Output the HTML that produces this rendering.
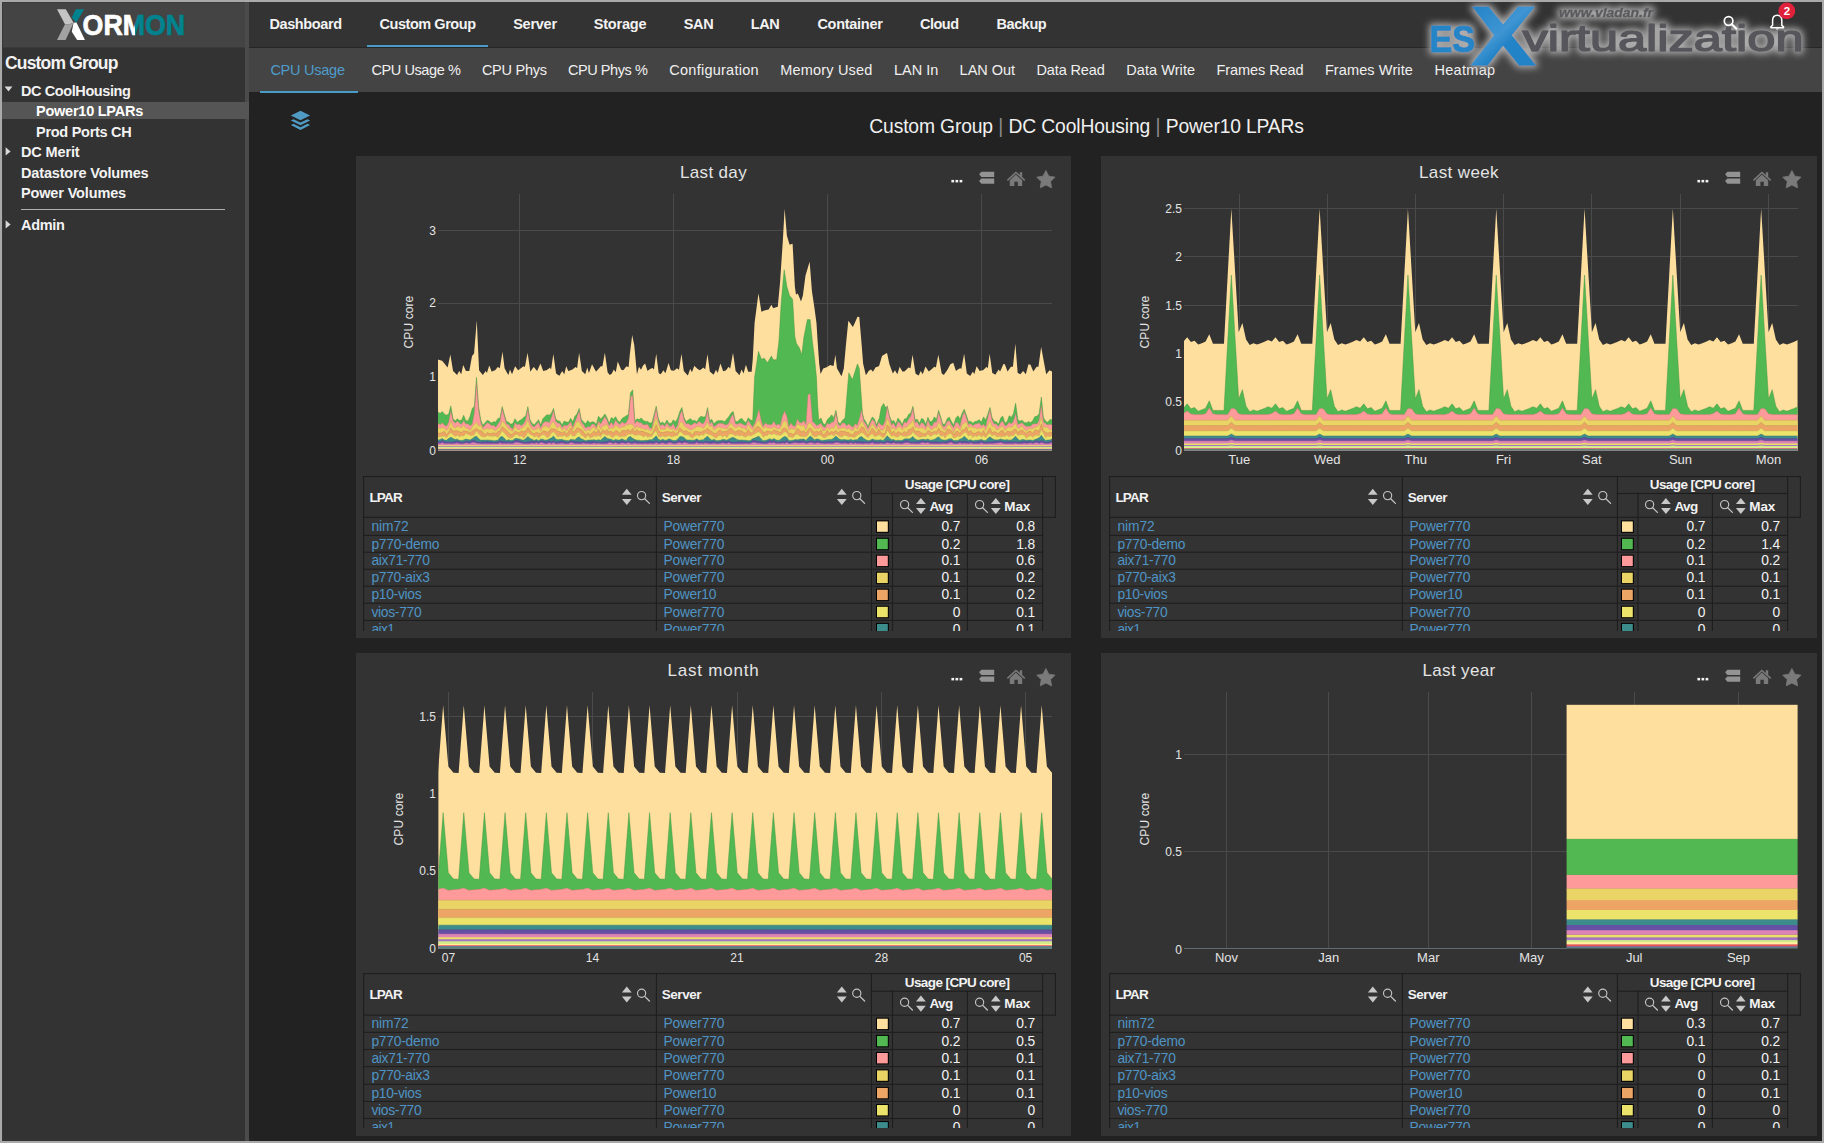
<!DOCTYPE html>
<html><head><meta charset="utf-8"><title>XorMon</title>
<style>
html,body{margin:0;padding:0;background:#222;}
body{width:1824px;height:1143px;position:relative;overflow:hidden;font-family:"Liberation Sans",sans-serif;}
.t{position:absolute;white-space:nowrap;margin:0;padding:0;}
.b{position:absolute;}
svg{position:absolute;left:0;top:0;overflow:visible;}
</style></head><body>
<div class="b" style="left:0px;top:0px;width:1824px;height:1143px;background:#a9a9a9;"></div>
<div class="b" style="left:2px;top:2px;width:1820px;height:1139px;background:#222;"></div>
<div class="b" style="left:2px;top:2px;width:243px;height:1139px;background:#333;"></div>
<div class="b" style="left:2px;top:2px;width:243px;height:45px;background:#444;"></div>
<div class="b" style="left:2px;top:47px;width:243px;height:1px;background:#3a3a3a;"></div>
<div class="b" style="left:2px;top:2px;width:1px;height:1139px;background:#383838;"></div>
<div class="b" style="left:2px;top:2px;width:243px;height:1px;background:#3c3c3c;"></div>
<div class="b" style="left:245px;top:2px;width:4px;height:1139px;background:#4b4b4b;"></div>
<div class="b" style="left:249px;top:2px;width:1573px;height:45px;background:#333;"></div>
<div class="b" style="left:249px;top:47px;width:1573px;height:1px;background:#262626;"></div>
<div class="b" style="left:249px;top:48px;width:1573px;height:44.4px;background:#444;"></div>
<div class="b" style="left:2px;top:102px;width:247px;height:17px;background:#555;"></div>
<div class="b" style="left:21px;top:209px;width:204px;height:1px;background:#b0b0b0;"></div>
<span class="t" style="left:5.00px;top:52.74px;font-size:17.5px;line-height:21px;color:#f2f2f2;font-weight:bold;letter-spacing:-0.833px;">Custom Group</span>
<span class="t" style="left:21.00px;top:83.18px;font-size:14.5px;line-height:17px;color:#f2f2f2;font-weight:bold;letter-spacing:-0.406px;">DC CoolHousing</span>
<span class="t" style="left:36.00px;top:103.08px;font-size:14.5px;line-height:17px;color:#fff;font-weight:bold;letter-spacing:-0.241px;">Power10 LPARs</span>
<span class="t" style="left:36.00px;top:123.78px;font-size:14.5px;line-height:17px;color:#f2f2f2;font-weight:bold;letter-spacing:-0.277px;">Prod Ports CH</span>
<span class="t" style="left:21.00px;top:143.98px;font-size:14.5px;line-height:17px;color:#f2f2f2;font-weight:bold;letter-spacing:-0.139px;">DC Merit</span>
<span class="t" style="left:21.00px;top:164.98px;font-size:14.5px;line-height:17px;color:#f2f2f2;font-weight:bold;letter-spacing:-0.163px;">Datastore Volumes</span>
<span class="t" style="left:21.00px;top:184.98px;font-size:14.5px;line-height:17px;color:#f2f2f2;font-weight:bold;letter-spacing:-0.146px;">Power Volumes</span>
<span class="t" style="left:21.00px;top:216.98px;font-size:14.5px;line-height:17px;color:#f2f2f2;font-weight:bold;letter-spacing:-0.321px;">Admin</span>
<svg width="1824" height="1143"><g fill="#d8d8d8"><path d="M4.6 86.4 L12.4 86.4 L8.5 91.6 Z"/><path d="M5.6 147.2 L10.6 151.4 L5.6 155.6 Z"/><path d="M5.6 220.2 L10.6 224.4 L5.6 228.6 Z"/></g></svg>
<span class="t" style="left:269.40px;top:16.18px;font-size:14.5px;line-height:17px;color:#f2f2f2;font-weight:bold;letter-spacing:-0.393px;">Dashboard</span>
<span class="t" style="left:379.50px;top:16.18px;font-size:14.5px;line-height:17px;color:#f2f2f2;font-weight:bold;letter-spacing:-0.450px;">Custom Group</span>
<span class="t" style="left:513.20px;top:16.18px;font-size:14.5px;line-height:17px;color:#f2f2f2;font-weight:bold;letter-spacing:-0.258px;">Server</span>
<span class="t" style="left:593.80px;top:16.18px;font-size:14.5px;line-height:17px;color:#f2f2f2;font-weight:bold;letter-spacing:-0.213px;">Storage</span>
<span class="t" style="left:683.80px;top:16.18px;font-size:14.5px;line-height:17px;color:#f2f2f2;font-weight:bold;letter-spacing:-0.372px;">SAN</span>
<span class="t" style="left:750.80px;top:16.18px;font-size:14.5px;line-height:17px;color:#f2f2f2;font-weight:bold;letter-spacing:-0.400px;">LAN</span>
<span class="t" style="left:817.40px;top:16.18px;font-size:14.5px;line-height:17px;color:#f2f2f2;font-weight:bold;letter-spacing:-0.275px;">Container</span>
<span class="t" style="left:920.10px;top:16.18px;font-size:14.5px;line-height:17px;color:#f2f2f2;font-weight:bold;letter-spacing:-0.534px;">Cloud</span>
<span class="t" style="left:996.50px;top:16.18px;font-size:14.5px;line-height:17px;color:#f2f2f2;font-weight:bold;letter-spacing:-0.447px;">Backup</span>
<div class="b" style="left:367px;top:45px;width:121px;height:2px;background:#4b9bc8;"></div>
<span class="t" style="left:270.40px;top:62.18px;font-size:14.5px;line-height:17px;color:#4f9ccb;letter-spacing:-0.251px;">CPU Usage</span>
<span class="t" style="left:371.40px;top:62.18px;font-size:14.5px;line-height:17px;color:#f0f0f0;letter-spacing:-0.398px;">CPU Usage %</span>
<span class="t" style="left:481.90px;top:62.18px;font-size:14.5px;line-height:17px;color:#f0f0f0;letter-spacing:-0.248px;">CPU Phys</span>
<span class="t" style="left:567.90px;top:62.18px;font-size:14.5px;line-height:17px;color:#f0f0f0;letter-spacing:-0.420px;">CPU Phys %</span>
<span class="t" style="left:669.30px;top:62.18px;font-size:14.5px;line-height:17px;color:#f0f0f0;letter-spacing:0.250px;">Configuration</span>
<span class="t" style="left:780.20px;top:62.18px;font-size:14.5px;line-height:17px;color:#f0f0f0;letter-spacing:0.187px;">Memory Used</span>
<span class="t" style="left:894.00px;top:62.18px;font-size:14.5px;line-height:17px;color:#f0f0f0;letter-spacing:-0.022px;">LAN In</span>
<span class="t" style="left:959.60px;top:62.18px;font-size:14.5px;line-height:17px;color:#f0f0f0;letter-spacing:-0.015px;">LAN Out</span>
<span class="t" style="left:1036.50px;top:62.18px;font-size:14.5px;line-height:17px;color:#f0f0f0;letter-spacing:-0.136px;">Data Read</span>
<span class="t" style="left:1126.30px;top:62.18px;font-size:14.5px;line-height:17px;color:#f0f0f0;letter-spacing:0.058px;">Data Write</span>
<span class="t" style="left:1216.50px;top:62.18px;font-size:14.5px;line-height:17px;color:#f0f0f0;letter-spacing:-0.076px;">Frames Read</span>
<span class="t" style="left:1324.90px;top:62.18px;font-size:14.5px;line-height:17px;color:#f0f0f0;letter-spacing:0.113px;">Frames Write</span>
<span class="t" style="left:1434.40px;top:62.18px;font-size:14.5px;line-height:17px;color:#f0f0f0;letter-spacing:0.309px;">Heatmap</span>
<div class="b" style="left:260px;top:91px;width:98px;height:2px;background:#4b9bc8;"></div>
<span class="t" style="left:869.30px;top:114.61px;font-size:19.3px;line-height:23px;color:#f0f0f0;letter-spacing:-0.147px;">Custom Group</span>
<span class="t" style="left:993.04px;top:114.61px;font-size:19.3px;line-height:23px;color:#888;letter-spacing:-0.075px;"> </span>
<span class="t" style="left:998.32px;top:114.61px;font-size:19.3px;line-height:23px;color:#8a8a8a;letter-spacing:-0.070px;">|</span>
<span class="t" style="left:1003.27px;top:114.61px;font-size:19.3px;line-height:23px;color:#888;letter-spacing:-0.075px;"> </span>
<span class="t" style="left:1008.55px;top:114.61px;font-size:19.3px;line-height:23px;color:#f0f0f0;letter-spacing:-0.144px;">DC CoolHousing</span>
<span class="t" style="left:1150.28px;top:114.61px;font-size:19.3px;line-height:23px;color:#888;letter-spacing:-0.075px;"> </span>
<span class="t" style="left:1155.56px;top:114.61px;font-size:19.3px;line-height:23px;color:#8a8a8a;letter-spacing:-0.070px;">|</span>
<span class="t" style="left:1160.51px;top:114.61px;font-size:19.3px;line-height:23px;color:#888;letter-spacing:-0.075px;"> </span>
<span class="t" style="left:1165.79px;top:114.61px;font-size:19.3px;line-height:23px;color:#f0f0f0;letter-spacing:-0.152px;">Power10 LPARs</span>
<svg width="1824" height="1143"><polygon fill="#c4c4c4" points="56.99,9.24 65.79,9.24 73.60,22.72 69.33,24.37 64.97,24.20"/><polygon fill="#a2a2a2" points="64.97,24.20 69.33,24.37 73.60,22.72 65.62,39.99 56.99,39.99"/><polygon fill="#00838f" points="75.90,9.24 84.13,9.24 76.15,22.72 71.79,17.62"/><polygon fill="#ffffff" points="73.60,22.72 76.48,22.56 84.95,39.99 77.14,39.99 71.79,31.77"/><defs><clipPath id="cw"><polygon points="80,0 134.2,0 135.6,46 80,46"/></clipPath><clipPath id="ct"><polygon points="134.2,0 190,0 190,46 135.6,46"/></clipPath></defs><text x="82.6" y="35.2" font-family="Liberation Sans, sans-serif" font-weight="bold" font-size="30" textLength="102.6" lengthAdjust="spacingAndGlyphs" fill="#ffffff" stroke="#ffffff" stroke-width="0.7" clip-path="url(#cw)">ORMON</text><text x="82.6" y="35.2" font-family="Liberation Sans, sans-serif" font-weight="bold" font-size="30" textLength="102.6" lengthAdjust="spacingAndGlyphs" fill="#00838f" stroke="#00838f" stroke-width="0.7" clip-path="url(#ct)">ORMON</text></svg>
<svg width="1824" height="1143"><g fill="#509bc4"><polygon points="300.48,110.85 310.10,115.58 300.48,120.30 290.85,115.58"/><polygon points="290.85,120.48 293.48,119.18 300.48,122.58 307.48,119.18 310.10,120.48 300.48,125.20"/><polygon points="290.85,125.03 293.48,123.73 300.48,127.13 307.48,123.73 310.10,125.03 300.48,129.93"/></g></svg>
<svg width="1824" height="1143" style="z-index:5"><circle cx="1728.6" cy="21" r="4.3" fill="none" stroke="#fff" stroke-width="1.7"/><path d="M1731.8 24.2 L1736.4 28.8" stroke="#fff" stroke-width="2" stroke-linecap="round"/><path d="M1777.2 15.2 c-3.4 0 -4.6 2.8 -4.6 5.4 v4.6 l-1.7 1.7 v0.9 h12.6 v-0.9 l-1.7 -1.7 v-4.6 c0 -2.6 -1.2 -5.4 -4.6 -5.4 z" fill="none" stroke="#fff" stroke-width="1.5" stroke-linejoin="round"/><path d="M1775.6 28.6 a1.7 1.7 0 0 0 3.2 0 z" fill="#fff"/><circle cx="1786.8" cy="10.9" r="8.4" fill="#e0213c"/></svg>
<span class="t" style="left:1783.70px;top:4.02px;font-size:11.5px;line-height:14px;color:#fff;font-weight:bold;z-index:6;">2</span>
<div class="b" style="left:356px;top:156px;width:715px;height:482px;background:#333;"></div>
<div class="b" style="left:1101px;top:156px;width:716px;height:482px;background:#333;"></div>
<div class="b" style="left:356px;top:653px;width:715px;height:483px;background:#333;"></div>
<div class="b" style="left:1101px;top:653px;width:716px;height:483px;background:#333;"></div>
<svg width="1824" height="1143"><g stroke="#4a4a4a" stroke-width="1" shape-rendering="crispEdges"><line x1="519.7" y1="194" x2="519.7" y2="450.2"/><line x1="673.4" y1="194" x2="673.4" y2="450.2"/><line x1="827.5" y1="194" x2="827.5" y2="450.2"/><line x1="981.6" y1="194" x2="981.6" y2="450.2"/><line x1="438" y1="377.3" x2="1052" y2="377.3"/><line x1="438" y1="303.3" x2="1052" y2="303.3"/><line x1="438" y1="230.4" x2="1052" y2="230.4"/></g><polygon fill="#ffdf9e" points="438.00,450.3 438.00,359.49 440.14,360.18 442.20,360.84 442.28,360.94 444.42,363.60 446.56,366.26 447.62,367.58 448.70,362.39 450.34,354.52 450.84,357.55 452.98,370.55 453.05,370.96 455.11,373.01 457.11,375.00 457.25,374.74 459.15,370.96 459.39,371.36 461.18,374.33 461.53,372.72 463.22,364.90 463.67,365.90 465.81,370.70 465.93,370.96 467.95,370.96 469.32,370.94 470.09,366.72 472.03,356.11 472.23,355.85 474.06,353.42 474.37,349.66 476.51,323.57 476.77,320.40 478.65,361.01 479.08,370.29 480.79,372.41 482.87,375.00 482.93,374.92 485.07,371.73 485.59,370.96 486.94,372.98 487.21,372.12 489.25,365.57 489.34,365.79 491.48,371.12 491.69,371.63 493.62,370.86 495.08,370.28 495.76,369.43 497.79,366.91 497.90,366.98 499.82,368.26 500.04,366.93 502.18,353.94 502.53,351.81 504.32,366.27 504.57,368.27 506.46,371.63 508.36,375.00 508.60,374.22 509.99,369.61 510.74,371.35 512.02,374.32 512.88,372.11 515.02,366.55 515.14,366.24 517.16,368.98 518.12,370.28 519.30,369.41 521.44,367.81 523.55,366.24 523.57,366.25 524.90,366.91 525.71,362.69 527.61,352.76 527.85,354.39 529.99,369.30 530.33,371.63 532.13,369.12 533.71,366.92 534.27,367.57 536.41,370.13 537.10,370.95 538.55,367.79 540.49,363.54 540.69,364.07 542.83,369.93 543.20,370.94 544.97,370.61 546.59,370.28 547.11,369.87 549.25,368.17 549.98,367.59 551.07,369.60 551.39,367.44 553.37,354.11 553.53,355.22 555.67,370.67 556.08,373.62 557.80,374.68 559.47,375.68 559.94,374.87 562.08,371.14 562.19,370.97 564.22,374.33 566.25,366.25 566.36,366.48 568.29,370.96 568.50,370.89 570.64,370.18 572.35,369.61 572.78,369.27 574.92,367.57 575.74,366.91 577.06,368.22 577.10,368.25 579.13,352.76 579.20,353.20 581.34,367.57 581.84,370.93 583.48,372.59 585.23,374.33 585.62,373.05 587.27,367.60 587.76,369.22 588.89,372.97 589.90,370.15 592.01,364.22 592.03,364.24 594.17,368.15 596.08,371.63 596.31,371.37 598.45,368.94 600.59,366.50 600.82,366.24 602.45,366.24 602.73,364.69 604.87,352.86 604.89,352.75 607.01,368.03 607.60,372.29 609.15,374.36 609.64,375.00 611.29,373.91 611.67,373.66 613.43,370.15 613.70,369.62 615.57,372.09 615.74,372.29 617.71,361.84 617.77,361.52 619.85,366.48 621.16,369.61 621.99,369.88 623.19,370.28 624.13,369.17 626.26,366.62 626.58,366.24 627.87,367.10 628.40,366.96 628.62,366.88 629.77,354.64 630.54,348.45 632.21,335.04 632.68,337.38 634.25,345.24 634.82,351.36 636.01,364.14 636.96,374.26 638.99,366.84 639.10,366.98 641.03,369.80 641.24,369.35 643.06,365.48 643.38,365.16 645.10,363.45 645.52,364.73 647.54,370.89 647.66,370.81 649.80,369.35 650.53,368.86 651.94,368.20 652.56,367.91 653.92,369.51 654.08,368.41 656.22,353.73 658.36,370.52 658.67,372.92 660.49,374.13 660.70,374.27 662.63,371.38 663.41,370.22 664.77,372.29 665.45,373.32 666.91,368.51 668.57,363.04 669.05,364.54 670.88,370.21 671.19,370.29 673.33,370.82 673.59,370.89 675.47,369.39 676.98,368.18 677.61,368.68 679.02,369.77 679.75,364.96 681.46,353.73 681.89,356.93 683.76,370.86 684.03,371.20 686.17,373.69 687.83,375.62 688.31,374.30 690.28,368.87 690.45,369.22 691.90,372.23 692.59,370.41 694.35,365.75 694.72,366.14 696.86,368.37 697.33,368.86 699.00,369.69 700.04,370.21 701.14,369.34 703.28,367.63 703.44,367.51 705.20,369.53 705.42,368.04 707.51,354.01 707.56,354.40 709.70,370.71 709.81,371.55 711.84,373.23 713.61,374.68 713.98,373.94 716.05,369.81 716.12,369.93 717.68,372.92 718.26,370.89 720.39,363.46 720.40,363.47 722.54,369.55 723.11,371.16 724.68,370.84 725.82,370.62 726.82,369.22 728.53,366.83 728.95,367.35 730.16,368.86 731.09,363.57 733.01,352.63 733.23,354.18 735.37,369.34 735.59,370.89 737.51,373.08 739.39,375.21 739.65,374.57 741.69,369.54 741.79,369.76 743.46,373.58 743.93,371.89 745.90,364.80 746.07,365.30 748.21,371.79 750.35,371.79 751.62,371.79 752.49,362.25 752.76,359.27 754.58,322.99 754.63,322.61 756.77,306.29 758.45,293.51 758.91,296.33 761.05,309.46 761.41,311.65 763.18,310.92 764.14,310.52 765.32,310.22 767.46,309.69 767.55,309.67 768.69,309.38 769.60,307.87 771.42,304.84 771.74,305.44 773.24,308.25 773.88,308.03 776.02,307.28 776.65,307.06 777.79,306.66 778.16,302.70 778.93,294.41 780.07,282.13 780.30,278.69 781.21,265.08 782.44,246.68 782.80,241.29 784.16,217.06 784.58,209.57 784.62,208.86 786.72,233.57 786.90,235.65 788.86,242.16 789.63,244.71 791.00,244.18 792.59,243.66 793.14,254.08 794.86,286.67 795.28,289.61 796.00,294.63 796.45,294.35 797.41,293.75 797.82,293.50 799.41,297.46 799.55,297.81 801.01,301.43 801.69,299.31 802.83,295.74 803.83,288.26 803.96,287.29 805.56,275.34 805.97,273.97 807.38,269.29 808.11,266.86 809.65,261.74 810.11,267.64 810.25,269.45 811.93,291.23 812.39,294.29 814.53,308.51 814.66,309.38 816.48,322.99 816.67,326.00 817.62,341.16 818.76,357.40 818.81,358.11 819.21,363.81 820.58,374.05 820.95,373.28 823.09,368.84 823.31,368.38 825.23,367.74 826.72,367.25 827.37,366.82 829.51,365.39 830.14,364.98 831.64,365.48 833.55,366.11 833.78,364.68 835.37,354.77 835.92,359.46 836.96,368.35 838.06,370.29 840.20,374.03 841.52,376.31 842.34,373.45 843.79,368.39 844.48,360.83 844.93,355.90 846.07,343.39 846.52,338.91 846.62,337.91 848.34,320.76 848.76,321.31 848.80,321.37 850.90,324.30 852.44,326.45 852.89,327.08 853.04,326.76 855.18,321.96 857.32,317.16 857.45,316.87 859.27,316.90 859.46,319.12 861.54,343.39 861.60,344.15 862.45,355.05 863.14,363.86 863.74,366.35 865.87,375.19 868.01,371.90 868.83,370.65 870.15,369.99 871.10,369.52 872.29,371.00 872.92,371.78 874.43,369.28 875.65,367.25 876.57,366.94 878.71,366.23 879.07,366.10 880.85,359.96 881.34,358.27 882.03,355.90 882.99,355.33 883.62,354.96 885.13,354.07 887.03,352.95 887.27,354.09 889.31,363.85 889.41,364.12 891.55,369.95 891.58,370.03 892.89,373.59 893.69,372.26 894.92,370.21 895.83,371.72 897.36,374.26 897.97,372.31 899.67,366.83 900.10,367.58 902.24,371.32 902.38,371.56 904.38,371.56 904.42,371.56 906.52,369.47 908.49,367.51 908.66,367.56 910.52,368.18 910.80,366.33 912.56,354.68 912.94,357.09 915.08,370.67 915.54,373.59 917.22,374.69 918.66,375.62 919.36,373.99 920.69,370.90 921.50,372.23 922.73,374.27 923.64,371.68 925.44,366.56 925.78,367.06 927.92,370.22 928.83,371.56 930.06,370.49 932.20,368.63 934.26,366.83 934.33,366.86 935.89,367.49 936.47,364.44 938.33,354.66 938.61,356.22 940.75,368.18 941.72,373.59 942.89,374.37 943.75,374.94 945.03,373.17 947.15,370.20 947.17,370.17 949.31,366.33 950.54,364.12 951.45,363.67 953.25,362.77 953.59,363.79 955.73,370.19 955.96,370.88 957.87,369.62 960.01,368.20 960.03,368.18 961.39,368.85 962.15,364.61 964.10,353.72 964.29,355.08 966.43,370.77 966.81,373.56 968.56,374.78 970.21,375.89 970.70,375.11 972.84,371.69 972.92,371.57 974.28,374.25 974.98,371.79 976.58,366.16 977.12,366.97 979.26,370.22 979.70,370.89 981.40,370.55 983.09,370.21 983.54,369.77 985.68,367.63 986.48,366.83 987.82,368.16 987.84,368.18 989.60,353.74 989.96,356.23 992.10,371.38 992.32,372.92 994.24,374.05 995.30,374.67 996.38,373.04 998.52,369.80 998.69,369.54 1000.05,371.56 1000.66,370.22 1002.79,365.55 1003.44,364.12 1004.80,364.13 1004.93,364.49 1007.07,370.36 1007.51,371.56 1009.21,369.19 1010.90,366.83 1011.35,366.83 1012.94,366.79 1013.49,361.61 1015.38,343.87 1015.63,347.02 1017.68,372.88 1017.77,372.96 1019.91,374.03 1020.40,374.26 1022.05,372.21 1023.11,370.89 1024.19,372.24 1025.82,374.27 1026.33,372.37 1028.47,364.37 1028.53,364.14 1030.57,364.80 1030.61,364.90 1032.75,370.24 1033.28,371.56 1034.89,369.32 1036.67,366.83 1037.02,366.83 1038.44,366.81 1039.16,361.53 1041.15,346.94 1041.30,347.76 1043.44,359.41 1045.58,371.06 1046.17,374.27 1047.72,372.41 1049.56,370.21 1049.86,370.38 1052.00,371.56 1052.00,450.3"/><polygon fill="#52b852" points="438.00,450.3 438.00,412.02 440.14,413.57 442.20,411.59 442.28,411.51 444.42,414.22 446.56,415.14 447.62,414.59 448.70,414.01 450.34,407.77 450.84,405.90 452.98,418.46 453.05,418.55 455.11,421.12 457.11,418.90 457.25,418.74 459.15,420.25 459.39,420.44 461.18,420.32 461.53,420.30 463.22,416.29 463.67,415.22 465.81,420.73 465.93,420.75 467.95,420.91 469.32,417.98 470.09,416.32 472.03,409.31 472.23,408.59 474.06,406.58 474.37,406.23 476.51,377.30 476.77,380.90 478.65,406.92 479.08,409.57 480.79,420.10 482.87,425.15 482.93,425.28 485.07,422.75 485.59,422.17 486.94,420.66 487.21,420.36 489.25,421.31 489.34,421.35 491.48,422.97 491.69,422.85 493.62,421.72 495.08,421.89 495.76,421.97 497.79,418.65 497.90,418.47 499.82,417.94 500.04,417.88 502.18,406.60 502.53,407.86 504.32,414.33 504.57,415.15 506.46,421.39 508.36,422.09 508.60,422.17 509.99,423.55 510.74,424.30 512.02,423.80 512.88,423.45 515.02,418.69 515.14,418.90 517.16,422.37 518.12,421.66 519.30,420.79 521.44,419.44 523.55,417.48 523.57,417.47 524.90,416.62 525.71,416.10 527.61,407.68 527.85,406.61 529.99,419.66 530.33,420.27 532.13,423.40 533.71,424.40 534.27,424.76 536.41,422.21 537.10,421.39 538.55,419.65 540.49,424.52 540.69,425.02 542.83,418.85 543.20,418.43 544.97,416.45 546.59,415.12 547.11,414.69 549.25,415.26 549.98,414.58 551.07,413.57 551.39,413.27 553.37,408.76 553.53,408.42 555.67,418.59 556.08,419.05 557.80,421.00 559.47,421.17 559.94,421.21 562.08,424.98 562.19,424.79 564.22,421.08 566.25,422.07 566.36,422.12 568.29,422.20 568.50,422.21 570.64,418.30 572.35,421.20 572.78,421.94 574.92,416.37 575.74,415.34 577.06,413.67 577.10,413.57 579.13,408.61 579.20,408.45 581.34,419.47 581.84,420.03 583.48,421.88 585.23,423.49 585.62,423.84 587.27,421.35 587.76,420.62 588.89,421.83 589.90,422.91 592.01,421.81 592.03,421.80 594.17,422.11 596.08,424.31 596.31,424.57 598.45,416.16 600.59,418.82 600.82,418.65 602.45,417.34 602.73,417.12 604.87,413.99 604.89,414.02 607.01,417.75 607.60,419.35 609.15,423.57 609.64,422.17 611.29,417.48 611.67,417.75 613.43,419.01 613.70,418.72 615.57,416.67 615.74,416.99 617.71,420.62 617.77,420.67 619.85,422.36 621.16,420.00 621.99,418.51 623.19,417.76 624.13,417.17 626.26,415.78 626.58,415.58 627.87,414.77 628.40,414.44 628.62,412.25 629.77,400.63 630.54,392.85 632.21,390.47 632.68,389.80 634.25,412.62 634.82,420.93 636.01,419.74 636.96,418.76 638.99,419.52 639.10,419.56 641.03,418.23 641.24,418.08 643.06,420.05 643.38,420.40 645.10,421.21 645.52,421.41 647.54,421.40 647.66,421.40 649.80,423.11 650.53,422.98 651.94,422.73 652.56,420.36 653.92,415.16 654.08,414.55 656.22,406.15 658.36,418.52 658.67,419.25 660.49,423.50 660.70,423.35 662.63,421.89 663.41,422.67 664.77,424.04 665.45,422.75 666.91,419.97 668.57,422.64 669.05,423.41 670.88,423.46 671.19,423.47 673.33,419.84 673.59,420.11 675.47,422.07 676.98,419.41 677.61,418.30 679.02,413.89 679.75,411.60 681.46,408.32 681.89,407.50 683.76,416.32 684.03,417.59 686.17,421.76 687.83,420.31 688.31,419.89 690.28,418.72 690.45,418.62 691.90,420.06 692.59,420.74 694.35,420.48 694.72,420.42 696.86,421.80 697.33,420.96 699.00,417.94 700.04,417.11 701.14,416.23 703.28,417.00 703.44,416.98 705.20,416.83 705.42,416.82 707.51,407.77 707.56,407.55 709.70,420.89 709.81,420.81 711.84,419.36 713.61,423.30 713.98,424.12 716.05,421.50 716.12,421.42 717.68,420.90 718.26,420.71 720.39,420.58 720.40,420.58 722.54,420.82 723.11,421.04 724.68,421.63 725.82,420.19 726.82,418.93 728.53,416.94 728.95,416.45 730.16,414.55 731.09,413.08 733.01,411.67 733.23,411.51 735.37,421.22 735.59,421.28 737.51,421.67 739.39,419.65 739.65,419.37 741.69,418.44 741.79,418.39 743.46,420.42 743.93,420.99 745.90,422.67 746.07,422.81 748.21,417.80 750.35,419.82 751.62,420.35 752.49,420.71 752.76,419.40 754.58,377.45 754.63,377.11 756.77,362.68 758.45,351.37 758.91,352.60 761.05,358.35 761.41,359.30 763.18,358.57 764.14,358.17 765.32,359.74 767.46,362.59 767.55,362.71 768.69,360.71 769.60,359.10 771.42,355.90 771.74,356.58 773.24,359.76 773.88,359.76 776.02,359.76 776.65,359.76 777.79,350.48 778.16,347.45 778.93,341.15 780.07,321.83 780.30,317.94 781.21,302.53 782.44,288.85 782.80,284.85 784.16,269.73 784.58,272.26 784.62,272.51 786.72,285.60 786.90,286.71 788.86,293.22 789.63,295.77 791.00,297.35 792.59,299.25 793.14,308.30 794.86,336.59 795.28,338.40 796.00,341.48 796.45,343.40 797.41,344.89 797.82,345.52 799.41,347.95 799.55,348.37 801.01,352.74 801.69,354.76 802.83,345.66 803.83,337.69 803.96,336.65 805.56,328.66 805.97,326.62 807.38,319.59 808.11,319.59 809.65,319.59 810.11,319.60 810.25,320.93 811.93,336.84 812.39,341.19 814.53,358.26 814.66,359.30 816.48,377.44 816.67,381.97 817.62,404.70 818.76,420.35 818.81,420.28 819.21,419.83 820.58,418.31 820.95,417.91 823.09,423.42 823.31,423.56 825.23,424.78 826.72,421.06 827.37,419.44 829.51,417.52 830.14,416.73 831.64,414.85 833.55,417.54 833.78,417.86 835.37,412.28 835.92,410.35 836.96,416.04 838.06,422.08 840.20,423.90 841.52,421.76 842.34,420.42 843.79,419.09 844.48,418.45 844.93,419.43 846.07,405.63 846.52,400.18 846.62,398.98 848.34,378.40 848.76,373.38 848.80,372.92 850.90,376.85 852.44,379.73 852.89,378.30 853.04,377.82 855.18,371.03 857.32,364.25 857.45,363.85 859.27,368.42 859.46,371.07 861.54,400.11 861.60,401.15 862.45,413.58 863.14,415.59 863.74,418.73 865.87,421.84 868.01,426.41 868.83,424.42 870.15,421.19 871.10,419.33 872.29,417.01 872.92,417.57 874.43,418.94 875.65,422.44 876.57,425.08 878.71,419.34 879.07,419.42 880.85,409.66 881.34,406.97 882.03,405.93 882.99,404.49 883.62,403.56 885.13,407.07 887.03,407.41 887.27,405.84 889.31,415.20 889.41,415.66 891.55,420.95 891.58,421.02 892.89,421.19 893.69,420.36 894.92,422.56 895.83,424.16 897.36,419.77 897.97,418.05 899.67,420.14 900.10,420.66 902.24,424.56 902.38,424.21 904.38,418.97 904.42,418.95 906.52,418.50 908.49,414.63 908.66,414.30 910.52,413.26 910.80,413.10 912.56,407.46 912.94,406.24 915.08,419.86 915.54,419.72 917.22,419.22 918.66,422.01 919.36,423.36 920.69,420.39 921.50,418.58 922.73,419.10 923.64,419.50 925.44,423.79 925.78,424.58 927.92,417.28 928.83,419.22 930.06,421.82 932.20,421.32 934.26,417.03 934.33,416.88 935.89,418.59 936.47,419.23 938.33,411.45 938.61,410.28 940.75,417.13 941.72,420.39 942.89,424.33 943.75,424.26 945.03,424.14 947.15,418.79 947.17,418.74 949.31,417.12 950.54,419.67 951.45,421.55 953.25,424.73 953.59,425.32 955.73,418.23 955.96,417.96 957.87,415.71 960.01,418.98 960.03,418.92 961.39,415.22 962.15,413.16 964.10,409.60 964.29,409.28 966.43,415.44 966.81,416.56 968.56,421.71 970.21,421.42 970.70,421.32 972.84,423.21 972.92,423.16 974.28,422.09 974.98,421.54 976.58,421.21 977.12,421.10 979.26,419.73 979.70,420.25 981.40,422.29 983.09,418.03 983.54,416.89 985.68,419.89 986.48,417.75 987.82,414.17 987.84,414.11 989.60,408.57 989.96,407.46 992.10,417.63 992.32,418.01 994.24,421.33 995.30,421.58 996.38,421.84 998.52,424.24 998.69,423.75 1000.05,419.78 1000.66,418.01 1002.79,416.04 1003.44,418.15 1004.80,422.62 1004.93,423.04 1007.07,421.79 1007.51,420.55 1009.21,415.70 1010.90,417.03 1011.35,417.39 1012.94,414.57 1013.49,413.59 1015.38,404.31 1015.63,403.08 1017.68,418.48 1017.77,419.16 1019.91,421.31 1020.40,421.05 1022.05,420.15 1023.11,421.26 1024.19,422.40 1025.82,422.83 1026.33,422.96 1028.47,421.39 1028.53,421.43 1030.57,422.78 1030.61,422.80 1032.75,420.50 1033.28,419.53 1034.89,416.62 1036.67,416.30 1037.02,416.24 1038.44,414.56 1039.16,413.70 1041.15,398.17 1041.30,397.00 1043.44,417.43 1045.58,421.02 1046.17,421.38 1047.72,422.32 1049.56,419.96 1049.86,419.57 1052.00,419.85 1052.00,450.3"/><polygon fill="#ff9a9a" points="438.00,450.3 438.00,423.26 440.14,424.76 442.20,422.92 442.28,422.85 444.42,425.36 446.56,426.14 447.62,424.22 448.70,422.25 450.34,413.76 450.84,411.21 452.98,420.77 453.05,420.85 455.11,423.35 457.11,421.46 457.25,421.32 459.15,422.71 459.39,422.88 461.18,424.23 461.53,424.50 463.22,421.49 463.67,420.68 465.81,424.02 465.93,424.02 467.95,423.83 469.32,425.11 470.09,425.84 472.03,424.54 472.23,424.41 474.06,414.70 474.37,413.05 476.51,383.25 476.77,386.58 478.65,410.62 479.08,413.04 480.79,422.63 482.87,427.62 482.93,427.75 485.07,425.06 485.59,424.52 486.94,423.13 487.21,422.85 489.25,423.74 489.34,423.77 491.48,425.86 491.69,425.79 493.62,425.15 495.08,426.64 495.76,427.34 497.79,424.20 497.90,424.02 499.82,421.61 500.04,421.34 502.18,409.01 502.53,410.23 504.32,416.53 504.57,417.39 506.46,423.90 508.36,424.38 508.60,424.44 509.99,426.54 510.74,427.68 512.02,428.57 512.88,429.17 515.02,422.86 515.14,422.96 517.16,424.69 518.12,424.47 519.30,424.20 521.44,425.63 523.55,423.86 523.57,423.84 524.90,421.50 525.71,420.06 527.61,410.41 527.85,409.19 529.99,421.97 530.33,422.61 532.13,425.90 533.71,426.68 534.27,426.95 536.41,424.42 537.10,423.74 538.55,422.32 540.49,427.55 540.69,428.08 542.83,423.51 543.20,423.21 544.97,421.76 546.59,421.75 547.11,421.74 549.25,422.82 549.98,421.08 551.07,418.48 551.39,417.71 553.37,411.13 553.53,410.63 555.67,421.08 556.08,421.50 557.80,423.28 559.47,423.49 559.94,423.55 562.08,427.60 562.19,427.49 564.22,425.16 566.25,425.82 566.36,425.85 568.29,424.86 568.50,424.75 570.64,421.58 572.35,426.19 572.78,427.35 574.92,421.96 575.74,420.04 577.06,416.94 577.10,416.83 579.13,411.02 579.20,410.83 581.34,422.08 581.84,422.61 583.48,424.38 585.23,427.46 585.62,428.14 587.27,427.03 587.76,426.71 588.89,426.87 589.90,427.00 592.01,424.14 592.03,424.12 594.17,424.35 596.08,427.19 596.31,427.53 598.45,421.20 600.59,424.02 600.82,423.65 602.45,420.97 602.73,420.50 604.87,416.61 604.89,416.64 607.01,420.34 607.60,421.87 609.15,425.88 609.64,425.03 611.29,422.17 611.67,422.77 613.43,425.52 613.70,424.83 615.57,420.04 615.74,420.28 617.71,423.05 617.77,423.10 619.85,424.87 621.16,422.94 621.99,421.72 623.19,422.73 624.13,423.52 626.26,422.78 626.58,422.13 627.87,419.44 628.40,418.34 628.62,416.17 629.77,404.69 630.54,397.01 632.21,395.57 632.68,395.17 634.25,416.15 634.82,423.79 636.01,422.28 636.96,421.05 638.99,422.38 639.10,422.45 641.03,422.68 641.24,422.71 643.06,424.65 643.38,424.99 645.10,424.76 645.52,424.71 647.54,424.39 647.66,424.38 649.80,428.13 650.53,428.15 651.94,428.16 652.56,425.12 653.92,418.46 654.08,417.67 656.22,408.42 658.36,420.88 658.67,421.63 660.49,426.01 660.70,425.86 662.63,424.35 663.41,425.12 664.77,426.50 665.45,425.34 666.91,422.84 668.57,425.43 669.05,426.17 670.88,426.48 671.19,426.53 673.33,423.56 673.59,424.17 675.47,428.63 676.98,426.33 677.61,425.37 679.02,418.92 679.75,415.59 681.46,411.38 681.89,410.33 683.76,418.84 684.03,420.06 686.17,423.96 687.83,423.80 688.31,423.75 690.28,425.04 690.45,425.14 691.90,424.72 692.59,424.52 694.35,422.98 694.72,422.66 696.86,423.99 697.33,423.42 699.00,421.34 700.04,422.28 701.14,423.27 703.28,423.91 703.44,423.65 705.20,420.73 705.42,420.37 707.51,410.40 707.56,410.16 709.70,423.80 709.81,423.70 711.84,421.88 713.61,426.12 713.98,427.00 716.05,425.27 716.12,425.21 717.68,424.03 718.26,423.60 720.39,423.26 720.40,423.26 722.54,423.40 723.11,423.78 724.68,424.82 725.82,424.87 726.82,424.90 728.53,423.15 728.95,422.72 730.16,419.54 731.09,417.10 733.01,414.51 733.23,414.21 735.37,423.65 735.59,423.73 737.51,424.39 739.39,423.24 739.65,423.08 741.69,423.64 741.79,423.67 743.46,424.70 743.93,424.98 745.90,425.41 746.07,425.44 748.21,420.56 750.35,423.66 751.62,425.81 752.49,427.28 752.76,426.83 754.58,423.78 754.63,423.69 756.77,417.37 758.45,411.23 758.91,409.58 761.05,420.14 761.41,421.20 763.18,426.39 764.14,424.84 765.32,422.91 767.46,424.47 767.55,424.48 768.69,424.66 769.60,424.79 771.42,424.85 771.74,424.86 773.24,422.39 773.88,421.33 776.02,425.57 776.65,425.09 777.79,424.23 778.16,423.95 778.93,424.47 780.07,425.24 780.30,425.39 781.21,421.55 782.44,416.36 782.80,415.48 784.16,412.16 784.58,411.14 784.62,411.23 786.72,416.21 786.90,417.10 788.86,426.73 789.63,425.42 791.00,423.11 792.59,425.34 793.14,426.11 794.86,426.11 795.28,426.09 796.00,423.75 796.45,422.28 797.41,419.16 797.82,419.80 799.41,422.39 799.55,422.61 801.01,422.91 801.69,423.05 802.83,421.79 803.83,420.69 803.96,420.93 805.56,423.95 805.97,424.73 807.38,404.87 808.11,394.56 809.65,394.10 810.11,393.96 810.25,393.92 811.93,415.61 812.39,421.56 814.53,423.21 814.66,423.37 816.48,425.57 816.67,425.80 817.62,425.26 818.76,424.63 818.81,424.60 819.21,424.35 820.58,423.51 820.95,423.29 823.09,426.80 823.31,426.87 825.23,427.49 826.72,424.47 827.37,423.16 829.51,424.44 830.14,423.81 831.64,422.31 833.55,421.99 833.78,421.95 835.37,415.18 835.92,412.83 836.96,418.39 838.06,424.30 840.20,426.12 841.52,424.19 842.34,422.99 843.79,423.05 844.48,423.08 844.93,423.67 846.07,425.18 846.52,425.77 846.62,425.91 848.34,424.30 848.76,423.90 848.80,423.95 850.90,426.11 852.44,427.04 852.89,427.31 853.04,427.40 855.18,423.73 857.32,425.44 857.45,425.03 859.27,419.26 859.46,418.65 861.54,410.46 861.60,410.27 862.45,414.67 863.14,418.25 863.74,421.34 865.87,424.09 868.01,428.79 868.83,426.82 870.15,423.63 871.10,421.79 872.29,419.50 872.92,420.08 874.43,421.48 875.65,424.81 876.57,427.32 878.71,422.37 879.07,422.76 880.85,424.70 881.34,424.91 882.03,425.21 882.99,425.62 883.62,424.27 885.13,421.03 887.03,408.50 887.27,406.94 889.31,416.30 889.41,416.75 891.55,425.32 891.58,425.29 892.89,423.87 893.69,423.01 894.92,425.66 895.83,427.61 897.36,423.21 897.97,421.48 899.67,422.85 900.10,423.19 902.24,427.04 902.38,426.72 904.38,421.84 904.42,421.85 906.52,423.16 908.49,419.45 908.66,419.12 910.52,416.58 910.80,416.19 912.56,409.84 912.94,408.47 915.08,422.65 915.54,422.45 917.22,421.70 918.66,424.55 919.36,425.93 920.69,423.82 921.50,422.53 922.73,423.22 923.64,423.73 925.44,426.70 925.78,427.25 927.92,420.06 928.83,422.36 930.06,425.47 932.20,426.14 934.26,422.06 934.33,421.92 935.89,422.26 936.47,422.39 938.33,413.92 938.61,412.64 940.75,419.43 941.72,422.71 942.89,426.67 943.75,426.58 945.03,426.44 947.15,421.47 947.17,421.43 949.31,420.78 950.54,423.08 951.45,424.78 953.25,427.33 953.59,427.81 955.73,422.37 955.96,422.40 957.87,422.73 960.01,426.56 960.03,426.47 961.39,420.35 962.15,416.94 964.10,412.20 964.29,411.77 966.43,418.30 966.81,419.39 968.56,424.40 970.21,423.90 970.70,423.75 972.84,425.85 972.92,425.80 974.28,424.71 974.98,424.15 976.58,423.90 977.12,423.82 979.26,422.97 979.70,423.59 981.40,425.97 983.09,424.52 983.54,424.13 985.68,427.00 986.48,423.54 987.82,417.74 987.84,417.67 989.60,411.25 989.96,409.95 992.10,420.26 992.32,420.64 994.24,423.99 995.30,424.09 996.38,424.20 998.52,426.49 998.69,426.18 1000.05,423.73 1000.66,422.64 1002.79,421.01 1003.44,422.49 1004.80,425.61 1004.93,425.91 1007.07,425.15 1007.51,424.57 1009.21,422.32 1010.90,423.73 1011.35,424.11 1012.94,421.91 1013.49,421.14 1015.38,414.42 1015.63,413.53 1017.68,423.94 1017.77,424.40 1019.91,423.69 1020.40,423.47 1022.05,422.73 1023.11,423.86 1024.19,425.02 1025.82,426.17 1026.33,426.53 1028.47,426.25 1028.53,426.25 1030.57,426.27 1030.61,426.26 1032.75,424.06 1033.28,424.00 1034.89,423.81 1036.67,423.90 1037.02,423.91 1038.44,421.49 1039.16,420.26 1041.15,406.64 1041.30,405.61 1043.44,422.04 1045.58,423.61 1046.17,423.98 1047.72,424.94 1049.56,424.45 1049.86,424.37 1052.00,425.02 1052.00,450.3"/><polygon fill="#ead465" points="438.00,450.3 438.00,428.10 440.14,428.18 442.20,427.43 442.28,427.40 444.42,428.29 446.56,430.69 447.62,429.25 448.70,427.77 450.34,422.62 450.84,421.07 452.98,426.51 453.05,426.57 455.11,428.34 457.11,426.41 457.25,426.27 459.15,426.84 459.39,426.92 461.18,427.84 461.53,428.02 463.22,425.80 463.67,425.20 465.81,428.25 465.93,428.28 467.95,428.78 469.32,430.00 470.09,430.69 472.03,427.25 472.23,426.89 474.06,424.91 474.37,424.57 476.51,421.96 476.77,422.48 478.65,426.27 479.08,426.08 480.79,425.32 482.87,429.73 482.93,429.85 485.07,429.15 485.59,428.92 486.94,428.31 487.21,428.20 489.25,429.18 489.34,429.22 491.48,428.37 491.69,428.49 493.62,429.60 495.08,430.45 495.76,430.85 497.79,428.41 497.90,428.28 499.82,427.23 500.04,427.11 502.18,420.96 502.53,421.30 504.32,423.06 504.57,423.42 506.46,426.12 508.36,428.66 508.60,428.98 509.99,429.73 510.74,430.13 512.02,430.87 512.88,431.36 515.02,425.91 515.14,426.10 517.16,429.30 518.12,429.49 519.30,429.72 521.44,428.09 523.55,427.05 523.57,427.04 524.90,425.49 525.71,424.55 527.61,420.30 527.85,419.76 529.99,426.74 530.33,427.14 532.13,429.25 533.71,429.87 534.27,430.08 536.41,429.27 537.10,428.63 538.55,427.31 540.49,430.77 540.69,431.12 542.83,426.93 543.20,426.76 544.97,425.97 546.59,426.35 547.11,426.47 549.25,428.30 549.98,426.66 551.07,424.20 551.39,423.49 553.37,421.85 553.53,421.72 555.67,426.05 556.08,426.45 557.80,428.13 559.47,426.56 559.94,426.11 562.08,430.26 562.19,430.13 564.22,427.58 566.25,430.98 566.36,431.16 568.29,428.02 568.50,427.68 570.64,425.34 572.35,428.91 572.78,429.82 574.92,425.14 575.74,423.71 577.06,421.42 577.10,421.42 579.13,421.47 579.20,421.48 581.34,425.63 581.84,426.33 583.48,428.62 585.23,430.69 585.62,431.14 587.27,429.91 587.76,429.55 588.89,430.18 589.90,430.74 592.01,427.48 592.03,427.44 594.17,427.30 596.08,429.49 596.31,429.76 598.45,423.47 600.59,429.19 600.82,428.86 602.45,426.42 602.73,426.00 604.87,425.54 604.89,425.53 607.01,424.03 607.60,425.57 609.15,429.61 609.64,429.18 611.29,427.71 611.67,427.81 613.43,428.28 613.70,427.88 615.57,425.12 615.74,425.26 617.71,426.79 617.77,426.83 619.85,428.37 621.16,427.28 621.99,426.59 623.19,426.79 624.13,426.94 626.26,425.03 626.58,424.98 627.87,424.77 628.40,424.68 628.62,424.62 629.77,424.29 630.54,424.08 632.21,424.51 632.68,424.63 634.25,427.61 634.82,428.69 636.01,427.41 636.96,426.39 638.99,427.47 639.10,427.53 641.03,428.16 641.24,428.23 643.06,428.53 643.38,428.59 645.10,429.46 645.52,429.67 647.54,429.00 647.66,428.96 649.80,430.79 650.53,430.63 651.94,430.30 652.56,428.10 653.92,423.26 654.08,422.70 656.22,417.47 658.36,424.17 658.67,424.92 660.49,429.31 660.70,429.29 662.63,429.03 663.41,429.25 664.77,429.63 665.45,428.70 666.91,426.69 668.57,427.90 669.05,428.26 670.88,429.15 671.19,429.31 673.33,428.96 673.59,429.18 675.47,430.71 676.98,429.69 677.61,429.26 679.02,425.04 679.75,422.86 681.46,421.96 681.89,421.74 683.76,425.17 684.03,425.66 686.17,427.40 687.83,428.34 688.31,428.61 690.28,429.97 690.45,430.09 691.90,429.52 692.59,429.25 694.35,428.34 694.72,428.15 696.86,426.39 697.33,426.46 699.00,426.71 700.04,426.72 701.14,426.73 703.28,428.42 703.44,428.22 705.20,425.97 705.42,425.69 707.51,422.06 707.56,421.98 709.70,426.90 709.81,426.85 711.84,425.94 713.61,429.17 713.98,429.85 716.05,428.66 716.12,428.62 717.68,427.39 718.26,426.94 720.39,427.60 720.40,427.60 722.54,428.28 723.11,428.24 724.68,428.14 725.82,428.70 726.82,429.18 728.53,426.63 728.95,426.01 730.16,424.03 731.09,422.52 733.01,425.64 733.23,426.00 735.37,427.80 735.59,427.69 737.51,426.77 739.39,426.36 739.65,426.30 741.69,428.22 741.79,428.31 743.46,427.89 743.93,427.77 745.90,429.91 746.07,430.09 748.21,424.52 750.35,428.09 751.62,429.19 752.49,429.95 752.76,429.46 754.58,426.20 754.63,426.11 756.77,422.33 758.45,420.03 758.91,419.42 761.05,424.65 761.41,425.30 763.18,428.47 764.14,427.69 765.32,426.71 767.46,427.93 767.55,427.93 768.69,427.95 769.60,427.96 771.42,428.67 771.74,428.79 773.24,427.33 773.88,426.71 776.02,428.33 776.65,428.55 777.79,428.95 778.16,429.08 778.93,428.89 780.07,428.61 780.30,428.56 781.21,426.39 782.44,423.46 782.80,422.90 784.16,420.78 784.58,420.13 784.62,420.18 786.72,422.67 786.90,423.31 788.86,430.28 789.63,429.65 791.00,428.52 792.59,428.82 793.14,428.93 794.86,429.45 795.28,429.57 796.00,427.58 796.45,426.33 797.41,423.67 797.82,423.97 799.41,425.18 799.55,425.28 801.01,425.81 801.69,426.05 802.83,425.55 803.83,425.11 803.96,425.40 805.56,429.14 805.97,430.09 807.38,425.93 808.11,423.78 809.65,423.04 810.11,422.82 810.25,422.75 811.93,425.15 812.39,425.80 814.53,428.72 814.66,428.70 816.48,428.39 816.67,428.36 817.62,428.59 818.76,428.86 818.81,428.87 819.21,428.45 820.58,427.04 820.95,426.66 823.09,431.09 823.31,431.01 825.23,430.28 826.72,428.24 827.37,427.36 829.51,429.59 830.14,428.93 831.64,427.36 833.55,428.48 833.78,428.62 835.37,424.59 835.92,423.19 836.96,426.14 838.06,429.28 840.20,428.57 841.52,428.20 842.34,427.97 843.79,427.68 844.48,427.54 844.93,427.96 846.07,429.02 846.52,429.44 846.62,429.54 848.34,428.53 848.76,428.28 848.80,428.30 850.90,429.63 852.44,430.47 852.89,430.71 853.04,430.79 855.18,426.58 857.32,429.59 857.45,429.32 859.27,425.54 859.46,425.14 861.54,420.76 861.60,420.65 862.45,422.15 863.14,423.37 863.74,424.43 865.87,428.33 868.01,432.40 868.83,430.63 870.15,427.75 871.10,425.92 872.29,423.62 872.92,424.55 874.43,426.79 875.65,428.56 876.57,429.90 878.71,426.06 879.07,426.76 880.85,430.23 881.34,430.23 882.03,430.24 882.99,430.25 883.62,429.18 885.13,426.61 887.03,419.05 887.27,418.10 889.31,422.95 889.41,423.19 891.55,428.78 891.58,428.77 892.89,428.34 893.69,428.09 894.92,429.25 895.83,430.10 897.36,427.87 897.97,426.99 899.67,426.97 900.10,426.96 902.24,429.91 902.38,429.72 904.38,426.82 904.42,426.83 906.52,427.48 908.49,424.69 908.66,424.45 910.52,423.70 910.80,423.59 912.56,420.51 912.94,419.85 915.08,427.41 915.54,427.37 917.22,427.23 918.66,427.89 919.36,428.21 920.69,427.84 921.50,427.62 922.73,427.99 923.64,428.26 925.44,429.88 925.78,430.17 927.92,424.93 928.83,426.71 930.06,429.11 932.20,430.07 934.26,427.09 934.33,426.99 935.89,427.41 936.47,427.58 938.33,422.89 938.61,422.19 940.75,424.65 941.72,426.61 942.89,428.97 943.75,429.56 945.03,430.42 947.15,426.27 947.17,426.23 949.31,424.55 950.54,426.34 951.45,427.67 953.25,431.87 953.59,432.65 955.73,427.41 955.96,427.41 957.87,427.47 960.01,430.54 960.03,430.48 961.39,426.72 962.15,424.63 964.10,423.24 964.29,423.11 966.43,421.79 966.81,422.85 968.56,427.73 970.21,426.51 970.70,426.14 972.84,428.03 972.92,428.01 974.28,427.61 974.98,427.41 976.58,428.52 977.12,428.89 979.26,427.94 979.70,428.04 981.40,428.42 983.09,427.15 983.54,426.81 985.68,430.40 986.48,428.47 987.82,425.23 987.84,425.19 989.60,421.43 989.96,420.67 992.10,426.36 992.32,426.35 994.24,426.29 995.30,427.98 996.38,429.70 998.52,429.26 998.69,429.07 1000.05,427.56 1000.66,426.89 1002.79,426.13 1003.44,427.45 1004.80,430.24 1004.93,430.51 1007.07,427.89 1007.51,427.64 1009.21,426.70 1010.90,427.46 1011.35,427.66 1012.94,426.21 1013.49,425.71 1015.38,423.56 1015.63,423.28 1017.68,428.22 1017.77,428.44 1019.91,427.94 1020.40,427.44 1022.05,425.75 1023.11,427.45 1024.19,429.18 1025.82,430.57 1026.33,431.01 1028.47,428.92 1028.53,428.92 1030.57,428.76 1030.61,428.76 1032.75,428.53 1033.28,428.27 1034.89,427.49 1036.67,426.59 1037.02,426.41 1038.44,425.60 1039.16,425.18 1041.15,417.99 1041.30,417.45 1043.44,427.12 1045.58,426.91 1046.17,427.12 1047.72,427.67 1049.56,429.58 1049.86,429.90 1052.00,429.49 1052.00,450.3"/><polygon fill="#eda566" points="438.00,450.3 438.00,433.22 440.14,433.36 442.20,432.62 442.28,432.60 444.42,431.37 446.56,434.74 447.62,433.36 448.70,431.95 450.34,428.78 450.84,427.83 452.98,431.36 453.05,431.34 455.11,430.67 457.11,430.72 457.25,430.72 459.15,431.70 459.39,431.82 461.18,432.29 461.53,432.38 463.22,431.06 463.67,430.71 465.81,431.13 465.93,431.15 467.95,431.55 469.32,432.44 470.09,432.95 472.03,431.15 472.23,430.97 474.06,429.76 474.37,429.56 476.51,428.19 476.77,428.44 478.65,430.23 479.08,430.29 480.79,430.54 482.87,432.27 482.93,432.32 485.07,434.79 485.59,434.24 486.94,432.82 487.21,432.55 489.25,433.43 489.34,433.47 491.48,433.57 491.69,433.48 493.62,432.70 495.08,433.31 495.76,433.60 497.79,431.75 497.90,431.65 499.82,430.72 500.04,430.61 502.18,426.71 502.53,426.98 504.32,428.38 504.57,428.61 506.46,430.30 508.36,431.96 508.60,432.17 509.99,433.72 510.74,434.56 512.02,434.16 512.88,433.89 515.02,431.21 515.14,431.26 517.16,432.14 518.12,432.47 519.30,432.88 521.44,430.89 523.55,431.84 523.57,431.85 524.90,431.35 525.71,431.04 527.61,427.72 527.85,427.30 529.99,429.93 530.33,430.42 532.13,433.00 533.71,433.48 534.27,433.65 536.41,432.28 537.10,432.57 538.55,433.18 540.49,433.45 540.69,433.47 542.83,430.98 543.20,430.99 544.97,431.05 546.59,432.07 547.11,432.40 549.25,431.05 549.98,430.20 551.07,428.93 551.39,428.56 553.37,429.06 553.53,429.10 555.67,429.15 556.08,429.55 557.80,431.23 559.47,431.58 559.94,431.68 562.08,432.99 562.19,432.91 564.22,431.26 566.25,434.32 566.36,434.49 568.29,431.78 568.50,431.48 570.64,427.82 572.35,431.27 572.78,432.14 574.92,431.11 575.74,429.78 577.06,427.66 577.10,427.68 579.13,428.77 579.20,428.81 581.34,429.46 581.84,430.00 583.48,431.77 585.23,434.77 585.62,435.42 587.27,433.29 587.76,432.66 588.89,433.73 589.90,434.68 592.01,433.18 592.03,433.17 594.17,430.88 596.08,432.97 596.31,433.23 598.45,429.38 600.59,433.70 600.82,433.26 602.45,430.05 602.73,429.50 604.87,431.62 604.89,431.60 607.01,429.45 607.60,430.16 609.15,432.03 609.64,431.84 611.29,431.20 611.67,431.54 613.43,433.10 613.70,432.79 615.57,430.59 615.74,430.64 617.71,431.22 617.77,431.30 619.85,433.93 621.16,431.85 621.99,430.54 623.19,430.59 624.13,430.63 626.26,430.42 626.58,430.28 627.87,429.71 628.40,429.47 628.62,429.68 629.77,430.82 630.54,431.59 632.21,429.11 632.68,428.41 634.25,431.19 634.82,432.20 636.01,430.58 636.96,429.28 638.99,431.67 639.10,431.80 641.03,431.12 641.24,431.05 643.06,431.47 643.38,431.55 645.10,432.46 645.52,432.68 647.54,432.91 647.66,432.93 649.80,434.15 650.53,434.17 651.94,434.20 652.56,432.93 653.92,430.14 654.08,429.82 656.22,424.59 658.36,430.39 658.67,430.66 660.49,432.28 660.70,432.32 662.63,432.67 663.41,432.46 664.77,432.10 665.45,431.91 666.91,431.50 668.57,431.75 669.05,431.83 670.88,432.43 671.19,432.54 673.33,431.22 673.59,431.51 675.47,433.59 676.98,432.79 677.61,432.45 679.02,429.32 679.75,427.70 681.46,429.37 681.89,429.79 683.76,431.13 684.03,431.32 686.17,430.61 687.83,431.82 688.31,432.17 690.28,432.81 690.45,432.87 691.90,434.32 692.59,434.99 694.35,432.28 694.72,431.71 696.86,431.49 697.33,431.52 699.00,431.65 700.04,431.99 701.14,432.36 703.28,430.69 703.44,430.66 705.20,430.30 705.42,430.26 707.51,428.03 707.56,427.98 709.70,430.16 709.81,430.23 711.84,431.48 713.61,432.96 713.98,433.27 716.05,433.72 716.12,433.73 717.68,431.81 718.26,431.10 720.39,430.00 720.40,430.00 722.54,431.97 723.11,431.77 724.68,431.24 725.82,431.39 726.82,431.53 728.53,429.31 728.95,428.77 730.16,428.40 731.09,428.12 733.01,430.40 733.23,430.67 735.37,431.93 735.59,431.79 737.51,430.57 739.39,430.55 739.65,430.55 741.69,431.00 741.79,431.02 743.46,432.28 743.93,432.64 745.90,433.22 746.07,433.27 748.21,429.47 750.35,432.80 751.62,432.74 752.49,432.70 752.76,432.24 754.58,429.16 754.63,429.08 756.77,426.76 758.45,426.68 758.91,426.66 761.05,429.13 761.41,429.64 763.18,432.13 764.14,432.16 765.32,432.19 767.46,430.98 767.55,430.99 768.69,431.14 769.60,431.26 771.42,432.13 771.74,432.29 773.24,430.49 773.88,429.72 776.02,430.67 776.65,430.88 777.79,431.24 778.16,431.36 778.93,432.00 780.07,432.95 780.30,433.14 781.21,431.36 782.44,428.96 782.80,428.76 784.16,427.98 784.58,427.74 784.62,427.77 786.72,429.31 786.90,429.67 788.86,433.60 789.63,433.48 791.00,433.26 792.59,434.26 793.14,434.60 794.86,432.98 795.28,432.58 796.00,431.19 796.45,430.33 797.41,428.48 797.82,428.76 799.41,429.90 799.55,430.01 801.01,431.27 801.69,431.86 802.83,431.19 803.83,430.59 803.96,430.75 805.56,432.68 805.97,433.18 807.38,430.78 808.11,429.53 809.65,428.16 810.11,427.75 810.25,427.63 811.93,429.78 812.39,430.36 814.53,432.40 814.66,432.30 816.48,430.92 816.67,430.78 817.62,431.55 818.76,432.47 818.81,432.51 819.21,432.06 820.58,430.51 820.95,430.10 823.09,435.17 823.31,435.00 825.23,433.53 826.72,431.17 827.37,430.16 829.51,433.31 830.14,432.73 831.64,431.35 833.55,432.48 833.78,432.61 835.37,430.86 835.92,430.24 836.96,431.65 838.06,433.14 840.20,431.11 841.52,431.32 842.34,431.45 843.79,431.37 844.48,431.33 844.93,431.54 846.07,432.05 846.52,432.26 846.62,432.30 848.34,432.61 848.76,432.68 848.80,432.71 850.90,434.48 852.44,434.91 852.89,435.04 853.04,435.08 855.18,431.42 857.32,431.87 857.45,431.76 859.27,430.16 859.46,429.99 861.54,426.65 861.60,426.56 862.45,426.97 863.14,427.31 863.74,427.60 865.87,432.05 868.01,434.80 868.83,433.67 870.15,431.82 871.10,430.14 872.29,428.04 872.92,428.83 874.43,430.76 875.65,432.22 876.57,433.33 878.71,429.21 879.07,429.76 880.85,432.50 881.34,432.79 882.03,433.19 882.99,433.75 883.62,433.64 885.13,433.36 887.03,425.73 887.27,424.78 889.31,427.00 889.41,427.12 891.55,433.50 891.58,433.46 892.89,431.92 893.69,430.99 894.92,432.77 895.83,434.07 897.36,432.24 897.97,431.52 899.67,432.52 900.10,432.77 902.24,433.48 902.38,433.33 904.38,431.20 904.42,431.23 906.52,433.25 908.49,429.86 908.66,429.57 910.52,429.37 910.80,429.34 912.56,427.19 912.94,426.73 915.08,431.90 915.54,431.71 917.22,430.99 918.66,431.30 919.36,431.45 920.69,432.39 921.50,432.96 922.73,433.44 923.64,433.79 925.44,433.81 925.78,433.81 927.92,430.56 928.83,430.94 930.06,431.44 932.20,432.78 934.26,431.16 934.33,431.10 935.89,431.84 936.47,432.11 938.33,428.61 938.61,428.08 940.75,431.29 941.72,431.49 942.89,431.74 943.75,432.38 945.03,433.34 947.15,429.32 947.17,429.29 949.31,429.32 950.54,430.14 951.45,430.75 953.25,434.20 953.59,434.85 955.73,431.66 955.96,431.61 957.87,431.16 960.01,433.64 960.03,433.60 961.39,431.20 962.15,429.87 964.10,430.08 964.29,430.10 966.43,426.80 966.81,427.78 968.56,432.29 970.21,430.88 970.70,430.46 972.84,433.37 972.92,433.37 974.28,433.31 974.98,433.27 976.58,432.58 977.12,432.35 979.26,431.44 979.70,431.96 981.40,433.98 983.09,430.99 983.54,430.19 985.68,435.31 986.48,433.79 987.82,431.24 987.84,431.21 989.60,428.37 989.96,427.80 992.10,432.94 992.32,432.80 994.24,431.61 995.30,432.05 996.38,432.50 998.52,433.81 998.69,433.58 1000.05,431.76 1000.66,430.94 1002.79,430.46 1003.44,431.56 1004.80,433.88 1004.93,434.10 1007.07,431.17 1007.51,431.28 1009.21,431.73 1010.90,431.85 1011.35,431.88 1012.94,430.47 1013.49,429.99 1015.38,428.89 1015.63,428.74 1017.68,432.44 1017.77,432.60 1019.91,430.81 1020.40,430.60 1022.05,429.89 1023.11,430.86 1024.19,431.84 1025.82,433.06 1026.33,433.44 1028.47,431.38 1028.53,431.37 1030.57,431.34 1030.61,431.34 1032.75,433.39 1033.28,432.58 1034.89,430.11 1036.67,430.28 1037.02,430.32 1038.44,431.09 1039.16,431.48 1041.15,424.33 1041.30,423.79 1043.44,430.66 1045.58,432.39 1046.17,432.60 1047.72,433.16 1049.56,432.41 1049.86,432.29 1052.00,432.64 1052.00,450.3"/><polygon fill="#ece36b" points="438.00,450.3 438.00,436.48 440.14,436.78 442.20,436.26 442.28,436.24 444.42,436.14 446.56,437.83 447.62,436.34 448.70,434.81 450.34,433.31 450.84,432.86 452.98,434.76 453.05,434.82 455.11,436.58 457.11,435.17 457.25,435.07 459.15,436.62 459.39,436.82 461.18,435.95 461.53,435.78 463.22,436.06 463.67,436.13 465.81,433.55 465.93,433.58 467.95,434.17 469.32,434.94 470.09,435.38 472.03,435.74 472.23,435.78 474.06,434.68 474.37,434.50 476.51,430.97 476.77,431.33 478.65,433.92 479.08,434.34 480.79,436.01 482.87,436.76 482.93,436.78 485.07,437.20 485.59,436.79 486.94,435.72 487.21,435.52 489.25,436.13 489.34,436.16 491.48,436.12 491.69,436.15 493.62,436.40 495.08,436.09 495.76,435.94 497.79,437.38 497.90,437.45 499.82,434.72 500.04,434.40 502.18,430.85 502.53,431.21 504.32,433.07 504.57,433.35 506.46,435.48 508.36,437.34 508.60,437.58 509.99,437.97 510.74,438.18 512.02,437.65 512.88,437.29 515.02,434.94 515.14,434.90 517.16,434.25 518.12,435.29 519.30,436.56 521.44,435.80 523.55,437.88 523.57,437.90 524.90,436.92 525.71,436.31 527.61,432.52 527.85,432.04 529.99,434.47 530.33,434.57 532.13,435.13 533.71,436.55 534.27,437.05 536.41,435.72 537.10,436.42 538.55,437.88 540.49,436.13 540.69,435.95 542.83,434.56 543.20,434.67 544.97,435.18 546.59,437.07 547.11,437.67 549.25,436.46 549.98,435.31 551.07,433.60 551.39,433.10 553.37,431.89 553.53,431.79 555.67,434.33 556.08,434.84 557.80,436.96 559.47,436.19 559.94,435.97 562.08,436.48 562.19,436.42 564.22,435.35 566.25,437.02 566.36,437.11 568.29,436.51 568.50,436.44 570.64,433.89 572.35,435.81 572.78,436.29 574.92,436.07 575.74,434.94 577.06,433.12 577.10,433.09 579.13,431.71 579.20,431.66 581.34,435.36 581.84,435.60 583.48,436.37 585.23,437.94 585.62,438.28 587.27,435.78 587.76,435.05 588.89,436.47 589.90,437.73 592.01,437.57 592.03,437.57 594.17,435.77 596.08,436.53 596.31,436.62 598.45,435.22 600.59,437.22 600.82,436.82 602.45,433.93 602.73,433.43 604.87,434.17 604.89,434.18 607.01,435.47 607.60,435.24 609.15,434.62 609.64,435.15 611.29,436.94 611.67,437.02 613.43,437.37 613.70,437.06 615.57,434.93 615.74,434.98 617.71,435.56 617.77,435.60 619.85,437.05 621.16,436.59 621.99,436.30 623.19,436.54 624.13,436.73 626.26,435.81 626.58,435.53 627.87,434.43 628.40,433.98 628.62,433.99 629.77,434.08 630.54,434.14 632.21,433.89 632.68,433.82 634.25,435.00 634.82,435.42 636.01,435.18 636.96,434.98 638.99,434.84 639.10,434.83 641.03,435.38 641.24,435.43 643.06,436.76 643.38,436.99 645.10,435.77 645.52,435.48 647.54,437.11 647.66,437.21 649.80,436.51 650.53,436.46 651.94,436.37 652.56,435.28 653.92,432.88 654.08,432.60 656.22,430.67 658.36,436.27 658.67,436.38 660.49,437.02 660.70,436.92 662.63,435.97 663.41,436.30 664.77,436.88 665.45,436.78 666.91,436.56 668.57,435.68 669.05,435.43 670.88,436.77 671.19,437.00 673.33,436.55 673.59,436.45 675.47,435.71 676.98,435.43 677.61,435.31 679.02,432.90 679.75,431.66 681.46,432.26 681.89,432.42 683.76,434.63 684.03,434.95 686.17,434.98 687.83,434.94 688.31,434.93 690.28,436.87 690.45,437.03 691.90,437.77 692.59,438.12 694.35,436.43 694.72,436.08 696.86,434.89 697.33,435.20 699.00,436.31 700.04,435.46 701.14,434.56 703.28,435.48 703.44,435.29 705.20,433.16 705.42,432.90 707.51,433.92 707.56,433.94 709.70,434.66 709.81,434.70 711.84,435.45 713.61,436.73 713.98,437.00 716.05,438.28 716.12,438.33 717.68,436.60 718.26,435.96 720.39,435.15 720.40,435.14 722.54,437.08 723.11,436.60 724.68,435.27 725.82,436.54 726.82,437.64 728.53,434.91 728.95,434.24 730.16,433.91 731.09,433.66 733.01,434.31 733.23,434.38 735.37,435.74 735.59,435.66 737.51,434.93 739.39,436.13 739.65,436.30 741.69,435.27 741.79,435.22 743.46,436.48 743.93,436.83 745.90,437.06 746.07,437.08 748.21,435.21 750.35,436.16 751.62,435.45 752.49,434.97 752.76,434.86 754.58,434.11 754.63,434.09 756.77,432.48 758.45,431.86 758.91,431.69 761.05,433.62 761.41,434.23 763.18,437.24 764.14,436.46 765.32,435.48 767.46,435.45 767.55,435.37 768.69,434.38 769.60,433.59 771.42,434.65 771.74,434.84 773.24,433.96 773.88,433.59 776.02,434.77 776.65,434.85 777.79,434.98 778.16,435.03 778.93,435.16 780.07,435.36 780.30,435.40 781.21,434.74 782.44,433.85 782.80,433.52 784.16,432.31 784.58,431.93 784.62,431.94 786.72,432.33 786.90,432.72 788.86,436.90 789.63,436.91 791.00,436.92 792.59,437.43 793.14,437.61 794.86,435.44 795.28,434.91 796.00,434.69 796.45,434.54 797.41,434.24 797.82,434.57 799.41,435.88 799.55,436.00 801.01,436.43 801.69,436.63 802.83,436.39 803.83,436.18 803.96,436.22 805.56,436.80 805.97,436.94 807.38,435.58 808.11,434.87 809.65,431.78 810.11,430.86 810.25,430.58 811.93,434.41 812.39,435.46 814.53,436.76 814.66,436.75 816.48,436.54 816.67,436.51 817.62,435.82 818.76,434.99 818.81,434.96 819.21,435.04 820.58,435.30 820.95,435.38 823.09,437.72 823.31,437.73 825.23,437.77 826.72,436.59 827.37,436.08 829.51,435.36 830.14,435.07 831.64,434.39 833.55,435.72 833.78,435.88 835.37,434.20 835.92,433.62 836.96,434.50 838.06,435.44 840.20,436.81 841.52,436.82 842.34,436.83 843.79,435.59 844.48,435.00 844.93,435.17 846.07,435.60 846.52,435.76 846.62,435.80 848.34,436.86 848.76,437.12 848.80,437.11 850.90,436.71 852.44,437.10 852.89,437.22 853.04,437.25 855.18,437.14 857.32,435.18 857.45,435.11 859.27,434.18 859.46,434.08 861.54,432.46 861.60,432.42 862.45,432.90 863.14,433.30 863.74,433.64 865.87,436.03 868.01,437.69 868.83,436.69 870.15,435.07 871.10,434.53 872.29,433.85 872.92,434.62 874.43,436.47 875.65,436.30 876.57,436.17 878.71,434.68 879.07,434.90 880.85,436.00 881.34,436.39 882.03,436.95 882.99,437.73 883.62,437.25 885.13,436.11 887.03,431.05 887.27,430.42 889.31,433.10 889.41,433.23 891.55,436.37 891.58,436.36 892.89,435.89 893.69,435.61 894.92,436.36 895.83,436.90 897.36,437.08 897.97,437.15 899.67,435.46 900.10,435.03 902.24,435.96 902.38,435.97 904.38,436.21 904.42,436.21 906.52,436.57 908.49,435.40 908.66,435.29 910.52,434.98 910.80,434.94 912.56,432.27 912.94,431.69 915.08,434.50 915.54,434.80 917.22,435.88 918.66,436.85 919.36,437.32 920.69,437.01 921.50,436.82 922.73,436.44 923.64,436.16 925.44,436.68 925.78,436.77 927.92,433.87 928.83,434.94 930.06,436.39 932.20,435.62 934.26,433.94 934.33,433.89 935.89,434.78 936.47,435.12 938.33,433.14 938.61,432.84 940.75,436.56 941.72,436.00 942.89,435.30 943.75,436.42 945.03,438.09 947.15,434.98 947.17,434.95 949.31,433.77 950.54,433.75 951.45,433.73 953.25,437.43 953.59,438.12 955.73,437.49 955.96,437.32 957.87,435.93 960.01,436.82 960.03,436.79 961.39,435.34 962.15,434.53 964.10,432.69 964.29,432.52 966.43,432.85 966.81,433.44 968.56,436.14 970.21,435.01 970.70,434.67 972.84,437.58 972.92,437.51 974.28,436.19 974.98,435.51 976.58,436.50 977.12,436.84 979.26,434.65 979.70,435.14 981.40,437.05 983.09,435.84 983.54,435.52 985.68,437.71 986.48,436.49 987.82,434.45 987.84,434.44 989.60,433.18 989.96,432.93 992.10,435.99 992.32,435.87 994.24,434.79 995.30,435.78 996.38,436.78 998.52,436.62 998.69,436.62 1000.05,436.65 1000.66,436.66 1002.79,436.54 1003.44,436.46 1004.80,436.30 1004.93,436.29 1007.07,435.09 1007.51,435.45 1009.21,436.84 1010.90,435.78 1011.35,435.50 1012.94,435.74 1013.49,435.83 1015.38,433.18 1015.63,432.83 1017.68,435.27 1017.77,435.38 1019.91,435.12 1020.40,435.00 1022.05,434.57 1023.11,434.96 1024.19,435.36 1025.82,437.51 1026.33,438.17 1028.47,436.62 1028.53,436.59 1030.57,435.51 1030.61,435.50 1032.75,437.51 1033.28,437.04 1034.89,435.60 1036.67,435.23 1037.02,435.16 1038.44,435.49 1039.16,435.66 1041.15,430.14 1041.30,429.72 1043.44,433.42 1045.58,437.62 1046.17,437.14 1047.72,435.88 1049.56,436.69 1049.86,436.82 1052.00,435.65 1052.00,450.3"/><polygon fill="#3d8c8c" points="438.00,450.3 438.00,440.13 440.14,439.54 442.20,438.51 442.28,438.47 444.42,440.04 446.56,440.31 447.62,439.37 448.70,438.41 450.34,437.51 450.84,437.24 452.98,438.40 453.05,438.43 455.11,439.54 457.11,439.18 457.25,439.15 459.15,440.20 459.39,440.34 461.18,440.52 461.53,440.55 463.22,440.14 463.67,440.03 465.81,439.09 465.93,439.11 467.95,439.55 469.32,439.84 470.09,440.00 472.03,438.78 472.23,438.66 474.06,437.19 474.37,436.94 476.51,436.14 476.77,436.46 478.65,438.71 479.08,439.02 480.79,440.24 482.87,440.09 482.93,440.09 485.07,440.20 485.59,440.14 486.94,439.99 487.21,439.96 489.25,440.17 489.34,440.18 491.48,440.24 491.69,440.28 493.62,440.66 495.08,440.64 495.76,440.62 497.79,440.19 497.90,440.17 499.82,437.61 500.04,437.32 502.18,436.32 502.53,436.65 504.32,438.32 504.57,438.59 506.46,440.60 508.36,439.85 508.60,439.76 509.99,440.20 510.74,440.44 512.02,440.35 512.88,440.28 515.02,438.47 515.14,438.47 517.16,438.47 518.12,438.70 519.30,438.97 521.44,439.74 523.55,440.20 523.57,440.20 524.90,439.24 525.71,438.66 527.61,436.70 527.85,436.45 529.99,438.44 530.33,438.59 532.13,439.38 533.71,440.14 534.27,440.40 536.41,439.44 537.10,439.83 538.55,440.67 540.49,439.34 540.69,439.20 542.83,439.22 543.20,439.38 544.97,440.16 546.59,440.02 547.11,439.97 549.25,438.93 549.98,438.60 551.07,438.12 551.39,437.98 553.37,436.16 553.53,436.03 555.67,439.06 556.08,439.20 557.80,439.76 559.47,439.55 559.94,439.50 562.08,439.43 562.19,439.47 564.22,440.23 566.25,440.44 566.36,440.45 568.29,440.74 568.50,440.77 570.64,439.40 572.35,439.46 572.78,439.47 574.92,440.04 575.74,439.17 577.06,437.78 577.10,437.76 579.13,436.96 579.20,436.93 581.34,438.90 581.84,439.09 583.48,439.71 585.23,440.49 585.62,440.67 587.27,440.27 587.76,440.15 588.89,440.10 589.90,440.05 592.01,439.90 592.03,439.90 594.17,439.79 596.08,440.30 596.31,440.36 598.45,439.66 600.59,440.32 600.82,440.09 602.45,438.47 602.73,438.19 604.87,436.48 604.89,436.50 607.01,438.26 607.60,438.46 609.15,438.99 609.64,439.05 611.29,439.27 611.67,439.48 613.43,440.48 613.70,440.36 615.57,439.51 615.74,439.56 617.71,440.03 617.77,440.03 619.85,440.09 621.16,439.33 621.99,438.85 623.19,439.51 624.13,440.03 626.26,440.39 626.58,439.94 627.87,438.07 628.40,437.31 628.62,437.23 629.77,436.85 630.54,436.59 632.21,437.96 632.68,438.35 634.25,439.17 634.82,439.46 636.01,439.90 636.96,440.25 638.99,440.17 639.10,440.17 641.03,440.63 641.24,440.68 643.06,440.59 643.38,440.57 645.10,440.38 645.52,440.34 647.54,440.32 647.66,440.32 649.80,439.67 650.53,439.72 651.94,439.82 652.56,439.27 653.92,438.06 654.08,437.92 656.22,435.84 658.36,439.19 658.67,439.35 660.49,440.33 660.70,440.23 662.63,439.30 663.41,439.62 664.77,440.20 665.45,440.13 666.91,439.99 668.57,439.09 669.05,438.83 670.88,439.60 671.19,439.73 673.33,440.57 673.59,440.57 675.47,440.54 676.98,439.63 677.61,439.25 679.02,437.52 679.75,436.63 681.46,436.47 681.89,436.43 683.76,437.46 684.03,437.61 686.17,439.68 687.83,439.97 688.31,440.05 690.28,440.06 690.45,440.06 691.90,440.19 692.59,440.24 694.35,439.98 694.72,439.92 696.86,438.84 697.33,439.17 699.00,440.35 700.04,440.17 701.14,439.99 703.28,439.80 703.44,439.65 705.20,437.97 705.42,437.76 707.51,436.25 707.56,436.21 709.70,438.62 709.81,438.71 711.84,440.25 713.61,439.49 713.98,439.34 716.05,440.62 716.12,440.66 717.68,440.61 718.26,440.59 720.39,440.34 720.40,440.34 722.54,439.43 723.11,439.45 724.68,439.53 725.82,439.88 726.82,440.19 728.53,439.15 728.95,438.90 730.16,438.38 731.09,437.98 733.01,437.36 733.23,437.29 735.37,438.56 735.59,438.67 737.51,439.65 739.39,440.11 739.65,440.17 741.69,439.95 741.79,439.94 743.46,440.19 743.93,440.26 745.90,440.30 746.07,440.31 748.21,440.64 750.35,440.56 751.62,439.48 752.49,438.74 752.76,438.65 754.58,438.04 754.63,438.02 756.77,437.05 758.45,436.39 758.91,436.22 761.05,438.86 761.41,439.18 763.18,440.73 764.14,440.59 765.32,440.42 767.46,439.83 767.55,439.78 768.69,439.14 769.60,438.63 771.42,439.55 771.74,439.71 773.24,438.90 773.88,438.55 776.02,439.93 776.65,440.08 777.79,440.34 778.16,440.43 778.93,440.16 780.07,439.77 780.30,439.69 781.21,438.85 782.44,437.73 782.80,437.51 784.16,436.71 784.58,436.46 784.62,436.48 786.72,437.18 786.90,437.46 788.86,440.42 789.63,440.43 791.00,440.43 792.59,440.24 793.14,440.17 794.86,439.68 795.28,439.56 796.00,439.62 796.45,439.66 797.41,439.75 797.82,439.68 799.41,439.39 799.55,439.36 801.01,439.29 801.69,439.26 802.83,439.09 803.83,438.94 803.96,439.03 805.56,440.18 805.97,440.48 807.38,438.80 808.11,437.94 809.65,436.56 810.11,436.15 810.25,436.02 811.93,437.35 812.39,437.71 814.53,439.88 814.66,439.83 816.48,439.04 816.67,438.96 817.62,439.10 818.76,439.27 818.81,439.27 819.21,439.44 820.58,439.99 820.95,440.14 823.09,440.39 823.31,440.36 825.23,440.04 826.72,439.83 827.37,439.73 829.51,439.45 830.14,439.50 831.64,439.62 833.55,438.22 833.78,438.06 835.37,436.56 835.92,436.04 836.96,437.05 838.06,438.13 840.20,439.62 841.52,439.67 842.34,439.70 843.79,439.61 844.48,439.56 844.93,439.64 846.07,439.84 846.52,439.91 846.62,439.93 848.34,439.94 848.76,439.95 848.80,439.94 850.90,439.40 852.44,440.04 852.89,440.22 853.04,440.28 855.18,439.79 857.32,439.87 857.45,439.71 859.27,437.45 859.46,437.22 861.54,436.41 861.60,436.39 862.45,437.25 863.14,437.94 863.74,438.54 865.87,439.76 868.01,440.65 868.83,440.49 870.15,440.22 871.10,439.72 872.29,439.10 872.92,439.28 874.43,439.72 875.65,439.95 876.57,440.13 878.71,440.08 879.07,440.02 880.85,439.73 881.34,439.92 882.03,440.18 882.99,440.55 883.62,439.89 885.13,438.33 887.03,436.06 887.27,435.78 889.31,437.97 889.41,438.08 891.55,439.77 891.58,439.76 892.89,439.60 893.69,439.51 894.92,440.23 895.83,440.75 897.36,440.33 897.97,440.16 899.67,440.46 900.10,440.54 902.24,440.31 902.38,440.23 904.38,439.09 904.42,439.08 906.52,438.65 908.49,438.97 908.66,438.99 910.52,438.38 910.80,438.28 912.56,436.84 912.94,436.53 915.08,439.04 915.54,439.26 917.22,440.05 918.66,439.96 919.36,439.92 920.69,439.61 921.50,439.42 922.73,439.37 923.64,439.33 925.44,439.67 925.78,439.73 927.92,438.95 928.83,439.50 930.06,440.24 932.20,439.90 934.26,439.43 934.33,439.41 935.89,438.46 936.47,438.10 938.33,436.93 938.61,436.75 940.75,439.14 941.72,439.55 942.89,440.05 943.75,440.09 945.03,440.14 947.15,439.87 947.17,439.87 949.31,438.78 950.54,438.71 951.45,438.66 953.25,440.17 953.59,440.46 955.73,440.48 955.96,440.48 957.87,440.48 960.01,439.20 960.03,439.19 961.39,438.59 962.15,438.25 964.10,436.38 964.29,436.21 966.43,438.24 966.81,438.60 968.56,440.24 970.21,439.83 970.70,439.71 972.84,440.69 972.92,440.68 974.28,440.44 974.98,440.31 976.58,440.34 977.12,440.35 979.26,439.91 979.70,439.80 981.40,439.41 983.09,440.24 983.54,440.46 985.68,440.49 986.48,439.71 987.82,438.40 987.84,438.39 989.60,437.08 989.96,436.81 992.10,438.59 992.32,438.71 994.24,439.75 995.30,439.83 996.38,439.92 998.52,439.75 998.69,439.69 1000.05,439.19 1000.66,438.97 1002.79,439.65 1003.44,439.75 1004.80,439.95 1004.93,439.97 1007.07,439.64 1007.51,439.75 1009.21,440.15 1010.90,439.99 1011.35,439.95 1012.94,438.68 1013.49,438.24 1015.38,436.49 1015.63,436.26 1017.68,438.92 1017.77,439.04 1019.91,440.55 1020.40,440.32 1022.05,439.52 1023.11,439.61 1024.19,439.69 1025.82,440.13 1026.33,440.26 1028.47,439.99 1028.53,439.99 1030.57,440.02 1030.61,440.03 1032.75,440.39 1033.28,440.20 1034.89,439.62 1036.67,438.94 1037.02,438.81 1038.44,438.10 1039.16,437.74 1041.15,435.41 1041.30,435.23 1043.44,438.26 1045.58,440.39 1046.17,440.31 1047.72,440.08 1049.56,439.91 1049.86,439.88 1052.00,439.01 1052.00,450.3"/><polygon fill="#6650a4" points="438.00,450.3 438.00,441.98 440.14,441.59 442.20,440.62 442.28,440.58 444.42,441.85 446.56,442.09 447.62,442.06 448.70,442.03 450.34,442.16 450.84,442.20 452.98,441.94 453.05,441.92 455.11,441.41 457.11,440.96 457.25,440.93 459.15,441.75 459.39,441.86 461.18,442.07 461.53,442.11 463.22,442.23 463.67,442.26 465.81,441.39 465.93,441.39 467.95,441.46 469.32,441.64 470.09,441.74 472.03,440.55 472.23,440.43 474.06,440.61 474.37,440.64 476.51,441.71 476.77,441.74 478.65,441.96 479.08,442.01 480.79,442.20 482.87,441.97 482.93,441.96 485.07,441.67 485.59,441.67 486.94,441.69 487.21,441.70 489.25,441.86 489.34,441.87 491.48,442.12 491.69,442.13 493.62,442.27 495.08,442.22 495.76,442.19 497.79,441.97 497.90,441.96 499.82,440.95 500.04,440.84 502.18,441.65 502.53,441.62 504.32,441.50 504.57,441.58 506.46,442.12 508.36,441.87 508.60,441.84 509.99,442.07 510.74,442.19 512.02,442.05 512.88,441.95 515.02,440.43 515.14,440.43 517.16,440.40 518.12,440.66 519.30,440.98 521.44,441.58 523.55,442.26 523.57,442.27 524.90,442.22 525.71,442.19 527.61,441.98 527.85,441.95 529.99,441.73 530.33,441.62 532.13,441.00 533.71,441.65 534.27,441.88 536.41,441.22 537.10,441.56 538.55,442.27 540.49,441.10 540.69,440.98 542.83,441.03 543.20,441.15 544.97,441.73 546.59,441.71 547.11,441.70 549.25,440.81 549.98,441.26 551.07,441.94 551.39,442.14 553.37,441.09 553.53,441.01 555.67,442.18 556.08,442.13 557.80,441.94 559.47,441.51 559.94,441.39 562.08,440.97 562.19,441.02 564.22,441.89 566.25,442.13 566.36,442.14 568.29,442.26 568.50,442.27 570.64,440.96 572.35,441.20 572.78,441.26 574.92,441.72 575.74,441.72 577.06,441.71 577.10,441.71 579.13,441.89 579.20,441.89 581.34,442.14 581.84,441.99 583.48,441.49 585.23,442.05 585.62,442.17 587.27,441.86 587.76,441.77 588.89,441.75 589.90,441.72 592.01,441.71 592.03,441.71 594.17,441.29 596.08,442.06 596.31,442.15 598.45,441.89 600.59,442.17 600.82,442.14 602.45,441.96 602.73,441.92 604.87,441.72 604.89,441.72 607.01,441.71 607.60,441.42 609.15,440.67 609.64,440.82 611.29,441.36 611.67,441.52 613.43,442.27 613.70,442.13 615.57,441.16 615.74,441.22 617.71,441.92 617.77,441.91 619.85,441.72 621.16,441.14 621.99,440.78 623.19,441.21 624.13,441.54 626.26,442.16 626.58,441.98 627.87,441.28 628.40,440.99 628.62,441.10 629.77,441.74 630.54,442.16 632.21,441.97 632.68,441.92 634.25,441.24 634.82,441.00 636.01,441.40 636.96,441.71 638.99,441.90 639.10,441.91 641.03,442.14 641.24,442.16 643.06,442.25 643.38,442.27 645.10,442.01 645.52,441.94 647.54,441.91 647.66,441.91 649.80,441.45 650.53,441.54 651.94,441.72 652.56,441.78 653.92,441.90 654.08,441.92 656.22,440.96 658.36,442.27 658.67,442.22 660.49,441.96 660.70,441.86 662.63,440.94 663.41,441.22 664.77,441.71 665.45,441.71 666.91,441.72 668.57,441.05 669.05,440.85 670.88,441.26 671.19,441.33 673.33,442.27 673.59,442.26 675.47,442.15 676.98,441.53 677.61,441.27 679.02,440.80 679.75,440.55 681.46,441.49 681.89,441.72 683.76,440.87 684.03,440.75 686.17,441.17 687.83,441.81 688.31,442.00 690.28,442.13 690.45,442.15 691.90,441.98 692.59,441.90 694.35,441.74 694.72,441.71 696.86,440.51 697.33,440.82 699.00,441.93 700.04,441.79 701.14,441.64 703.28,442.27 703.44,442.20 705.20,441.39 705.42,441.29 707.51,441.63 707.56,441.64 709.70,441.71 709.81,441.71 711.84,441.73 713.61,441.42 713.98,441.36 716.05,442.15 716.12,442.18 717.68,442.24 718.26,442.27 720.39,441.98 720.40,441.98 722.54,440.96 723.11,441.08 724.68,441.40 725.82,441.58 726.82,441.73 728.53,441.02 728.95,440.85 730.16,441.60 731.09,442.18 733.01,442.26 733.23,442.27 735.37,442.13 735.59,442.11 737.51,441.88 739.39,441.72 739.65,441.70 741.69,441.73 741.79,441.73 743.46,441.90 743.93,441.95 745.90,441.99 746.07,442.00 748.21,442.27 750.35,442.13 751.62,441.37 752.49,440.85 752.76,440.80 754.58,440.45 754.63,440.44 756.77,441.32 758.45,441.42 758.91,441.45 761.05,441.97 761.41,442.02 763.18,442.27 764.14,442.20 765.32,442.13 767.46,441.87 767.55,441.82 768.69,441.15 769.60,440.62 771.42,441.12 771.74,441.21 773.24,440.88 773.88,440.74 776.02,442.19 776.65,442.11 777.79,441.96 778.16,441.91 778.93,441.99 780.07,442.10 780.30,442.12 781.21,441.76 782.44,441.26 782.80,441.34 784.16,441.61 784.58,441.70 784.62,441.67 786.72,440.43 786.90,440.56 788.86,441.96 789.63,442.00 791.00,442.07 792.59,441.75 793.14,441.64 794.86,441.18 795.28,441.07 796.00,441.12 796.45,441.16 797.41,441.24 797.82,441.23 799.41,441.17 799.55,441.16 801.01,441.03 801.69,440.97 802.83,440.92 803.83,440.88 803.96,440.95 805.56,441.94 805.97,442.20 807.38,441.92 808.11,441.78 809.65,441.26 810.11,441.11 810.25,441.06 811.93,440.92 812.39,440.88 814.53,441.69 814.66,441.65 816.48,441.04 816.67,440.98 817.62,441.00 818.76,441.02 818.81,441.02 819.21,441.20 820.58,441.84 820.95,442.01 823.09,441.94 823.31,441.95 825.23,442.11 826.72,441.78 827.37,441.64 829.51,441.41 830.14,441.51 831.64,441.75 833.55,441.63 833.78,441.61 835.37,441.09 835.92,440.91 836.96,441.08 838.06,441.26 840.20,441.50 841.52,441.72 842.34,441.85 843.79,441.33 844.48,441.08 844.93,441.17 846.07,441.42 846.52,441.52 846.62,441.54 848.34,441.89 848.76,441.98 848.80,441.97 850.90,441.32 852.44,442.00 852.89,442.20 853.04,442.26 855.18,441.44 857.32,441.84 857.45,441.82 859.27,441.46 859.46,441.43 861.54,441.75 861.60,441.76 862.45,441.85 863.14,441.92 863.74,441.99 865.87,441.69 868.01,442.26 868.83,442.08 870.15,441.79 871.10,441.33 872.29,440.74 872.92,441.02 874.43,441.69 875.65,441.73 876.57,441.76 878.71,441.99 879.07,441.95 880.85,441.75 881.34,441.86 882.03,442.03 882.99,442.26 883.62,442.21 885.13,442.09 887.03,440.92 887.27,440.77 889.31,441.25 889.41,441.27 891.55,441.76 891.58,441.75 892.89,441.26 893.69,440.97 894.92,441.69 895.83,442.22 897.36,441.93 897.97,441.82 899.67,442.03 900.10,442.09 902.24,441.83 902.38,441.77 904.38,440.89 904.42,440.88 906.52,440.68 908.49,440.98 908.66,441.00 910.52,442.06 910.80,442.22 912.56,442.07 912.94,442.04 915.08,442.08 915.54,442.03 917.22,441.83 918.66,441.73 919.36,441.69 920.69,441.19 921.50,440.88 922.73,441.00 923.64,441.09 925.44,441.58 925.78,441.67 927.92,441.07 928.83,441.50 930.06,442.08 932.20,441.82 934.26,441.69 934.33,441.69 935.89,441.75 936.47,441.77 938.33,441.98 938.61,442.01 940.75,442.23 941.72,442.09 942.89,441.92 943.75,441.98 945.03,442.07 947.15,441.82 947.17,441.82 949.31,440.80 950.54,440.63 951.45,440.51 953.25,441.78 953.59,442.02 955.73,442.23 955.96,442.23 957.87,442.25 960.01,441.09 960.03,441.10 961.39,441.56 962.15,441.81 964.10,441.20 964.29,441.14 966.43,441.59 966.81,441.67 968.56,442.02 970.21,441.59 970.70,441.47 972.84,442.25 972.92,442.24 974.28,442.12 974.98,442.06 976.58,441.88 977.12,441.81 979.26,441.69 979.70,441.53 981.40,440.92 983.09,441.79 983.54,442.03 985.68,442.23 986.48,442.24 987.82,442.25 987.84,442.24 989.60,441.81 989.96,441.72 992.10,441.81 992.32,441.76 994.24,441.34 995.30,441.36 996.38,441.38 998.52,441.22 998.69,441.21 1000.05,441.09 1000.66,441.03 1002.79,441.76 1003.44,441.85 1004.80,442.04 1004.93,442.05 1007.07,441.80 1007.51,441.78 1009.21,441.69 1010.90,441.77 1011.35,441.79 1012.94,441.97 1013.49,442.04 1015.38,441.72 1015.63,441.68 1017.68,442.22 1017.77,442.24 1019.91,442.05 1020.40,441.99 1022.05,441.80 1023.11,441.49 1024.19,441.17 1025.82,441.60 1026.33,441.74 1028.47,441.74 1028.53,441.73 1030.57,441.57 1030.61,441.57 1032.75,442.24 1033.28,442.00 1034.89,441.28 1036.67,440.82 1037.02,440.73 1038.44,441.36 1039.16,441.68 1041.15,440.73 1041.30,440.66 1043.44,441.46 1045.58,442.24 1046.17,442.24 1047.72,442.24 1049.56,441.78 1049.86,441.71 1052.00,440.71 1052.00,450.3"/><polygon fill="#dc84b6" points="438.00,450.3 438.00,443.73 440.14,443.57 442.20,442.65 442.28,442.62 444.42,443.73 446.56,443.71 447.62,443.61 448.70,443.50 450.34,443.68 450.84,443.73 452.98,443.70 453.05,443.69 455.11,443.39 457.11,442.99 457.25,442.96 459.15,443.64 459.39,443.73 461.18,443.73 461.53,443.73 463.22,443.73 463.67,443.73 465.81,442.92 465.93,442.93 467.95,443.22 469.32,443.55 470.09,443.73 472.03,442.58 472.23,442.46 474.06,442.50 474.37,442.51 476.51,443.33 476.77,443.34 478.65,443.43 479.08,443.49 480.79,443.73 482.87,443.73 482.93,443.73 485.07,443.66 485.59,443.67 486.94,443.72 487.21,443.73 489.25,443.73 489.34,443.73 491.48,443.73 491.69,443.73 493.62,443.73 495.08,443.73 495.76,443.73 497.79,443.73 497.90,443.73 499.82,442.92 500.04,442.83 502.18,443.68 502.53,443.63 504.32,443.36 504.57,443.40 506.46,443.73 508.36,443.35 508.60,443.30 509.99,443.58 510.74,443.73 512.02,443.73 512.88,443.73 515.02,442.42 515.14,442.42 517.16,442.43 518.12,442.61 519.30,442.84 521.44,443.19 523.55,443.72 523.57,443.73 524.90,443.73 525.71,443.73 527.61,443.73 527.85,443.73 529.99,443.73 530.33,443.62 532.13,443.03 533.71,443.55 534.27,443.73 536.41,442.82 537.10,443.11 538.55,443.73 540.49,442.64 540.69,442.53 542.83,442.82 543.20,442.98 544.97,443.73 546.59,443.73 547.11,443.73 549.25,442.65 549.98,443.02 551.07,443.57 551.39,443.73 553.37,442.56 553.53,442.47 555.67,443.73 556.08,443.73 557.80,443.73 559.47,443.47 559.94,443.39 562.08,443.00 562.19,443.03 564.22,443.73 566.25,443.73 566.36,443.73 568.29,443.73 568.50,443.73 570.64,442.51 572.35,442.94 572.78,443.05 574.92,443.73 575.74,443.73 577.06,443.73 577.10,443.73 579.13,443.73 579.20,443.73 581.34,443.73 581.84,443.55 583.48,442.95 585.23,443.59 585.62,443.73 587.27,443.61 587.76,443.57 588.89,443.66 589.90,443.73 592.01,443.73 592.03,443.73 594.17,443.12 596.08,443.66 596.31,443.73 598.45,443.35 600.59,443.73 600.82,443.73 602.45,443.73 602.73,443.73 604.87,443.73 604.89,443.73 607.01,443.73 607.60,443.39 609.15,442.49 609.64,442.59 611.29,442.93 611.67,443.07 613.43,443.73 613.70,443.60 615.57,442.72 615.74,442.80 617.71,443.73 617.77,443.73 619.85,443.73 621.16,443.16 621.99,442.80 623.19,443.11 624.13,443.36 626.26,443.73 626.58,443.54 627.87,442.77 628.40,442.45 628.62,442.57 629.77,443.27 630.54,443.73 632.21,443.73 632.68,443.73 634.25,443.21 634.82,443.01 636.01,443.41 636.96,443.73 638.99,443.73 639.10,443.73 641.03,443.73 641.24,443.73 643.06,443.73 643.38,443.73 645.10,443.56 645.52,443.51 647.54,443.72 647.66,443.73 649.80,443.46 650.53,443.55 651.94,443.73 652.56,443.73 653.92,443.73 654.08,443.73 656.22,442.53 658.36,443.73 658.67,443.70 660.49,443.53 660.70,443.46 662.63,442.77 663.41,443.12 664.77,443.73 665.45,443.73 666.91,443.73 668.57,442.90 669.05,442.66 670.88,442.86 671.19,442.89 673.33,443.73 673.59,443.73 675.47,443.73 676.98,443.29 677.61,443.10 679.02,442.75 679.75,442.57 681.46,443.50 681.89,443.73 683.76,442.70 684.03,442.55 686.17,442.73 687.83,443.29 688.31,443.46 690.28,443.71 690.45,443.73 691.90,443.73 692.59,443.73 694.35,443.73 694.72,443.73 696.86,442.52 697.33,442.78 699.00,443.73 700.04,443.47 701.14,443.19 703.28,443.73 703.44,443.67 705.20,442.97 705.42,442.88 707.51,443.46 707.56,443.48 709.70,443.73 709.81,443.73 711.84,443.73 713.61,443.25 713.98,443.15 716.05,443.71 716.12,443.73 717.68,443.73 718.26,443.73 720.39,443.57 720.40,443.57 722.54,442.80 723.11,442.97 724.68,443.43 725.82,443.59 726.82,443.73 728.53,442.85 728.95,442.64 730.16,443.25 731.09,443.73 733.01,443.73 733.23,443.73 735.37,443.73 735.59,443.73 737.51,443.73 739.39,443.73 739.65,443.73 741.69,443.73 741.79,443.73 743.46,443.73 743.93,443.73 745.90,443.56 746.07,443.54 748.21,443.73 750.35,443.73 751.62,443.12 752.49,442.70 752.76,442.67 754.58,442.47 754.63,442.47 756.77,443.32 758.45,443.25 758.91,443.23 761.05,443.51 761.41,443.55 763.18,443.73 764.14,443.73 765.32,443.73 767.46,443.73 767.55,443.69 768.69,443.11 769.60,442.65 771.42,443.12 771.74,443.20 773.24,442.72 773.88,442.51 776.02,443.73 776.65,443.62 777.79,443.43 778.16,443.37 778.93,443.50 780.07,443.69 780.30,443.73 781.21,443.47 782.44,443.12 782.80,443.23 784.16,443.61 784.58,443.73 784.62,443.70 786.72,442.42 786.90,442.53 788.86,443.73 789.63,443.69 791.00,443.61 792.59,443.24 793.14,443.11 794.86,442.76 795.28,442.68 796.00,442.82 796.45,442.91 797.41,443.11 797.82,443.12 799.41,443.19 799.55,443.19 801.01,443.03 801.69,442.96 802.83,442.79 803.83,442.64 803.96,442.70 805.56,443.52 805.97,443.73 807.38,443.41 808.11,443.24 809.65,442.84 810.11,442.71 810.25,442.68 811.93,442.74 812.39,442.75 814.53,443.73 814.66,443.68 816.48,443.03 816.67,442.97 817.62,442.88 818.76,442.78 818.81,442.78 819.21,442.92 820.58,443.41 820.95,443.54 823.09,443.40 823.31,443.44 825.23,443.73 826.72,443.58 827.37,443.51 829.51,443.44 830.14,443.53 831.64,443.73 833.55,443.40 833.78,443.36 835.37,442.67 835.92,442.44 836.96,442.58 838.06,442.73 840.20,443.13 841.52,443.50 842.34,443.73 843.79,443.31 844.48,443.11 844.93,443.20 846.07,443.41 846.52,443.50 846.62,443.52 848.34,443.69 848.76,443.73 848.80,443.71 850.90,442.84 852.44,443.48 852.89,443.67 853.04,443.73 855.18,443.07 857.32,443.73 857.45,443.71 859.27,443.49 859.46,443.46 861.54,443.72 861.60,443.73 862.45,443.73 863.14,443.73 863.74,443.73 865.87,443.21 868.01,443.73 868.83,443.62 870.15,443.43 871.10,443.07 872.29,442.63 872.92,442.95 874.43,443.73 875.65,443.73 876.57,443.73 878.71,443.73 879.07,443.65 880.85,443.26 881.34,443.37 882.03,443.52 882.99,443.73 883.62,443.73 885.13,443.73 887.03,442.78 887.27,442.66 889.31,443.28 889.41,443.31 891.55,443.73 891.58,443.71 892.89,443.08 893.69,442.70 894.92,443.29 895.83,443.73 897.36,443.42 897.97,443.30 899.67,443.64 900.10,443.73 902.24,443.73 902.38,443.68 904.38,442.93 904.42,442.92 906.52,442.64 908.49,442.72 908.66,442.73 910.52,443.60 910.80,443.73 912.56,443.55 912.94,443.51 915.08,443.73 915.54,443.73 917.22,443.73 918.66,443.73 919.36,443.73 920.69,443.18 921.50,442.84 922.73,442.83 923.64,442.81 925.44,443.12 925.78,443.17 927.92,442.55 928.83,443.05 930.06,443.73 932.20,443.73 934.26,443.73 934.33,443.73 935.89,443.73 936.47,443.73 938.33,443.73 938.61,443.73 940.75,443.73 941.72,443.58 942.89,443.40 943.75,443.53 945.03,443.73 947.15,443.73 947.17,443.73 949.31,442.84 950.54,442.62 951.45,442.46 953.25,443.53 953.59,443.73 955.73,443.73 955.96,443.73 957.87,443.73 960.01,442.75 960.03,442.76 961.39,443.38 962.15,443.73 964.10,443.23 964.29,443.18 966.43,443.54 966.81,443.58 968.56,443.73 970.21,443.14 970.70,442.97 972.84,443.73 972.92,443.73 974.28,443.73 974.98,443.73 976.58,443.73 977.12,443.73 979.26,443.73 979.70,443.55 981.40,442.86 983.09,443.55 983.54,443.73 985.68,443.73 986.48,443.73 987.82,443.73 987.84,443.73 989.60,443.45 989.96,443.39 992.10,443.73 992.32,443.69 994.24,443.39 995.30,443.36 996.38,443.32 998.52,442.92 998.69,442.89 1000.05,442.64 1000.66,442.53 1002.79,443.24 1003.44,443.39 1004.80,443.70 1004.93,443.73 1007.07,443.73 1007.51,443.73 1009.21,443.73 1010.90,443.73 1011.35,443.73 1012.94,443.73 1013.49,443.73 1015.38,443.23 1015.63,443.17 1017.68,443.71 1017.77,443.73 1019.91,443.73 1020.40,443.73 1022.05,443.73 1023.11,443.47 1024.19,443.21 1025.82,443.57 1026.33,443.68 1028.47,443.43 1028.53,443.42 1030.57,443.06 1030.61,443.06 1032.75,443.73 1033.28,443.54 1034.89,442.96 1036.67,442.71 1037.02,442.66 1038.44,443.37 1039.16,443.73 1041.15,442.67 1041.30,442.59 1043.44,443.14 1045.58,443.73 1046.17,443.73 1047.72,443.73 1049.56,443.45 1049.86,443.40 1052.00,442.65 1052.00,450.3"/><polygon fill="#ece06a" points="438.00,450.3 438.00,445.34 440.14,445.34 442.20,445.34 442.28,445.34 444.42,445.34 446.56,445.34 447.62,445.34 448.70,445.34 450.34,445.34 450.84,445.34 452.98,445.34 453.05,445.34 455.11,445.34 457.11,445.34 457.25,445.34 459.15,445.34 459.39,445.34 461.18,445.34 461.53,445.34 463.22,445.34 463.67,445.34 465.81,445.34 465.93,445.34 467.95,445.34 469.32,445.34 470.09,445.34 472.03,445.34 472.23,445.34 474.06,445.34 474.37,445.34 476.51,445.34 476.77,445.34 478.65,445.34 479.08,445.34 480.79,445.34 482.87,445.34 482.93,445.34 485.07,445.34 485.59,445.34 486.94,445.34 487.21,445.34 489.25,445.34 489.34,445.34 491.48,445.34 491.69,445.34 493.62,445.34 495.08,445.34 495.76,445.34 497.79,445.34 497.90,445.34 499.82,445.34 500.04,445.34 502.18,445.34 502.53,445.34 504.32,445.34 504.57,445.34 506.46,445.34 508.36,445.34 508.60,445.34 509.99,445.34 510.74,445.34 512.02,445.34 512.88,445.34 515.02,445.34 515.14,445.34 517.16,445.34 518.12,445.34 519.30,445.34 521.44,445.34 523.55,445.34 523.57,445.34 524.90,445.34 525.71,445.34 527.61,445.34 527.85,445.34 529.99,445.34 530.33,445.34 532.13,445.34 533.71,445.34 534.27,445.34 536.41,445.34 537.10,445.34 538.55,445.34 540.49,445.34 540.69,445.34 542.83,445.34 543.20,445.34 544.97,445.34 546.59,445.34 547.11,445.34 549.25,445.34 549.98,445.34 551.07,445.34 551.39,445.34 553.37,445.34 553.53,445.34 555.67,445.34 556.08,445.34 557.80,445.34 559.47,445.34 559.94,445.34 562.08,445.34 562.19,445.34 564.22,445.34 566.25,445.34 566.36,445.34 568.29,445.34 568.50,445.34 570.64,445.34 572.35,445.34 572.78,445.34 574.92,445.34 575.74,445.34 577.06,445.34 577.10,445.34 579.13,445.34 579.20,445.34 581.34,445.34 581.84,445.34 583.48,445.34 585.23,445.34 585.62,445.34 587.27,445.34 587.76,445.34 588.89,445.34 589.90,445.34 592.01,445.34 592.03,445.34 594.17,445.34 596.08,445.34 596.31,445.34 598.45,445.34 600.59,445.34 600.82,445.34 602.45,445.34 602.73,445.34 604.87,445.34 604.89,445.34 607.01,445.34 607.60,445.34 609.15,445.34 609.64,445.34 611.29,445.34 611.67,445.34 613.43,445.34 613.70,445.34 615.57,445.34 615.74,445.34 617.71,445.34 617.77,445.34 619.85,445.34 621.16,445.34 621.99,445.34 623.19,445.34 624.13,445.34 626.26,445.34 626.58,445.34 627.87,445.34 628.40,445.34 628.62,445.34 629.77,445.34 630.54,445.34 632.21,445.34 632.68,445.34 634.25,445.34 634.82,445.34 636.01,445.34 636.96,445.34 638.99,445.34 639.10,445.34 641.03,445.34 641.24,445.34 643.06,445.34 643.38,445.34 645.10,445.34 645.52,445.34 647.54,445.34 647.66,445.34 649.80,445.34 650.53,445.34 651.94,445.34 652.56,445.34 653.92,445.34 654.08,445.34 656.22,445.34 658.36,445.34 658.67,445.34 660.49,445.34 660.70,445.34 662.63,445.34 663.41,445.34 664.77,445.34 665.45,445.34 666.91,445.34 668.57,445.34 669.05,445.34 670.88,445.34 671.19,445.34 673.33,445.34 673.59,445.34 675.47,445.34 676.98,445.34 677.61,445.34 679.02,445.34 679.75,445.34 681.46,445.34 681.89,445.34 683.76,445.34 684.03,445.34 686.17,445.34 687.83,445.34 688.31,445.34 690.28,445.34 690.45,445.34 691.90,445.34 692.59,445.34 694.35,445.34 694.72,445.34 696.86,445.34 697.33,445.34 699.00,445.34 700.04,445.34 701.14,445.34 703.28,445.34 703.44,445.34 705.20,445.34 705.42,445.34 707.51,445.34 707.56,445.34 709.70,445.34 709.81,445.34 711.84,445.34 713.61,445.34 713.98,445.34 716.05,445.34 716.12,445.34 717.68,445.34 718.26,445.34 720.39,445.34 720.40,445.34 722.54,445.34 723.11,445.34 724.68,445.34 725.82,445.34 726.82,445.34 728.53,445.34 728.95,445.34 730.16,445.34 731.09,445.34 733.01,445.34 733.23,445.34 735.37,445.34 735.59,445.34 737.51,445.34 739.39,445.34 739.65,445.34 741.69,445.34 741.79,445.34 743.46,445.34 743.93,445.34 745.90,445.34 746.07,445.34 748.21,445.34 750.35,445.34 751.62,445.34 752.49,445.34 752.76,445.34 754.58,445.34 754.63,445.34 756.77,445.34 758.45,445.34 758.91,445.34 761.05,445.34 761.41,445.34 763.18,445.34 764.14,445.34 765.32,445.34 767.46,445.34 767.55,445.34 768.69,445.34 769.60,445.34 771.42,445.34 771.74,445.34 773.24,445.34 773.88,445.34 776.02,445.34 776.65,445.34 777.79,445.34 778.16,445.34 778.93,445.34 780.07,445.34 780.30,445.34 781.21,445.34 782.44,445.34 782.80,445.34 784.16,445.34 784.58,445.34 784.62,445.34 786.72,445.34 786.90,445.34 788.86,445.34 789.63,445.34 791.00,445.34 792.59,445.34 793.14,445.34 794.86,445.34 795.28,445.34 796.00,445.34 796.45,445.34 797.41,445.34 797.82,445.34 799.41,445.34 799.55,445.34 801.01,445.34 801.69,445.34 802.83,445.34 803.83,445.34 803.96,445.34 805.56,445.34 805.97,445.34 807.38,445.34 808.11,445.34 809.65,445.34 810.11,445.34 810.25,445.34 811.93,445.34 812.39,445.34 814.53,445.34 814.66,445.34 816.48,445.34 816.67,445.34 817.62,445.34 818.76,445.34 818.81,445.34 819.21,445.34 820.58,445.34 820.95,445.34 823.09,445.34 823.31,445.34 825.23,445.34 826.72,445.34 827.37,445.34 829.51,445.34 830.14,445.34 831.64,445.34 833.55,445.34 833.78,445.34 835.37,445.34 835.92,445.34 836.96,445.34 838.06,445.34 840.20,445.34 841.52,445.34 842.34,445.34 843.79,445.34 844.48,445.34 844.93,445.34 846.07,445.34 846.52,445.34 846.62,445.34 848.34,445.34 848.76,445.34 848.80,445.34 850.90,445.34 852.44,445.34 852.89,445.34 853.04,445.34 855.18,445.34 857.32,445.34 857.45,445.34 859.27,445.34 859.46,445.34 861.54,445.34 861.60,445.34 862.45,445.34 863.14,445.34 863.74,445.34 865.87,445.34 868.01,445.34 868.83,445.34 870.15,445.34 871.10,445.34 872.29,445.34 872.92,445.34 874.43,445.34 875.65,445.34 876.57,445.34 878.71,445.34 879.07,445.34 880.85,445.34 881.34,445.34 882.03,445.34 882.99,445.34 883.62,445.34 885.13,445.34 887.03,445.34 887.27,445.34 889.31,445.34 889.41,445.34 891.55,445.34 891.58,445.34 892.89,445.34 893.69,445.34 894.92,445.34 895.83,445.34 897.36,445.34 897.97,445.34 899.67,445.34 900.10,445.34 902.24,445.34 902.38,445.34 904.38,445.34 904.42,445.34 906.52,445.34 908.49,445.34 908.66,445.34 910.52,445.34 910.80,445.34 912.56,445.34 912.94,445.34 915.08,445.34 915.54,445.34 917.22,445.34 918.66,445.34 919.36,445.34 920.69,445.34 921.50,445.34 922.73,445.34 923.64,445.34 925.44,445.34 925.78,445.34 927.92,445.34 928.83,445.34 930.06,445.34 932.20,445.34 934.26,445.34 934.33,445.34 935.89,445.34 936.47,445.34 938.33,445.34 938.61,445.34 940.75,445.34 941.72,445.34 942.89,445.34 943.75,445.34 945.03,445.34 947.15,445.34 947.17,445.34 949.31,445.34 950.54,445.34 951.45,445.34 953.25,445.34 953.59,445.34 955.73,445.34 955.96,445.34 957.87,445.34 960.01,445.34 960.03,445.34 961.39,445.34 962.15,445.34 964.10,445.34 964.29,445.34 966.43,445.34 966.81,445.34 968.56,445.34 970.21,445.34 970.70,445.34 972.84,445.34 972.92,445.34 974.28,445.34 974.98,445.34 976.58,445.34 977.12,445.34 979.26,445.34 979.70,445.34 981.40,445.34 983.09,445.34 983.54,445.34 985.68,445.34 986.48,445.34 987.82,445.34 987.84,445.34 989.60,445.34 989.96,445.34 992.10,445.34 992.32,445.34 994.24,445.34 995.30,445.34 996.38,445.34 998.52,445.34 998.69,445.34 1000.05,445.34 1000.66,445.34 1002.79,445.34 1003.44,445.34 1004.80,445.34 1004.93,445.34 1007.07,445.34 1007.51,445.34 1009.21,445.34 1010.90,445.34 1011.35,445.34 1012.94,445.34 1013.49,445.34 1015.38,445.34 1015.63,445.34 1017.68,445.34 1017.77,445.34 1019.91,445.34 1020.40,445.34 1022.05,445.34 1023.11,445.34 1024.19,445.34 1025.82,445.34 1026.33,445.34 1028.47,445.34 1028.53,445.34 1030.57,445.34 1030.61,445.34 1032.75,445.34 1033.28,445.34 1034.89,445.34 1036.67,445.34 1037.02,445.34 1038.44,445.34 1039.16,445.34 1041.15,445.34 1041.30,445.34 1043.44,445.34 1045.58,445.34 1046.17,445.34 1047.72,445.34 1049.56,445.34 1049.86,445.34 1052.00,445.34 1052.00,450.3"/><polygon fill="#a276c2" points="438.00,450.3 438.00,446.21 440.14,446.21 442.20,446.21 442.28,446.21 444.42,446.21 446.56,446.21 447.62,446.21 448.70,446.21 450.34,446.21 450.84,446.21 452.98,446.21 453.05,446.21 455.11,446.21 457.11,446.21 457.25,446.21 459.15,446.21 459.39,446.21 461.18,446.21 461.53,446.21 463.22,446.21 463.67,446.21 465.81,446.21 465.93,446.21 467.95,446.21 469.32,446.21 470.09,446.21 472.03,446.21 472.23,446.21 474.06,446.21 474.37,446.21 476.51,446.21 476.77,446.21 478.65,446.21 479.08,446.21 480.79,446.21 482.87,446.21 482.93,446.21 485.07,446.21 485.59,446.21 486.94,446.21 487.21,446.21 489.25,446.21 489.34,446.21 491.48,446.21 491.69,446.21 493.62,446.21 495.08,446.21 495.76,446.21 497.79,446.21 497.90,446.21 499.82,446.21 500.04,446.21 502.18,446.21 502.53,446.21 504.32,446.21 504.57,446.21 506.46,446.21 508.36,446.21 508.60,446.21 509.99,446.21 510.74,446.21 512.02,446.21 512.88,446.21 515.02,446.21 515.14,446.21 517.16,446.21 518.12,446.21 519.30,446.21 521.44,446.21 523.55,446.21 523.57,446.21 524.90,446.21 525.71,446.21 527.61,446.21 527.85,446.21 529.99,446.21 530.33,446.21 532.13,446.21 533.71,446.21 534.27,446.21 536.41,446.21 537.10,446.21 538.55,446.21 540.49,446.21 540.69,446.21 542.83,446.21 543.20,446.21 544.97,446.21 546.59,446.21 547.11,446.21 549.25,446.21 549.98,446.21 551.07,446.21 551.39,446.21 553.37,446.21 553.53,446.21 555.67,446.21 556.08,446.21 557.80,446.21 559.47,446.21 559.94,446.21 562.08,446.21 562.19,446.21 564.22,446.21 566.25,446.21 566.36,446.21 568.29,446.21 568.50,446.21 570.64,446.21 572.35,446.21 572.78,446.21 574.92,446.21 575.74,446.21 577.06,446.21 577.10,446.21 579.13,446.21 579.20,446.21 581.34,446.21 581.84,446.21 583.48,446.21 585.23,446.21 585.62,446.21 587.27,446.21 587.76,446.21 588.89,446.21 589.90,446.21 592.01,446.21 592.03,446.21 594.17,446.21 596.08,446.21 596.31,446.21 598.45,446.21 600.59,446.21 600.82,446.21 602.45,446.21 602.73,446.21 604.87,446.21 604.89,446.21 607.01,446.21 607.60,446.21 609.15,446.21 609.64,446.21 611.29,446.21 611.67,446.21 613.43,446.21 613.70,446.21 615.57,446.21 615.74,446.21 617.71,446.21 617.77,446.21 619.85,446.21 621.16,446.21 621.99,446.21 623.19,446.21 624.13,446.21 626.26,446.21 626.58,446.21 627.87,446.21 628.40,446.21 628.62,446.21 629.77,446.21 630.54,446.21 632.21,446.21 632.68,446.21 634.25,446.21 634.82,446.21 636.01,446.21 636.96,446.21 638.99,446.21 639.10,446.21 641.03,446.21 641.24,446.21 643.06,446.21 643.38,446.21 645.10,446.21 645.52,446.21 647.54,446.21 647.66,446.21 649.80,446.21 650.53,446.21 651.94,446.21 652.56,446.21 653.92,446.21 654.08,446.21 656.22,446.21 658.36,446.21 658.67,446.21 660.49,446.21 660.70,446.21 662.63,446.21 663.41,446.21 664.77,446.21 665.45,446.21 666.91,446.21 668.57,446.21 669.05,446.21 670.88,446.21 671.19,446.21 673.33,446.21 673.59,446.21 675.47,446.21 676.98,446.21 677.61,446.21 679.02,446.21 679.75,446.21 681.46,446.21 681.89,446.21 683.76,446.21 684.03,446.21 686.17,446.21 687.83,446.21 688.31,446.21 690.28,446.21 690.45,446.21 691.90,446.21 692.59,446.21 694.35,446.21 694.72,446.21 696.86,446.21 697.33,446.21 699.00,446.21 700.04,446.21 701.14,446.21 703.28,446.21 703.44,446.21 705.20,446.21 705.42,446.21 707.51,446.21 707.56,446.21 709.70,446.21 709.81,446.21 711.84,446.21 713.61,446.21 713.98,446.21 716.05,446.21 716.12,446.21 717.68,446.21 718.26,446.21 720.39,446.21 720.40,446.21 722.54,446.21 723.11,446.21 724.68,446.21 725.82,446.21 726.82,446.21 728.53,446.21 728.95,446.21 730.16,446.21 731.09,446.21 733.01,446.21 733.23,446.21 735.37,446.21 735.59,446.21 737.51,446.21 739.39,446.21 739.65,446.21 741.69,446.21 741.79,446.21 743.46,446.21 743.93,446.21 745.90,446.21 746.07,446.21 748.21,446.21 750.35,446.21 751.62,446.21 752.49,446.21 752.76,446.21 754.58,446.21 754.63,446.21 756.77,446.21 758.45,446.21 758.91,446.21 761.05,446.21 761.41,446.21 763.18,446.21 764.14,446.21 765.32,446.21 767.46,446.21 767.55,446.21 768.69,446.21 769.60,446.21 771.42,446.21 771.74,446.21 773.24,446.21 773.88,446.21 776.02,446.21 776.65,446.21 777.79,446.21 778.16,446.21 778.93,446.21 780.07,446.21 780.30,446.21 781.21,446.21 782.44,446.21 782.80,446.21 784.16,446.21 784.58,446.21 784.62,446.21 786.72,446.21 786.90,446.21 788.86,446.21 789.63,446.21 791.00,446.21 792.59,446.21 793.14,446.21 794.86,446.21 795.28,446.21 796.00,446.21 796.45,446.21 797.41,446.21 797.82,446.21 799.41,446.21 799.55,446.21 801.01,446.21 801.69,446.21 802.83,446.21 803.83,446.21 803.96,446.21 805.56,446.21 805.97,446.21 807.38,446.21 808.11,446.21 809.65,446.21 810.11,446.21 810.25,446.21 811.93,446.21 812.39,446.21 814.53,446.21 814.66,446.21 816.48,446.21 816.67,446.21 817.62,446.21 818.76,446.21 818.81,446.21 819.21,446.21 820.58,446.21 820.95,446.21 823.09,446.21 823.31,446.21 825.23,446.21 826.72,446.21 827.37,446.21 829.51,446.21 830.14,446.21 831.64,446.21 833.55,446.21 833.78,446.21 835.37,446.21 835.92,446.21 836.96,446.21 838.06,446.21 840.20,446.21 841.52,446.21 842.34,446.21 843.79,446.21 844.48,446.21 844.93,446.21 846.07,446.21 846.52,446.21 846.62,446.21 848.34,446.21 848.76,446.21 848.80,446.21 850.90,446.21 852.44,446.21 852.89,446.21 853.04,446.21 855.18,446.21 857.32,446.21 857.45,446.21 859.27,446.21 859.46,446.21 861.54,446.21 861.60,446.21 862.45,446.21 863.14,446.21 863.74,446.21 865.87,446.21 868.01,446.21 868.83,446.21 870.15,446.21 871.10,446.21 872.29,446.21 872.92,446.21 874.43,446.21 875.65,446.21 876.57,446.21 878.71,446.21 879.07,446.21 880.85,446.21 881.34,446.21 882.03,446.21 882.99,446.21 883.62,446.21 885.13,446.21 887.03,446.21 887.27,446.21 889.31,446.21 889.41,446.21 891.55,446.21 891.58,446.21 892.89,446.21 893.69,446.21 894.92,446.21 895.83,446.21 897.36,446.21 897.97,446.21 899.67,446.21 900.10,446.21 902.24,446.21 902.38,446.21 904.38,446.21 904.42,446.21 906.52,446.21 908.49,446.21 908.66,446.21 910.52,446.21 910.80,446.21 912.56,446.21 912.94,446.21 915.08,446.21 915.54,446.21 917.22,446.21 918.66,446.21 919.36,446.21 920.69,446.21 921.50,446.21 922.73,446.21 923.64,446.21 925.44,446.21 925.78,446.21 927.92,446.21 928.83,446.21 930.06,446.21 932.20,446.21 934.26,446.21 934.33,446.21 935.89,446.21 936.47,446.21 938.33,446.21 938.61,446.21 940.75,446.21 941.72,446.21 942.89,446.21 943.75,446.21 945.03,446.21 947.15,446.21 947.17,446.21 949.31,446.21 950.54,446.21 951.45,446.21 953.25,446.21 953.59,446.21 955.73,446.21 955.96,446.21 957.87,446.21 960.01,446.21 960.03,446.21 961.39,446.21 962.15,446.21 964.10,446.21 964.29,446.21 966.43,446.21 966.81,446.21 968.56,446.21 970.21,446.21 970.70,446.21 972.84,446.21 972.92,446.21 974.28,446.21 974.98,446.21 976.58,446.21 977.12,446.21 979.26,446.21 979.70,446.21 981.40,446.21 983.09,446.21 983.54,446.21 985.68,446.21 986.48,446.21 987.82,446.21 987.84,446.21 989.60,446.21 989.96,446.21 992.10,446.21 992.32,446.21 994.24,446.21 995.30,446.21 996.38,446.21 998.52,446.21 998.69,446.21 1000.05,446.21 1000.66,446.21 1002.79,446.21 1003.44,446.21 1004.80,446.21 1004.93,446.21 1007.07,446.21 1007.51,446.21 1009.21,446.21 1010.90,446.21 1011.35,446.21 1012.94,446.21 1013.49,446.21 1015.38,446.21 1015.63,446.21 1017.68,446.21 1017.77,446.21 1019.91,446.21 1020.40,446.21 1022.05,446.21 1023.11,446.21 1024.19,446.21 1025.82,446.21 1026.33,446.21 1028.47,446.21 1028.53,446.21 1030.57,446.21 1030.61,446.21 1032.75,446.21 1033.28,446.21 1034.89,446.21 1036.67,446.21 1037.02,446.21 1038.44,446.21 1039.16,446.21 1041.15,446.21 1041.30,446.21 1043.44,446.21 1045.58,446.21 1046.17,446.21 1047.72,446.21 1049.56,446.21 1049.86,446.21 1052.00,446.21 1052.00,450.3"/><polygon fill="#d2ec8a" points="438.00,450.3 438.00,447.01 440.14,447.01 442.20,447.01 442.28,447.01 444.42,447.01 446.56,447.01 447.62,447.01 448.70,447.01 450.34,447.01 450.84,447.01 452.98,447.01 453.05,447.01 455.11,447.01 457.11,447.01 457.25,447.01 459.15,447.01 459.39,447.01 461.18,447.01 461.53,447.01 463.22,447.01 463.67,447.01 465.81,447.01 465.93,447.01 467.95,447.01 469.32,447.01 470.09,447.01 472.03,447.01 472.23,447.01 474.06,447.01 474.37,447.01 476.51,447.01 476.77,447.01 478.65,447.01 479.08,447.01 480.79,447.01 482.87,447.01 482.93,447.01 485.07,447.01 485.59,447.01 486.94,447.01 487.21,447.01 489.25,447.01 489.34,447.01 491.48,447.01 491.69,447.01 493.62,447.01 495.08,447.01 495.76,447.01 497.79,447.01 497.90,447.01 499.82,447.01 500.04,447.01 502.18,447.01 502.53,447.01 504.32,447.01 504.57,447.01 506.46,447.01 508.36,447.01 508.60,447.01 509.99,447.01 510.74,447.01 512.02,447.01 512.88,447.01 515.02,447.01 515.14,447.01 517.16,447.01 518.12,447.01 519.30,447.01 521.44,447.01 523.55,447.01 523.57,447.01 524.90,447.01 525.71,447.01 527.61,447.01 527.85,447.01 529.99,447.01 530.33,447.01 532.13,447.01 533.71,447.01 534.27,447.01 536.41,447.01 537.10,447.01 538.55,447.01 540.49,447.01 540.69,447.01 542.83,447.01 543.20,447.01 544.97,447.01 546.59,447.01 547.11,447.01 549.25,447.01 549.98,447.01 551.07,447.01 551.39,447.01 553.37,447.01 553.53,447.01 555.67,447.01 556.08,447.01 557.80,447.01 559.47,447.01 559.94,447.01 562.08,447.01 562.19,447.01 564.22,447.01 566.25,447.01 566.36,447.01 568.29,447.01 568.50,447.01 570.64,447.01 572.35,447.01 572.78,447.01 574.92,447.01 575.74,447.01 577.06,447.01 577.10,447.01 579.13,447.01 579.20,447.01 581.34,447.01 581.84,447.01 583.48,447.01 585.23,447.01 585.62,447.01 587.27,447.01 587.76,447.01 588.89,447.01 589.90,447.01 592.01,447.01 592.03,447.01 594.17,447.01 596.08,447.01 596.31,447.01 598.45,447.01 600.59,447.01 600.82,447.01 602.45,447.01 602.73,447.01 604.87,447.01 604.89,447.01 607.01,447.01 607.60,447.01 609.15,447.01 609.64,447.01 611.29,447.01 611.67,447.01 613.43,447.01 613.70,447.01 615.57,447.01 615.74,447.01 617.71,447.01 617.77,447.01 619.85,447.01 621.16,447.01 621.99,447.01 623.19,447.01 624.13,447.01 626.26,447.01 626.58,447.01 627.87,447.01 628.40,447.01 628.62,447.01 629.77,447.01 630.54,447.01 632.21,447.01 632.68,447.01 634.25,447.01 634.82,447.01 636.01,447.01 636.96,447.01 638.99,447.01 639.10,447.01 641.03,447.01 641.24,447.01 643.06,447.01 643.38,447.01 645.10,447.01 645.52,447.01 647.54,447.01 647.66,447.01 649.80,447.01 650.53,447.01 651.94,447.01 652.56,447.01 653.92,447.01 654.08,447.01 656.22,447.01 658.36,447.01 658.67,447.01 660.49,447.01 660.70,447.01 662.63,447.01 663.41,447.01 664.77,447.01 665.45,447.01 666.91,447.01 668.57,447.01 669.05,447.01 670.88,447.01 671.19,447.01 673.33,447.01 673.59,447.01 675.47,447.01 676.98,447.01 677.61,447.01 679.02,447.01 679.75,447.01 681.46,447.01 681.89,447.01 683.76,447.01 684.03,447.01 686.17,447.01 687.83,447.01 688.31,447.01 690.28,447.01 690.45,447.01 691.90,447.01 692.59,447.01 694.35,447.01 694.72,447.01 696.86,447.01 697.33,447.01 699.00,447.01 700.04,447.01 701.14,447.01 703.28,447.01 703.44,447.01 705.20,447.01 705.42,447.01 707.51,447.01 707.56,447.01 709.70,447.01 709.81,447.01 711.84,447.01 713.61,447.01 713.98,447.01 716.05,447.01 716.12,447.01 717.68,447.01 718.26,447.01 720.39,447.01 720.40,447.01 722.54,447.01 723.11,447.01 724.68,447.01 725.82,447.01 726.82,447.01 728.53,447.01 728.95,447.01 730.16,447.01 731.09,447.01 733.01,447.01 733.23,447.01 735.37,447.01 735.59,447.01 737.51,447.01 739.39,447.01 739.65,447.01 741.69,447.01 741.79,447.01 743.46,447.01 743.93,447.01 745.90,447.01 746.07,447.01 748.21,447.01 750.35,447.01 751.62,447.01 752.49,447.01 752.76,447.01 754.58,447.01 754.63,447.01 756.77,447.01 758.45,447.01 758.91,447.01 761.05,447.01 761.41,447.01 763.18,447.01 764.14,447.01 765.32,447.01 767.46,447.01 767.55,447.01 768.69,447.01 769.60,447.01 771.42,447.01 771.74,447.01 773.24,447.01 773.88,447.01 776.02,447.01 776.65,447.01 777.79,447.01 778.16,447.01 778.93,447.01 780.07,447.01 780.30,447.01 781.21,447.01 782.44,447.01 782.80,447.01 784.16,447.01 784.58,447.01 784.62,447.01 786.72,447.01 786.90,447.01 788.86,447.01 789.63,447.01 791.00,447.01 792.59,447.01 793.14,447.01 794.86,447.01 795.28,447.01 796.00,447.01 796.45,447.01 797.41,447.01 797.82,447.01 799.41,447.01 799.55,447.01 801.01,447.01 801.69,447.01 802.83,447.01 803.83,447.01 803.96,447.01 805.56,447.01 805.97,447.01 807.38,447.01 808.11,447.01 809.65,447.01 810.11,447.01 810.25,447.01 811.93,447.01 812.39,447.01 814.53,447.01 814.66,447.01 816.48,447.01 816.67,447.01 817.62,447.01 818.76,447.01 818.81,447.01 819.21,447.01 820.58,447.01 820.95,447.01 823.09,447.01 823.31,447.01 825.23,447.01 826.72,447.01 827.37,447.01 829.51,447.01 830.14,447.01 831.64,447.01 833.55,447.01 833.78,447.01 835.37,447.01 835.92,447.01 836.96,447.01 838.06,447.01 840.20,447.01 841.52,447.01 842.34,447.01 843.79,447.01 844.48,447.01 844.93,447.01 846.07,447.01 846.52,447.01 846.62,447.01 848.34,447.01 848.76,447.01 848.80,447.01 850.90,447.01 852.44,447.01 852.89,447.01 853.04,447.01 855.18,447.01 857.32,447.01 857.45,447.01 859.27,447.01 859.46,447.01 861.54,447.01 861.60,447.01 862.45,447.01 863.14,447.01 863.74,447.01 865.87,447.01 868.01,447.01 868.83,447.01 870.15,447.01 871.10,447.01 872.29,447.01 872.92,447.01 874.43,447.01 875.65,447.01 876.57,447.01 878.71,447.01 879.07,447.01 880.85,447.01 881.34,447.01 882.03,447.01 882.99,447.01 883.62,447.01 885.13,447.01 887.03,447.01 887.27,447.01 889.31,447.01 889.41,447.01 891.55,447.01 891.58,447.01 892.89,447.01 893.69,447.01 894.92,447.01 895.83,447.01 897.36,447.01 897.97,447.01 899.67,447.01 900.10,447.01 902.24,447.01 902.38,447.01 904.38,447.01 904.42,447.01 906.52,447.01 908.49,447.01 908.66,447.01 910.52,447.01 910.80,447.01 912.56,447.01 912.94,447.01 915.08,447.01 915.54,447.01 917.22,447.01 918.66,447.01 919.36,447.01 920.69,447.01 921.50,447.01 922.73,447.01 923.64,447.01 925.44,447.01 925.78,447.01 927.92,447.01 928.83,447.01 930.06,447.01 932.20,447.01 934.26,447.01 934.33,447.01 935.89,447.01 936.47,447.01 938.33,447.01 938.61,447.01 940.75,447.01 941.72,447.01 942.89,447.01 943.75,447.01 945.03,447.01 947.15,447.01 947.17,447.01 949.31,447.01 950.54,447.01 951.45,447.01 953.25,447.01 953.59,447.01 955.73,447.01 955.96,447.01 957.87,447.01 960.01,447.01 960.03,447.01 961.39,447.01 962.15,447.01 964.10,447.01 964.29,447.01 966.43,447.01 966.81,447.01 968.56,447.01 970.21,447.01 970.70,447.01 972.84,447.01 972.92,447.01 974.28,447.01 974.98,447.01 976.58,447.01 977.12,447.01 979.26,447.01 979.70,447.01 981.40,447.01 983.09,447.01 983.54,447.01 985.68,447.01 986.48,447.01 987.82,447.01 987.84,447.01 989.60,447.01 989.96,447.01 992.10,447.01 992.32,447.01 994.24,447.01 995.30,447.01 996.38,447.01 998.52,447.01 998.69,447.01 1000.05,447.01 1000.66,447.01 1002.79,447.01 1003.44,447.01 1004.80,447.01 1004.93,447.01 1007.07,447.01 1007.51,447.01 1009.21,447.01 1010.90,447.01 1011.35,447.01 1012.94,447.01 1013.49,447.01 1015.38,447.01 1015.63,447.01 1017.68,447.01 1017.77,447.01 1019.91,447.01 1020.40,447.01 1022.05,447.01 1023.11,447.01 1024.19,447.01 1025.82,447.01 1026.33,447.01 1028.47,447.01 1028.53,447.01 1030.57,447.01 1030.61,447.01 1032.75,447.01 1033.28,447.01 1034.89,447.01 1036.67,447.01 1037.02,447.01 1038.44,447.01 1039.16,447.01 1041.15,447.01 1041.30,447.01 1043.44,447.01 1045.58,447.01 1046.17,447.01 1047.72,447.01 1049.56,447.01 1049.86,447.01 1052.00,447.01 1052.00,450.3"/><polygon fill="#fff0a0" points="438.00,450.3 438.00,448.18 440.14,448.18 442.20,448.18 442.28,448.18 444.42,448.18 446.56,448.18 447.62,448.18 448.70,448.18 450.34,448.18 450.84,448.18 452.98,448.18 453.05,448.18 455.11,448.18 457.11,448.18 457.25,448.18 459.15,448.18 459.39,448.18 461.18,448.18 461.53,448.18 463.22,448.18 463.67,448.18 465.81,448.18 465.93,448.18 467.95,448.18 469.32,448.18 470.09,448.18 472.03,448.18 472.23,448.18 474.06,448.18 474.37,448.18 476.51,448.18 476.77,448.18 478.65,448.18 479.08,448.18 480.79,448.18 482.87,448.18 482.93,448.18 485.07,448.18 485.59,448.18 486.94,448.18 487.21,448.18 489.25,448.18 489.34,448.18 491.48,448.18 491.69,448.18 493.62,448.18 495.08,448.18 495.76,448.18 497.79,448.18 497.90,448.18 499.82,448.18 500.04,448.18 502.18,448.18 502.53,448.18 504.32,448.18 504.57,448.18 506.46,448.18 508.36,448.18 508.60,448.18 509.99,448.18 510.74,448.18 512.02,448.18 512.88,448.18 515.02,448.18 515.14,448.18 517.16,448.18 518.12,448.18 519.30,448.18 521.44,448.18 523.55,448.18 523.57,448.18 524.90,448.18 525.71,448.18 527.61,448.18 527.85,448.18 529.99,448.18 530.33,448.18 532.13,448.18 533.71,448.18 534.27,448.18 536.41,448.18 537.10,448.18 538.55,448.18 540.49,448.18 540.69,448.18 542.83,448.18 543.20,448.18 544.97,448.18 546.59,448.18 547.11,448.18 549.25,448.18 549.98,448.18 551.07,448.18 551.39,448.18 553.37,448.18 553.53,448.18 555.67,448.18 556.08,448.18 557.80,448.18 559.47,448.18 559.94,448.18 562.08,448.18 562.19,448.18 564.22,448.18 566.25,448.18 566.36,448.18 568.29,448.18 568.50,448.18 570.64,448.18 572.35,448.18 572.78,448.18 574.92,448.18 575.74,448.18 577.06,448.18 577.10,448.18 579.13,448.18 579.20,448.18 581.34,448.18 581.84,448.18 583.48,448.18 585.23,448.18 585.62,448.18 587.27,448.18 587.76,448.18 588.89,448.18 589.90,448.18 592.01,448.18 592.03,448.18 594.17,448.18 596.08,448.18 596.31,448.18 598.45,448.18 600.59,448.18 600.82,448.18 602.45,448.18 602.73,448.18 604.87,448.18 604.89,448.18 607.01,448.18 607.60,448.18 609.15,448.18 609.64,448.18 611.29,448.18 611.67,448.18 613.43,448.18 613.70,448.18 615.57,448.18 615.74,448.18 617.71,448.18 617.77,448.18 619.85,448.18 621.16,448.18 621.99,448.18 623.19,448.18 624.13,448.18 626.26,448.18 626.58,448.18 627.87,448.18 628.40,448.18 628.62,448.18 629.77,448.18 630.54,448.18 632.21,448.18 632.68,448.18 634.25,448.18 634.82,448.18 636.01,448.18 636.96,448.18 638.99,448.18 639.10,448.18 641.03,448.18 641.24,448.18 643.06,448.18 643.38,448.18 645.10,448.18 645.52,448.18 647.54,448.18 647.66,448.18 649.80,448.18 650.53,448.18 651.94,448.18 652.56,448.18 653.92,448.18 654.08,448.18 656.22,448.18 658.36,448.18 658.67,448.18 660.49,448.18 660.70,448.18 662.63,448.18 663.41,448.18 664.77,448.18 665.45,448.18 666.91,448.18 668.57,448.18 669.05,448.18 670.88,448.18 671.19,448.18 673.33,448.18 673.59,448.18 675.47,448.18 676.98,448.18 677.61,448.18 679.02,448.18 679.75,448.18 681.46,448.18 681.89,448.18 683.76,448.18 684.03,448.18 686.17,448.18 687.83,448.18 688.31,448.18 690.28,448.18 690.45,448.18 691.90,448.18 692.59,448.18 694.35,448.18 694.72,448.18 696.86,448.18 697.33,448.18 699.00,448.18 700.04,448.18 701.14,448.18 703.28,448.18 703.44,448.18 705.20,448.18 705.42,448.18 707.51,448.18 707.56,448.18 709.70,448.18 709.81,448.18 711.84,448.18 713.61,448.18 713.98,448.18 716.05,448.18 716.12,448.18 717.68,448.18 718.26,448.18 720.39,448.18 720.40,448.18 722.54,448.18 723.11,448.18 724.68,448.18 725.82,448.18 726.82,448.18 728.53,448.18 728.95,448.18 730.16,448.18 731.09,448.18 733.01,448.18 733.23,448.18 735.37,448.18 735.59,448.18 737.51,448.18 739.39,448.18 739.65,448.18 741.69,448.18 741.79,448.18 743.46,448.18 743.93,448.18 745.90,448.18 746.07,448.18 748.21,448.18 750.35,448.18 751.62,448.18 752.49,448.18 752.76,448.18 754.58,448.18 754.63,448.18 756.77,448.18 758.45,448.18 758.91,448.18 761.05,448.18 761.41,448.18 763.18,448.18 764.14,448.18 765.32,448.18 767.46,448.18 767.55,448.18 768.69,448.18 769.60,448.18 771.42,448.18 771.74,448.18 773.24,448.18 773.88,448.18 776.02,448.18 776.65,448.18 777.79,448.18 778.16,448.18 778.93,448.18 780.07,448.18 780.30,448.18 781.21,448.18 782.44,448.18 782.80,448.18 784.16,448.18 784.58,448.18 784.62,448.18 786.72,448.18 786.90,448.18 788.86,448.18 789.63,448.18 791.00,448.18 792.59,448.18 793.14,448.18 794.86,448.18 795.28,448.18 796.00,448.18 796.45,448.18 797.41,448.18 797.82,448.18 799.41,448.18 799.55,448.18 801.01,448.18 801.69,448.18 802.83,448.18 803.83,448.18 803.96,448.18 805.56,448.18 805.97,448.18 807.38,448.18 808.11,448.18 809.65,448.18 810.11,448.18 810.25,448.18 811.93,448.18 812.39,448.18 814.53,448.18 814.66,448.18 816.48,448.18 816.67,448.18 817.62,448.18 818.76,448.18 818.81,448.18 819.21,448.18 820.58,448.18 820.95,448.18 823.09,448.18 823.31,448.18 825.23,448.18 826.72,448.18 827.37,448.18 829.51,448.18 830.14,448.18 831.64,448.18 833.55,448.18 833.78,448.18 835.37,448.18 835.92,448.18 836.96,448.18 838.06,448.18 840.20,448.18 841.52,448.18 842.34,448.18 843.79,448.18 844.48,448.18 844.93,448.18 846.07,448.18 846.52,448.18 846.62,448.18 848.34,448.18 848.76,448.18 848.80,448.18 850.90,448.18 852.44,448.18 852.89,448.18 853.04,448.18 855.18,448.18 857.32,448.18 857.45,448.18 859.27,448.18 859.46,448.18 861.54,448.18 861.60,448.18 862.45,448.18 863.14,448.18 863.74,448.18 865.87,448.18 868.01,448.18 868.83,448.18 870.15,448.18 871.10,448.18 872.29,448.18 872.92,448.18 874.43,448.18 875.65,448.18 876.57,448.18 878.71,448.18 879.07,448.18 880.85,448.18 881.34,448.18 882.03,448.18 882.99,448.18 883.62,448.18 885.13,448.18 887.03,448.18 887.27,448.18 889.31,448.18 889.41,448.18 891.55,448.18 891.58,448.18 892.89,448.18 893.69,448.18 894.92,448.18 895.83,448.18 897.36,448.18 897.97,448.18 899.67,448.18 900.10,448.18 902.24,448.18 902.38,448.18 904.38,448.18 904.42,448.18 906.52,448.18 908.49,448.18 908.66,448.18 910.52,448.18 910.80,448.18 912.56,448.18 912.94,448.18 915.08,448.18 915.54,448.18 917.22,448.18 918.66,448.18 919.36,448.18 920.69,448.18 921.50,448.18 922.73,448.18 923.64,448.18 925.44,448.18 925.78,448.18 927.92,448.18 928.83,448.18 930.06,448.18 932.20,448.18 934.26,448.18 934.33,448.18 935.89,448.18 936.47,448.18 938.33,448.18 938.61,448.18 940.75,448.18 941.72,448.18 942.89,448.18 943.75,448.18 945.03,448.18 947.15,448.18 947.17,448.18 949.31,448.18 950.54,448.18 951.45,448.18 953.25,448.18 953.59,448.18 955.73,448.18 955.96,448.18 957.87,448.18 960.01,448.18 960.03,448.18 961.39,448.18 962.15,448.18 964.10,448.18 964.29,448.18 966.43,448.18 966.81,448.18 968.56,448.18 970.21,448.18 970.70,448.18 972.84,448.18 972.92,448.18 974.28,448.18 974.98,448.18 976.58,448.18 977.12,448.18 979.26,448.18 979.70,448.18 981.40,448.18 983.09,448.18 983.54,448.18 985.68,448.18 986.48,448.18 987.82,448.18 987.84,448.18 989.60,448.18 989.96,448.18 992.10,448.18 992.32,448.18 994.24,448.18 995.30,448.18 996.38,448.18 998.52,448.18 998.69,448.18 1000.05,448.18 1000.66,448.18 1002.79,448.18 1003.44,448.18 1004.80,448.18 1004.93,448.18 1007.07,448.18 1007.51,448.18 1009.21,448.18 1010.90,448.18 1011.35,448.18 1012.94,448.18 1013.49,448.18 1015.38,448.18 1015.63,448.18 1017.68,448.18 1017.77,448.18 1019.91,448.18 1020.40,448.18 1022.05,448.18 1023.11,448.18 1024.19,448.18 1025.82,448.18 1026.33,448.18 1028.47,448.18 1028.53,448.18 1030.57,448.18 1030.61,448.18 1032.75,448.18 1033.28,448.18 1034.89,448.18 1036.67,448.18 1037.02,448.18 1038.44,448.18 1039.16,448.18 1041.15,448.18 1041.30,448.18 1043.44,448.18 1045.58,448.18 1046.17,448.18 1047.72,448.18 1049.56,448.18 1049.86,448.18 1052.00,448.18 1052.00,450.3"/><polygon fill="#ec545a" points="438.00,450.3 438.00,448.77 440.14,448.77 442.20,448.77 442.28,448.77 444.42,448.77 446.56,448.77 447.62,448.77 448.70,448.77 450.34,448.77 450.84,448.77 452.98,448.77 453.05,448.77 455.11,448.77 457.11,448.77 457.25,448.77 459.15,448.77 459.39,448.77 461.18,448.77 461.53,448.77 463.22,448.77 463.67,448.77 465.81,448.77 465.93,448.77 467.95,448.77 469.32,448.77 470.09,448.77 472.03,448.77 472.23,448.77 474.06,448.77 474.37,448.77 476.51,448.77 476.77,448.77 478.65,448.77 479.08,448.77 480.79,448.77 482.87,448.77 482.93,448.77 485.07,448.77 485.59,448.77 486.94,448.77 487.21,448.77 489.25,448.77 489.34,448.77 491.48,448.77 491.69,448.77 493.62,448.77 495.08,448.77 495.76,448.77 497.79,448.77 497.90,448.77 499.82,448.77 500.04,448.77 502.18,448.77 502.53,448.77 504.32,448.77 504.57,448.77 506.46,448.77 508.36,448.77 508.60,448.77 509.99,448.77 510.74,448.77 512.02,448.77 512.88,448.77 515.02,448.77 515.14,448.77 517.16,448.77 518.12,448.77 519.30,448.77 521.44,448.77 523.55,448.77 523.57,448.77 524.90,448.77 525.71,448.77 527.61,448.77 527.85,448.77 529.99,448.77 530.33,448.77 532.13,448.77 533.71,448.77 534.27,448.77 536.41,448.77 537.10,448.77 538.55,448.77 540.49,448.77 540.69,448.77 542.83,448.77 543.20,448.77 544.97,448.77 546.59,448.77 547.11,448.77 549.25,448.77 549.98,448.77 551.07,448.77 551.39,448.77 553.37,448.77 553.53,448.77 555.67,448.77 556.08,448.77 557.80,448.77 559.47,448.77 559.94,448.77 562.08,448.77 562.19,448.77 564.22,448.77 566.25,448.77 566.36,448.77 568.29,448.77 568.50,448.77 570.64,448.77 572.35,448.77 572.78,448.77 574.92,448.77 575.74,448.77 577.06,448.77 577.10,448.77 579.13,448.77 579.20,448.77 581.34,448.77 581.84,448.77 583.48,448.77 585.23,448.77 585.62,448.77 587.27,448.77 587.76,448.77 588.89,448.77 589.90,448.77 592.01,448.77 592.03,448.77 594.17,448.77 596.08,448.77 596.31,448.77 598.45,448.77 600.59,448.77 600.82,448.77 602.45,448.77 602.73,448.77 604.87,448.77 604.89,448.77 607.01,448.77 607.60,448.77 609.15,448.77 609.64,448.77 611.29,448.77 611.67,448.77 613.43,448.77 613.70,448.77 615.57,448.77 615.74,448.77 617.71,448.77 617.77,448.77 619.85,448.77 621.16,448.77 621.99,448.77 623.19,448.77 624.13,448.77 626.26,448.77 626.58,448.77 627.87,448.77 628.40,448.77 628.62,448.77 629.77,448.77 630.54,448.77 632.21,448.77 632.68,448.77 634.25,448.77 634.82,448.77 636.01,448.77 636.96,448.77 638.99,448.77 639.10,448.77 641.03,448.77 641.24,448.77 643.06,448.77 643.38,448.77 645.10,448.77 645.52,448.77 647.54,448.77 647.66,448.77 649.80,448.77 650.53,448.77 651.94,448.77 652.56,448.77 653.92,448.77 654.08,448.77 656.22,448.77 658.36,448.77 658.67,448.77 660.49,448.77 660.70,448.77 662.63,448.77 663.41,448.77 664.77,448.77 665.45,448.77 666.91,448.77 668.57,448.77 669.05,448.77 670.88,448.77 671.19,448.77 673.33,448.77 673.59,448.77 675.47,448.77 676.98,448.77 677.61,448.77 679.02,448.77 679.75,448.77 681.46,448.77 681.89,448.77 683.76,448.77 684.03,448.77 686.17,448.77 687.83,448.77 688.31,448.77 690.28,448.77 690.45,448.77 691.90,448.77 692.59,448.77 694.35,448.77 694.72,448.77 696.86,448.77 697.33,448.77 699.00,448.77 700.04,448.77 701.14,448.77 703.28,448.77 703.44,448.77 705.20,448.77 705.42,448.77 707.51,448.77 707.56,448.77 709.70,448.77 709.81,448.77 711.84,448.77 713.61,448.77 713.98,448.77 716.05,448.77 716.12,448.77 717.68,448.77 718.26,448.77 720.39,448.77 720.40,448.77 722.54,448.77 723.11,448.77 724.68,448.77 725.82,448.77 726.82,448.77 728.53,448.77 728.95,448.77 730.16,448.77 731.09,448.77 733.01,448.77 733.23,448.77 735.37,448.77 735.59,448.77 737.51,448.77 739.39,448.77 739.65,448.77 741.69,448.77 741.79,448.77 743.46,448.77 743.93,448.77 745.90,448.77 746.07,448.77 748.21,448.77 750.35,448.77 751.62,448.77 752.49,448.77 752.76,448.77 754.58,448.77 754.63,448.77 756.77,448.77 758.45,448.77 758.91,448.77 761.05,448.77 761.41,448.77 763.18,448.77 764.14,448.77 765.32,448.77 767.46,448.77 767.55,448.77 768.69,448.77 769.60,448.77 771.42,448.77 771.74,448.77 773.24,448.77 773.88,448.77 776.02,448.77 776.65,448.77 777.79,448.77 778.16,448.77 778.93,448.77 780.07,448.77 780.30,448.77 781.21,448.77 782.44,448.77 782.80,448.77 784.16,448.77 784.58,448.77 784.62,448.77 786.72,448.77 786.90,448.77 788.86,448.77 789.63,448.77 791.00,448.77 792.59,448.77 793.14,448.77 794.86,448.77 795.28,448.77 796.00,448.77 796.45,448.77 797.41,448.77 797.82,448.77 799.41,448.77 799.55,448.77 801.01,448.77 801.69,448.77 802.83,448.77 803.83,448.77 803.96,448.77 805.56,448.77 805.97,448.77 807.38,448.77 808.11,448.77 809.65,448.77 810.11,448.77 810.25,448.77 811.93,448.77 812.39,448.77 814.53,448.77 814.66,448.77 816.48,448.77 816.67,448.77 817.62,448.77 818.76,448.77 818.81,448.77 819.21,448.77 820.58,448.77 820.95,448.77 823.09,448.77 823.31,448.77 825.23,448.77 826.72,448.77 827.37,448.77 829.51,448.77 830.14,448.77 831.64,448.77 833.55,448.77 833.78,448.77 835.37,448.77 835.92,448.77 836.96,448.77 838.06,448.77 840.20,448.77 841.52,448.77 842.34,448.77 843.79,448.77 844.48,448.77 844.93,448.77 846.07,448.77 846.52,448.77 846.62,448.77 848.34,448.77 848.76,448.77 848.80,448.77 850.90,448.77 852.44,448.77 852.89,448.77 853.04,448.77 855.18,448.77 857.32,448.77 857.45,448.77 859.27,448.77 859.46,448.77 861.54,448.77 861.60,448.77 862.45,448.77 863.14,448.77 863.74,448.77 865.87,448.77 868.01,448.77 868.83,448.77 870.15,448.77 871.10,448.77 872.29,448.77 872.92,448.77 874.43,448.77 875.65,448.77 876.57,448.77 878.71,448.77 879.07,448.77 880.85,448.77 881.34,448.77 882.03,448.77 882.99,448.77 883.62,448.77 885.13,448.77 887.03,448.77 887.27,448.77 889.31,448.77 889.41,448.77 891.55,448.77 891.58,448.77 892.89,448.77 893.69,448.77 894.92,448.77 895.83,448.77 897.36,448.77 897.97,448.77 899.67,448.77 900.10,448.77 902.24,448.77 902.38,448.77 904.38,448.77 904.42,448.77 906.52,448.77 908.49,448.77 908.66,448.77 910.52,448.77 910.80,448.77 912.56,448.77 912.94,448.77 915.08,448.77 915.54,448.77 917.22,448.77 918.66,448.77 919.36,448.77 920.69,448.77 921.50,448.77 922.73,448.77 923.64,448.77 925.44,448.77 925.78,448.77 927.92,448.77 928.83,448.77 930.06,448.77 932.20,448.77 934.26,448.77 934.33,448.77 935.89,448.77 936.47,448.77 938.33,448.77 938.61,448.77 940.75,448.77 941.72,448.77 942.89,448.77 943.75,448.77 945.03,448.77 947.15,448.77 947.17,448.77 949.31,448.77 950.54,448.77 951.45,448.77 953.25,448.77 953.59,448.77 955.73,448.77 955.96,448.77 957.87,448.77 960.01,448.77 960.03,448.77 961.39,448.77 962.15,448.77 964.10,448.77 964.29,448.77 966.43,448.77 966.81,448.77 968.56,448.77 970.21,448.77 970.70,448.77 972.84,448.77 972.92,448.77 974.28,448.77 974.98,448.77 976.58,448.77 977.12,448.77 979.26,448.77 979.70,448.77 981.40,448.77 983.09,448.77 983.54,448.77 985.68,448.77 986.48,448.77 987.82,448.77 987.84,448.77 989.60,448.77 989.96,448.77 992.10,448.77 992.32,448.77 994.24,448.77 995.30,448.77 996.38,448.77 998.52,448.77 998.69,448.77 1000.05,448.77 1000.66,448.77 1002.79,448.77 1003.44,448.77 1004.80,448.77 1004.93,448.77 1007.07,448.77 1007.51,448.77 1009.21,448.77 1010.90,448.77 1011.35,448.77 1012.94,448.77 1013.49,448.77 1015.38,448.77 1015.63,448.77 1017.68,448.77 1017.77,448.77 1019.91,448.77 1020.40,448.77 1022.05,448.77 1023.11,448.77 1024.19,448.77 1025.82,448.77 1026.33,448.77 1028.47,448.77 1028.53,448.77 1030.57,448.77 1030.61,448.77 1032.75,448.77 1033.28,448.77 1034.89,448.77 1036.67,448.77 1037.02,448.77 1038.44,448.77 1039.16,448.77 1041.15,448.77 1041.30,448.77 1043.44,448.77 1045.58,448.77 1046.17,448.77 1047.72,448.77 1049.56,448.77 1049.86,448.77 1052.00,448.77 1052.00,450.3"/><polygon fill="#6a6aa8" points="438.00,450.3 438.00,449.20 440.14,449.20 442.20,449.20 442.28,449.20 444.42,449.20 446.56,449.20 447.62,449.20 448.70,449.20 450.34,449.20 450.84,449.20 452.98,449.20 453.05,449.20 455.11,449.20 457.11,449.20 457.25,449.20 459.15,449.20 459.39,449.20 461.18,449.20 461.53,449.20 463.22,449.20 463.67,449.20 465.81,449.20 465.93,449.20 467.95,449.20 469.32,449.20 470.09,449.20 472.03,449.20 472.23,449.20 474.06,449.20 474.37,449.20 476.51,449.20 476.77,449.20 478.65,449.20 479.08,449.20 480.79,449.20 482.87,449.20 482.93,449.20 485.07,449.20 485.59,449.20 486.94,449.20 487.21,449.20 489.25,449.20 489.34,449.20 491.48,449.20 491.69,449.20 493.62,449.20 495.08,449.20 495.76,449.20 497.79,449.20 497.90,449.20 499.82,449.20 500.04,449.20 502.18,449.20 502.53,449.20 504.32,449.20 504.57,449.20 506.46,449.20 508.36,449.20 508.60,449.20 509.99,449.20 510.74,449.20 512.02,449.20 512.88,449.20 515.02,449.20 515.14,449.20 517.16,449.20 518.12,449.20 519.30,449.20 521.44,449.20 523.55,449.20 523.57,449.20 524.90,449.20 525.71,449.20 527.61,449.20 527.85,449.20 529.99,449.20 530.33,449.20 532.13,449.20 533.71,449.20 534.27,449.20 536.41,449.20 537.10,449.20 538.55,449.20 540.49,449.20 540.69,449.20 542.83,449.20 543.20,449.20 544.97,449.20 546.59,449.20 547.11,449.20 549.25,449.20 549.98,449.20 551.07,449.20 551.39,449.20 553.37,449.20 553.53,449.20 555.67,449.20 556.08,449.20 557.80,449.20 559.47,449.20 559.94,449.20 562.08,449.20 562.19,449.20 564.22,449.20 566.25,449.20 566.36,449.20 568.29,449.20 568.50,449.20 570.64,449.20 572.35,449.20 572.78,449.20 574.92,449.20 575.74,449.20 577.06,449.20 577.10,449.20 579.13,449.20 579.20,449.20 581.34,449.20 581.84,449.20 583.48,449.20 585.23,449.20 585.62,449.20 587.27,449.20 587.76,449.20 588.89,449.20 589.90,449.20 592.01,449.20 592.03,449.20 594.17,449.20 596.08,449.20 596.31,449.20 598.45,449.20 600.59,449.20 600.82,449.20 602.45,449.20 602.73,449.20 604.87,449.20 604.89,449.20 607.01,449.20 607.60,449.20 609.15,449.20 609.64,449.20 611.29,449.20 611.67,449.20 613.43,449.20 613.70,449.20 615.57,449.20 615.74,449.20 617.71,449.20 617.77,449.20 619.85,449.20 621.16,449.20 621.99,449.20 623.19,449.20 624.13,449.20 626.26,449.20 626.58,449.20 627.87,449.20 628.40,449.20 628.62,449.20 629.77,449.20 630.54,449.20 632.21,449.20 632.68,449.20 634.25,449.20 634.82,449.20 636.01,449.20 636.96,449.20 638.99,449.20 639.10,449.20 641.03,449.20 641.24,449.20 643.06,449.20 643.38,449.20 645.10,449.20 645.52,449.20 647.54,449.20 647.66,449.20 649.80,449.20 650.53,449.20 651.94,449.20 652.56,449.20 653.92,449.20 654.08,449.20 656.22,449.20 658.36,449.20 658.67,449.20 660.49,449.20 660.70,449.20 662.63,449.20 663.41,449.20 664.77,449.20 665.45,449.20 666.91,449.20 668.57,449.20 669.05,449.20 670.88,449.20 671.19,449.20 673.33,449.20 673.59,449.20 675.47,449.20 676.98,449.20 677.61,449.20 679.02,449.20 679.75,449.20 681.46,449.20 681.89,449.20 683.76,449.20 684.03,449.20 686.17,449.20 687.83,449.20 688.31,449.20 690.28,449.20 690.45,449.20 691.90,449.20 692.59,449.20 694.35,449.20 694.72,449.20 696.86,449.20 697.33,449.20 699.00,449.20 700.04,449.20 701.14,449.20 703.28,449.20 703.44,449.20 705.20,449.20 705.42,449.20 707.51,449.20 707.56,449.20 709.70,449.20 709.81,449.20 711.84,449.20 713.61,449.20 713.98,449.20 716.05,449.20 716.12,449.20 717.68,449.20 718.26,449.20 720.39,449.20 720.40,449.20 722.54,449.20 723.11,449.20 724.68,449.20 725.82,449.20 726.82,449.20 728.53,449.20 728.95,449.20 730.16,449.20 731.09,449.20 733.01,449.20 733.23,449.20 735.37,449.20 735.59,449.20 737.51,449.20 739.39,449.20 739.65,449.20 741.69,449.20 741.79,449.20 743.46,449.20 743.93,449.20 745.90,449.20 746.07,449.20 748.21,449.20 750.35,449.20 751.62,449.20 752.49,449.20 752.76,449.20 754.58,449.20 754.63,449.20 756.77,449.20 758.45,449.20 758.91,449.20 761.05,449.20 761.41,449.20 763.18,449.20 764.14,449.20 765.32,449.20 767.46,449.20 767.55,449.20 768.69,449.20 769.60,449.20 771.42,449.20 771.74,449.20 773.24,449.20 773.88,449.20 776.02,449.20 776.65,449.20 777.79,449.20 778.16,449.20 778.93,449.20 780.07,449.20 780.30,449.20 781.21,449.20 782.44,449.20 782.80,449.20 784.16,449.20 784.58,449.20 784.62,449.20 786.72,449.20 786.90,449.20 788.86,449.20 789.63,449.20 791.00,449.20 792.59,449.20 793.14,449.20 794.86,449.20 795.28,449.20 796.00,449.20 796.45,449.20 797.41,449.20 797.82,449.20 799.41,449.20 799.55,449.20 801.01,449.20 801.69,449.20 802.83,449.20 803.83,449.20 803.96,449.20 805.56,449.20 805.97,449.20 807.38,449.20 808.11,449.20 809.65,449.20 810.11,449.20 810.25,449.20 811.93,449.20 812.39,449.20 814.53,449.20 814.66,449.20 816.48,449.20 816.67,449.20 817.62,449.20 818.76,449.20 818.81,449.20 819.21,449.20 820.58,449.20 820.95,449.20 823.09,449.20 823.31,449.20 825.23,449.20 826.72,449.20 827.37,449.20 829.51,449.20 830.14,449.20 831.64,449.20 833.55,449.20 833.78,449.20 835.37,449.20 835.92,449.20 836.96,449.20 838.06,449.20 840.20,449.20 841.52,449.20 842.34,449.20 843.79,449.20 844.48,449.20 844.93,449.20 846.07,449.20 846.52,449.20 846.62,449.20 848.34,449.20 848.76,449.20 848.80,449.20 850.90,449.20 852.44,449.20 852.89,449.20 853.04,449.20 855.18,449.20 857.32,449.20 857.45,449.20 859.27,449.20 859.46,449.20 861.54,449.20 861.60,449.20 862.45,449.20 863.14,449.20 863.74,449.20 865.87,449.20 868.01,449.20 868.83,449.20 870.15,449.20 871.10,449.20 872.29,449.20 872.92,449.20 874.43,449.20 875.65,449.20 876.57,449.20 878.71,449.20 879.07,449.20 880.85,449.20 881.34,449.20 882.03,449.20 882.99,449.20 883.62,449.20 885.13,449.20 887.03,449.20 887.27,449.20 889.31,449.20 889.41,449.20 891.55,449.20 891.58,449.20 892.89,449.20 893.69,449.20 894.92,449.20 895.83,449.20 897.36,449.20 897.97,449.20 899.67,449.20 900.10,449.20 902.24,449.20 902.38,449.20 904.38,449.20 904.42,449.20 906.52,449.20 908.49,449.20 908.66,449.20 910.52,449.20 910.80,449.20 912.56,449.20 912.94,449.20 915.08,449.20 915.54,449.20 917.22,449.20 918.66,449.20 919.36,449.20 920.69,449.20 921.50,449.20 922.73,449.20 923.64,449.20 925.44,449.20 925.78,449.20 927.92,449.20 928.83,449.20 930.06,449.20 932.20,449.20 934.26,449.20 934.33,449.20 935.89,449.20 936.47,449.20 938.33,449.20 938.61,449.20 940.75,449.20 941.72,449.20 942.89,449.20 943.75,449.20 945.03,449.20 947.15,449.20 947.17,449.20 949.31,449.20 950.54,449.20 951.45,449.20 953.25,449.20 953.59,449.20 955.73,449.20 955.96,449.20 957.87,449.20 960.01,449.20 960.03,449.20 961.39,449.20 962.15,449.20 964.10,449.20 964.29,449.20 966.43,449.20 966.81,449.20 968.56,449.20 970.21,449.20 970.70,449.20 972.84,449.20 972.92,449.20 974.28,449.20 974.98,449.20 976.58,449.20 977.12,449.20 979.26,449.20 979.70,449.20 981.40,449.20 983.09,449.20 983.54,449.20 985.68,449.20 986.48,449.20 987.82,449.20 987.84,449.20 989.60,449.20 989.96,449.20 992.10,449.20 992.32,449.20 994.24,449.20 995.30,449.20 996.38,449.20 998.52,449.20 998.69,449.20 1000.05,449.20 1000.66,449.20 1002.79,449.20 1003.44,449.20 1004.80,449.20 1004.93,449.20 1007.07,449.20 1007.51,449.20 1009.21,449.20 1010.90,449.20 1011.35,449.20 1012.94,449.20 1013.49,449.20 1015.38,449.20 1015.63,449.20 1017.68,449.20 1017.77,449.20 1019.91,449.20 1020.40,449.20 1022.05,449.20 1023.11,449.20 1024.19,449.20 1025.82,449.20 1026.33,449.20 1028.47,449.20 1028.53,449.20 1030.57,449.20 1030.61,449.20 1032.75,449.20 1033.28,449.20 1034.89,449.20 1036.67,449.20 1037.02,449.20 1038.44,449.20 1039.16,449.20 1041.15,449.20 1041.30,449.20 1043.44,449.20 1045.58,449.20 1046.17,449.20 1047.72,449.20 1049.56,449.20 1049.86,449.20 1052.00,449.20 1052.00,450.3"/><polygon fill="#5a8578" points="438.00,450.3 438.00,449.42 440.14,449.42 442.20,449.42 442.28,449.42 444.42,449.42 446.56,449.42 447.62,449.42 448.70,449.42 450.34,449.42 450.84,449.42 452.98,449.42 453.05,449.42 455.11,449.42 457.11,449.42 457.25,449.42 459.15,449.42 459.39,449.42 461.18,449.42 461.53,449.42 463.22,449.42 463.67,449.42 465.81,449.42 465.93,449.42 467.95,449.42 469.32,449.42 470.09,449.42 472.03,449.42 472.23,449.42 474.06,449.42 474.37,449.42 476.51,449.42 476.77,449.42 478.65,449.42 479.08,449.42 480.79,449.42 482.87,449.42 482.93,449.42 485.07,449.42 485.59,449.42 486.94,449.42 487.21,449.42 489.25,449.42 489.34,449.42 491.48,449.42 491.69,449.42 493.62,449.42 495.08,449.42 495.76,449.42 497.79,449.42 497.90,449.42 499.82,449.42 500.04,449.42 502.18,449.42 502.53,449.42 504.32,449.42 504.57,449.42 506.46,449.42 508.36,449.42 508.60,449.42 509.99,449.42 510.74,449.42 512.02,449.42 512.88,449.42 515.02,449.42 515.14,449.42 517.16,449.42 518.12,449.42 519.30,449.42 521.44,449.42 523.55,449.42 523.57,449.42 524.90,449.42 525.71,449.42 527.61,449.42 527.85,449.42 529.99,449.42 530.33,449.42 532.13,449.42 533.71,449.42 534.27,449.42 536.41,449.42 537.10,449.42 538.55,449.42 540.49,449.42 540.69,449.42 542.83,449.42 543.20,449.42 544.97,449.42 546.59,449.42 547.11,449.42 549.25,449.42 549.98,449.42 551.07,449.42 551.39,449.42 553.37,449.42 553.53,449.42 555.67,449.42 556.08,449.42 557.80,449.42 559.47,449.42 559.94,449.42 562.08,449.42 562.19,449.42 564.22,449.42 566.25,449.42 566.36,449.42 568.29,449.42 568.50,449.42 570.64,449.42 572.35,449.42 572.78,449.42 574.92,449.42 575.74,449.42 577.06,449.42 577.10,449.42 579.13,449.42 579.20,449.42 581.34,449.42 581.84,449.42 583.48,449.42 585.23,449.42 585.62,449.42 587.27,449.42 587.76,449.42 588.89,449.42 589.90,449.42 592.01,449.42 592.03,449.42 594.17,449.42 596.08,449.42 596.31,449.42 598.45,449.42 600.59,449.42 600.82,449.42 602.45,449.42 602.73,449.42 604.87,449.42 604.89,449.42 607.01,449.42 607.60,449.42 609.15,449.42 609.64,449.42 611.29,449.42 611.67,449.42 613.43,449.42 613.70,449.42 615.57,449.42 615.74,449.42 617.71,449.42 617.77,449.42 619.85,449.42 621.16,449.42 621.99,449.42 623.19,449.42 624.13,449.42 626.26,449.42 626.58,449.42 627.87,449.42 628.40,449.42 628.62,449.42 629.77,449.42 630.54,449.42 632.21,449.42 632.68,449.42 634.25,449.42 634.82,449.42 636.01,449.42 636.96,449.42 638.99,449.42 639.10,449.42 641.03,449.42 641.24,449.42 643.06,449.42 643.38,449.42 645.10,449.42 645.52,449.42 647.54,449.42 647.66,449.42 649.80,449.42 650.53,449.42 651.94,449.42 652.56,449.42 653.92,449.42 654.08,449.42 656.22,449.42 658.36,449.42 658.67,449.42 660.49,449.42 660.70,449.42 662.63,449.42 663.41,449.42 664.77,449.42 665.45,449.42 666.91,449.42 668.57,449.42 669.05,449.42 670.88,449.42 671.19,449.42 673.33,449.42 673.59,449.42 675.47,449.42 676.98,449.42 677.61,449.42 679.02,449.42 679.75,449.42 681.46,449.42 681.89,449.42 683.76,449.42 684.03,449.42 686.17,449.42 687.83,449.42 688.31,449.42 690.28,449.42 690.45,449.42 691.90,449.42 692.59,449.42 694.35,449.42 694.72,449.42 696.86,449.42 697.33,449.42 699.00,449.42 700.04,449.42 701.14,449.42 703.28,449.42 703.44,449.42 705.20,449.42 705.42,449.42 707.51,449.42 707.56,449.42 709.70,449.42 709.81,449.42 711.84,449.42 713.61,449.42 713.98,449.42 716.05,449.42 716.12,449.42 717.68,449.42 718.26,449.42 720.39,449.42 720.40,449.42 722.54,449.42 723.11,449.42 724.68,449.42 725.82,449.42 726.82,449.42 728.53,449.42 728.95,449.42 730.16,449.42 731.09,449.42 733.01,449.42 733.23,449.42 735.37,449.42 735.59,449.42 737.51,449.42 739.39,449.42 739.65,449.42 741.69,449.42 741.79,449.42 743.46,449.42 743.93,449.42 745.90,449.42 746.07,449.42 748.21,449.42 750.35,449.42 751.62,449.42 752.49,449.42 752.76,449.42 754.58,449.42 754.63,449.42 756.77,449.42 758.45,449.42 758.91,449.42 761.05,449.42 761.41,449.42 763.18,449.42 764.14,449.42 765.32,449.42 767.46,449.42 767.55,449.42 768.69,449.42 769.60,449.42 771.42,449.42 771.74,449.42 773.24,449.42 773.88,449.42 776.02,449.42 776.65,449.42 777.79,449.42 778.16,449.42 778.93,449.42 780.07,449.42 780.30,449.42 781.21,449.42 782.44,449.42 782.80,449.42 784.16,449.42 784.58,449.42 784.62,449.42 786.72,449.42 786.90,449.42 788.86,449.42 789.63,449.42 791.00,449.42 792.59,449.42 793.14,449.42 794.86,449.42 795.28,449.42 796.00,449.42 796.45,449.42 797.41,449.42 797.82,449.42 799.41,449.42 799.55,449.42 801.01,449.42 801.69,449.42 802.83,449.42 803.83,449.42 803.96,449.42 805.56,449.42 805.97,449.42 807.38,449.42 808.11,449.42 809.65,449.42 810.11,449.42 810.25,449.42 811.93,449.42 812.39,449.42 814.53,449.42 814.66,449.42 816.48,449.42 816.67,449.42 817.62,449.42 818.76,449.42 818.81,449.42 819.21,449.42 820.58,449.42 820.95,449.42 823.09,449.42 823.31,449.42 825.23,449.42 826.72,449.42 827.37,449.42 829.51,449.42 830.14,449.42 831.64,449.42 833.55,449.42 833.78,449.42 835.37,449.42 835.92,449.42 836.96,449.42 838.06,449.42 840.20,449.42 841.52,449.42 842.34,449.42 843.79,449.42 844.48,449.42 844.93,449.42 846.07,449.42 846.52,449.42 846.62,449.42 848.34,449.42 848.76,449.42 848.80,449.42 850.90,449.42 852.44,449.42 852.89,449.42 853.04,449.42 855.18,449.42 857.32,449.42 857.45,449.42 859.27,449.42 859.46,449.42 861.54,449.42 861.60,449.42 862.45,449.42 863.14,449.42 863.74,449.42 865.87,449.42 868.01,449.42 868.83,449.42 870.15,449.42 871.10,449.42 872.29,449.42 872.92,449.42 874.43,449.42 875.65,449.42 876.57,449.42 878.71,449.42 879.07,449.42 880.85,449.42 881.34,449.42 882.03,449.42 882.99,449.42 883.62,449.42 885.13,449.42 887.03,449.42 887.27,449.42 889.31,449.42 889.41,449.42 891.55,449.42 891.58,449.42 892.89,449.42 893.69,449.42 894.92,449.42 895.83,449.42 897.36,449.42 897.97,449.42 899.67,449.42 900.10,449.42 902.24,449.42 902.38,449.42 904.38,449.42 904.42,449.42 906.52,449.42 908.49,449.42 908.66,449.42 910.52,449.42 910.80,449.42 912.56,449.42 912.94,449.42 915.08,449.42 915.54,449.42 917.22,449.42 918.66,449.42 919.36,449.42 920.69,449.42 921.50,449.42 922.73,449.42 923.64,449.42 925.44,449.42 925.78,449.42 927.92,449.42 928.83,449.42 930.06,449.42 932.20,449.42 934.26,449.42 934.33,449.42 935.89,449.42 936.47,449.42 938.33,449.42 938.61,449.42 940.75,449.42 941.72,449.42 942.89,449.42 943.75,449.42 945.03,449.42 947.15,449.42 947.17,449.42 949.31,449.42 950.54,449.42 951.45,449.42 953.25,449.42 953.59,449.42 955.73,449.42 955.96,449.42 957.87,449.42 960.01,449.42 960.03,449.42 961.39,449.42 962.15,449.42 964.10,449.42 964.29,449.42 966.43,449.42 966.81,449.42 968.56,449.42 970.21,449.42 970.70,449.42 972.84,449.42 972.92,449.42 974.28,449.42 974.98,449.42 976.58,449.42 977.12,449.42 979.26,449.42 979.70,449.42 981.40,449.42 983.09,449.42 983.54,449.42 985.68,449.42 986.48,449.42 987.82,449.42 987.84,449.42 989.60,449.42 989.96,449.42 992.10,449.42 992.32,449.42 994.24,449.42 995.30,449.42 996.38,449.42 998.52,449.42 998.69,449.42 1000.05,449.42 1000.66,449.42 1002.79,449.42 1003.44,449.42 1004.80,449.42 1004.93,449.42 1007.07,449.42 1007.51,449.42 1009.21,449.42 1010.90,449.42 1011.35,449.42 1012.94,449.42 1013.49,449.42 1015.38,449.42 1015.63,449.42 1017.68,449.42 1017.77,449.42 1019.91,449.42 1020.40,449.42 1022.05,449.42 1023.11,449.42 1024.19,449.42 1025.82,449.42 1026.33,449.42 1028.47,449.42 1028.53,449.42 1030.57,449.42 1030.61,449.42 1032.75,449.42 1033.28,449.42 1034.89,449.42 1036.67,449.42 1037.02,449.42 1038.44,449.42 1039.16,449.42 1041.15,449.42 1041.30,449.42 1043.44,449.42 1045.58,449.42 1046.17,449.42 1047.72,449.42 1049.56,449.42 1049.86,449.42 1052.00,449.42 1052.00,450.3"/><polyline fill="none" stroke="#419341" stroke-width="0.6" stroke-opacity="0.75" points="438.00,412.02 440.14,413.57 442.20,411.59 442.28,411.51 444.42,414.22 446.56,415.14 447.62,414.59 448.70,414.01 450.34,407.77 450.84,405.90 452.98,418.46 453.05,418.55 455.11,421.12 457.11,418.90 457.25,418.74 459.15,420.25 459.39,420.44 461.18,420.32 461.53,420.30 463.22,416.29 463.67,415.22 465.81,420.73 465.93,420.75 467.95,420.91 469.32,417.98 470.09,416.32 472.03,409.31 472.23,408.59 474.06,406.58 474.37,406.23 476.51,377.30 476.77,380.90 478.65,406.92 479.08,409.57 480.79,420.10 482.87,425.15 482.93,425.28 485.07,422.75 485.59,422.17 486.94,420.66 487.21,420.36 489.25,421.31 489.34,421.35 491.48,422.97 491.69,422.85 493.62,421.72 495.08,421.89 495.76,421.97 497.79,418.65 497.90,418.47 499.82,417.94 500.04,417.88 502.18,406.60 502.53,407.86 504.32,414.33 504.57,415.15 506.46,421.39 508.36,422.09 508.60,422.17 509.99,423.55 510.74,424.30 512.02,423.80 512.88,423.45 515.02,418.69 515.14,418.90 517.16,422.37 518.12,421.66 519.30,420.79 521.44,419.44 523.55,417.48 523.57,417.47 524.90,416.62 525.71,416.10 527.61,407.68 527.85,406.61 529.99,419.66 530.33,420.27 532.13,423.40 533.71,424.40 534.27,424.76 536.41,422.21 537.10,421.39 538.55,419.65 540.49,424.52 540.69,425.02 542.83,418.85 543.20,418.43 544.97,416.45 546.59,415.12 547.11,414.69 549.25,415.26 549.98,414.58 551.07,413.57 551.39,413.27 553.37,408.76 553.53,408.42 555.67,418.59 556.08,419.05 557.80,421.00 559.47,421.17 559.94,421.21 562.08,424.98 562.19,424.79 564.22,421.08 566.25,422.07 566.36,422.12 568.29,422.20 568.50,422.21 570.64,418.30 572.35,421.20 572.78,421.94 574.92,416.37 575.74,415.34 577.06,413.67 577.10,413.57 579.13,408.61 579.20,408.45 581.34,419.47 581.84,420.03 583.48,421.88 585.23,423.49 585.62,423.84 587.27,421.35 587.76,420.62 588.89,421.83 589.90,422.91 592.01,421.81 592.03,421.80 594.17,422.11 596.08,424.31 596.31,424.57 598.45,416.16 600.59,418.82 600.82,418.65 602.45,417.34 602.73,417.12 604.87,413.99 604.89,414.02 607.01,417.75 607.60,419.35 609.15,423.57 609.64,422.17 611.29,417.48 611.67,417.75 613.43,419.01 613.70,418.72 615.57,416.67 615.74,416.99 617.71,420.62 617.77,420.67 619.85,422.36 621.16,420.00 621.99,418.51 623.19,417.76 624.13,417.17 626.26,415.78 626.58,415.58 627.87,414.77 628.40,414.44 628.62,412.25 629.77,400.63 630.54,392.85 632.21,390.47 632.68,389.80 634.25,412.62 634.82,420.93 636.01,419.74 636.96,418.76 638.99,419.52 639.10,419.56 641.03,418.23 641.24,418.08 643.06,420.05 643.38,420.40 645.10,421.21 645.52,421.41 647.54,421.40 647.66,421.40 649.80,423.11 650.53,422.98 651.94,422.73 652.56,420.36 653.92,415.16 654.08,414.55 656.22,406.15 658.36,418.52 658.67,419.25 660.49,423.50 660.70,423.35 662.63,421.89 663.41,422.67 664.77,424.04 665.45,422.75 666.91,419.97 668.57,422.64 669.05,423.41 670.88,423.46 671.19,423.47 673.33,419.84 673.59,420.11 675.47,422.07 676.98,419.41 677.61,418.30 679.02,413.89 679.75,411.60 681.46,408.32 681.89,407.50 683.76,416.32 684.03,417.59 686.17,421.76 687.83,420.31 688.31,419.89 690.28,418.72 690.45,418.62 691.90,420.06 692.59,420.74 694.35,420.48 694.72,420.42 696.86,421.80 697.33,420.96 699.00,417.94 700.04,417.11 701.14,416.23 703.28,417.00 703.44,416.98 705.20,416.83 705.42,416.82 707.51,407.77 707.56,407.55 709.70,420.89 709.81,420.81 711.84,419.36 713.61,423.30 713.98,424.12 716.05,421.50 716.12,421.42 717.68,420.90 718.26,420.71 720.39,420.58 720.40,420.58 722.54,420.82 723.11,421.04 724.68,421.63 725.82,420.19 726.82,418.93 728.53,416.94 728.95,416.45 730.16,414.55 731.09,413.08 733.01,411.67 733.23,411.51 735.37,421.22 735.59,421.28 737.51,421.67 739.39,419.65 739.65,419.37 741.69,418.44 741.79,418.39 743.46,420.42 743.93,420.99 745.90,422.67 746.07,422.81 748.21,417.80 750.35,419.82 751.62,420.35 752.49,420.71 752.76,419.40 754.58,377.45 754.63,377.11 756.77,362.68 758.45,351.37 758.91,352.60 761.05,358.35 761.41,359.30 763.18,358.57 764.14,358.17 765.32,359.74 767.46,362.59 767.55,362.71 768.69,360.71 769.60,359.10 771.42,355.90 771.74,356.58 773.24,359.76 773.88,359.76 776.02,359.76 776.65,359.76 777.79,350.48 778.16,347.45 778.93,341.15 780.07,321.83 780.30,317.94 781.21,302.53 782.44,288.85 782.80,284.85 784.16,269.73 784.58,272.26 784.62,272.51 786.72,285.60 786.90,286.71 788.86,293.22 789.63,295.77 791.00,297.35 792.59,299.25 793.14,308.30 794.86,336.59 795.28,338.40 796.00,341.48 796.45,343.40 797.41,344.89 797.82,345.52 799.41,347.95 799.55,348.37 801.01,352.74 801.69,354.76 802.83,345.66 803.83,337.69 803.96,336.65 805.56,328.66 805.97,326.62 807.38,319.59 808.11,319.59 809.65,319.59 810.11,319.60 810.25,320.93 811.93,336.84 812.39,341.19 814.53,358.26 814.66,359.30 816.48,377.44 816.67,381.97 817.62,404.70 818.76,420.35 818.81,420.28 819.21,419.83 820.58,418.31 820.95,417.91 823.09,423.42 823.31,423.56 825.23,424.78 826.72,421.06 827.37,419.44 829.51,417.52 830.14,416.73 831.64,414.85 833.55,417.54 833.78,417.86 835.37,412.28 835.92,410.35 836.96,416.04 838.06,422.08 840.20,423.90 841.52,421.76 842.34,420.42 843.79,419.09 844.48,418.45 844.93,419.43 846.07,405.63 846.52,400.18 846.62,398.98 848.34,378.40 848.76,373.38 848.80,372.92 850.90,376.85 852.44,379.73 852.89,378.30 853.04,377.82 855.18,371.03 857.32,364.25 857.45,363.85 859.27,368.42 859.46,371.07 861.54,400.11 861.60,401.15 862.45,413.58 863.14,415.59 863.74,418.73 865.87,421.84 868.01,426.41 868.83,424.42 870.15,421.19 871.10,419.33 872.29,417.01 872.92,417.57 874.43,418.94 875.65,422.44 876.57,425.08 878.71,419.34 879.07,419.42 880.85,409.66 881.34,406.97 882.03,405.93 882.99,404.49 883.62,403.56 885.13,407.07 887.03,407.41 887.27,405.84 889.31,415.20 889.41,415.66 891.55,420.95 891.58,421.02 892.89,421.19 893.69,420.36 894.92,422.56 895.83,424.16 897.36,419.77 897.97,418.05 899.67,420.14 900.10,420.66 902.24,424.56 902.38,424.21 904.38,418.97 904.42,418.95 906.52,418.50 908.49,414.63 908.66,414.30 910.52,413.26 910.80,413.10 912.56,407.46 912.94,406.24 915.08,419.86 915.54,419.72 917.22,419.22 918.66,422.01 919.36,423.36 920.69,420.39 921.50,418.58 922.73,419.10 923.64,419.50 925.44,423.79 925.78,424.58 927.92,417.28 928.83,419.22 930.06,421.82 932.20,421.32 934.26,417.03 934.33,416.88 935.89,418.59 936.47,419.23 938.33,411.45 938.61,410.28 940.75,417.13 941.72,420.39 942.89,424.33 943.75,424.26 945.03,424.14 947.15,418.79 947.17,418.74 949.31,417.12 950.54,419.67 951.45,421.55 953.25,424.73 953.59,425.32 955.73,418.23 955.96,417.96 957.87,415.71 960.01,418.98 960.03,418.92 961.39,415.22 962.15,413.16 964.10,409.60 964.29,409.28 966.43,415.44 966.81,416.56 968.56,421.71 970.21,421.42 970.70,421.32 972.84,423.21 972.92,423.16 974.28,422.09 974.98,421.54 976.58,421.21 977.12,421.10 979.26,419.73 979.70,420.25 981.40,422.29 983.09,418.03 983.54,416.89 985.68,419.89 986.48,417.75 987.82,414.17 987.84,414.11 989.60,408.57 989.96,407.46 992.10,417.63 992.32,418.01 994.24,421.33 995.30,421.58 996.38,421.84 998.52,424.24 998.69,423.75 1000.05,419.78 1000.66,418.01 1002.79,416.04 1003.44,418.15 1004.80,422.62 1004.93,423.04 1007.07,421.79 1007.51,420.55 1009.21,415.70 1010.90,417.03 1011.35,417.39 1012.94,414.57 1013.49,413.59 1015.38,404.31 1015.63,403.08 1017.68,418.48 1017.77,419.16 1019.91,421.31 1020.40,421.05 1022.05,420.15 1023.11,421.26 1024.19,422.40 1025.82,422.83 1026.33,422.96 1028.47,421.39 1028.53,421.43 1030.57,422.78 1030.61,422.80 1032.75,420.50 1033.28,419.53 1034.89,416.62 1036.67,416.30 1037.02,416.24 1038.44,414.56 1039.16,413.70 1041.15,398.17 1041.30,397.00 1043.44,417.43 1045.58,421.02 1046.17,421.38 1047.72,422.32 1049.56,419.96 1049.86,419.57 1052.00,419.85"/><polyline fill="none" stroke="#cc7b7b" stroke-width="0.6" stroke-opacity="0.75" points="438.00,423.26 440.14,424.76 442.20,422.92 442.28,422.85 444.42,425.36 446.56,426.14 447.62,424.22 448.70,422.25 450.34,413.76 450.84,411.21 452.98,420.77 453.05,420.85 455.11,423.35 457.11,421.46 457.25,421.32 459.15,422.71 459.39,422.88 461.18,424.23 461.53,424.50 463.22,421.49 463.67,420.68 465.81,424.02 465.93,424.02 467.95,423.83 469.32,425.11 470.09,425.84 472.03,424.54 472.23,424.41 474.06,414.70 474.37,413.05 476.51,383.25 476.77,386.58 478.65,410.62 479.08,413.04 480.79,422.63 482.87,427.62 482.93,427.75 485.07,425.06 485.59,424.52 486.94,423.13 487.21,422.85 489.25,423.74 489.34,423.77 491.48,425.86 491.69,425.79 493.62,425.15 495.08,426.64 495.76,427.34 497.79,424.20 497.90,424.02 499.82,421.61 500.04,421.34 502.18,409.01 502.53,410.23 504.32,416.53 504.57,417.39 506.46,423.90 508.36,424.38 508.60,424.44 509.99,426.54 510.74,427.68 512.02,428.57 512.88,429.17 515.02,422.86 515.14,422.96 517.16,424.69 518.12,424.47 519.30,424.20 521.44,425.63 523.55,423.86 523.57,423.84 524.90,421.50 525.71,420.06 527.61,410.41 527.85,409.19 529.99,421.97 530.33,422.61 532.13,425.90 533.71,426.68 534.27,426.95 536.41,424.42 537.10,423.74 538.55,422.32 540.49,427.55 540.69,428.08 542.83,423.51 543.20,423.21 544.97,421.76 546.59,421.75 547.11,421.74 549.25,422.82 549.98,421.08 551.07,418.48 551.39,417.71 553.37,411.13 553.53,410.63 555.67,421.08 556.08,421.50 557.80,423.28 559.47,423.49 559.94,423.55 562.08,427.60 562.19,427.49 564.22,425.16 566.25,425.82 566.36,425.85 568.29,424.86 568.50,424.75 570.64,421.58 572.35,426.19 572.78,427.35 574.92,421.96 575.74,420.04 577.06,416.94 577.10,416.83 579.13,411.02 579.20,410.83 581.34,422.08 581.84,422.61 583.48,424.38 585.23,427.46 585.62,428.14 587.27,427.03 587.76,426.71 588.89,426.87 589.90,427.00 592.01,424.14 592.03,424.12 594.17,424.35 596.08,427.19 596.31,427.53 598.45,421.20 600.59,424.02 600.82,423.65 602.45,420.97 602.73,420.50 604.87,416.61 604.89,416.64 607.01,420.34 607.60,421.87 609.15,425.88 609.64,425.03 611.29,422.17 611.67,422.77 613.43,425.52 613.70,424.83 615.57,420.04 615.74,420.28 617.71,423.05 617.77,423.10 619.85,424.87 621.16,422.94 621.99,421.72 623.19,422.73 624.13,423.52 626.26,422.78 626.58,422.13 627.87,419.44 628.40,418.34 628.62,416.17 629.77,404.69 630.54,397.01 632.21,395.57 632.68,395.17 634.25,416.15 634.82,423.79 636.01,422.28 636.96,421.05 638.99,422.38 639.10,422.45 641.03,422.68 641.24,422.71 643.06,424.65 643.38,424.99 645.10,424.76 645.52,424.71 647.54,424.39 647.66,424.38 649.80,428.13 650.53,428.15 651.94,428.16 652.56,425.12 653.92,418.46 654.08,417.67 656.22,408.42 658.36,420.88 658.67,421.63 660.49,426.01 660.70,425.86 662.63,424.35 663.41,425.12 664.77,426.50 665.45,425.34 666.91,422.84 668.57,425.43 669.05,426.17 670.88,426.48 671.19,426.53 673.33,423.56 673.59,424.17 675.47,428.63 676.98,426.33 677.61,425.37 679.02,418.92 679.75,415.59 681.46,411.38 681.89,410.33 683.76,418.84 684.03,420.06 686.17,423.96 687.83,423.80 688.31,423.75 690.28,425.04 690.45,425.14 691.90,424.72 692.59,424.52 694.35,422.98 694.72,422.66 696.86,423.99 697.33,423.42 699.00,421.34 700.04,422.28 701.14,423.27 703.28,423.91 703.44,423.65 705.20,420.73 705.42,420.37 707.51,410.40 707.56,410.16 709.70,423.80 709.81,423.70 711.84,421.88 713.61,426.12 713.98,427.00 716.05,425.27 716.12,425.21 717.68,424.03 718.26,423.60 720.39,423.26 720.40,423.26 722.54,423.40 723.11,423.78 724.68,424.82 725.82,424.87 726.82,424.90 728.53,423.15 728.95,422.72 730.16,419.54 731.09,417.10 733.01,414.51 733.23,414.21 735.37,423.65 735.59,423.73 737.51,424.39 739.39,423.24 739.65,423.08 741.69,423.64 741.79,423.67 743.46,424.70 743.93,424.98 745.90,425.41 746.07,425.44 748.21,420.56 750.35,423.66 751.62,425.81 752.49,427.28 752.76,426.83 754.58,423.78 754.63,423.69 756.77,417.37 758.45,411.23 758.91,409.58 761.05,420.14 761.41,421.20 763.18,426.39 764.14,424.84 765.32,422.91 767.46,424.47 767.55,424.48 768.69,424.66 769.60,424.79 771.42,424.85 771.74,424.86 773.24,422.39 773.88,421.33 776.02,425.57 776.65,425.09 777.79,424.23 778.16,423.95 778.93,424.47 780.07,425.24 780.30,425.39 781.21,421.55 782.44,416.36 782.80,415.48 784.16,412.16 784.58,411.14 784.62,411.23 786.72,416.21 786.90,417.10 788.86,426.73 789.63,425.42 791.00,423.11 792.59,425.34 793.14,426.11 794.86,426.11 795.28,426.09 796.00,423.75 796.45,422.28 797.41,419.16 797.82,419.80 799.41,422.39 799.55,422.61 801.01,422.91 801.69,423.05 802.83,421.79 803.83,420.69 803.96,420.93 805.56,423.95 805.97,424.73 807.38,404.87 808.11,394.56 809.65,394.10 810.11,393.96 810.25,393.92 811.93,415.61 812.39,421.56 814.53,423.21 814.66,423.37 816.48,425.57 816.67,425.80 817.62,425.26 818.76,424.63 818.81,424.60 819.21,424.35 820.58,423.51 820.95,423.29 823.09,426.80 823.31,426.87 825.23,427.49 826.72,424.47 827.37,423.16 829.51,424.44 830.14,423.81 831.64,422.31 833.55,421.99 833.78,421.95 835.37,415.18 835.92,412.83 836.96,418.39 838.06,424.30 840.20,426.12 841.52,424.19 842.34,422.99 843.79,423.05 844.48,423.08 844.93,423.67 846.07,425.18 846.52,425.77 846.62,425.91 848.34,424.30 848.76,423.90 848.80,423.95 850.90,426.11 852.44,427.04 852.89,427.31 853.04,427.40 855.18,423.73 857.32,425.44 857.45,425.03 859.27,419.26 859.46,418.65 861.54,410.46 861.60,410.27 862.45,414.67 863.14,418.25 863.74,421.34 865.87,424.09 868.01,428.79 868.83,426.82 870.15,423.63 871.10,421.79 872.29,419.50 872.92,420.08 874.43,421.48 875.65,424.81 876.57,427.32 878.71,422.37 879.07,422.76 880.85,424.70 881.34,424.91 882.03,425.21 882.99,425.62 883.62,424.27 885.13,421.03 887.03,408.50 887.27,406.94 889.31,416.30 889.41,416.75 891.55,425.32 891.58,425.29 892.89,423.87 893.69,423.01 894.92,425.66 895.83,427.61 897.36,423.21 897.97,421.48 899.67,422.85 900.10,423.19 902.24,427.04 902.38,426.72 904.38,421.84 904.42,421.85 906.52,423.16 908.49,419.45 908.66,419.12 910.52,416.58 910.80,416.19 912.56,409.84 912.94,408.47 915.08,422.65 915.54,422.45 917.22,421.70 918.66,424.55 919.36,425.93 920.69,423.82 921.50,422.53 922.73,423.22 923.64,423.73 925.44,426.70 925.78,427.25 927.92,420.06 928.83,422.36 930.06,425.47 932.20,426.14 934.26,422.06 934.33,421.92 935.89,422.26 936.47,422.39 938.33,413.92 938.61,412.64 940.75,419.43 941.72,422.71 942.89,426.67 943.75,426.58 945.03,426.44 947.15,421.47 947.17,421.43 949.31,420.78 950.54,423.08 951.45,424.78 953.25,427.33 953.59,427.81 955.73,422.37 955.96,422.40 957.87,422.73 960.01,426.56 960.03,426.47 961.39,420.35 962.15,416.94 964.10,412.20 964.29,411.77 966.43,418.30 966.81,419.39 968.56,424.40 970.21,423.90 970.70,423.75 972.84,425.85 972.92,425.80 974.28,424.71 974.98,424.15 976.58,423.90 977.12,423.82 979.26,422.97 979.70,423.59 981.40,425.97 983.09,424.52 983.54,424.13 985.68,427.00 986.48,423.54 987.82,417.74 987.84,417.67 989.60,411.25 989.96,409.95 992.10,420.26 992.32,420.64 994.24,423.99 995.30,424.09 996.38,424.20 998.52,426.49 998.69,426.18 1000.05,423.73 1000.66,422.64 1002.79,421.01 1003.44,422.49 1004.80,425.61 1004.93,425.91 1007.07,425.15 1007.51,424.57 1009.21,422.32 1010.90,423.73 1011.35,424.11 1012.94,421.91 1013.49,421.14 1015.38,414.42 1015.63,413.53 1017.68,423.94 1017.77,424.40 1019.91,423.69 1020.40,423.47 1022.05,422.73 1023.11,423.86 1024.19,425.02 1025.82,426.17 1026.33,426.53 1028.47,426.25 1028.53,426.25 1030.57,426.27 1030.61,426.26 1032.75,424.06 1033.28,424.00 1034.89,423.81 1036.67,423.90 1037.02,423.91 1038.44,421.49 1039.16,420.26 1041.15,406.64 1041.30,405.61 1043.44,422.04 1045.58,423.61 1046.17,423.98 1047.72,424.94 1049.56,424.45 1049.86,424.37 1052.00,425.02"/><polyline fill="none" stroke="#bba950" stroke-width="0.6" stroke-opacity="0.75" points="438.00,428.10 440.14,428.18 442.20,427.43 442.28,427.40 444.42,428.29 446.56,430.69 447.62,429.25 448.70,427.77 450.34,422.62 450.84,421.07 452.98,426.51 453.05,426.57 455.11,428.34 457.11,426.41 457.25,426.27 459.15,426.84 459.39,426.92 461.18,427.84 461.53,428.02 463.22,425.80 463.67,425.20 465.81,428.25 465.93,428.28 467.95,428.78 469.32,430.00 470.09,430.69 472.03,427.25 472.23,426.89 474.06,424.91 474.37,424.57 476.51,421.96 476.77,422.48 478.65,426.27 479.08,426.08 480.79,425.32 482.87,429.73 482.93,429.85 485.07,429.15 485.59,428.92 486.94,428.31 487.21,428.20 489.25,429.18 489.34,429.22 491.48,428.37 491.69,428.49 493.62,429.60 495.08,430.45 495.76,430.85 497.79,428.41 497.90,428.28 499.82,427.23 500.04,427.11 502.18,420.96 502.53,421.30 504.32,423.06 504.57,423.42 506.46,426.12 508.36,428.66 508.60,428.98 509.99,429.73 510.74,430.13 512.02,430.87 512.88,431.36 515.02,425.91 515.14,426.10 517.16,429.30 518.12,429.49 519.30,429.72 521.44,428.09 523.55,427.05 523.57,427.04 524.90,425.49 525.71,424.55 527.61,420.30 527.85,419.76 529.99,426.74 530.33,427.14 532.13,429.25 533.71,429.87 534.27,430.08 536.41,429.27 537.10,428.63 538.55,427.31 540.49,430.77 540.69,431.12 542.83,426.93 543.20,426.76 544.97,425.97 546.59,426.35 547.11,426.47 549.25,428.30 549.98,426.66 551.07,424.20 551.39,423.49 553.37,421.85 553.53,421.72 555.67,426.05 556.08,426.45 557.80,428.13 559.47,426.56 559.94,426.11 562.08,430.26 562.19,430.13 564.22,427.58 566.25,430.98 566.36,431.16 568.29,428.02 568.50,427.68 570.64,425.34 572.35,428.91 572.78,429.82 574.92,425.14 575.74,423.71 577.06,421.42 577.10,421.42 579.13,421.47 579.20,421.48 581.34,425.63 581.84,426.33 583.48,428.62 585.23,430.69 585.62,431.14 587.27,429.91 587.76,429.55 588.89,430.18 589.90,430.74 592.01,427.48 592.03,427.44 594.17,427.30 596.08,429.49 596.31,429.76 598.45,423.47 600.59,429.19 600.82,428.86 602.45,426.42 602.73,426.00 604.87,425.54 604.89,425.53 607.01,424.03 607.60,425.57 609.15,429.61 609.64,429.18 611.29,427.71 611.67,427.81 613.43,428.28 613.70,427.88 615.57,425.12 615.74,425.26 617.71,426.79 617.77,426.83 619.85,428.37 621.16,427.28 621.99,426.59 623.19,426.79 624.13,426.94 626.26,425.03 626.58,424.98 627.87,424.77 628.40,424.68 628.62,424.62 629.77,424.29 630.54,424.08 632.21,424.51 632.68,424.63 634.25,427.61 634.82,428.69 636.01,427.41 636.96,426.39 638.99,427.47 639.10,427.53 641.03,428.16 641.24,428.23 643.06,428.53 643.38,428.59 645.10,429.46 645.52,429.67 647.54,429.00 647.66,428.96 649.80,430.79 650.53,430.63 651.94,430.30 652.56,428.10 653.92,423.26 654.08,422.70 656.22,417.47 658.36,424.17 658.67,424.92 660.49,429.31 660.70,429.29 662.63,429.03 663.41,429.25 664.77,429.63 665.45,428.70 666.91,426.69 668.57,427.90 669.05,428.26 670.88,429.15 671.19,429.31 673.33,428.96 673.59,429.18 675.47,430.71 676.98,429.69 677.61,429.26 679.02,425.04 679.75,422.86 681.46,421.96 681.89,421.74 683.76,425.17 684.03,425.66 686.17,427.40 687.83,428.34 688.31,428.61 690.28,429.97 690.45,430.09 691.90,429.52 692.59,429.25 694.35,428.34 694.72,428.15 696.86,426.39 697.33,426.46 699.00,426.71 700.04,426.72 701.14,426.73 703.28,428.42 703.44,428.22 705.20,425.97 705.42,425.69 707.51,422.06 707.56,421.98 709.70,426.90 709.81,426.85 711.84,425.94 713.61,429.17 713.98,429.85 716.05,428.66 716.12,428.62 717.68,427.39 718.26,426.94 720.39,427.60 720.40,427.60 722.54,428.28 723.11,428.24 724.68,428.14 725.82,428.70 726.82,429.18 728.53,426.63 728.95,426.01 730.16,424.03 731.09,422.52 733.01,425.64 733.23,426.00 735.37,427.80 735.59,427.69 737.51,426.77 739.39,426.36 739.65,426.30 741.69,428.22 741.79,428.31 743.46,427.89 743.93,427.77 745.90,429.91 746.07,430.09 748.21,424.52 750.35,428.09 751.62,429.19 752.49,429.95 752.76,429.46 754.58,426.20 754.63,426.11 756.77,422.33 758.45,420.03 758.91,419.42 761.05,424.65 761.41,425.30 763.18,428.47 764.14,427.69 765.32,426.71 767.46,427.93 767.55,427.93 768.69,427.95 769.60,427.96 771.42,428.67 771.74,428.79 773.24,427.33 773.88,426.71 776.02,428.33 776.65,428.55 777.79,428.95 778.16,429.08 778.93,428.89 780.07,428.61 780.30,428.56 781.21,426.39 782.44,423.46 782.80,422.90 784.16,420.78 784.58,420.13 784.62,420.18 786.72,422.67 786.90,423.31 788.86,430.28 789.63,429.65 791.00,428.52 792.59,428.82 793.14,428.93 794.86,429.45 795.28,429.57 796.00,427.58 796.45,426.33 797.41,423.67 797.82,423.97 799.41,425.18 799.55,425.28 801.01,425.81 801.69,426.05 802.83,425.55 803.83,425.11 803.96,425.40 805.56,429.14 805.97,430.09 807.38,425.93 808.11,423.78 809.65,423.04 810.11,422.82 810.25,422.75 811.93,425.15 812.39,425.80 814.53,428.72 814.66,428.70 816.48,428.39 816.67,428.36 817.62,428.59 818.76,428.86 818.81,428.87 819.21,428.45 820.58,427.04 820.95,426.66 823.09,431.09 823.31,431.01 825.23,430.28 826.72,428.24 827.37,427.36 829.51,429.59 830.14,428.93 831.64,427.36 833.55,428.48 833.78,428.62 835.37,424.59 835.92,423.19 836.96,426.14 838.06,429.28 840.20,428.57 841.52,428.20 842.34,427.97 843.79,427.68 844.48,427.54 844.93,427.96 846.07,429.02 846.52,429.44 846.62,429.54 848.34,428.53 848.76,428.28 848.80,428.30 850.90,429.63 852.44,430.47 852.89,430.71 853.04,430.79 855.18,426.58 857.32,429.59 857.45,429.32 859.27,425.54 859.46,425.14 861.54,420.76 861.60,420.65 862.45,422.15 863.14,423.37 863.74,424.43 865.87,428.33 868.01,432.40 868.83,430.63 870.15,427.75 871.10,425.92 872.29,423.62 872.92,424.55 874.43,426.79 875.65,428.56 876.57,429.90 878.71,426.06 879.07,426.76 880.85,430.23 881.34,430.23 882.03,430.24 882.99,430.25 883.62,429.18 885.13,426.61 887.03,419.05 887.27,418.10 889.31,422.95 889.41,423.19 891.55,428.78 891.58,428.77 892.89,428.34 893.69,428.09 894.92,429.25 895.83,430.10 897.36,427.87 897.97,426.99 899.67,426.97 900.10,426.96 902.24,429.91 902.38,429.72 904.38,426.82 904.42,426.83 906.52,427.48 908.49,424.69 908.66,424.45 910.52,423.70 910.80,423.59 912.56,420.51 912.94,419.85 915.08,427.41 915.54,427.37 917.22,427.23 918.66,427.89 919.36,428.21 920.69,427.84 921.50,427.62 922.73,427.99 923.64,428.26 925.44,429.88 925.78,430.17 927.92,424.93 928.83,426.71 930.06,429.11 932.20,430.07 934.26,427.09 934.33,426.99 935.89,427.41 936.47,427.58 938.33,422.89 938.61,422.19 940.75,424.65 941.72,426.61 942.89,428.97 943.75,429.56 945.03,430.42 947.15,426.27 947.17,426.23 949.31,424.55 950.54,426.34 951.45,427.67 953.25,431.87 953.59,432.65 955.73,427.41 955.96,427.41 957.87,427.47 960.01,430.54 960.03,430.48 961.39,426.72 962.15,424.63 964.10,423.24 964.29,423.11 966.43,421.79 966.81,422.85 968.56,427.73 970.21,426.51 970.70,426.14 972.84,428.03 972.92,428.01 974.28,427.61 974.98,427.41 976.58,428.52 977.12,428.89 979.26,427.94 979.70,428.04 981.40,428.42 983.09,427.15 983.54,426.81 985.68,430.40 986.48,428.47 987.82,425.23 987.84,425.19 989.60,421.43 989.96,420.67 992.10,426.36 992.32,426.35 994.24,426.29 995.30,427.98 996.38,429.70 998.52,429.26 998.69,429.07 1000.05,427.56 1000.66,426.89 1002.79,426.13 1003.44,427.45 1004.80,430.24 1004.93,430.51 1007.07,427.89 1007.51,427.64 1009.21,426.70 1010.90,427.46 1011.35,427.66 1012.94,426.21 1013.49,425.71 1015.38,423.56 1015.63,423.28 1017.68,428.22 1017.77,428.44 1019.91,427.94 1020.40,427.44 1022.05,425.75 1023.11,427.45 1024.19,429.18 1025.82,430.57 1026.33,431.01 1028.47,428.92 1028.53,428.92 1030.57,428.76 1030.61,428.76 1032.75,428.53 1033.28,428.27 1034.89,427.49 1036.67,426.59 1037.02,426.41 1038.44,425.60 1039.16,425.18 1041.15,417.99 1041.30,417.45 1043.44,427.12 1045.58,426.91 1046.17,427.12 1047.72,427.67 1049.56,429.58 1049.86,429.90 1052.00,429.49"/><polyline fill="none" stroke="#bd8451" stroke-width="0.6" stroke-opacity="0.75" points="438.00,433.22 440.14,433.36 442.20,432.62 442.28,432.60 444.42,431.37 446.56,434.74 447.62,433.36 448.70,431.95 450.34,428.78 450.84,427.83 452.98,431.36 453.05,431.34 455.11,430.67 457.11,430.72 457.25,430.72 459.15,431.70 459.39,431.82 461.18,432.29 461.53,432.38 463.22,431.06 463.67,430.71 465.81,431.13 465.93,431.15 467.95,431.55 469.32,432.44 470.09,432.95 472.03,431.15 472.23,430.97 474.06,429.76 474.37,429.56 476.51,428.19 476.77,428.44 478.65,430.23 479.08,430.29 480.79,430.54 482.87,432.27 482.93,432.32 485.07,434.79 485.59,434.24 486.94,432.82 487.21,432.55 489.25,433.43 489.34,433.47 491.48,433.57 491.69,433.48 493.62,432.70 495.08,433.31 495.76,433.60 497.79,431.75 497.90,431.65 499.82,430.72 500.04,430.61 502.18,426.71 502.53,426.98 504.32,428.38 504.57,428.61 506.46,430.30 508.36,431.96 508.60,432.17 509.99,433.72 510.74,434.56 512.02,434.16 512.88,433.89 515.02,431.21 515.14,431.26 517.16,432.14 518.12,432.47 519.30,432.88 521.44,430.89 523.55,431.84 523.57,431.85 524.90,431.35 525.71,431.04 527.61,427.72 527.85,427.30 529.99,429.93 530.33,430.42 532.13,433.00 533.71,433.48 534.27,433.65 536.41,432.28 537.10,432.57 538.55,433.18 540.49,433.45 540.69,433.47 542.83,430.98 543.20,430.99 544.97,431.05 546.59,432.07 547.11,432.40 549.25,431.05 549.98,430.20 551.07,428.93 551.39,428.56 553.37,429.06 553.53,429.10 555.67,429.15 556.08,429.55 557.80,431.23 559.47,431.58 559.94,431.68 562.08,432.99 562.19,432.91 564.22,431.26 566.25,434.32 566.36,434.49 568.29,431.78 568.50,431.48 570.64,427.82 572.35,431.27 572.78,432.14 574.92,431.11 575.74,429.78 577.06,427.66 577.10,427.68 579.13,428.77 579.20,428.81 581.34,429.46 581.84,430.00 583.48,431.77 585.23,434.77 585.62,435.42 587.27,433.29 587.76,432.66 588.89,433.73 589.90,434.68 592.01,433.18 592.03,433.17 594.17,430.88 596.08,432.97 596.31,433.23 598.45,429.38 600.59,433.70 600.82,433.26 602.45,430.05 602.73,429.50 604.87,431.62 604.89,431.60 607.01,429.45 607.60,430.16 609.15,432.03 609.64,431.84 611.29,431.20 611.67,431.54 613.43,433.10 613.70,432.79 615.57,430.59 615.74,430.64 617.71,431.22 617.77,431.30 619.85,433.93 621.16,431.85 621.99,430.54 623.19,430.59 624.13,430.63 626.26,430.42 626.58,430.28 627.87,429.71 628.40,429.47 628.62,429.68 629.77,430.82 630.54,431.59 632.21,429.11 632.68,428.41 634.25,431.19 634.82,432.20 636.01,430.58 636.96,429.28 638.99,431.67 639.10,431.80 641.03,431.12 641.24,431.05 643.06,431.47 643.38,431.55 645.10,432.46 645.52,432.68 647.54,432.91 647.66,432.93 649.80,434.15 650.53,434.17 651.94,434.20 652.56,432.93 653.92,430.14 654.08,429.82 656.22,424.59 658.36,430.39 658.67,430.66 660.49,432.28 660.70,432.32 662.63,432.67 663.41,432.46 664.77,432.10 665.45,431.91 666.91,431.50 668.57,431.75 669.05,431.83 670.88,432.43 671.19,432.54 673.33,431.22 673.59,431.51 675.47,433.59 676.98,432.79 677.61,432.45 679.02,429.32 679.75,427.70 681.46,429.37 681.89,429.79 683.76,431.13 684.03,431.32 686.17,430.61 687.83,431.82 688.31,432.17 690.28,432.81 690.45,432.87 691.90,434.32 692.59,434.99 694.35,432.28 694.72,431.71 696.86,431.49 697.33,431.52 699.00,431.65 700.04,431.99 701.14,432.36 703.28,430.69 703.44,430.66 705.20,430.30 705.42,430.26 707.51,428.03 707.56,427.98 709.70,430.16 709.81,430.23 711.84,431.48 713.61,432.96 713.98,433.27 716.05,433.72 716.12,433.73 717.68,431.81 718.26,431.10 720.39,430.00 720.40,430.00 722.54,431.97 723.11,431.77 724.68,431.24 725.82,431.39 726.82,431.53 728.53,429.31 728.95,428.77 730.16,428.40 731.09,428.12 733.01,430.40 733.23,430.67 735.37,431.93 735.59,431.79 737.51,430.57 739.39,430.55 739.65,430.55 741.69,431.00 741.79,431.02 743.46,432.28 743.93,432.64 745.90,433.22 746.07,433.27 748.21,429.47 750.35,432.80 751.62,432.74 752.49,432.70 752.76,432.24 754.58,429.16 754.63,429.08 756.77,426.76 758.45,426.68 758.91,426.66 761.05,429.13 761.41,429.64 763.18,432.13 764.14,432.16 765.32,432.19 767.46,430.98 767.55,430.99 768.69,431.14 769.60,431.26 771.42,432.13 771.74,432.29 773.24,430.49 773.88,429.72 776.02,430.67 776.65,430.88 777.79,431.24 778.16,431.36 778.93,432.00 780.07,432.95 780.30,433.14 781.21,431.36 782.44,428.96 782.80,428.76 784.16,427.98 784.58,427.74 784.62,427.77 786.72,429.31 786.90,429.67 788.86,433.60 789.63,433.48 791.00,433.26 792.59,434.26 793.14,434.60 794.86,432.98 795.28,432.58 796.00,431.19 796.45,430.33 797.41,428.48 797.82,428.76 799.41,429.90 799.55,430.01 801.01,431.27 801.69,431.86 802.83,431.19 803.83,430.59 803.96,430.75 805.56,432.68 805.97,433.18 807.38,430.78 808.11,429.53 809.65,428.16 810.11,427.75 810.25,427.63 811.93,429.78 812.39,430.36 814.53,432.40 814.66,432.30 816.48,430.92 816.67,430.78 817.62,431.55 818.76,432.47 818.81,432.51 819.21,432.06 820.58,430.51 820.95,430.10 823.09,435.17 823.31,435.00 825.23,433.53 826.72,431.17 827.37,430.16 829.51,433.31 830.14,432.73 831.64,431.35 833.55,432.48 833.78,432.61 835.37,430.86 835.92,430.24 836.96,431.65 838.06,433.14 840.20,431.11 841.52,431.32 842.34,431.45 843.79,431.37 844.48,431.33 844.93,431.54 846.07,432.05 846.52,432.26 846.62,432.30 848.34,432.61 848.76,432.68 848.80,432.71 850.90,434.48 852.44,434.91 852.89,435.04 853.04,435.08 855.18,431.42 857.32,431.87 857.45,431.76 859.27,430.16 859.46,429.99 861.54,426.65 861.60,426.56 862.45,426.97 863.14,427.31 863.74,427.60 865.87,432.05 868.01,434.80 868.83,433.67 870.15,431.82 871.10,430.14 872.29,428.04 872.92,428.83 874.43,430.76 875.65,432.22 876.57,433.33 878.71,429.21 879.07,429.76 880.85,432.50 881.34,432.79 882.03,433.19 882.99,433.75 883.62,433.64 885.13,433.36 887.03,425.73 887.27,424.78 889.31,427.00 889.41,427.12 891.55,433.50 891.58,433.46 892.89,431.92 893.69,430.99 894.92,432.77 895.83,434.07 897.36,432.24 897.97,431.52 899.67,432.52 900.10,432.77 902.24,433.48 902.38,433.33 904.38,431.20 904.42,431.23 906.52,433.25 908.49,429.86 908.66,429.57 910.52,429.37 910.80,429.34 912.56,427.19 912.94,426.73 915.08,431.90 915.54,431.71 917.22,430.99 918.66,431.30 919.36,431.45 920.69,432.39 921.50,432.96 922.73,433.44 923.64,433.79 925.44,433.81 925.78,433.81 927.92,430.56 928.83,430.94 930.06,431.44 932.20,432.78 934.26,431.16 934.33,431.10 935.89,431.84 936.47,432.11 938.33,428.61 938.61,428.08 940.75,431.29 941.72,431.49 942.89,431.74 943.75,432.38 945.03,433.34 947.15,429.32 947.17,429.29 949.31,429.32 950.54,430.14 951.45,430.75 953.25,434.20 953.59,434.85 955.73,431.66 955.96,431.61 957.87,431.16 960.01,433.64 960.03,433.60 961.39,431.20 962.15,429.87 964.10,430.08 964.29,430.10 966.43,426.80 966.81,427.78 968.56,432.29 970.21,430.88 970.70,430.46 972.84,433.37 972.92,433.37 974.28,433.31 974.98,433.27 976.58,432.58 977.12,432.35 979.26,431.44 979.70,431.96 981.40,433.98 983.09,430.99 983.54,430.19 985.68,435.31 986.48,433.79 987.82,431.24 987.84,431.21 989.60,428.37 989.96,427.80 992.10,432.94 992.32,432.80 994.24,431.61 995.30,432.05 996.38,432.50 998.52,433.81 998.69,433.58 1000.05,431.76 1000.66,430.94 1002.79,430.46 1003.44,431.56 1004.80,433.88 1004.93,434.10 1007.07,431.17 1007.51,431.28 1009.21,431.73 1010.90,431.85 1011.35,431.88 1012.94,430.47 1013.49,429.99 1015.38,428.89 1015.63,428.74 1017.68,432.44 1017.77,432.60 1019.91,430.81 1020.40,430.60 1022.05,429.89 1023.11,430.86 1024.19,431.84 1025.82,433.06 1026.33,433.44 1028.47,431.38 1028.53,431.37 1030.57,431.34 1030.61,431.34 1032.75,433.39 1033.28,432.58 1034.89,430.11 1036.67,430.28 1037.02,430.32 1038.44,431.09 1039.16,431.48 1041.15,424.33 1041.30,423.79 1043.44,430.66 1045.58,432.39 1046.17,432.60 1047.72,433.16 1049.56,432.41 1049.86,432.29 1052.00,432.64"/><polyline fill="none" stroke="#bcb555" stroke-width="0.6" stroke-opacity="0.75" points="438.00,436.48 440.14,436.78 442.20,436.26 442.28,436.24 444.42,436.14 446.56,437.83 447.62,436.34 448.70,434.81 450.34,433.31 450.84,432.86 452.98,434.76 453.05,434.82 455.11,436.58 457.11,435.17 457.25,435.07 459.15,436.62 459.39,436.82 461.18,435.95 461.53,435.78 463.22,436.06 463.67,436.13 465.81,433.55 465.93,433.58 467.95,434.17 469.32,434.94 470.09,435.38 472.03,435.74 472.23,435.78 474.06,434.68 474.37,434.50 476.51,430.97 476.77,431.33 478.65,433.92 479.08,434.34 480.79,436.01 482.87,436.76 482.93,436.78 485.07,437.20 485.59,436.79 486.94,435.72 487.21,435.52 489.25,436.13 489.34,436.16 491.48,436.12 491.69,436.15 493.62,436.40 495.08,436.09 495.76,435.94 497.79,437.38 497.90,437.45 499.82,434.72 500.04,434.40 502.18,430.85 502.53,431.21 504.32,433.07 504.57,433.35 506.46,435.48 508.36,437.34 508.60,437.58 509.99,437.97 510.74,438.18 512.02,437.65 512.88,437.29 515.02,434.94 515.14,434.90 517.16,434.25 518.12,435.29 519.30,436.56 521.44,435.80 523.55,437.88 523.57,437.90 524.90,436.92 525.71,436.31 527.61,432.52 527.85,432.04 529.99,434.47 530.33,434.57 532.13,435.13 533.71,436.55 534.27,437.05 536.41,435.72 537.10,436.42 538.55,437.88 540.49,436.13 540.69,435.95 542.83,434.56 543.20,434.67 544.97,435.18 546.59,437.07 547.11,437.67 549.25,436.46 549.98,435.31 551.07,433.60 551.39,433.10 553.37,431.89 553.53,431.79 555.67,434.33 556.08,434.84 557.80,436.96 559.47,436.19 559.94,435.97 562.08,436.48 562.19,436.42 564.22,435.35 566.25,437.02 566.36,437.11 568.29,436.51 568.50,436.44 570.64,433.89 572.35,435.81 572.78,436.29 574.92,436.07 575.74,434.94 577.06,433.12 577.10,433.09 579.13,431.71 579.20,431.66 581.34,435.36 581.84,435.60 583.48,436.37 585.23,437.94 585.62,438.28 587.27,435.78 587.76,435.05 588.89,436.47 589.90,437.73 592.01,437.57 592.03,437.57 594.17,435.77 596.08,436.53 596.31,436.62 598.45,435.22 600.59,437.22 600.82,436.82 602.45,433.93 602.73,433.43 604.87,434.17 604.89,434.18 607.01,435.47 607.60,435.24 609.15,434.62 609.64,435.15 611.29,436.94 611.67,437.02 613.43,437.37 613.70,437.06 615.57,434.93 615.74,434.98 617.71,435.56 617.77,435.60 619.85,437.05 621.16,436.59 621.99,436.30 623.19,436.54 624.13,436.73 626.26,435.81 626.58,435.53 627.87,434.43 628.40,433.98 628.62,433.99 629.77,434.08 630.54,434.14 632.21,433.89 632.68,433.82 634.25,435.00 634.82,435.42 636.01,435.18 636.96,434.98 638.99,434.84 639.10,434.83 641.03,435.38 641.24,435.43 643.06,436.76 643.38,436.99 645.10,435.77 645.52,435.48 647.54,437.11 647.66,437.21 649.80,436.51 650.53,436.46 651.94,436.37 652.56,435.28 653.92,432.88 654.08,432.60 656.22,430.67 658.36,436.27 658.67,436.38 660.49,437.02 660.70,436.92 662.63,435.97 663.41,436.30 664.77,436.88 665.45,436.78 666.91,436.56 668.57,435.68 669.05,435.43 670.88,436.77 671.19,437.00 673.33,436.55 673.59,436.45 675.47,435.71 676.98,435.43 677.61,435.31 679.02,432.90 679.75,431.66 681.46,432.26 681.89,432.42 683.76,434.63 684.03,434.95 686.17,434.98 687.83,434.94 688.31,434.93 690.28,436.87 690.45,437.03 691.90,437.77 692.59,438.12 694.35,436.43 694.72,436.08 696.86,434.89 697.33,435.20 699.00,436.31 700.04,435.46 701.14,434.56 703.28,435.48 703.44,435.29 705.20,433.16 705.42,432.90 707.51,433.92 707.56,433.94 709.70,434.66 709.81,434.70 711.84,435.45 713.61,436.73 713.98,437.00 716.05,438.28 716.12,438.33 717.68,436.60 718.26,435.96 720.39,435.15 720.40,435.14 722.54,437.08 723.11,436.60 724.68,435.27 725.82,436.54 726.82,437.64 728.53,434.91 728.95,434.24 730.16,433.91 731.09,433.66 733.01,434.31 733.23,434.38 735.37,435.74 735.59,435.66 737.51,434.93 739.39,436.13 739.65,436.30 741.69,435.27 741.79,435.22 743.46,436.48 743.93,436.83 745.90,437.06 746.07,437.08 748.21,435.21 750.35,436.16 751.62,435.45 752.49,434.97 752.76,434.86 754.58,434.11 754.63,434.09 756.77,432.48 758.45,431.86 758.91,431.69 761.05,433.62 761.41,434.23 763.18,437.24 764.14,436.46 765.32,435.48 767.46,435.45 767.55,435.37 768.69,434.38 769.60,433.59 771.42,434.65 771.74,434.84 773.24,433.96 773.88,433.59 776.02,434.77 776.65,434.85 777.79,434.98 778.16,435.03 778.93,435.16 780.07,435.36 780.30,435.40 781.21,434.74 782.44,433.85 782.80,433.52 784.16,432.31 784.58,431.93 784.62,431.94 786.72,432.33 786.90,432.72 788.86,436.90 789.63,436.91 791.00,436.92 792.59,437.43 793.14,437.61 794.86,435.44 795.28,434.91 796.00,434.69 796.45,434.54 797.41,434.24 797.82,434.57 799.41,435.88 799.55,436.00 801.01,436.43 801.69,436.63 802.83,436.39 803.83,436.18 803.96,436.22 805.56,436.80 805.97,436.94 807.38,435.58 808.11,434.87 809.65,431.78 810.11,430.86 810.25,430.58 811.93,434.41 812.39,435.46 814.53,436.76 814.66,436.75 816.48,436.54 816.67,436.51 817.62,435.82 818.76,434.99 818.81,434.96 819.21,435.04 820.58,435.30 820.95,435.38 823.09,437.72 823.31,437.73 825.23,437.77 826.72,436.59 827.37,436.08 829.51,435.36 830.14,435.07 831.64,434.39 833.55,435.72 833.78,435.88 835.37,434.20 835.92,433.62 836.96,434.50 838.06,435.44 840.20,436.81 841.52,436.82 842.34,436.83 843.79,435.59 844.48,435.00 844.93,435.17 846.07,435.60 846.52,435.76 846.62,435.80 848.34,436.86 848.76,437.12 848.80,437.11 850.90,436.71 852.44,437.10 852.89,437.22 853.04,437.25 855.18,437.14 857.32,435.18 857.45,435.11 859.27,434.18 859.46,434.08 861.54,432.46 861.60,432.42 862.45,432.90 863.14,433.30 863.74,433.64 865.87,436.03 868.01,437.69 868.83,436.69 870.15,435.07 871.10,434.53 872.29,433.85 872.92,434.62 874.43,436.47 875.65,436.30 876.57,436.17 878.71,434.68 879.07,434.90 880.85,436.00 881.34,436.39 882.03,436.95 882.99,437.73 883.62,437.25 885.13,436.11 887.03,431.05 887.27,430.42 889.31,433.10 889.41,433.23 891.55,436.37 891.58,436.36 892.89,435.89 893.69,435.61 894.92,436.36 895.83,436.90 897.36,437.08 897.97,437.15 899.67,435.46 900.10,435.03 902.24,435.96 902.38,435.97 904.38,436.21 904.42,436.21 906.52,436.57 908.49,435.40 908.66,435.29 910.52,434.98 910.80,434.94 912.56,432.27 912.94,431.69 915.08,434.50 915.54,434.80 917.22,435.88 918.66,436.85 919.36,437.32 920.69,437.01 921.50,436.82 922.73,436.44 923.64,436.16 925.44,436.68 925.78,436.77 927.92,433.87 928.83,434.94 930.06,436.39 932.20,435.62 934.26,433.94 934.33,433.89 935.89,434.78 936.47,435.12 938.33,433.14 938.61,432.84 940.75,436.56 941.72,436.00 942.89,435.30 943.75,436.42 945.03,438.09 947.15,434.98 947.17,434.95 949.31,433.77 950.54,433.75 951.45,433.73 953.25,437.43 953.59,438.12 955.73,437.49 955.96,437.32 957.87,435.93 960.01,436.82 960.03,436.79 961.39,435.34 962.15,434.53 964.10,432.69 964.29,432.52 966.43,432.85 966.81,433.44 968.56,436.14 970.21,435.01 970.70,434.67 972.84,437.58 972.92,437.51 974.28,436.19 974.98,435.51 976.58,436.50 977.12,436.84 979.26,434.65 979.70,435.14 981.40,437.05 983.09,435.84 983.54,435.52 985.68,437.71 986.48,436.49 987.82,434.45 987.84,434.44 989.60,433.18 989.96,432.93 992.10,435.99 992.32,435.87 994.24,434.79 995.30,435.78 996.38,436.78 998.52,436.62 998.69,436.62 1000.05,436.65 1000.66,436.66 1002.79,436.54 1003.44,436.46 1004.80,436.30 1004.93,436.29 1007.07,435.09 1007.51,435.45 1009.21,436.84 1010.90,435.78 1011.35,435.50 1012.94,435.74 1013.49,435.83 1015.38,433.18 1015.63,432.83 1017.68,435.27 1017.77,435.38 1019.91,435.12 1020.40,435.00 1022.05,434.57 1023.11,434.96 1024.19,435.36 1025.82,437.51 1026.33,438.17 1028.47,436.62 1028.53,436.59 1030.57,435.51 1030.61,435.50 1032.75,437.51 1033.28,437.04 1034.89,435.60 1036.67,435.23 1037.02,435.16 1038.44,435.49 1039.16,435.66 1041.15,430.14 1041.30,429.72 1043.44,433.42 1045.58,437.62 1046.17,437.14 1047.72,435.88 1049.56,436.69 1049.86,436.82 1052.00,435.65"/><polyline fill="none" stroke="#307070" stroke-width="0.6" stroke-opacity="0.75" points="438.00,440.13 440.14,439.54 442.20,438.51 442.28,438.47 444.42,440.04 446.56,440.31 447.62,439.37 448.70,438.41 450.34,437.51 450.84,437.24 452.98,438.40 453.05,438.43 455.11,439.54 457.11,439.18 457.25,439.15 459.15,440.20 459.39,440.34 461.18,440.52 461.53,440.55 463.22,440.14 463.67,440.03 465.81,439.09 465.93,439.11 467.95,439.55 469.32,439.84 470.09,440.00 472.03,438.78 472.23,438.66 474.06,437.19 474.37,436.94 476.51,436.14 476.77,436.46 478.65,438.71 479.08,439.02 480.79,440.24 482.87,440.09 482.93,440.09 485.07,440.20 485.59,440.14 486.94,439.99 487.21,439.96 489.25,440.17 489.34,440.18 491.48,440.24 491.69,440.28 493.62,440.66 495.08,440.64 495.76,440.62 497.79,440.19 497.90,440.17 499.82,437.61 500.04,437.32 502.18,436.32 502.53,436.65 504.32,438.32 504.57,438.59 506.46,440.60 508.36,439.85 508.60,439.76 509.99,440.20 510.74,440.44 512.02,440.35 512.88,440.28 515.02,438.47 515.14,438.47 517.16,438.47 518.12,438.70 519.30,438.97 521.44,439.74 523.55,440.20 523.57,440.20 524.90,439.24 525.71,438.66 527.61,436.70 527.85,436.45 529.99,438.44 530.33,438.59 532.13,439.38 533.71,440.14 534.27,440.40 536.41,439.44 537.10,439.83 538.55,440.67 540.49,439.34 540.69,439.20 542.83,439.22 543.20,439.38 544.97,440.16 546.59,440.02 547.11,439.97 549.25,438.93 549.98,438.60 551.07,438.12 551.39,437.98 553.37,436.16 553.53,436.03 555.67,439.06 556.08,439.20 557.80,439.76 559.47,439.55 559.94,439.50 562.08,439.43 562.19,439.47 564.22,440.23 566.25,440.44 566.36,440.45 568.29,440.74 568.50,440.77 570.64,439.40 572.35,439.46 572.78,439.47 574.92,440.04 575.74,439.17 577.06,437.78 577.10,437.76 579.13,436.96 579.20,436.93 581.34,438.90 581.84,439.09 583.48,439.71 585.23,440.49 585.62,440.67 587.27,440.27 587.76,440.15 588.89,440.10 589.90,440.05 592.01,439.90 592.03,439.90 594.17,439.79 596.08,440.30 596.31,440.36 598.45,439.66 600.59,440.32 600.82,440.09 602.45,438.47 602.73,438.19 604.87,436.48 604.89,436.50 607.01,438.26 607.60,438.46 609.15,438.99 609.64,439.05 611.29,439.27 611.67,439.48 613.43,440.48 613.70,440.36 615.57,439.51 615.74,439.56 617.71,440.03 617.77,440.03 619.85,440.09 621.16,439.33 621.99,438.85 623.19,439.51 624.13,440.03 626.26,440.39 626.58,439.94 627.87,438.07 628.40,437.31 628.62,437.23 629.77,436.85 630.54,436.59 632.21,437.96 632.68,438.35 634.25,439.17 634.82,439.46 636.01,439.90 636.96,440.25 638.99,440.17 639.10,440.17 641.03,440.63 641.24,440.68 643.06,440.59 643.38,440.57 645.10,440.38 645.52,440.34 647.54,440.32 647.66,440.32 649.80,439.67 650.53,439.72 651.94,439.82 652.56,439.27 653.92,438.06 654.08,437.92 656.22,435.84 658.36,439.19 658.67,439.35 660.49,440.33 660.70,440.23 662.63,439.30 663.41,439.62 664.77,440.20 665.45,440.13 666.91,439.99 668.57,439.09 669.05,438.83 670.88,439.60 671.19,439.73 673.33,440.57 673.59,440.57 675.47,440.54 676.98,439.63 677.61,439.25 679.02,437.52 679.75,436.63 681.46,436.47 681.89,436.43 683.76,437.46 684.03,437.61 686.17,439.68 687.83,439.97 688.31,440.05 690.28,440.06 690.45,440.06 691.90,440.19 692.59,440.24 694.35,439.98 694.72,439.92 696.86,438.84 697.33,439.17 699.00,440.35 700.04,440.17 701.14,439.99 703.28,439.80 703.44,439.65 705.20,437.97 705.42,437.76 707.51,436.25 707.56,436.21 709.70,438.62 709.81,438.71 711.84,440.25 713.61,439.49 713.98,439.34 716.05,440.62 716.12,440.66 717.68,440.61 718.26,440.59 720.39,440.34 720.40,440.34 722.54,439.43 723.11,439.45 724.68,439.53 725.82,439.88 726.82,440.19 728.53,439.15 728.95,438.90 730.16,438.38 731.09,437.98 733.01,437.36 733.23,437.29 735.37,438.56 735.59,438.67 737.51,439.65 739.39,440.11 739.65,440.17 741.69,439.95 741.79,439.94 743.46,440.19 743.93,440.26 745.90,440.30 746.07,440.31 748.21,440.64 750.35,440.56 751.62,439.48 752.49,438.74 752.76,438.65 754.58,438.04 754.63,438.02 756.77,437.05 758.45,436.39 758.91,436.22 761.05,438.86 761.41,439.18 763.18,440.73 764.14,440.59 765.32,440.42 767.46,439.83 767.55,439.78 768.69,439.14 769.60,438.63 771.42,439.55 771.74,439.71 773.24,438.90 773.88,438.55 776.02,439.93 776.65,440.08 777.79,440.34 778.16,440.43 778.93,440.16 780.07,439.77 780.30,439.69 781.21,438.85 782.44,437.73 782.80,437.51 784.16,436.71 784.58,436.46 784.62,436.48 786.72,437.18 786.90,437.46 788.86,440.42 789.63,440.43 791.00,440.43 792.59,440.24 793.14,440.17 794.86,439.68 795.28,439.56 796.00,439.62 796.45,439.66 797.41,439.75 797.82,439.68 799.41,439.39 799.55,439.36 801.01,439.29 801.69,439.26 802.83,439.09 803.83,438.94 803.96,439.03 805.56,440.18 805.97,440.48 807.38,438.80 808.11,437.94 809.65,436.56 810.11,436.15 810.25,436.02 811.93,437.35 812.39,437.71 814.53,439.88 814.66,439.83 816.48,439.04 816.67,438.96 817.62,439.10 818.76,439.27 818.81,439.27 819.21,439.44 820.58,439.99 820.95,440.14 823.09,440.39 823.31,440.36 825.23,440.04 826.72,439.83 827.37,439.73 829.51,439.45 830.14,439.50 831.64,439.62 833.55,438.22 833.78,438.06 835.37,436.56 835.92,436.04 836.96,437.05 838.06,438.13 840.20,439.62 841.52,439.67 842.34,439.70 843.79,439.61 844.48,439.56 844.93,439.64 846.07,439.84 846.52,439.91 846.62,439.93 848.34,439.94 848.76,439.95 848.80,439.94 850.90,439.40 852.44,440.04 852.89,440.22 853.04,440.28 855.18,439.79 857.32,439.87 857.45,439.71 859.27,437.45 859.46,437.22 861.54,436.41 861.60,436.39 862.45,437.25 863.14,437.94 863.74,438.54 865.87,439.76 868.01,440.65 868.83,440.49 870.15,440.22 871.10,439.72 872.29,439.10 872.92,439.28 874.43,439.72 875.65,439.95 876.57,440.13 878.71,440.08 879.07,440.02 880.85,439.73 881.34,439.92 882.03,440.18 882.99,440.55 883.62,439.89 885.13,438.33 887.03,436.06 887.27,435.78 889.31,437.97 889.41,438.08 891.55,439.77 891.58,439.76 892.89,439.60 893.69,439.51 894.92,440.23 895.83,440.75 897.36,440.33 897.97,440.16 899.67,440.46 900.10,440.54 902.24,440.31 902.38,440.23 904.38,439.09 904.42,439.08 906.52,438.65 908.49,438.97 908.66,438.99 910.52,438.38 910.80,438.28 912.56,436.84 912.94,436.53 915.08,439.04 915.54,439.26 917.22,440.05 918.66,439.96 919.36,439.92 920.69,439.61 921.50,439.42 922.73,439.37 923.64,439.33 925.44,439.67 925.78,439.73 927.92,438.95 928.83,439.50 930.06,440.24 932.20,439.90 934.26,439.43 934.33,439.41 935.89,438.46 936.47,438.10 938.33,436.93 938.61,436.75 940.75,439.14 941.72,439.55 942.89,440.05 943.75,440.09 945.03,440.14 947.15,439.87 947.17,439.87 949.31,438.78 950.54,438.71 951.45,438.66 953.25,440.17 953.59,440.46 955.73,440.48 955.96,440.48 957.87,440.48 960.01,439.20 960.03,439.19 961.39,438.59 962.15,438.25 964.10,436.38 964.29,436.21 966.43,438.24 966.81,438.60 968.56,440.24 970.21,439.83 970.70,439.71 972.84,440.69 972.92,440.68 974.28,440.44 974.98,440.31 976.58,440.34 977.12,440.35 979.26,439.91 979.70,439.80 981.40,439.41 983.09,440.24 983.54,440.46 985.68,440.49 986.48,439.71 987.82,438.40 987.84,438.39 989.60,437.08 989.96,436.81 992.10,438.59 992.32,438.71 994.24,439.75 995.30,439.83 996.38,439.92 998.52,439.75 998.69,439.69 1000.05,439.19 1000.66,438.97 1002.79,439.65 1003.44,439.75 1004.80,439.95 1004.93,439.97 1007.07,439.64 1007.51,439.75 1009.21,440.15 1010.90,439.99 1011.35,439.95 1012.94,438.68 1013.49,438.24 1015.38,436.49 1015.63,436.26 1017.68,438.92 1017.77,439.04 1019.91,440.55 1020.40,440.32 1022.05,439.52 1023.11,439.61 1024.19,439.69 1025.82,440.13 1026.33,440.26 1028.47,439.99 1028.53,439.99 1030.57,440.02 1030.61,440.03 1032.75,440.39 1033.28,440.20 1034.89,439.62 1036.67,438.94 1037.02,438.81 1038.44,438.10 1039.16,437.74 1041.15,435.41 1041.30,435.23 1043.44,438.26 1045.58,440.39 1046.17,440.31 1047.72,440.08 1049.56,439.91 1049.86,439.88 1052.00,439.01"/><polyline fill="none" stroke="#514083" stroke-width="0.6" stroke-opacity="0.75" points="438.00,441.98 440.14,441.59 442.20,440.62 442.28,440.58 444.42,441.85 446.56,442.09 447.62,442.06 448.70,442.03 450.34,442.16 450.84,442.20 452.98,441.94 453.05,441.92 455.11,441.41 457.11,440.96 457.25,440.93 459.15,441.75 459.39,441.86 461.18,442.07 461.53,442.11 463.22,442.23 463.67,442.26 465.81,441.39 465.93,441.39 467.95,441.46 469.32,441.64 470.09,441.74 472.03,440.55 472.23,440.43 474.06,440.61 474.37,440.64 476.51,441.71 476.77,441.74 478.65,441.96 479.08,442.01 480.79,442.20 482.87,441.97 482.93,441.96 485.07,441.67 485.59,441.67 486.94,441.69 487.21,441.70 489.25,441.86 489.34,441.87 491.48,442.12 491.69,442.13 493.62,442.27 495.08,442.22 495.76,442.19 497.79,441.97 497.90,441.96 499.82,440.95 500.04,440.84 502.18,441.65 502.53,441.62 504.32,441.50 504.57,441.58 506.46,442.12 508.36,441.87 508.60,441.84 509.99,442.07 510.74,442.19 512.02,442.05 512.88,441.95 515.02,440.43 515.14,440.43 517.16,440.40 518.12,440.66 519.30,440.98 521.44,441.58 523.55,442.26 523.57,442.27 524.90,442.22 525.71,442.19 527.61,441.98 527.85,441.95 529.99,441.73 530.33,441.62 532.13,441.00 533.71,441.65 534.27,441.88 536.41,441.22 537.10,441.56 538.55,442.27 540.49,441.10 540.69,440.98 542.83,441.03 543.20,441.15 544.97,441.73 546.59,441.71 547.11,441.70 549.25,440.81 549.98,441.26 551.07,441.94 551.39,442.14 553.37,441.09 553.53,441.01 555.67,442.18 556.08,442.13 557.80,441.94 559.47,441.51 559.94,441.39 562.08,440.97 562.19,441.02 564.22,441.89 566.25,442.13 566.36,442.14 568.29,442.26 568.50,442.27 570.64,440.96 572.35,441.20 572.78,441.26 574.92,441.72 575.74,441.72 577.06,441.71 577.10,441.71 579.13,441.89 579.20,441.89 581.34,442.14 581.84,441.99 583.48,441.49 585.23,442.05 585.62,442.17 587.27,441.86 587.76,441.77 588.89,441.75 589.90,441.72 592.01,441.71 592.03,441.71 594.17,441.29 596.08,442.06 596.31,442.15 598.45,441.89 600.59,442.17 600.82,442.14 602.45,441.96 602.73,441.92 604.87,441.72 604.89,441.72 607.01,441.71 607.60,441.42 609.15,440.67 609.64,440.82 611.29,441.36 611.67,441.52 613.43,442.27 613.70,442.13 615.57,441.16 615.74,441.22 617.71,441.92 617.77,441.91 619.85,441.72 621.16,441.14 621.99,440.78 623.19,441.21 624.13,441.54 626.26,442.16 626.58,441.98 627.87,441.28 628.40,440.99 628.62,441.10 629.77,441.74 630.54,442.16 632.21,441.97 632.68,441.92 634.25,441.24 634.82,441.00 636.01,441.40 636.96,441.71 638.99,441.90 639.10,441.91 641.03,442.14 641.24,442.16 643.06,442.25 643.38,442.27 645.10,442.01 645.52,441.94 647.54,441.91 647.66,441.91 649.80,441.45 650.53,441.54 651.94,441.72 652.56,441.78 653.92,441.90 654.08,441.92 656.22,440.96 658.36,442.27 658.67,442.22 660.49,441.96 660.70,441.86 662.63,440.94 663.41,441.22 664.77,441.71 665.45,441.71 666.91,441.72 668.57,441.05 669.05,440.85 670.88,441.26 671.19,441.33 673.33,442.27 673.59,442.26 675.47,442.15 676.98,441.53 677.61,441.27 679.02,440.80 679.75,440.55 681.46,441.49 681.89,441.72 683.76,440.87 684.03,440.75 686.17,441.17 687.83,441.81 688.31,442.00 690.28,442.13 690.45,442.15 691.90,441.98 692.59,441.90 694.35,441.74 694.72,441.71 696.86,440.51 697.33,440.82 699.00,441.93 700.04,441.79 701.14,441.64 703.28,442.27 703.44,442.20 705.20,441.39 705.42,441.29 707.51,441.63 707.56,441.64 709.70,441.71 709.81,441.71 711.84,441.73 713.61,441.42 713.98,441.36 716.05,442.15 716.12,442.18 717.68,442.24 718.26,442.27 720.39,441.98 720.40,441.98 722.54,440.96 723.11,441.08 724.68,441.40 725.82,441.58 726.82,441.73 728.53,441.02 728.95,440.85 730.16,441.60 731.09,442.18 733.01,442.26 733.23,442.27 735.37,442.13 735.59,442.11 737.51,441.88 739.39,441.72 739.65,441.70 741.69,441.73 741.79,441.73 743.46,441.90 743.93,441.95 745.90,441.99 746.07,442.00 748.21,442.27 750.35,442.13 751.62,441.37 752.49,440.85 752.76,440.80 754.58,440.45 754.63,440.44 756.77,441.32 758.45,441.42 758.91,441.45 761.05,441.97 761.41,442.02 763.18,442.27 764.14,442.20 765.32,442.13 767.46,441.87 767.55,441.82 768.69,441.15 769.60,440.62 771.42,441.12 771.74,441.21 773.24,440.88 773.88,440.74 776.02,442.19 776.65,442.11 777.79,441.96 778.16,441.91 778.93,441.99 780.07,442.10 780.30,442.12 781.21,441.76 782.44,441.26 782.80,441.34 784.16,441.61 784.58,441.70 784.62,441.67 786.72,440.43 786.90,440.56 788.86,441.96 789.63,442.00 791.00,442.07 792.59,441.75 793.14,441.64 794.86,441.18 795.28,441.07 796.00,441.12 796.45,441.16 797.41,441.24 797.82,441.23 799.41,441.17 799.55,441.16 801.01,441.03 801.69,440.97 802.83,440.92 803.83,440.88 803.96,440.95 805.56,441.94 805.97,442.20 807.38,441.92 808.11,441.78 809.65,441.26 810.11,441.11 810.25,441.06 811.93,440.92 812.39,440.88 814.53,441.69 814.66,441.65 816.48,441.04 816.67,440.98 817.62,441.00 818.76,441.02 818.81,441.02 819.21,441.20 820.58,441.84 820.95,442.01 823.09,441.94 823.31,441.95 825.23,442.11 826.72,441.78 827.37,441.64 829.51,441.41 830.14,441.51 831.64,441.75 833.55,441.63 833.78,441.61 835.37,441.09 835.92,440.91 836.96,441.08 838.06,441.26 840.20,441.50 841.52,441.72 842.34,441.85 843.79,441.33 844.48,441.08 844.93,441.17 846.07,441.42 846.52,441.52 846.62,441.54 848.34,441.89 848.76,441.98 848.80,441.97 850.90,441.32 852.44,442.00 852.89,442.20 853.04,442.26 855.18,441.44 857.32,441.84 857.45,441.82 859.27,441.46 859.46,441.43 861.54,441.75 861.60,441.76 862.45,441.85 863.14,441.92 863.74,441.99 865.87,441.69 868.01,442.26 868.83,442.08 870.15,441.79 871.10,441.33 872.29,440.74 872.92,441.02 874.43,441.69 875.65,441.73 876.57,441.76 878.71,441.99 879.07,441.95 880.85,441.75 881.34,441.86 882.03,442.03 882.99,442.26 883.62,442.21 885.13,442.09 887.03,440.92 887.27,440.77 889.31,441.25 889.41,441.27 891.55,441.76 891.58,441.75 892.89,441.26 893.69,440.97 894.92,441.69 895.83,442.22 897.36,441.93 897.97,441.82 899.67,442.03 900.10,442.09 902.24,441.83 902.38,441.77 904.38,440.89 904.42,440.88 906.52,440.68 908.49,440.98 908.66,441.00 910.52,442.06 910.80,442.22 912.56,442.07 912.94,442.04 915.08,442.08 915.54,442.03 917.22,441.83 918.66,441.73 919.36,441.69 920.69,441.19 921.50,440.88 922.73,441.00 923.64,441.09 925.44,441.58 925.78,441.67 927.92,441.07 928.83,441.50 930.06,442.08 932.20,441.82 934.26,441.69 934.33,441.69 935.89,441.75 936.47,441.77 938.33,441.98 938.61,442.01 940.75,442.23 941.72,442.09 942.89,441.92 943.75,441.98 945.03,442.07 947.15,441.82 947.17,441.82 949.31,440.80 950.54,440.63 951.45,440.51 953.25,441.78 953.59,442.02 955.73,442.23 955.96,442.23 957.87,442.25 960.01,441.09 960.03,441.10 961.39,441.56 962.15,441.81 964.10,441.20 964.29,441.14 966.43,441.59 966.81,441.67 968.56,442.02 970.21,441.59 970.70,441.47 972.84,442.25 972.92,442.24 974.28,442.12 974.98,442.06 976.58,441.88 977.12,441.81 979.26,441.69 979.70,441.53 981.40,440.92 983.09,441.79 983.54,442.03 985.68,442.23 986.48,442.24 987.82,442.25 987.84,442.24 989.60,441.81 989.96,441.72 992.10,441.81 992.32,441.76 994.24,441.34 995.30,441.36 996.38,441.38 998.52,441.22 998.69,441.21 1000.05,441.09 1000.66,441.03 1002.79,441.76 1003.44,441.85 1004.80,442.04 1004.93,442.05 1007.07,441.80 1007.51,441.78 1009.21,441.69 1010.90,441.77 1011.35,441.79 1012.94,441.97 1013.49,442.04 1015.38,441.72 1015.63,441.68 1017.68,442.22 1017.77,442.24 1019.91,442.05 1020.40,441.99 1022.05,441.80 1023.11,441.49 1024.19,441.17 1025.82,441.60 1026.33,441.74 1028.47,441.74 1028.53,441.73 1030.57,441.57 1030.61,441.57 1032.75,442.24 1033.28,442.00 1034.89,441.28 1036.67,440.82 1037.02,440.73 1038.44,441.36 1039.16,441.68 1041.15,440.73 1041.30,440.66 1043.44,441.46 1045.58,442.24 1046.17,442.24 1047.72,442.24 1049.56,441.78 1049.86,441.71 1052.00,440.71"/><polyline fill="none" stroke="#b06991" stroke-width="0.6" stroke-opacity="0.75" points="438.00,443.73 440.14,443.57 442.20,442.65 442.28,442.62 444.42,443.73 446.56,443.71 447.62,443.61 448.70,443.50 450.34,443.68 450.84,443.73 452.98,443.70 453.05,443.69 455.11,443.39 457.11,442.99 457.25,442.96 459.15,443.64 459.39,443.73 461.18,443.73 461.53,443.73 463.22,443.73 463.67,443.73 465.81,442.92 465.93,442.93 467.95,443.22 469.32,443.55 470.09,443.73 472.03,442.58 472.23,442.46 474.06,442.50 474.37,442.51 476.51,443.33 476.77,443.34 478.65,443.43 479.08,443.49 480.79,443.73 482.87,443.73 482.93,443.73 485.07,443.66 485.59,443.67 486.94,443.72 487.21,443.73 489.25,443.73 489.34,443.73 491.48,443.73 491.69,443.73 493.62,443.73 495.08,443.73 495.76,443.73 497.79,443.73 497.90,443.73 499.82,442.92 500.04,442.83 502.18,443.68 502.53,443.63 504.32,443.36 504.57,443.40 506.46,443.73 508.36,443.35 508.60,443.30 509.99,443.58 510.74,443.73 512.02,443.73 512.88,443.73 515.02,442.42 515.14,442.42 517.16,442.43 518.12,442.61 519.30,442.84 521.44,443.19 523.55,443.72 523.57,443.73 524.90,443.73 525.71,443.73 527.61,443.73 527.85,443.73 529.99,443.73 530.33,443.62 532.13,443.03 533.71,443.55 534.27,443.73 536.41,442.82 537.10,443.11 538.55,443.73 540.49,442.64 540.69,442.53 542.83,442.82 543.20,442.98 544.97,443.73 546.59,443.73 547.11,443.73 549.25,442.65 549.98,443.02 551.07,443.57 551.39,443.73 553.37,442.56 553.53,442.47 555.67,443.73 556.08,443.73 557.80,443.73 559.47,443.47 559.94,443.39 562.08,443.00 562.19,443.03 564.22,443.73 566.25,443.73 566.36,443.73 568.29,443.73 568.50,443.73 570.64,442.51 572.35,442.94 572.78,443.05 574.92,443.73 575.74,443.73 577.06,443.73 577.10,443.73 579.13,443.73 579.20,443.73 581.34,443.73 581.84,443.55 583.48,442.95 585.23,443.59 585.62,443.73 587.27,443.61 587.76,443.57 588.89,443.66 589.90,443.73 592.01,443.73 592.03,443.73 594.17,443.12 596.08,443.66 596.31,443.73 598.45,443.35 600.59,443.73 600.82,443.73 602.45,443.73 602.73,443.73 604.87,443.73 604.89,443.73 607.01,443.73 607.60,443.39 609.15,442.49 609.64,442.59 611.29,442.93 611.67,443.07 613.43,443.73 613.70,443.60 615.57,442.72 615.74,442.80 617.71,443.73 617.77,443.73 619.85,443.73 621.16,443.16 621.99,442.80 623.19,443.11 624.13,443.36 626.26,443.73 626.58,443.54 627.87,442.77 628.40,442.45 628.62,442.57 629.77,443.27 630.54,443.73 632.21,443.73 632.68,443.73 634.25,443.21 634.82,443.01 636.01,443.41 636.96,443.73 638.99,443.73 639.10,443.73 641.03,443.73 641.24,443.73 643.06,443.73 643.38,443.73 645.10,443.56 645.52,443.51 647.54,443.72 647.66,443.73 649.80,443.46 650.53,443.55 651.94,443.73 652.56,443.73 653.92,443.73 654.08,443.73 656.22,442.53 658.36,443.73 658.67,443.70 660.49,443.53 660.70,443.46 662.63,442.77 663.41,443.12 664.77,443.73 665.45,443.73 666.91,443.73 668.57,442.90 669.05,442.66 670.88,442.86 671.19,442.89 673.33,443.73 673.59,443.73 675.47,443.73 676.98,443.29 677.61,443.10 679.02,442.75 679.75,442.57 681.46,443.50 681.89,443.73 683.76,442.70 684.03,442.55 686.17,442.73 687.83,443.29 688.31,443.46 690.28,443.71 690.45,443.73 691.90,443.73 692.59,443.73 694.35,443.73 694.72,443.73 696.86,442.52 697.33,442.78 699.00,443.73 700.04,443.47 701.14,443.19 703.28,443.73 703.44,443.67 705.20,442.97 705.42,442.88 707.51,443.46 707.56,443.48 709.70,443.73 709.81,443.73 711.84,443.73 713.61,443.25 713.98,443.15 716.05,443.71 716.12,443.73 717.68,443.73 718.26,443.73 720.39,443.57 720.40,443.57 722.54,442.80 723.11,442.97 724.68,443.43 725.82,443.59 726.82,443.73 728.53,442.85 728.95,442.64 730.16,443.25 731.09,443.73 733.01,443.73 733.23,443.73 735.37,443.73 735.59,443.73 737.51,443.73 739.39,443.73 739.65,443.73 741.69,443.73 741.79,443.73 743.46,443.73 743.93,443.73 745.90,443.56 746.07,443.54 748.21,443.73 750.35,443.73 751.62,443.12 752.49,442.70 752.76,442.67 754.58,442.47 754.63,442.47 756.77,443.32 758.45,443.25 758.91,443.23 761.05,443.51 761.41,443.55 763.18,443.73 764.14,443.73 765.32,443.73 767.46,443.73 767.55,443.69 768.69,443.11 769.60,442.65 771.42,443.12 771.74,443.20 773.24,442.72 773.88,442.51 776.02,443.73 776.65,443.62 777.79,443.43 778.16,443.37 778.93,443.50 780.07,443.69 780.30,443.73 781.21,443.47 782.44,443.12 782.80,443.23 784.16,443.61 784.58,443.73 784.62,443.70 786.72,442.42 786.90,442.53 788.86,443.73 789.63,443.69 791.00,443.61 792.59,443.24 793.14,443.11 794.86,442.76 795.28,442.68 796.00,442.82 796.45,442.91 797.41,443.11 797.82,443.12 799.41,443.19 799.55,443.19 801.01,443.03 801.69,442.96 802.83,442.79 803.83,442.64 803.96,442.70 805.56,443.52 805.97,443.73 807.38,443.41 808.11,443.24 809.65,442.84 810.11,442.71 810.25,442.68 811.93,442.74 812.39,442.75 814.53,443.73 814.66,443.68 816.48,443.03 816.67,442.97 817.62,442.88 818.76,442.78 818.81,442.78 819.21,442.92 820.58,443.41 820.95,443.54 823.09,443.40 823.31,443.44 825.23,443.73 826.72,443.58 827.37,443.51 829.51,443.44 830.14,443.53 831.64,443.73 833.55,443.40 833.78,443.36 835.37,442.67 835.92,442.44 836.96,442.58 838.06,442.73 840.20,443.13 841.52,443.50 842.34,443.73 843.79,443.31 844.48,443.11 844.93,443.20 846.07,443.41 846.52,443.50 846.62,443.52 848.34,443.69 848.76,443.73 848.80,443.71 850.90,442.84 852.44,443.48 852.89,443.67 853.04,443.73 855.18,443.07 857.32,443.73 857.45,443.71 859.27,443.49 859.46,443.46 861.54,443.72 861.60,443.73 862.45,443.73 863.14,443.73 863.74,443.73 865.87,443.21 868.01,443.73 868.83,443.62 870.15,443.43 871.10,443.07 872.29,442.63 872.92,442.95 874.43,443.73 875.65,443.73 876.57,443.73 878.71,443.73 879.07,443.65 880.85,443.26 881.34,443.37 882.03,443.52 882.99,443.73 883.62,443.73 885.13,443.73 887.03,442.78 887.27,442.66 889.31,443.28 889.41,443.31 891.55,443.73 891.58,443.71 892.89,443.08 893.69,442.70 894.92,443.29 895.83,443.73 897.36,443.42 897.97,443.30 899.67,443.64 900.10,443.73 902.24,443.73 902.38,443.68 904.38,442.93 904.42,442.92 906.52,442.64 908.49,442.72 908.66,442.73 910.52,443.60 910.80,443.73 912.56,443.55 912.94,443.51 915.08,443.73 915.54,443.73 917.22,443.73 918.66,443.73 919.36,443.73 920.69,443.18 921.50,442.84 922.73,442.83 923.64,442.81 925.44,443.12 925.78,443.17 927.92,442.55 928.83,443.05 930.06,443.73 932.20,443.73 934.26,443.73 934.33,443.73 935.89,443.73 936.47,443.73 938.33,443.73 938.61,443.73 940.75,443.73 941.72,443.58 942.89,443.40 943.75,443.53 945.03,443.73 947.15,443.73 947.17,443.73 949.31,442.84 950.54,442.62 951.45,442.46 953.25,443.53 953.59,443.73 955.73,443.73 955.96,443.73 957.87,443.73 960.01,442.75 960.03,442.76 961.39,443.38 962.15,443.73 964.10,443.23 964.29,443.18 966.43,443.54 966.81,443.58 968.56,443.73 970.21,443.14 970.70,442.97 972.84,443.73 972.92,443.73 974.28,443.73 974.98,443.73 976.58,443.73 977.12,443.73 979.26,443.73 979.70,443.55 981.40,442.86 983.09,443.55 983.54,443.73 985.68,443.73 986.48,443.73 987.82,443.73 987.84,443.73 989.60,443.45 989.96,443.39 992.10,443.73 992.32,443.69 994.24,443.39 995.30,443.36 996.38,443.32 998.52,442.92 998.69,442.89 1000.05,442.64 1000.66,442.53 1002.79,443.24 1003.44,443.39 1004.80,443.70 1004.93,443.73 1007.07,443.73 1007.51,443.73 1009.21,443.73 1010.90,443.73 1011.35,443.73 1012.94,443.73 1013.49,443.73 1015.38,443.23 1015.63,443.17 1017.68,443.71 1017.77,443.73 1019.91,443.73 1020.40,443.73 1022.05,443.73 1023.11,443.47 1024.19,443.21 1025.82,443.57 1026.33,443.68 1028.47,443.43 1028.53,443.42 1030.57,443.06 1030.61,443.06 1032.75,443.73 1033.28,443.54 1034.89,442.96 1036.67,442.71 1037.02,442.66 1038.44,443.37 1039.16,443.73 1041.15,442.67 1041.30,442.59 1043.44,443.14 1045.58,443.73 1046.17,443.73 1047.72,443.73 1049.56,443.45 1049.86,443.40 1052.00,442.65"/></svg>
<span class="t" style="left:513.03px;top:453.04px;font-size:12px;line-height:14px;color:#e4e4e4;">12</span>
<span class="t" style="left:666.73px;top:453.04px;font-size:12px;line-height:14px;color:#e4e4e4;">18</span>
<span class="t" style="left:820.83px;top:453.04px;font-size:12px;line-height:14px;color:#e4e4e4;">00</span>
<span class="t" style="left:974.93px;top:453.04px;font-size:12px;line-height:14px;color:#e4e4e4;">06</span>
<span class="t" style="left:429.33px;top:444.34px;font-size:12px;line-height:14px;color:#e4e4e4;">0</span>
<span class="t" style="left:429.33px;top:370.44px;font-size:12px;line-height:14px;color:#e4e4e4;">1</span>
<span class="t" style="left:429.33px;top:296.44px;font-size:12px;line-height:14px;color:#e4e4e4;">2</span>
<span class="t" style="left:429.33px;top:223.54px;font-size:12px;line-height:14px;color:#e4e4e4;">3</span>
<span class="t" style="left:680.00px;top:163.41px;font-size:17px;line-height:20px;color:#e4e4e4;letter-spacing:0.342px;">Last day</span>
<svg width="1824" height="1143"><g stroke="#4a4a4a" stroke-width="1" shape-rendering="crispEdges"><line x1="1239.3" y1="194" x2="1239.3" y2="450.2"/><line x1="1327.3" y1="194" x2="1327.3" y2="450.2"/><line x1="1415.7" y1="194" x2="1415.7" y2="450.2"/><line x1="1503.5" y1="194" x2="1503.5" y2="450.2"/><line x1="1591.8" y1="194" x2="1591.8" y2="450.2"/><line x1="1680.5" y1="194" x2="1680.5" y2="450.2"/><line x1="1768.5" y1="194" x2="1768.5" y2="450.2"/><line x1="1184" y1="401.9" x2="1797.6" y2="401.9"/><line x1="1184" y1="353.7" x2="1797.6" y2="353.7"/><line x1="1184" y1="305.4" x2="1797.6" y2="305.4"/><line x1="1184" y1="256.9" x2="1797.6" y2="256.9"/><line x1="1184" y1="208.5" x2="1797.6" y2="208.5"/></g><defs><clipPath id="cwk"><rect x="1184" y="190" width="613.6" height="262"/></clipPath></defs><g clip-path="url(#cwk)"><polygon fill="#ffdf9e" points="1143.04,450.4 1143.04,208.42 1146.72,270.72 1150.40,332.26 1154.08,322.98 1157.76,339.60 1161.44,345.11 1165.12,343.27 1168.80,344.53 1172.48,343.17 1176.16,341.72 1179.84,340.08 1183.52,341.53 1187.19,337.18 1190.87,342.11 1194.55,340.86 1198.23,344.53 1201.91,343.17 1205.59,341.53 1209.27,334.19 1212.95,343.75 1216.63,343.75 1220.31,343.75 1223.99,343.75 1227.67,275.55 1231.34,208.42 1235.02,270.72 1238.70,332.26 1242.38,322.98 1246.06,339.60 1249.74,345.11 1253.42,343.27 1257.10,344.53 1260.78,343.17 1264.46,341.72 1268.14,340.08 1271.82,341.53 1275.49,337.18 1279.17,342.11 1282.85,340.86 1286.53,344.53 1290.21,343.17 1293.89,341.53 1297.57,334.19 1301.25,343.75 1304.93,343.75 1308.61,343.75 1312.29,343.75 1315.97,275.55 1319.64,208.42 1323.32,270.72 1327.00,332.26 1330.68,322.98 1334.36,339.60 1338.04,345.11 1341.72,343.27 1345.40,344.53 1349.08,343.17 1352.76,341.72 1356.44,340.08 1360.12,341.53 1363.79,337.18 1367.47,342.11 1371.15,340.86 1374.83,344.53 1378.51,343.17 1382.19,341.53 1385.87,334.19 1389.55,343.75 1393.23,343.75 1396.91,343.75 1400.59,343.75 1404.27,275.55 1407.94,208.42 1411.62,270.72 1415.30,332.26 1418.98,322.98 1422.66,339.60 1426.34,345.11 1430.02,343.27 1433.70,344.53 1437.38,343.17 1441.06,341.72 1444.74,340.08 1448.42,341.53 1452.09,337.18 1455.77,342.11 1459.45,340.86 1463.13,344.53 1466.81,343.17 1470.49,341.53 1474.17,334.19 1477.85,343.75 1481.53,343.75 1485.21,343.75 1488.89,343.75 1492.57,275.55 1496.24,208.42 1499.92,270.72 1503.60,332.26 1507.28,322.98 1510.96,339.60 1514.64,345.11 1518.32,343.27 1522.00,344.53 1525.68,343.17 1529.36,341.72 1533.04,340.08 1536.72,341.53 1540.39,337.18 1544.07,342.11 1547.75,340.86 1551.43,344.53 1555.11,343.17 1558.79,341.53 1562.47,334.19 1566.15,343.75 1569.83,343.75 1573.51,343.75 1577.19,343.75 1580.87,275.55 1584.54,208.42 1588.22,270.72 1591.90,332.26 1595.58,322.98 1599.26,339.60 1602.94,345.11 1606.62,343.27 1610.30,344.53 1613.98,343.17 1617.66,341.72 1621.34,340.08 1625.02,341.53 1628.69,337.18 1632.37,342.11 1636.05,340.86 1639.73,344.53 1643.41,343.17 1647.09,341.53 1650.77,334.19 1654.45,343.75 1658.13,343.75 1661.81,343.75 1665.49,343.75 1669.17,275.55 1672.84,208.42 1676.52,270.72 1680.20,332.26 1683.88,322.98 1687.56,339.60 1691.24,345.11 1694.92,343.27 1698.60,344.53 1702.28,343.17 1705.96,341.72 1709.64,340.08 1713.32,341.53 1716.99,337.18 1720.67,342.11 1724.35,340.86 1728.03,344.53 1731.71,343.17 1735.39,341.53 1739.07,334.19 1742.75,343.75 1746.43,343.75 1750.11,343.75 1753.79,343.75 1757.47,275.55 1761.14,208.42 1764.82,270.72 1768.50,332.26 1772.18,322.98 1775.86,339.60 1779.54,345.11 1783.22,343.27 1786.90,344.53 1790.58,343.17 1794.26,341.72 1797.94,340.08 1797.94,450.4"/><polygon fill="#52b852" points="1143.04,450.4 1143.04,275.07 1146.72,337.38 1150.40,398.91 1154.08,389.64 1157.76,406.25 1161.44,411.76 1165.12,409.92 1168.80,411.18 1172.48,409.83 1176.16,408.38 1179.84,406.74 1183.52,408.19 1187.19,403.84 1190.87,408.77 1194.55,407.51 1198.23,411.18 1201.91,409.83 1205.59,408.19 1209.27,400.84 1212.95,410.41 1216.63,410.41 1220.31,410.41 1223.99,410.41 1227.67,342.21 1231.34,275.07 1235.02,337.38 1238.70,398.91 1242.38,389.64 1246.06,406.25 1249.74,411.76 1253.42,409.92 1257.10,411.18 1260.78,409.83 1264.46,408.38 1268.14,406.74 1271.82,408.19 1275.49,403.84 1279.17,408.77 1282.85,407.51 1286.53,411.18 1290.21,409.83 1293.89,408.19 1297.57,400.84 1301.25,410.41 1304.93,410.41 1308.61,410.41 1312.29,410.41 1315.97,342.21 1319.64,275.07 1323.32,337.38 1327.00,398.91 1330.68,389.64 1334.36,406.25 1338.04,411.76 1341.72,409.92 1345.40,411.18 1349.08,409.83 1352.76,408.38 1356.44,406.74 1360.12,408.19 1363.79,403.84 1367.47,408.77 1371.15,407.51 1374.83,411.18 1378.51,409.83 1382.19,408.19 1385.87,400.84 1389.55,410.41 1393.23,410.41 1396.91,410.41 1400.59,410.41 1404.27,342.21 1407.94,275.07 1411.62,337.38 1415.30,398.91 1418.98,389.64 1422.66,406.25 1426.34,411.76 1430.02,409.92 1433.70,411.18 1437.38,409.83 1441.06,408.38 1444.74,406.74 1448.42,408.19 1452.09,403.84 1455.77,408.77 1459.45,407.51 1463.13,411.18 1466.81,409.83 1470.49,408.19 1474.17,400.84 1477.85,410.41 1481.53,410.41 1485.21,410.41 1488.89,410.41 1492.57,342.21 1496.24,275.07 1499.92,337.38 1503.60,398.91 1507.28,389.64 1510.96,406.25 1514.64,411.76 1518.32,409.92 1522.00,411.18 1525.68,409.83 1529.36,408.38 1533.04,406.74 1536.72,408.19 1540.39,403.84 1544.07,408.77 1547.75,407.51 1551.43,411.18 1555.11,409.83 1558.79,408.19 1562.47,400.84 1566.15,410.41 1569.83,410.41 1573.51,410.41 1577.19,410.41 1580.87,342.21 1584.54,275.07 1588.22,337.38 1591.90,398.91 1595.58,389.64 1599.26,406.25 1602.94,411.76 1606.62,409.92 1610.30,411.18 1613.98,409.83 1617.66,408.38 1621.34,406.74 1625.02,408.19 1628.69,403.84 1632.37,408.77 1636.05,407.51 1639.73,411.18 1643.41,409.83 1647.09,408.19 1650.77,400.84 1654.45,410.41 1658.13,410.41 1661.81,410.41 1665.49,410.41 1669.17,342.21 1672.84,275.07 1676.52,337.38 1680.20,398.91 1683.88,389.64 1687.56,406.25 1691.24,411.76 1694.92,409.92 1698.60,411.18 1702.28,409.83 1705.96,408.38 1709.64,406.74 1713.32,408.19 1716.99,403.84 1720.67,408.77 1724.35,407.51 1728.03,411.18 1731.71,409.83 1735.39,408.19 1739.07,400.84 1742.75,410.41 1746.43,410.41 1750.11,410.41 1753.79,410.41 1757.47,342.21 1761.14,275.07 1764.82,337.38 1768.50,398.91 1772.18,389.64 1775.86,406.25 1779.54,411.76 1783.22,409.92 1786.90,411.18 1790.58,409.83 1794.26,408.38 1797.94,406.74 1797.94,450.4"/><polygon fill="#ff9a9a" points="1143.04,450.4 1143.04,408.43 1146.72,408.81 1150.40,413.84 1154.08,414.61 1157.76,414.61 1161.44,414.61 1165.12,414.61 1168.80,414.61 1172.48,414.61 1176.16,414.61 1179.84,414.61 1183.52,413.45 1187.19,410.94 1190.87,414.03 1194.55,414.61 1198.23,414.61 1201.91,414.61 1205.59,413.64 1209.27,407.94 1212.95,413.84 1216.63,414.61 1220.31,414.61 1223.99,414.61 1227.67,414.61 1231.34,408.43 1235.02,408.81 1238.70,413.84 1242.38,414.61 1246.06,414.61 1249.74,414.61 1253.42,414.61 1257.10,414.61 1260.78,414.61 1264.46,414.61 1268.14,414.61 1271.82,413.45 1275.49,410.94 1279.17,414.03 1282.85,414.61 1286.53,414.61 1290.21,414.61 1293.89,413.64 1297.57,407.94 1301.25,413.84 1304.93,414.61 1308.61,414.61 1312.29,414.61 1315.97,414.61 1319.64,408.43 1323.32,408.81 1327.00,413.84 1330.68,414.61 1334.36,414.61 1338.04,414.61 1341.72,414.61 1345.40,414.61 1349.08,414.61 1352.76,414.61 1356.44,414.61 1360.12,413.45 1363.79,410.94 1367.47,414.03 1371.15,414.61 1374.83,414.61 1378.51,414.61 1382.19,413.64 1385.87,407.94 1389.55,413.84 1393.23,414.61 1396.91,414.61 1400.59,414.61 1404.27,414.61 1407.94,408.43 1411.62,408.81 1415.30,413.84 1418.98,414.61 1422.66,414.61 1426.34,414.61 1430.02,414.61 1433.70,414.61 1437.38,414.61 1441.06,414.61 1444.74,414.61 1448.42,413.45 1452.09,410.94 1455.77,414.03 1459.45,414.61 1463.13,414.61 1466.81,414.61 1470.49,413.64 1474.17,407.94 1477.85,413.84 1481.53,414.61 1485.21,414.61 1488.89,414.61 1492.57,414.61 1496.24,408.43 1499.92,408.81 1503.60,413.84 1507.28,414.61 1510.96,414.61 1514.64,414.61 1518.32,414.61 1522.00,414.61 1525.68,414.61 1529.36,414.61 1533.04,414.61 1536.72,413.45 1540.39,410.94 1544.07,414.03 1547.75,414.61 1551.43,414.61 1555.11,414.61 1558.79,413.64 1562.47,407.94 1566.15,413.84 1569.83,414.61 1573.51,414.61 1577.19,414.61 1580.87,414.61 1584.54,408.43 1588.22,408.81 1591.90,413.84 1595.58,414.61 1599.26,414.61 1602.94,414.61 1606.62,414.61 1610.30,414.61 1613.98,414.61 1617.66,414.61 1621.34,414.61 1625.02,413.45 1628.69,410.94 1632.37,414.03 1636.05,414.61 1639.73,414.61 1643.41,414.61 1647.09,413.64 1650.77,407.94 1654.45,413.84 1658.13,414.61 1661.81,414.61 1665.49,414.61 1669.17,414.61 1672.84,408.43 1676.52,408.81 1680.20,413.84 1683.88,414.61 1687.56,414.61 1691.24,414.61 1694.92,414.61 1698.60,414.61 1702.28,414.61 1705.96,414.61 1709.64,414.61 1713.32,413.45 1716.99,410.94 1720.67,414.03 1724.35,414.61 1728.03,414.61 1731.71,414.61 1735.39,413.64 1739.07,407.94 1742.75,413.84 1746.43,414.61 1750.11,414.61 1753.79,414.61 1757.47,414.61 1761.14,408.43 1764.82,408.81 1768.50,413.84 1772.18,414.61 1775.86,414.61 1779.54,414.61 1783.22,414.61 1786.90,414.61 1790.58,414.61 1794.26,414.61 1797.94,414.61 1797.94,450.4"/><polygon fill="#ead465" points="1143.04,450.4 1143.04,416.01 1146.72,420.26 1150.40,420.26 1154.08,420.26 1157.76,420.26 1161.44,420.26 1165.12,420.26 1168.80,420.26 1172.48,420.26 1176.16,420.26 1179.84,420.26 1183.52,420.26 1187.19,420.26 1190.87,420.26 1194.55,420.26 1198.23,420.26 1201.91,420.26 1205.59,420.26 1209.27,420.26 1212.95,420.26 1216.63,420.26 1220.31,420.26 1223.99,420.26 1227.67,420.26 1231.34,416.01 1235.02,420.26 1238.70,420.26 1242.38,420.26 1246.06,420.26 1249.74,420.26 1253.42,420.26 1257.10,420.26 1260.78,420.26 1264.46,420.26 1268.14,420.26 1271.82,420.26 1275.49,420.26 1279.17,420.26 1282.85,420.26 1286.53,420.26 1290.21,420.26 1293.89,420.26 1297.57,420.26 1301.25,420.26 1304.93,420.26 1308.61,420.26 1312.29,420.26 1315.97,420.26 1319.64,416.01 1323.32,420.26 1327.00,420.26 1330.68,420.26 1334.36,420.26 1338.04,420.26 1341.72,420.26 1345.40,420.26 1349.08,420.26 1352.76,420.26 1356.44,420.26 1360.12,420.26 1363.79,420.26 1367.47,420.26 1371.15,420.26 1374.83,420.26 1378.51,420.26 1382.19,420.26 1385.87,420.26 1389.55,420.26 1393.23,420.26 1396.91,420.26 1400.59,420.26 1404.27,420.26 1407.94,416.01 1411.62,420.26 1415.30,420.26 1418.98,420.26 1422.66,420.26 1426.34,420.26 1430.02,420.26 1433.70,420.26 1437.38,420.26 1441.06,420.26 1444.74,420.26 1448.42,420.26 1452.09,420.26 1455.77,420.26 1459.45,420.26 1463.13,420.26 1466.81,420.26 1470.49,420.26 1474.17,420.26 1477.85,420.26 1481.53,420.26 1485.21,420.26 1488.89,420.26 1492.57,420.26 1496.24,416.01 1499.92,420.26 1503.60,420.26 1507.28,420.26 1510.96,420.26 1514.64,420.26 1518.32,420.26 1522.00,420.26 1525.68,420.26 1529.36,420.26 1533.04,420.26 1536.72,420.26 1540.39,420.26 1544.07,420.26 1547.75,420.26 1551.43,420.26 1555.11,420.26 1558.79,420.26 1562.47,420.26 1566.15,420.26 1569.83,420.26 1573.51,420.26 1577.19,420.26 1580.87,420.26 1584.54,416.01 1588.22,420.26 1591.90,420.26 1595.58,420.26 1599.26,420.26 1602.94,420.26 1606.62,420.26 1610.30,420.26 1613.98,420.26 1617.66,420.26 1621.34,420.26 1625.02,420.26 1628.69,420.26 1632.37,420.26 1636.05,420.26 1639.73,420.26 1643.41,420.26 1647.09,420.26 1650.77,420.26 1654.45,420.26 1658.13,420.26 1661.81,420.26 1665.49,420.26 1669.17,420.26 1672.84,416.01 1676.52,420.26 1680.20,420.26 1683.88,420.26 1687.56,420.26 1691.24,420.26 1694.92,420.26 1698.60,420.26 1702.28,420.26 1705.96,420.26 1709.64,420.26 1713.32,420.26 1716.99,420.26 1720.67,420.26 1724.35,420.26 1728.03,420.26 1731.71,420.26 1735.39,420.26 1739.07,420.26 1742.75,420.26 1746.43,420.26 1750.11,420.26 1753.79,420.26 1757.47,420.26 1761.14,416.01 1764.82,420.26 1768.50,420.26 1772.18,420.26 1775.86,420.26 1779.54,420.26 1783.22,420.26 1786.90,420.26 1790.58,420.26 1794.26,420.26 1797.94,420.26 1797.94,450.4"/><polygon fill="#eda566" points="1143.04,450.4 1143.04,422.39 1146.72,425.67 1150.40,425.67 1154.08,425.67 1157.76,425.67 1161.44,425.67 1165.12,425.67 1168.80,425.67 1172.48,425.67 1176.16,425.67 1179.84,425.67 1183.52,425.67 1187.19,425.67 1190.87,425.67 1194.55,425.67 1198.23,425.67 1201.91,425.67 1205.59,425.67 1209.27,425.67 1212.95,425.67 1216.63,425.67 1220.31,425.67 1223.99,425.67 1227.67,425.67 1231.34,422.39 1235.02,425.67 1238.70,425.67 1242.38,425.67 1246.06,425.67 1249.74,425.67 1253.42,425.67 1257.10,425.67 1260.78,425.67 1264.46,425.67 1268.14,425.67 1271.82,425.67 1275.49,425.67 1279.17,425.67 1282.85,425.67 1286.53,425.67 1290.21,425.67 1293.89,425.67 1297.57,425.67 1301.25,425.67 1304.93,425.67 1308.61,425.67 1312.29,425.67 1315.97,425.67 1319.64,422.39 1323.32,425.67 1327.00,425.67 1330.68,425.67 1334.36,425.67 1338.04,425.67 1341.72,425.67 1345.40,425.67 1349.08,425.67 1352.76,425.67 1356.44,425.67 1360.12,425.67 1363.79,425.67 1367.47,425.67 1371.15,425.67 1374.83,425.67 1378.51,425.67 1382.19,425.67 1385.87,425.67 1389.55,425.67 1393.23,425.67 1396.91,425.67 1400.59,425.67 1404.27,425.67 1407.94,422.39 1411.62,425.67 1415.30,425.67 1418.98,425.67 1422.66,425.67 1426.34,425.67 1430.02,425.67 1433.70,425.67 1437.38,425.67 1441.06,425.67 1444.74,425.67 1448.42,425.67 1452.09,425.67 1455.77,425.67 1459.45,425.67 1463.13,425.67 1466.81,425.67 1470.49,425.67 1474.17,425.67 1477.85,425.67 1481.53,425.67 1485.21,425.67 1488.89,425.67 1492.57,425.67 1496.24,422.39 1499.92,425.67 1503.60,425.67 1507.28,425.67 1510.96,425.67 1514.64,425.67 1518.32,425.67 1522.00,425.67 1525.68,425.67 1529.36,425.67 1533.04,425.67 1536.72,425.67 1540.39,425.67 1544.07,425.67 1547.75,425.67 1551.43,425.67 1555.11,425.67 1558.79,425.67 1562.47,425.67 1566.15,425.67 1569.83,425.67 1573.51,425.67 1577.19,425.67 1580.87,425.67 1584.54,422.39 1588.22,425.67 1591.90,425.67 1595.58,425.67 1599.26,425.67 1602.94,425.67 1606.62,425.67 1610.30,425.67 1613.98,425.67 1617.66,425.67 1621.34,425.67 1625.02,425.67 1628.69,425.67 1632.37,425.67 1636.05,425.67 1639.73,425.67 1643.41,425.67 1647.09,425.67 1650.77,425.67 1654.45,425.67 1658.13,425.67 1661.81,425.67 1665.49,425.67 1669.17,425.67 1672.84,422.39 1676.52,425.67 1680.20,425.67 1683.88,425.67 1687.56,425.67 1691.24,425.67 1694.92,425.67 1698.60,425.67 1702.28,425.67 1705.96,425.67 1709.64,425.67 1713.32,425.67 1716.99,425.67 1720.67,425.67 1724.35,425.67 1728.03,425.67 1731.71,425.67 1735.39,425.67 1739.07,425.67 1742.75,425.67 1746.43,425.67 1750.11,425.67 1753.79,425.67 1757.47,425.67 1761.14,422.39 1764.82,425.67 1768.50,425.67 1772.18,425.67 1775.86,425.67 1779.54,425.67 1783.22,425.67 1786.90,425.67 1790.58,425.67 1794.26,425.67 1797.94,425.67 1797.94,450.4"/><polygon fill="#ece36b" points="1143.04,450.4 1143.04,428.18 1146.72,430.89 1150.40,430.89 1154.08,430.89 1157.76,430.89 1161.44,430.89 1165.12,430.89 1168.80,430.89 1172.48,430.89 1176.16,430.89 1179.84,430.89 1183.52,430.89 1187.19,430.89 1190.87,430.89 1194.55,430.89 1198.23,430.89 1201.91,430.89 1205.59,430.89 1209.27,430.89 1212.95,430.89 1216.63,430.89 1220.31,430.89 1223.99,430.89 1227.67,430.89 1231.34,428.18 1235.02,430.89 1238.70,430.89 1242.38,430.89 1246.06,430.89 1249.74,430.89 1253.42,430.89 1257.10,430.89 1260.78,430.89 1264.46,430.89 1268.14,430.89 1271.82,430.89 1275.49,430.89 1279.17,430.89 1282.85,430.89 1286.53,430.89 1290.21,430.89 1293.89,430.89 1297.57,430.89 1301.25,430.89 1304.93,430.89 1308.61,430.89 1312.29,430.89 1315.97,430.89 1319.64,428.18 1323.32,430.89 1327.00,430.89 1330.68,430.89 1334.36,430.89 1338.04,430.89 1341.72,430.89 1345.40,430.89 1349.08,430.89 1352.76,430.89 1356.44,430.89 1360.12,430.89 1363.79,430.89 1367.47,430.89 1371.15,430.89 1374.83,430.89 1378.51,430.89 1382.19,430.89 1385.87,430.89 1389.55,430.89 1393.23,430.89 1396.91,430.89 1400.59,430.89 1404.27,430.89 1407.94,428.18 1411.62,430.89 1415.30,430.89 1418.98,430.89 1422.66,430.89 1426.34,430.89 1430.02,430.89 1433.70,430.89 1437.38,430.89 1441.06,430.89 1444.74,430.89 1448.42,430.89 1452.09,430.89 1455.77,430.89 1459.45,430.89 1463.13,430.89 1466.81,430.89 1470.49,430.89 1474.17,430.89 1477.85,430.89 1481.53,430.89 1485.21,430.89 1488.89,430.89 1492.57,430.89 1496.24,428.18 1499.92,430.89 1503.60,430.89 1507.28,430.89 1510.96,430.89 1514.64,430.89 1518.32,430.89 1522.00,430.89 1525.68,430.89 1529.36,430.89 1533.04,430.89 1536.72,430.89 1540.39,430.89 1544.07,430.89 1547.75,430.89 1551.43,430.89 1555.11,430.89 1558.79,430.89 1562.47,430.89 1566.15,430.89 1569.83,430.89 1573.51,430.89 1577.19,430.89 1580.87,430.89 1584.54,428.18 1588.22,430.89 1591.90,430.89 1595.58,430.89 1599.26,430.89 1602.94,430.89 1606.62,430.89 1610.30,430.89 1613.98,430.89 1617.66,430.89 1621.34,430.89 1625.02,430.89 1628.69,430.89 1632.37,430.89 1636.05,430.89 1639.73,430.89 1643.41,430.89 1647.09,430.89 1650.77,430.89 1654.45,430.89 1658.13,430.89 1661.81,430.89 1665.49,430.89 1669.17,430.89 1672.84,428.18 1676.52,430.89 1680.20,430.89 1683.88,430.89 1687.56,430.89 1691.24,430.89 1694.92,430.89 1698.60,430.89 1702.28,430.89 1705.96,430.89 1709.64,430.89 1713.32,430.89 1716.99,430.89 1720.67,430.89 1724.35,430.89 1728.03,430.89 1731.71,430.89 1735.39,430.89 1739.07,430.89 1742.75,430.89 1746.43,430.89 1750.11,430.89 1753.79,430.89 1757.47,430.89 1761.14,428.18 1764.82,430.89 1768.50,430.89 1772.18,430.89 1775.86,430.89 1779.54,430.89 1783.22,430.89 1786.90,430.89 1790.58,430.89 1794.26,430.89 1797.94,430.89 1797.94,450.4"/><polygon fill="#3d8c8c" points="1143.04,450.4 1143.04,434.07 1146.72,436.01 1150.40,436.01 1154.08,436.01 1157.76,436.01 1161.44,436.01 1165.12,436.01 1168.80,436.01 1172.48,436.01 1176.16,436.01 1179.84,436.01 1183.52,436.01 1187.19,436.01 1190.87,436.01 1194.55,436.01 1198.23,436.01 1201.91,436.01 1205.59,436.01 1209.27,436.01 1212.95,436.01 1216.63,436.01 1220.31,436.01 1223.99,436.01 1227.67,436.01 1231.34,434.07 1235.02,436.01 1238.70,436.01 1242.38,436.01 1246.06,436.01 1249.74,436.01 1253.42,436.01 1257.10,436.01 1260.78,436.01 1264.46,436.01 1268.14,436.01 1271.82,436.01 1275.49,436.01 1279.17,436.01 1282.85,436.01 1286.53,436.01 1290.21,436.01 1293.89,436.01 1297.57,436.01 1301.25,436.01 1304.93,436.01 1308.61,436.01 1312.29,436.01 1315.97,436.01 1319.64,434.07 1323.32,436.01 1327.00,436.01 1330.68,436.01 1334.36,436.01 1338.04,436.01 1341.72,436.01 1345.40,436.01 1349.08,436.01 1352.76,436.01 1356.44,436.01 1360.12,436.01 1363.79,436.01 1367.47,436.01 1371.15,436.01 1374.83,436.01 1378.51,436.01 1382.19,436.01 1385.87,436.01 1389.55,436.01 1393.23,436.01 1396.91,436.01 1400.59,436.01 1404.27,436.01 1407.94,434.07 1411.62,436.01 1415.30,436.01 1418.98,436.01 1422.66,436.01 1426.34,436.01 1430.02,436.01 1433.70,436.01 1437.38,436.01 1441.06,436.01 1444.74,436.01 1448.42,436.01 1452.09,436.01 1455.77,436.01 1459.45,436.01 1463.13,436.01 1466.81,436.01 1470.49,436.01 1474.17,436.01 1477.85,436.01 1481.53,436.01 1485.21,436.01 1488.89,436.01 1492.57,436.01 1496.24,434.07 1499.92,436.01 1503.60,436.01 1507.28,436.01 1510.96,436.01 1514.64,436.01 1518.32,436.01 1522.00,436.01 1525.68,436.01 1529.36,436.01 1533.04,436.01 1536.72,436.01 1540.39,436.01 1544.07,436.01 1547.75,436.01 1551.43,436.01 1555.11,436.01 1558.79,436.01 1562.47,436.01 1566.15,436.01 1569.83,436.01 1573.51,436.01 1577.19,436.01 1580.87,436.01 1584.54,434.07 1588.22,436.01 1591.90,436.01 1595.58,436.01 1599.26,436.01 1602.94,436.01 1606.62,436.01 1610.30,436.01 1613.98,436.01 1617.66,436.01 1621.34,436.01 1625.02,436.01 1628.69,436.01 1632.37,436.01 1636.05,436.01 1639.73,436.01 1643.41,436.01 1647.09,436.01 1650.77,436.01 1654.45,436.01 1658.13,436.01 1661.81,436.01 1665.49,436.01 1669.17,436.01 1672.84,434.07 1676.52,436.01 1680.20,436.01 1683.88,436.01 1687.56,436.01 1691.24,436.01 1694.92,436.01 1698.60,436.01 1702.28,436.01 1705.96,436.01 1709.64,436.01 1713.32,436.01 1716.99,436.01 1720.67,436.01 1724.35,436.01 1728.03,436.01 1731.71,436.01 1735.39,436.01 1739.07,436.01 1742.75,436.01 1746.43,436.01 1750.11,436.01 1753.79,436.01 1757.47,436.01 1761.14,434.07 1764.82,436.01 1768.50,436.01 1772.18,436.01 1775.86,436.01 1779.54,436.01 1783.22,436.01 1786.90,436.01 1790.58,436.01 1794.26,436.01 1797.94,436.01 1797.94,450.4"/><polygon fill="#6650a4" points="1143.04,450.4 1143.04,437.36 1146.72,438.61 1150.40,438.61 1154.08,438.61 1157.76,438.61 1161.44,438.61 1165.12,438.61 1168.80,438.61 1172.48,438.61 1176.16,438.61 1179.84,438.61 1183.52,438.61 1187.19,438.61 1190.87,438.61 1194.55,438.61 1198.23,438.61 1201.91,438.61 1205.59,438.61 1209.27,438.61 1212.95,438.61 1216.63,438.61 1220.31,438.61 1223.99,438.61 1227.67,438.61 1231.34,437.36 1235.02,438.61 1238.70,438.61 1242.38,438.61 1246.06,438.61 1249.74,438.61 1253.42,438.61 1257.10,438.61 1260.78,438.61 1264.46,438.61 1268.14,438.61 1271.82,438.61 1275.49,438.61 1279.17,438.61 1282.85,438.61 1286.53,438.61 1290.21,438.61 1293.89,438.61 1297.57,438.61 1301.25,438.61 1304.93,438.61 1308.61,438.61 1312.29,438.61 1315.97,438.61 1319.64,437.36 1323.32,438.61 1327.00,438.61 1330.68,438.61 1334.36,438.61 1338.04,438.61 1341.72,438.61 1345.40,438.61 1349.08,438.61 1352.76,438.61 1356.44,438.61 1360.12,438.61 1363.79,438.61 1367.47,438.61 1371.15,438.61 1374.83,438.61 1378.51,438.61 1382.19,438.61 1385.87,438.61 1389.55,438.61 1393.23,438.61 1396.91,438.61 1400.59,438.61 1404.27,438.61 1407.94,437.36 1411.62,438.61 1415.30,438.61 1418.98,438.61 1422.66,438.61 1426.34,438.61 1430.02,438.61 1433.70,438.61 1437.38,438.61 1441.06,438.61 1444.74,438.61 1448.42,438.61 1452.09,438.61 1455.77,438.61 1459.45,438.61 1463.13,438.61 1466.81,438.61 1470.49,438.61 1474.17,438.61 1477.85,438.61 1481.53,438.61 1485.21,438.61 1488.89,438.61 1492.57,438.61 1496.24,437.36 1499.92,438.61 1503.60,438.61 1507.28,438.61 1510.96,438.61 1514.64,438.61 1518.32,438.61 1522.00,438.61 1525.68,438.61 1529.36,438.61 1533.04,438.61 1536.72,438.61 1540.39,438.61 1544.07,438.61 1547.75,438.61 1551.43,438.61 1555.11,438.61 1558.79,438.61 1562.47,438.61 1566.15,438.61 1569.83,438.61 1573.51,438.61 1577.19,438.61 1580.87,438.61 1584.54,437.36 1588.22,438.61 1591.90,438.61 1595.58,438.61 1599.26,438.61 1602.94,438.61 1606.62,438.61 1610.30,438.61 1613.98,438.61 1617.66,438.61 1621.34,438.61 1625.02,438.61 1628.69,438.61 1632.37,438.61 1636.05,438.61 1639.73,438.61 1643.41,438.61 1647.09,438.61 1650.77,438.61 1654.45,438.61 1658.13,438.61 1661.81,438.61 1665.49,438.61 1669.17,438.61 1672.84,437.36 1676.52,438.61 1680.20,438.61 1683.88,438.61 1687.56,438.61 1691.24,438.61 1694.92,438.61 1698.60,438.61 1702.28,438.61 1705.96,438.61 1709.64,438.61 1713.32,438.61 1716.99,438.61 1720.67,438.61 1724.35,438.61 1728.03,438.61 1731.71,438.61 1735.39,438.61 1739.07,438.61 1742.75,438.61 1746.43,438.61 1750.11,438.61 1753.79,438.61 1757.47,438.61 1761.14,437.36 1764.82,438.61 1768.50,438.61 1772.18,438.61 1775.86,438.61 1779.54,438.61 1783.22,438.61 1786.90,438.61 1790.58,438.61 1794.26,438.61 1797.94,438.61 1797.94,450.4"/><polygon fill="#dc84b6" points="1143.04,450.4 1143.04,440.06 1146.72,440.93 1150.40,440.93 1154.08,440.93 1157.76,440.93 1161.44,440.93 1165.12,440.93 1168.80,440.93 1172.48,440.93 1176.16,440.93 1179.84,440.93 1183.52,440.93 1187.19,440.93 1190.87,440.93 1194.55,440.93 1198.23,440.93 1201.91,440.93 1205.59,440.93 1209.27,440.93 1212.95,440.93 1216.63,440.93 1220.31,440.93 1223.99,440.93 1227.67,440.93 1231.34,440.06 1235.02,440.93 1238.70,440.93 1242.38,440.93 1246.06,440.93 1249.74,440.93 1253.42,440.93 1257.10,440.93 1260.78,440.93 1264.46,440.93 1268.14,440.93 1271.82,440.93 1275.49,440.93 1279.17,440.93 1282.85,440.93 1286.53,440.93 1290.21,440.93 1293.89,440.93 1297.57,440.93 1301.25,440.93 1304.93,440.93 1308.61,440.93 1312.29,440.93 1315.97,440.93 1319.64,440.06 1323.32,440.93 1327.00,440.93 1330.68,440.93 1334.36,440.93 1338.04,440.93 1341.72,440.93 1345.40,440.93 1349.08,440.93 1352.76,440.93 1356.44,440.93 1360.12,440.93 1363.79,440.93 1367.47,440.93 1371.15,440.93 1374.83,440.93 1378.51,440.93 1382.19,440.93 1385.87,440.93 1389.55,440.93 1393.23,440.93 1396.91,440.93 1400.59,440.93 1404.27,440.93 1407.94,440.06 1411.62,440.93 1415.30,440.93 1418.98,440.93 1422.66,440.93 1426.34,440.93 1430.02,440.93 1433.70,440.93 1437.38,440.93 1441.06,440.93 1444.74,440.93 1448.42,440.93 1452.09,440.93 1455.77,440.93 1459.45,440.93 1463.13,440.93 1466.81,440.93 1470.49,440.93 1474.17,440.93 1477.85,440.93 1481.53,440.93 1485.21,440.93 1488.89,440.93 1492.57,440.93 1496.24,440.06 1499.92,440.93 1503.60,440.93 1507.28,440.93 1510.96,440.93 1514.64,440.93 1518.32,440.93 1522.00,440.93 1525.68,440.93 1529.36,440.93 1533.04,440.93 1536.72,440.93 1540.39,440.93 1544.07,440.93 1547.75,440.93 1551.43,440.93 1555.11,440.93 1558.79,440.93 1562.47,440.93 1566.15,440.93 1569.83,440.93 1573.51,440.93 1577.19,440.93 1580.87,440.93 1584.54,440.06 1588.22,440.93 1591.90,440.93 1595.58,440.93 1599.26,440.93 1602.94,440.93 1606.62,440.93 1610.30,440.93 1613.98,440.93 1617.66,440.93 1621.34,440.93 1625.02,440.93 1628.69,440.93 1632.37,440.93 1636.05,440.93 1639.73,440.93 1643.41,440.93 1647.09,440.93 1650.77,440.93 1654.45,440.93 1658.13,440.93 1661.81,440.93 1665.49,440.93 1669.17,440.93 1672.84,440.06 1676.52,440.93 1680.20,440.93 1683.88,440.93 1687.56,440.93 1691.24,440.93 1694.92,440.93 1698.60,440.93 1702.28,440.93 1705.96,440.93 1709.64,440.93 1713.32,440.93 1716.99,440.93 1720.67,440.93 1724.35,440.93 1728.03,440.93 1731.71,440.93 1735.39,440.93 1739.07,440.93 1742.75,440.93 1746.43,440.93 1750.11,440.93 1753.79,440.93 1757.47,440.93 1761.14,440.06 1764.82,440.93 1768.50,440.93 1772.18,440.93 1775.86,440.93 1779.54,440.93 1783.22,440.93 1786.90,440.93 1790.58,440.93 1794.26,440.93 1797.94,440.93 1797.94,450.4"/><polygon fill="#ece06a" points="1143.04,450.4 1143.04,442.67 1146.72,443.54 1150.40,443.54 1154.08,443.54 1157.76,443.54 1161.44,443.54 1165.12,443.54 1168.80,443.54 1172.48,443.54 1176.16,443.54 1179.84,443.54 1183.52,443.54 1187.19,443.54 1190.87,443.54 1194.55,443.54 1198.23,443.54 1201.91,443.54 1205.59,443.54 1209.27,443.54 1212.95,443.54 1216.63,443.54 1220.31,443.54 1223.99,443.54 1227.67,443.54 1231.34,442.67 1235.02,443.54 1238.70,443.54 1242.38,443.54 1246.06,443.54 1249.74,443.54 1253.42,443.54 1257.10,443.54 1260.78,443.54 1264.46,443.54 1268.14,443.54 1271.82,443.54 1275.49,443.54 1279.17,443.54 1282.85,443.54 1286.53,443.54 1290.21,443.54 1293.89,443.54 1297.57,443.54 1301.25,443.54 1304.93,443.54 1308.61,443.54 1312.29,443.54 1315.97,443.54 1319.64,442.67 1323.32,443.54 1327.00,443.54 1330.68,443.54 1334.36,443.54 1338.04,443.54 1341.72,443.54 1345.40,443.54 1349.08,443.54 1352.76,443.54 1356.44,443.54 1360.12,443.54 1363.79,443.54 1367.47,443.54 1371.15,443.54 1374.83,443.54 1378.51,443.54 1382.19,443.54 1385.87,443.54 1389.55,443.54 1393.23,443.54 1396.91,443.54 1400.59,443.54 1404.27,443.54 1407.94,442.67 1411.62,443.54 1415.30,443.54 1418.98,443.54 1422.66,443.54 1426.34,443.54 1430.02,443.54 1433.70,443.54 1437.38,443.54 1441.06,443.54 1444.74,443.54 1448.42,443.54 1452.09,443.54 1455.77,443.54 1459.45,443.54 1463.13,443.54 1466.81,443.54 1470.49,443.54 1474.17,443.54 1477.85,443.54 1481.53,443.54 1485.21,443.54 1488.89,443.54 1492.57,443.54 1496.24,442.67 1499.92,443.54 1503.60,443.54 1507.28,443.54 1510.96,443.54 1514.64,443.54 1518.32,443.54 1522.00,443.54 1525.68,443.54 1529.36,443.54 1533.04,443.54 1536.72,443.54 1540.39,443.54 1544.07,443.54 1547.75,443.54 1551.43,443.54 1555.11,443.54 1558.79,443.54 1562.47,443.54 1566.15,443.54 1569.83,443.54 1573.51,443.54 1577.19,443.54 1580.87,443.54 1584.54,442.67 1588.22,443.54 1591.90,443.54 1595.58,443.54 1599.26,443.54 1602.94,443.54 1606.62,443.54 1610.30,443.54 1613.98,443.54 1617.66,443.54 1621.34,443.54 1625.02,443.54 1628.69,443.54 1632.37,443.54 1636.05,443.54 1639.73,443.54 1643.41,443.54 1647.09,443.54 1650.77,443.54 1654.45,443.54 1658.13,443.54 1661.81,443.54 1665.49,443.54 1669.17,443.54 1672.84,442.67 1676.52,443.54 1680.20,443.54 1683.88,443.54 1687.56,443.54 1691.24,443.54 1694.92,443.54 1698.60,443.54 1702.28,443.54 1705.96,443.54 1709.64,443.54 1713.32,443.54 1716.99,443.54 1720.67,443.54 1724.35,443.54 1728.03,443.54 1731.71,443.54 1735.39,443.54 1739.07,443.54 1742.75,443.54 1746.43,443.54 1750.11,443.54 1753.79,443.54 1757.47,443.54 1761.14,442.67 1764.82,443.54 1768.50,443.54 1772.18,443.54 1775.86,443.54 1779.54,443.54 1783.22,443.54 1786.90,443.54 1790.58,443.54 1794.26,443.54 1797.94,443.54 1797.94,450.4"/><polygon fill="#a276c2" points="1143.04,450.4 1143.04,444.56 1146.72,444.94 1150.40,444.94 1154.08,444.94 1157.76,444.94 1161.44,444.94 1165.12,444.94 1168.80,444.94 1172.48,444.94 1176.16,444.94 1179.84,444.94 1183.52,444.94 1187.19,444.94 1190.87,444.94 1194.55,444.94 1198.23,444.94 1201.91,444.94 1205.59,444.94 1209.27,444.94 1212.95,444.94 1216.63,444.94 1220.31,444.94 1223.99,444.94 1227.67,444.94 1231.34,444.56 1235.02,444.94 1238.70,444.94 1242.38,444.94 1246.06,444.94 1249.74,444.94 1253.42,444.94 1257.10,444.94 1260.78,444.94 1264.46,444.94 1268.14,444.94 1271.82,444.94 1275.49,444.94 1279.17,444.94 1282.85,444.94 1286.53,444.94 1290.21,444.94 1293.89,444.94 1297.57,444.94 1301.25,444.94 1304.93,444.94 1308.61,444.94 1312.29,444.94 1315.97,444.94 1319.64,444.56 1323.32,444.94 1327.00,444.94 1330.68,444.94 1334.36,444.94 1338.04,444.94 1341.72,444.94 1345.40,444.94 1349.08,444.94 1352.76,444.94 1356.44,444.94 1360.12,444.94 1363.79,444.94 1367.47,444.94 1371.15,444.94 1374.83,444.94 1378.51,444.94 1382.19,444.94 1385.87,444.94 1389.55,444.94 1393.23,444.94 1396.91,444.94 1400.59,444.94 1404.27,444.94 1407.94,444.56 1411.62,444.94 1415.30,444.94 1418.98,444.94 1422.66,444.94 1426.34,444.94 1430.02,444.94 1433.70,444.94 1437.38,444.94 1441.06,444.94 1444.74,444.94 1448.42,444.94 1452.09,444.94 1455.77,444.94 1459.45,444.94 1463.13,444.94 1466.81,444.94 1470.49,444.94 1474.17,444.94 1477.85,444.94 1481.53,444.94 1485.21,444.94 1488.89,444.94 1492.57,444.94 1496.24,444.56 1499.92,444.94 1503.60,444.94 1507.28,444.94 1510.96,444.94 1514.64,444.94 1518.32,444.94 1522.00,444.94 1525.68,444.94 1529.36,444.94 1533.04,444.94 1536.72,444.94 1540.39,444.94 1544.07,444.94 1547.75,444.94 1551.43,444.94 1555.11,444.94 1558.79,444.94 1562.47,444.94 1566.15,444.94 1569.83,444.94 1573.51,444.94 1577.19,444.94 1580.87,444.94 1584.54,444.56 1588.22,444.94 1591.90,444.94 1595.58,444.94 1599.26,444.94 1602.94,444.94 1606.62,444.94 1610.30,444.94 1613.98,444.94 1617.66,444.94 1621.34,444.94 1625.02,444.94 1628.69,444.94 1632.37,444.94 1636.05,444.94 1639.73,444.94 1643.41,444.94 1647.09,444.94 1650.77,444.94 1654.45,444.94 1658.13,444.94 1661.81,444.94 1665.49,444.94 1669.17,444.94 1672.84,444.56 1676.52,444.94 1680.20,444.94 1683.88,444.94 1687.56,444.94 1691.24,444.94 1694.92,444.94 1698.60,444.94 1702.28,444.94 1705.96,444.94 1709.64,444.94 1713.32,444.94 1716.99,444.94 1720.67,444.94 1724.35,444.94 1728.03,444.94 1731.71,444.94 1735.39,444.94 1739.07,444.94 1742.75,444.94 1746.43,444.94 1750.11,444.94 1753.79,444.94 1757.47,444.94 1761.14,444.56 1764.82,444.94 1768.50,444.94 1772.18,444.94 1775.86,444.94 1779.54,444.94 1783.22,444.94 1786.90,444.94 1790.58,444.94 1794.26,444.94 1797.94,444.94 1797.94,450.4"/><polygon fill="#d2ec8a" points="1143.04,450.4 1143.04,445.52 1146.72,445.91 1150.40,445.91 1154.08,445.91 1157.76,445.91 1161.44,445.91 1165.12,445.91 1168.80,445.91 1172.48,445.91 1176.16,445.91 1179.84,445.91 1183.52,445.91 1187.19,445.91 1190.87,445.91 1194.55,445.91 1198.23,445.91 1201.91,445.91 1205.59,445.91 1209.27,445.91 1212.95,445.91 1216.63,445.91 1220.31,445.91 1223.99,445.91 1227.67,445.91 1231.34,445.52 1235.02,445.91 1238.70,445.91 1242.38,445.91 1246.06,445.91 1249.74,445.91 1253.42,445.91 1257.10,445.91 1260.78,445.91 1264.46,445.91 1268.14,445.91 1271.82,445.91 1275.49,445.91 1279.17,445.91 1282.85,445.91 1286.53,445.91 1290.21,445.91 1293.89,445.91 1297.57,445.91 1301.25,445.91 1304.93,445.91 1308.61,445.91 1312.29,445.91 1315.97,445.91 1319.64,445.52 1323.32,445.91 1327.00,445.91 1330.68,445.91 1334.36,445.91 1338.04,445.91 1341.72,445.91 1345.40,445.91 1349.08,445.91 1352.76,445.91 1356.44,445.91 1360.12,445.91 1363.79,445.91 1367.47,445.91 1371.15,445.91 1374.83,445.91 1378.51,445.91 1382.19,445.91 1385.87,445.91 1389.55,445.91 1393.23,445.91 1396.91,445.91 1400.59,445.91 1404.27,445.91 1407.94,445.52 1411.62,445.91 1415.30,445.91 1418.98,445.91 1422.66,445.91 1426.34,445.91 1430.02,445.91 1433.70,445.91 1437.38,445.91 1441.06,445.91 1444.74,445.91 1448.42,445.91 1452.09,445.91 1455.77,445.91 1459.45,445.91 1463.13,445.91 1466.81,445.91 1470.49,445.91 1474.17,445.91 1477.85,445.91 1481.53,445.91 1485.21,445.91 1488.89,445.91 1492.57,445.91 1496.24,445.52 1499.92,445.91 1503.60,445.91 1507.28,445.91 1510.96,445.91 1514.64,445.91 1518.32,445.91 1522.00,445.91 1525.68,445.91 1529.36,445.91 1533.04,445.91 1536.72,445.91 1540.39,445.91 1544.07,445.91 1547.75,445.91 1551.43,445.91 1555.11,445.91 1558.79,445.91 1562.47,445.91 1566.15,445.91 1569.83,445.91 1573.51,445.91 1577.19,445.91 1580.87,445.91 1584.54,445.52 1588.22,445.91 1591.90,445.91 1595.58,445.91 1599.26,445.91 1602.94,445.91 1606.62,445.91 1610.30,445.91 1613.98,445.91 1617.66,445.91 1621.34,445.91 1625.02,445.91 1628.69,445.91 1632.37,445.91 1636.05,445.91 1639.73,445.91 1643.41,445.91 1647.09,445.91 1650.77,445.91 1654.45,445.91 1658.13,445.91 1661.81,445.91 1665.49,445.91 1669.17,445.91 1672.84,445.52 1676.52,445.91 1680.20,445.91 1683.88,445.91 1687.56,445.91 1691.24,445.91 1694.92,445.91 1698.60,445.91 1702.28,445.91 1705.96,445.91 1709.64,445.91 1713.32,445.91 1716.99,445.91 1720.67,445.91 1724.35,445.91 1728.03,445.91 1731.71,445.91 1735.39,445.91 1739.07,445.91 1742.75,445.91 1746.43,445.91 1750.11,445.91 1753.79,445.91 1757.47,445.91 1761.14,445.52 1764.82,445.91 1768.50,445.91 1772.18,445.91 1775.86,445.91 1779.54,445.91 1783.22,445.91 1786.90,445.91 1790.58,445.91 1794.26,445.91 1797.94,445.91 1797.94,450.4"/><polygon fill="#fff0a0" points="1143.04,450.4 1143.04,447.65 1146.72,447.65 1150.40,447.65 1154.08,447.65 1157.76,447.65 1161.44,447.65 1165.12,447.65 1168.80,447.65 1172.48,447.65 1176.16,447.65 1179.84,447.65 1183.52,447.65 1187.19,447.65 1190.87,447.65 1194.55,447.65 1198.23,447.65 1201.91,447.65 1205.59,447.65 1209.27,447.65 1212.95,447.65 1216.63,447.65 1220.31,447.65 1223.99,447.65 1227.67,447.65 1231.34,447.65 1235.02,447.65 1238.70,447.65 1242.38,447.65 1246.06,447.65 1249.74,447.65 1253.42,447.65 1257.10,447.65 1260.78,447.65 1264.46,447.65 1268.14,447.65 1271.82,447.65 1275.49,447.65 1279.17,447.65 1282.85,447.65 1286.53,447.65 1290.21,447.65 1293.89,447.65 1297.57,447.65 1301.25,447.65 1304.93,447.65 1308.61,447.65 1312.29,447.65 1315.97,447.65 1319.64,447.65 1323.32,447.65 1327.00,447.65 1330.68,447.65 1334.36,447.65 1338.04,447.65 1341.72,447.65 1345.40,447.65 1349.08,447.65 1352.76,447.65 1356.44,447.65 1360.12,447.65 1363.79,447.65 1367.47,447.65 1371.15,447.65 1374.83,447.65 1378.51,447.65 1382.19,447.65 1385.87,447.65 1389.55,447.65 1393.23,447.65 1396.91,447.65 1400.59,447.65 1404.27,447.65 1407.94,447.65 1411.62,447.65 1415.30,447.65 1418.98,447.65 1422.66,447.65 1426.34,447.65 1430.02,447.65 1433.70,447.65 1437.38,447.65 1441.06,447.65 1444.74,447.65 1448.42,447.65 1452.09,447.65 1455.77,447.65 1459.45,447.65 1463.13,447.65 1466.81,447.65 1470.49,447.65 1474.17,447.65 1477.85,447.65 1481.53,447.65 1485.21,447.65 1488.89,447.65 1492.57,447.65 1496.24,447.65 1499.92,447.65 1503.60,447.65 1507.28,447.65 1510.96,447.65 1514.64,447.65 1518.32,447.65 1522.00,447.65 1525.68,447.65 1529.36,447.65 1533.04,447.65 1536.72,447.65 1540.39,447.65 1544.07,447.65 1547.75,447.65 1551.43,447.65 1555.11,447.65 1558.79,447.65 1562.47,447.65 1566.15,447.65 1569.83,447.65 1573.51,447.65 1577.19,447.65 1580.87,447.65 1584.54,447.65 1588.22,447.65 1591.90,447.65 1595.58,447.65 1599.26,447.65 1602.94,447.65 1606.62,447.65 1610.30,447.65 1613.98,447.65 1617.66,447.65 1621.34,447.65 1625.02,447.65 1628.69,447.65 1632.37,447.65 1636.05,447.65 1639.73,447.65 1643.41,447.65 1647.09,447.65 1650.77,447.65 1654.45,447.65 1658.13,447.65 1661.81,447.65 1665.49,447.65 1669.17,447.65 1672.84,447.65 1676.52,447.65 1680.20,447.65 1683.88,447.65 1687.56,447.65 1691.24,447.65 1694.92,447.65 1698.60,447.65 1702.28,447.65 1705.96,447.65 1709.64,447.65 1713.32,447.65 1716.99,447.65 1720.67,447.65 1724.35,447.65 1728.03,447.65 1731.71,447.65 1735.39,447.65 1739.07,447.65 1742.75,447.65 1746.43,447.65 1750.11,447.65 1753.79,447.65 1757.47,447.65 1761.14,447.65 1764.82,447.65 1768.50,447.65 1772.18,447.65 1775.86,447.65 1779.54,447.65 1783.22,447.65 1786.90,447.65 1790.58,447.65 1794.26,447.65 1797.94,447.65 1797.94,450.4"/><polygon fill="#ec545a" points="1143.04,450.4 1143.04,448.32 1146.72,448.32 1150.40,448.32 1154.08,448.32 1157.76,448.32 1161.44,448.32 1165.12,448.32 1168.80,448.32 1172.48,448.32 1176.16,448.32 1179.84,448.32 1183.52,448.32 1187.19,448.32 1190.87,448.32 1194.55,448.32 1198.23,448.32 1201.91,448.32 1205.59,448.32 1209.27,448.32 1212.95,448.32 1216.63,448.32 1220.31,448.32 1223.99,448.32 1227.67,448.32 1231.34,448.32 1235.02,448.32 1238.70,448.32 1242.38,448.32 1246.06,448.32 1249.74,448.32 1253.42,448.32 1257.10,448.32 1260.78,448.32 1264.46,448.32 1268.14,448.32 1271.82,448.32 1275.49,448.32 1279.17,448.32 1282.85,448.32 1286.53,448.32 1290.21,448.32 1293.89,448.32 1297.57,448.32 1301.25,448.32 1304.93,448.32 1308.61,448.32 1312.29,448.32 1315.97,448.32 1319.64,448.32 1323.32,448.32 1327.00,448.32 1330.68,448.32 1334.36,448.32 1338.04,448.32 1341.72,448.32 1345.40,448.32 1349.08,448.32 1352.76,448.32 1356.44,448.32 1360.12,448.32 1363.79,448.32 1367.47,448.32 1371.15,448.32 1374.83,448.32 1378.51,448.32 1382.19,448.32 1385.87,448.32 1389.55,448.32 1393.23,448.32 1396.91,448.32 1400.59,448.32 1404.27,448.32 1407.94,448.32 1411.62,448.32 1415.30,448.32 1418.98,448.32 1422.66,448.32 1426.34,448.32 1430.02,448.32 1433.70,448.32 1437.38,448.32 1441.06,448.32 1444.74,448.32 1448.42,448.32 1452.09,448.32 1455.77,448.32 1459.45,448.32 1463.13,448.32 1466.81,448.32 1470.49,448.32 1474.17,448.32 1477.85,448.32 1481.53,448.32 1485.21,448.32 1488.89,448.32 1492.57,448.32 1496.24,448.32 1499.92,448.32 1503.60,448.32 1507.28,448.32 1510.96,448.32 1514.64,448.32 1518.32,448.32 1522.00,448.32 1525.68,448.32 1529.36,448.32 1533.04,448.32 1536.72,448.32 1540.39,448.32 1544.07,448.32 1547.75,448.32 1551.43,448.32 1555.11,448.32 1558.79,448.32 1562.47,448.32 1566.15,448.32 1569.83,448.32 1573.51,448.32 1577.19,448.32 1580.87,448.32 1584.54,448.32 1588.22,448.32 1591.90,448.32 1595.58,448.32 1599.26,448.32 1602.94,448.32 1606.62,448.32 1610.30,448.32 1613.98,448.32 1617.66,448.32 1621.34,448.32 1625.02,448.32 1628.69,448.32 1632.37,448.32 1636.05,448.32 1639.73,448.32 1643.41,448.32 1647.09,448.32 1650.77,448.32 1654.45,448.32 1658.13,448.32 1661.81,448.32 1665.49,448.32 1669.17,448.32 1672.84,448.32 1676.52,448.32 1680.20,448.32 1683.88,448.32 1687.56,448.32 1691.24,448.32 1694.92,448.32 1698.60,448.32 1702.28,448.32 1705.96,448.32 1709.64,448.32 1713.32,448.32 1716.99,448.32 1720.67,448.32 1724.35,448.32 1728.03,448.32 1731.71,448.32 1735.39,448.32 1739.07,448.32 1742.75,448.32 1746.43,448.32 1750.11,448.32 1753.79,448.32 1757.47,448.32 1761.14,448.32 1764.82,448.32 1768.50,448.32 1772.18,448.32 1775.86,448.32 1779.54,448.32 1783.22,448.32 1786.90,448.32 1790.58,448.32 1794.26,448.32 1797.94,448.32 1797.94,450.4"/><polygon fill="#6a6aa8" points="1143.04,450.4 1143.04,448.81 1146.72,448.81 1150.40,448.81 1154.08,448.81 1157.76,448.81 1161.44,448.81 1165.12,448.81 1168.80,448.81 1172.48,448.81 1176.16,448.81 1179.84,448.81 1183.52,448.81 1187.19,448.81 1190.87,448.81 1194.55,448.81 1198.23,448.81 1201.91,448.81 1205.59,448.81 1209.27,448.81 1212.95,448.81 1216.63,448.81 1220.31,448.81 1223.99,448.81 1227.67,448.81 1231.34,448.81 1235.02,448.81 1238.70,448.81 1242.38,448.81 1246.06,448.81 1249.74,448.81 1253.42,448.81 1257.10,448.81 1260.78,448.81 1264.46,448.81 1268.14,448.81 1271.82,448.81 1275.49,448.81 1279.17,448.81 1282.85,448.81 1286.53,448.81 1290.21,448.81 1293.89,448.81 1297.57,448.81 1301.25,448.81 1304.93,448.81 1308.61,448.81 1312.29,448.81 1315.97,448.81 1319.64,448.81 1323.32,448.81 1327.00,448.81 1330.68,448.81 1334.36,448.81 1338.04,448.81 1341.72,448.81 1345.40,448.81 1349.08,448.81 1352.76,448.81 1356.44,448.81 1360.12,448.81 1363.79,448.81 1367.47,448.81 1371.15,448.81 1374.83,448.81 1378.51,448.81 1382.19,448.81 1385.87,448.81 1389.55,448.81 1393.23,448.81 1396.91,448.81 1400.59,448.81 1404.27,448.81 1407.94,448.81 1411.62,448.81 1415.30,448.81 1418.98,448.81 1422.66,448.81 1426.34,448.81 1430.02,448.81 1433.70,448.81 1437.38,448.81 1441.06,448.81 1444.74,448.81 1448.42,448.81 1452.09,448.81 1455.77,448.81 1459.45,448.81 1463.13,448.81 1466.81,448.81 1470.49,448.81 1474.17,448.81 1477.85,448.81 1481.53,448.81 1485.21,448.81 1488.89,448.81 1492.57,448.81 1496.24,448.81 1499.92,448.81 1503.60,448.81 1507.28,448.81 1510.96,448.81 1514.64,448.81 1518.32,448.81 1522.00,448.81 1525.68,448.81 1529.36,448.81 1533.04,448.81 1536.72,448.81 1540.39,448.81 1544.07,448.81 1547.75,448.81 1551.43,448.81 1555.11,448.81 1558.79,448.81 1562.47,448.81 1566.15,448.81 1569.83,448.81 1573.51,448.81 1577.19,448.81 1580.87,448.81 1584.54,448.81 1588.22,448.81 1591.90,448.81 1595.58,448.81 1599.26,448.81 1602.94,448.81 1606.62,448.81 1610.30,448.81 1613.98,448.81 1617.66,448.81 1621.34,448.81 1625.02,448.81 1628.69,448.81 1632.37,448.81 1636.05,448.81 1639.73,448.81 1643.41,448.81 1647.09,448.81 1650.77,448.81 1654.45,448.81 1658.13,448.81 1661.81,448.81 1665.49,448.81 1669.17,448.81 1672.84,448.81 1676.52,448.81 1680.20,448.81 1683.88,448.81 1687.56,448.81 1691.24,448.81 1694.92,448.81 1698.60,448.81 1702.28,448.81 1705.96,448.81 1709.64,448.81 1713.32,448.81 1716.99,448.81 1720.67,448.81 1724.35,448.81 1728.03,448.81 1731.71,448.81 1735.39,448.81 1739.07,448.81 1742.75,448.81 1746.43,448.81 1750.11,448.81 1753.79,448.81 1757.47,448.81 1761.14,448.81 1764.82,448.81 1768.50,448.81 1772.18,448.81 1775.86,448.81 1779.54,448.81 1783.22,448.81 1786.90,448.81 1790.58,448.81 1794.26,448.81 1797.94,448.81 1797.94,450.4"/><polygon fill="#5a8578" points="1143.04,450.4 1143.04,449.10 1146.72,449.10 1150.40,449.10 1154.08,449.10 1157.76,449.10 1161.44,449.10 1165.12,449.10 1168.80,449.10 1172.48,449.10 1176.16,449.10 1179.84,449.10 1183.52,449.10 1187.19,449.10 1190.87,449.10 1194.55,449.10 1198.23,449.10 1201.91,449.10 1205.59,449.10 1209.27,449.10 1212.95,449.10 1216.63,449.10 1220.31,449.10 1223.99,449.10 1227.67,449.10 1231.34,449.10 1235.02,449.10 1238.70,449.10 1242.38,449.10 1246.06,449.10 1249.74,449.10 1253.42,449.10 1257.10,449.10 1260.78,449.10 1264.46,449.10 1268.14,449.10 1271.82,449.10 1275.49,449.10 1279.17,449.10 1282.85,449.10 1286.53,449.10 1290.21,449.10 1293.89,449.10 1297.57,449.10 1301.25,449.10 1304.93,449.10 1308.61,449.10 1312.29,449.10 1315.97,449.10 1319.64,449.10 1323.32,449.10 1327.00,449.10 1330.68,449.10 1334.36,449.10 1338.04,449.10 1341.72,449.10 1345.40,449.10 1349.08,449.10 1352.76,449.10 1356.44,449.10 1360.12,449.10 1363.79,449.10 1367.47,449.10 1371.15,449.10 1374.83,449.10 1378.51,449.10 1382.19,449.10 1385.87,449.10 1389.55,449.10 1393.23,449.10 1396.91,449.10 1400.59,449.10 1404.27,449.10 1407.94,449.10 1411.62,449.10 1415.30,449.10 1418.98,449.10 1422.66,449.10 1426.34,449.10 1430.02,449.10 1433.70,449.10 1437.38,449.10 1441.06,449.10 1444.74,449.10 1448.42,449.10 1452.09,449.10 1455.77,449.10 1459.45,449.10 1463.13,449.10 1466.81,449.10 1470.49,449.10 1474.17,449.10 1477.85,449.10 1481.53,449.10 1485.21,449.10 1488.89,449.10 1492.57,449.10 1496.24,449.10 1499.92,449.10 1503.60,449.10 1507.28,449.10 1510.96,449.10 1514.64,449.10 1518.32,449.10 1522.00,449.10 1525.68,449.10 1529.36,449.10 1533.04,449.10 1536.72,449.10 1540.39,449.10 1544.07,449.10 1547.75,449.10 1551.43,449.10 1555.11,449.10 1558.79,449.10 1562.47,449.10 1566.15,449.10 1569.83,449.10 1573.51,449.10 1577.19,449.10 1580.87,449.10 1584.54,449.10 1588.22,449.10 1591.90,449.10 1595.58,449.10 1599.26,449.10 1602.94,449.10 1606.62,449.10 1610.30,449.10 1613.98,449.10 1617.66,449.10 1621.34,449.10 1625.02,449.10 1628.69,449.10 1632.37,449.10 1636.05,449.10 1639.73,449.10 1643.41,449.10 1647.09,449.10 1650.77,449.10 1654.45,449.10 1658.13,449.10 1661.81,449.10 1665.49,449.10 1669.17,449.10 1672.84,449.10 1676.52,449.10 1680.20,449.10 1683.88,449.10 1687.56,449.10 1691.24,449.10 1694.92,449.10 1698.60,449.10 1702.28,449.10 1705.96,449.10 1709.64,449.10 1713.32,449.10 1716.99,449.10 1720.67,449.10 1724.35,449.10 1728.03,449.10 1731.71,449.10 1735.39,449.10 1739.07,449.10 1742.75,449.10 1746.43,449.10 1750.11,449.10 1753.79,449.10 1757.47,449.10 1761.14,449.10 1764.82,449.10 1768.50,449.10 1772.18,449.10 1775.86,449.10 1779.54,449.10 1783.22,449.10 1786.90,449.10 1790.58,449.10 1794.26,449.10 1797.94,449.10 1797.94,450.4"/><polyline fill="none" stroke="#419341" stroke-width="0.6" stroke-opacity="0.75" points="1143.04,275.07 1146.72,337.38 1150.40,398.91 1154.08,389.64 1157.76,406.25 1161.44,411.76 1165.12,409.92 1168.80,411.18 1172.48,409.83 1176.16,408.38 1179.84,406.74 1183.52,408.19 1187.19,403.84 1190.87,408.77 1194.55,407.51 1198.23,411.18 1201.91,409.83 1205.59,408.19 1209.27,400.84 1212.95,410.41 1216.63,410.41 1220.31,410.41 1223.99,410.41 1227.67,342.21 1231.34,275.07 1235.02,337.38 1238.70,398.91 1242.38,389.64 1246.06,406.25 1249.74,411.76 1253.42,409.92 1257.10,411.18 1260.78,409.83 1264.46,408.38 1268.14,406.74 1271.82,408.19 1275.49,403.84 1279.17,408.77 1282.85,407.51 1286.53,411.18 1290.21,409.83 1293.89,408.19 1297.57,400.84 1301.25,410.41 1304.93,410.41 1308.61,410.41 1312.29,410.41 1315.97,342.21 1319.64,275.07 1323.32,337.38 1327.00,398.91 1330.68,389.64 1334.36,406.25 1338.04,411.76 1341.72,409.92 1345.40,411.18 1349.08,409.83 1352.76,408.38 1356.44,406.74 1360.12,408.19 1363.79,403.84 1367.47,408.77 1371.15,407.51 1374.83,411.18 1378.51,409.83 1382.19,408.19 1385.87,400.84 1389.55,410.41 1393.23,410.41 1396.91,410.41 1400.59,410.41 1404.27,342.21 1407.94,275.07 1411.62,337.38 1415.30,398.91 1418.98,389.64 1422.66,406.25 1426.34,411.76 1430.02,409.92 1433.70,411.18 1437.38,409.83 1441.06,408.38 1444.74,406.74 1448.42,408.19 1452.09,403.84 1455.77,408.77 1459.45,407.51 1463.13,411.18 1466.81,409.83 1470.49,408.19 1474.17,400.84 1477.85,410.41 1481.53,410.41 1485.21,410.41 1488.89,410.41 1492.57,342.21 1496.24,275.07 1499.92,337.38 1503.60,398.91 1507.28,389.64 1510.96,406.25 1514.64,411.76 1518.32,409.92 1522.00,411.18 1525.68,409.83 1529.36,408.38 1533.04,406.74 1536.72,408.19 1540.39,403.84 1544.07,408.77 1547.75,407.51 1551.43,411.18 1555.11,409.83 1558.79,408.19 1562.47,400.84 1566.15,410.41 1569.83,410.41 1573.51,410.41 1577.19,410.41 1580.87,342.21 1584.54,275.07 1588.22,337.38 1591.90,398.91 1595.58,389.64 1599.26,406.25 1602.94,411.76 1606.62,409.92 1610.30,411.18 1613.98,409.83 1617.66,408.38 1621.34,406.74 1625.02,408.19 1628.69,403.84 1632.37,408.77 1636.05,407.51 1639.73,411.18 1643.41,409.83 1647.09,408.19 1650.77,400.84 1654.45,410.41 1658.13,410.41 1661.81,410.41 1665.49,410.41 1669.17,342.21 1672.84,275.07 1676.52,337.38 1680.20,398.91 1683.88,389.64 1687.56,406.25 1691.24,411.76 1694.92,409.92 1698.60,411.18 1702.28,409.83 1705.96,408.38 1709.64,406.74 1713.32,408.19 1716.99,403.84 1720.67,408.77 1724.35,407.51 1728.03,411.18 1731.71,409.83 1735.39,408.19 1739.07,400.84 1742.75,410.41 1746.43,410.41 1750.11,410.41 1753.79,410.41 1757.47,342.21 1761.14,275.07 1764.82,337.38 1768.50,398.91 1772.18,389.64 1775.86,406.25 1779.54,411.76 1783.22,409.92 1786.90,411.18 1790.58,409.83 1794.26,408.38 1797.94,406.74"/><polyline fill="none" stroke="#cc7b7b" stroke-width="0.6" stroke-opacity="0.75" points="1143.04,408.43 1146.72,408.81 1150.40,413.84 1154.08,414.61 1157.76,414.61 1161.44,414.61 1165.12,414.61 1168.80,414.61 1172.48,414.61 1176.16,414.61 1179.84,414.61 1183.52,413.45 1187.19,410.94 1190.87,414.03 1194.55,414.61 1198.23,414.61 1201.91,414.61 1205.59,413.64 1209.27,407.94 1212.95,413.84 1216.63,414.61 1220.31,414.61 1223.99,414.61 1227.67,414.61 1231.34,408.43 1235.02,408.81 1238.70,413.84 1242.38,414.61 1246.06,414.61 1249.74,414.61 1253.42,414.61 1257.10,414.61 1260.78,414.61 1264.46,414.61 1268.14,414.61 1271.82,413.45 1275.49,410.94 1279.17,414.03 1282.85,414.61 1286.53,414.61 1290.21,414.61 1293.89,413.64 1297.57,407.94 1301.25,413.84 1304.93,414.61 1308.61,414.61 1312.29,414.61 1315.97,414.61 1319.64,408.43 1323.32,408.81 1327.00,413.84 1330.68,414.61 1334.36,414.61 1338.04,414.61 1341.72,414.61 1345.40,414.61 1349.08,414.61 1352.76,414.61 1356.44,414.61 1360.12,413.45 1363.79,410.94 1367.47,414.03 1371.15,414.61 1374.83,414.61 1378.51,414.61 1382.19,413.64 1385.87,407.94 1389.55,413.84 1393.23,414.61 1396.91,414.61 1400.59,414.61 1404.27,414.61 1407.94,408.43 1411.62,408.81 1415.30,413.84 1418.98,414.61 1422.66,414.61 1426.34,414.61 1430.02,414.61 1433.70,414.61 1437.38,414.61 1441.06,414.61 1444.74,414.61 1448.42,413.45 1452.09,410.94 1455.77,414.03 1459.45,414.61 1463.13,414.61 1466.81,414.61 1470.49,413.64 1474.17,407.94 1477.85,413.84 1481.53,414.61 1485.21,414.61 1488.89,414.61 1492.57,414.61 1496.24,408.43 1499.92,408.81 1503.60,413.84 1507.28,414.61 1510.96,414.61 1514.64,414.61 1518.32,414.61 1522.00,414.61 1525.68,414.61 1529.36,414.61 1533.04,414.61 1536.72,413.45 1540.39,410.94 1544.07,414.03 1547.75,414.61 1551.43,414.61 1555.11,414.61 1558.79,413.64 1562.47,407.94 1566.15,413.84 1569.83,414.61 1573.51,414.61 1577.19,414.61 1580.87,414.61 1584.54,408.43 1588.22,408.81 1591.90,413.84 1595.58,414.61 1599.26,414.61 1602.94,414.61 1606.62,414.61 1610.30,414.61 1613.98,414.61 1617.66,414.61 1621.34,414.61 1625.02,413.45 1628.69,410.94 1632.37,414.03 1636.05,414.61 1639.73,414.61 1643.41,414.61 1647.09,413.64 1650.77,407.94 1654.45,413.84 1658.13,414.61 1661.81,414.61 1665.49,414.61 1669.17,414.61 1672.84,408.43 1676.52,408.81 1680.20,413.84 1683.88,414.61 1687.56,414.61 1691.24,414.61 1694.92,414.61 1698.60,414.61 1702.28,414.61 1705.96,414.61 1709.64,414.61 1713.32,413.45 1716.99,410.94 1720.67,414.03 1724.35,414.61 1728.03,414.61 1731.71,414.61 1735.39,413.64 1739.07,407.94 1742.75,413.84 1746.43,414.61 1750.11,414.61 1753.79,414.61 1757.47,414.61 1761.14,408.43 1764.82,408.81 1768.50,413.84 1772.18,414.61 1775.86,414.61 1779.54,414.61 1783.22,414.61 1786.90,414.61 1790.58,414.61 1794.26,414.61 1797.94,414.61"/><polyline fill="none" stroke="#bba950" stroke-width="0.6" stroke-opacity="0.75" points="1143.04,416.01 1146.72,420.26 1150.40,420.26 1154.08,420.26 1157.76,420.26 1161.44,420.26 1165.12,420.26 1168.80,420.26 1172.48,420.26 1176.16,420.26 1179.84,420.26 1183.52,420.26 1187.19,420.26 1190.87,420.26 1194.55,420.26 1198.23,420.26 1201.91,420.26 1205.59,420.26 1209.27,420.26 1212.95,420.26 1216.63,420.26 1220.31,420.26 1223.99,420.26 1227.67,420.26 1231.34,416.01 1235.02,420.26 1238.70,420.26 1242.38,420.26 1246.06,420.26 1249.74,420.26 1253.42,420.26 1257.10,420.26 1260.78,420.26 1264.46,420.26 1268.14,420.26 1271.82,420.26 1275.49,420.26 1279.17,420.26 1282.85,420.26 1286.53,420.26 1290.21,420.26 1293.89,420.26 1297.57,420.26 1301.25,420.26 1304.93,420.26 1308.61,420.26 1312.29,420.26 1315.97,420.26 1319.64,416.01 1323.32,420.26 1327.00,420.26 1330.68,420.26 1334.36,420.26 1338.04,420.26 1341.72,420.26 1345.40,420.26 1349.08,420.26 1352.76,420.26 1356.44,420.26 1360.12,420.26 1363.79,420.26 1367.47,420.26 1371.15,420.26 1374.83,420.26 1378.51,420.26 1382.19,420.26 1385.87,420.26 1389.55,420.26 1393.23,420.26 1396.91,420.26 1400.59,420.26 1404.27,420.26 1407.94,416.01 1411.62,420.26 1415.30,420.26 1418.98,420.26 1422.66,420.26 1426.34,420.26 1430.02,420.26 1433.70,420.26 1437.38,420.26 1441.06,420.26 1444.74,420.26 1448.42,420.26 1452.09,420.26 1455.77,420.26 1459.45,420.26 1463.13,420.26 1466.81,420.26 1470.49,420.26 1474.17,420.26 1477.85,420.26 1481.53,420.26 1485.21,420.26 1488.89,420.26 1492.57,420.26 1496.24,416.01 1499.92,420.26 1503.60,420.26 1507.28,420.26 1510.96,420.26 1514.64,420.26 1518.32,420.26 1522.00,420.26 1525.68,420.26 1529.36,420.26 1533.04,420.26 1536.72,420.26 1540.39,420.26 1544.07,420.26 1547.75,420.26 1551.43,420.26 1555.11,420.26 1558.79,420.26 1562.47,420.26 1566.15,420.26 1569.83,420.26 1573.51,420.26 1577.19,420.26 1580.87,420.26 1584.54,416.01 1588.22,420.26 1591.90,420.26 1595.58,420.26 1599.26,420.26 1602.94,420.26 1606.62,420.26 1610.30,420.26 1613.98,420.26 1617.66,420.26 1621.34,420.26 1625.02,420.26 1628.69,420.26 1632.37,420.26 1636.05,420.26 1639.73,420.26 1643.41,420.26 1647.09,420.26 1650.77,420.26 1654.45,420.26 1658.13,420.26 1661.81,420.26 1665.49,420.26 1669.17,420.26 1672.84,416.01 1676.52,420.26 1680.20,420.26 1683.88,420.26 1687.56,420.26 1691.24,420.26 1694.92,420.26 1698.60,420.26 1702.28,420.26 1705.96,420.26 1709.64,420.26 1713.32,420.26 1716.99,420.26 1720.67,420.26 1724.35,420.26 1728.03,420.26 1731.71,420.26 1735.39,420.26 1739.07,420.26 1742.75,420.26 1746.43,420.26 1750.11,420.26 1753.79,420.26 1757.47,420.26 1761.14,416.01 1764.82,420.26 1768.50,420.26 1772.18,420.26 1775.86,420.26 1779.54,420.26 1783.22,420.26 1786.90,420.26 1790.58,420.26 1794.26,420.26 1797.94,420.26"/><polyline fill="none" stroke="#bd8451" stroke-width="0.6" stroke-opacity="0.75" points="1143.04,422.39 1146.72,425.67 1150.40,425.67 1154.08,425.67 1157.76,425.67 1161.44,425.67 1165.12,425.67 1168.80,425.67 1172.48,425.67 1176.16,425.67 1179.84,425.67 1183.52,425.67 1187.19,425.67 1190.87,425.67 1194.55,425.67 1198.23,425.67 1201.91,425.67 1205.59,425.67 1209.27,425.67 1212.95,425.67 1216.63,425.67 1220.31,425.67 1223.99,425.67 1227.67,425.67 1231.34,422.39 1235.02,425.67 1238.70,425.67 1242.38,425.67 1246.06,425.67 1249.74,425.67 1253.42,425.67 1257.10,425.67 1260.78,425.67 1264.46,425.67 1268.14,425.67 1271.82,425.67 1275.49,425.67 1279.17,425.67 1282.85,425.67 1286.53,425.67 1290.21,425.67 1293.89,425.67 1297.57,425.67 1301.25,425.67 1304.93,425.67 1308.61,425.67 1312.29,425.67 1315.97,425.67 1319.64,422.39 1323.32,425.67 1327.00,425.67 1330.68,425.67 1334.36,425.67 1338.04,425.67 1341.72,425.67 1345.40,425.67 1349.08,425.67 1352.76,425.67 1356.44,425.67 1360.12,425.67 1363.79,425.67 1367.47,425.67 1371.15,425.67 1374.83,425.67 1378.51,425.67 1382.19,425.67 1385.87,425.67 1389.55,425.67 1393.23,425.67 1396.91,425.67 1400.59,425.67 1404.27,425.67 1407.94,422.39 1411.62,425.67 1415.30,425.67 1418.98,425.67 1422.66,425.67 1426.34,425.67 1430.02,425.67 1433.70,425.67 1437.38,425.67 1441.06,425.67 1444.74,425.67 1448.42,425.67 1452.09,425.67 1455.77,425.67 1459.45,425.67 1463.13,425.67 1466.81,425.67 1470.49,425.67 1474.17,425.67 1477.85,425.67 1481.53,425.67 1485.21,425.67 1488.89,425.67 1492.57,425.67 1496.24,422.39 1499.92,425.67 1503.60,425.67 1507.28,425.67 1510.96,425.67 1514.64,425.67 1518.32,425.67 1522.00,425.67 1525.68,425.67 1529.36,425.67 1533.04,425.67 1536.72,425.67 1540.39,425.67 1544.07,425.67 1547.75,425.67 1551.43,425.67 1555.11,425.67 1558.79,425.67 1562.47,425.67 1566.15,425.67 1569.83,425.67 1573.51,425.67 1577.19,425.67 1580.87,425.67 1584.54,422.39 1588.22,425.67 1591.90,425.67 1595.58,425.67 1599.26,425.67 1602.94,425.67 1606.62,425.67 1610.30,425.67 1613.98,425.67 1617.66,425.67 1621.34,425.67 1625.02,425.67 1628.69,425.67 1632.37,425.67 1636.05,425.67 1639.73,425.67 1643.41,425.67 1647.09,425.67 1650.77,425.67 1654.45,425.67 1658.13,425.67 1661.81,425.67 1665.49,425.67 1669.17,425.67 1672.84,422.39 1676.52,425.67 1680.20,425.67 1683.88,425.67 1687.56,425.67 1691.24,425.67 1694.92,425.67 1698.60,425.67 1702.28,425.67 1705.96,425.67 1709.64,425.67 1713.32,425.67 1716.99,425.67 1720.67,425.67 1724.35,425.67 1728.03,425.67 1731.71,425.67 1735.39,425.67 1739.07,425.67 1742.75,425.67 1746.43,425.67 1750.11,425.67 1753.79,425.67 1757.47,425.67 1761.14,422.39 1764.82,425.67 1768.50,425.67 1772.18,425.67 1775.86,425.67 1779.54,425.67 1783.22,425.67 1786.90,425.67 1790.58,425.67 1794.26,425.67 1797.94,425.67"/><polyline fill="none" stroke="#bcb555" stroke-width="0.6" stroke-opacity="0.75" points="1143.04,428.18 1146.72,430.89 1150.40,430.89 1154.08,430.89 1157.76,430.89 1161.44,430.89 1165.12,430.89 1168.80,430.89 1172.48,430.89 1176.16,430.89 1179.84,430.89 1183.52,430.89 1187.19,430.89 1190.87,430.89 1194.55,430.89 1198.23,430.89 1201.91,430.89 1205.59,430.89 1209.27,430.89 1212.95,430.89 1216.63,430.89 1220.31,430.89 1223.99,430.89 1227.67,430.89 1231.34,428.18 1235.02,430.89 1238.70,430.89 1242.38,430.89 1246.06,430.89 1249.74,430.89 1253.42,430.89 1257.10,430.89 1260.78,430.89 1264.46,430.89 1268.14,430.89 1271.82,430.89 1275.49,430.89 1279.17,430.89 1282.85,430.89 1286.53,430.89 1290.21,430.89 1293.89,430.89 1297.57,430.89 1301.25,430.89 1304.93,430.89 1308.61,430.89 1312.29,430.89 1315.97,430.89 1319.64,428.18 1323.32,430.89 1327.00,430.89 1330.68,430.89 1334.36,430.89 1338.04,430.89 1341.72,430.89 1345.40,430.89 1349.08,430.89 1352.76,430.89 1356.44,430.89 1360.12,430.89 1363.79,430.89 1367.47,430.89 1371.15,430.89 1374.83,430.89 1378.51,430.89 1382.19,430.89 1385.87,430.89 1389.55,430.89 1393.23,430.89 1396.91,430.89 1400.59,430.89 1404.27,430.89 1407.94,428.18 1411.62,430.89 1415.30,430.89 1418.98,430.89 1422.66,430.89 1426.34,430.89 1430.02,430.89 1433.70,430.89 1437.38,430.89 1441.06,430.89 1444.74,430.89 1448.42,430.89 1452.09,430.89 1455.77,430.89 1459.45,430.89 1463.13,430.89 1466.81,430.89 1470.49,430.89 1474.17,430.89 1477.85,430.89 1481.53,430.89 1485.21,430.89 1488.89,430.89 1492.57,430.89 1496.24,428.18 1499.92,430.89 1503.60,430.89 1507.28,430.89 1510.96,430.89 1514.64,430.89 1518.32,430.89 1522.00,430.89 1525.68,430.89 1529.36,430.89 1533.04,430.89 1536.72,430.89 1540.39,430.89 1544.07,430.89 1547.75,430.89 1551.43,430.89 1555.11,430.89 1558.79,430.89 1562.47,430.89 1566.15,430.89 1569.83,430.89 1573.51,430.89 1577.19,430.89 1580.87,430.89 1584.54,428.18 1588.22,430.89 1591.90,430.89 1595.58,430.89 1599.26,430.89 1602.94,430.89 1606.62,430.89 1610.30,430.89 1613.98,430.89 1617.66,430.89 1621.34,430.89 1625.02,430.89 1628.69,430.89 1632.37,430.89 1636.05,430.89 1639.73,430.89 1643.41,430.89 1647.09,430.89 1650.77,430.89 1654.45,430.89 1658.13,430.89 1661.81,430.89 1665.49,430.89 1669.17,430.89 1672.84,428.18 1676.52,430.89 1680.20,430.89 1683.88,430.89 1687.56,430.89 1691.24,430.89 1694.92,430.89 1698.60,430.89 1702.28,430.89 1705.96,430.89 1709.64,430.89 1713.32,430.89 1716.99,430.89 1720.67,430.89 1724.35,430.89 1728.03,430.89 1731.71,430.89 1735.39,430.89 1739.07,430.89 1742.75,430.89 1746.43,430.89 1750.11,430.89 1753.79,430.89 1757.47,430.89 1761.14,428.18 1764.82,430.89 1768.50,430.89 1772.18,430.89 1775.86,430.89 1779.54,430.89 1783.22,430.89 1786.90,430.89 1790.58,430.89 1794.26,430.89 1797.94,430.89"/><polyline fill="none" stroke="#307070" stroke-width="0.6" stroke-opacity="0.75" points="1143.04,434.07 1146.72,436.01 1150.40,436.01 1154.08,436.01 1157.76,436.01 1161.44,436.01 1165.12,436.01 1168.80,436.01 1172.48,436.01 1176.16,436.01 1179.84,436.01 1183.52,436.01 1187.19,436.01 1190.87,436.01 1194.55,436.01 1198.23,436.01 1201.91,436.01 1205.59,436.01 1209.27,436.01 1212.95,436.01 1216.63,436.01 1220.31,436.01 1223.99,436.01 1227.67,436.01 1231.34,434.07 1235.02,436.01 1238.70,436.01 1242.38,436.01 1246.06,436.01 1249.74,436.01 1253.42,436.01 1257.10,436.01 1260.78,436.01 1264.46,436.01 1268.14,436.01 1271.82,436.01 1275.49,436.01 1279.17,436.01 1282.85,436.01 1286.53,436.01 1290.21,436.01 1293.89,436.01 1297.57,436.01 1301.25,436.01 1304.93,436.01 1308.61,436.01 1312.29,436.01 1315.97,436.01 1319.64,434.07 1323.32,436.01 1327.00,436.01 1330.68,436.01 1334.36,436.01 1338.04,436.01 1341.72,436.01 1345.40,436.01 1349.08,436.01 1352.76,436.01 1356.44,436.01 1360.12,436.01 1363.79,436.01 1367.47,436.01 1371.15,436.01 1374.83,436.01 1378.51,436.01 1382.19,436.01 1385.87,436.01 1389.55,436.01 1393.23,436.01 1396.91,436.01 1400.59,436.01 1404.27,436.01 1407.94,434.07 1411.62,436.01 1415.30,436.01 1418.98,436.01 1422.66,436.01 1426.34,436.01 1430.02,436.01 1433.70,436.01 1437.38,436.01 1441.06,436.01 1444.74,436.01 1448.42,436.01 1452.09,436.01 1455.77,436.01 1459.45,436.01 1463.13,436.01 1466.81,436.01 1470.49,436.01 1474.17,436.01 1477.85,436.01 1481.53,436.01 1485.21,436.01 1488.89,436.01 1492.57,436.01 1496.24,434.07 1499.92,436.01 1503.60,436.01 1507.28,436.01 1510.96,436.01 1514.64,436.01 1518.32,436.01 1522.00,436.01 1525.68,436.01 1529.36,436.01 1533.04,436.01 1536.72,436.01 1540.39,436.01 1544.07,436.01 1547.75,436.01 1551.43,436.01 1555.11,436.01 1558.79,436.01 1562.47,436.01 1566.15,436.01 1569.83,436.01 1573.51,436.01 1577.19,436.01 1580.87,436.01 1584.54,434.07 1588.22,436.01 1591.90,436.01 1595.58,436.01 1599.26,436.01 1602.94,436.01 1606.62,436.01 1610.30,436.01 1613.98,436.01 1617.66,436.01 1621.34,436.01 1625.02,436.01 1628.69,436.01 1632.37,436.01 1636.05,436.01 1639.73,436.01 1643.41,436.01 1647.09,436.01 1650.77,436.01 1654.45,436.01 1658.13,436.01 1661.81,436.01 1665.49,436.01 1669.17,436.01 1672.84,434.07 1676.52,436.01 1680.20,436.01 1683.88,436.01 1687.56,436.01 1691.24,436.01 1694.92,436.01 1698.60,436.01 1702.28,436.01 1705.96,436.01 1709.64,436.01 1713.32,436.01 1716.99,436.01 1720.67,436.01 1724.35,436.01 1728.03,436.01 1731.71,436.01 1735.39,436.01 1739.07,436.01 1742.75,436.01 1746.43,436.01 1750.11,436.01 1753.79,436.01 1757.47,436.01 1761.14,434.07 1764.82,436.01 1768.50,436.01 1772.18,436.01 1775.86,436.01 1779.54,436.01 1783.22,436.01 1786.90,436.01 1790.58,436.01 1794.26,436.01 1797.94,436.01"/><polyline fill="none" stroke="#514083" stroke-width="0.6" stroke-opacity="0.75" points="1143.04,437.36 1146.72,438.61 1150.40,438.61 1154.08,438.61 1157.76,438.61 1161.44,438.61 1165.12,438.61 1168.80,438.61 1172.48,438.61 1176.16,438.61 1179.84,438.61 1183.52,438.61 1187.19,438.61 1190.87,438.61 1194.55,438.61 1198.23,438.61 1201.91,438.61 1205.59,438.61 1209.27,438.61 1212.95,438.61 1216.63,438.61 1220.31,438.61 1223.99,438.61 1227.67,438.61 1231.34,437.36 1235.02,438.61 1238.70,438.61 1242.38,438.61 1246.06,438.61 1249.74,438.61 1253.42,438.61 1257.10,438.61 1260.78,438.61 1264.46,438.61 1268.14,438.61 1271.82,438.61 1275.49,438.61 1279.17,438.61 1282.85,438.61 1286.53,438.61 1290.21,438.61 1293.89,438.61 1297.57,438.61 1301.25,438.61 1304.93,438.61 1308.61,438.61 1312.29,438.61 1315.97,438.61 1319.64,437.36 1323.32,438.61 1327.00,438.61 1330.68,438.61 1334.36,438.61 1338.04,438.61 1341.72,438.61 1345.40,438.61 1349.08,438.61 1352.76,438.61 1356.44,438.61 1360.12,438.61 1363.79,438.61 1367.47,438.61 1371.15,438.61 1374.83,438.61 1378.51,438.61 1382.19,438.61 1385.87,438.61 1389.55,438.61 1393.23,438.61 1396.91,438.61 1400.59,438.61 1404.27,438.61 1407.94,437.36 1411.62,438.61 1415.30,438.61 1418.98,438.61 1422.66,438.61 1426.34,438.61 1430.02,438.61 1433.70,438.61 1437.38,438.61 1441.06,438.61 1444.74,438.61 1448.42,438.61 1452.09,438.61 1455.77,438.61 1459.45,438.61 1463.13,438.61 1466.81,438.61 1470.49,438.61 1474.17,438.61 1477.85,438.61 1481.53,438.61 1485.21,438.61 1488.89,438.61 1492.57,438.61 1496.24,437.36 1499.92,438.61 1503.60,438.61 1507.28,438.61 1510.96,438.61 1514.64,438.61 1518.32,438.61 1522.00,438.61 1525.68,438.61 1529.36,438.61 1533.04,438.61 1536.72,438.61 1540.39,438.61 1544.07,438.61 1547.75,438.61 1551.43,438.61 1555.11,438.61 1558.79,438.61 1562.47,438.61 1566.15,438.61 1569.83,438.61 1573.51,438.61 1577.19,438.61 1580.87,438.61 1584.54,437.36 1588.22,438.61 1591.90,438.61 1595.58,438.61 1599.26,438.61 1602.94,438.61 1606.62,438.61 1610.30,438.61 1613.98,438.61 1617.66,438.61 1621.34,438.61 1625.02,438.61 1628.69,438.61 1632.37,438.61 1636.05,438.61 1639.73,438.61 1643.41,438.61 1647.09,438.61 1650.77,438.61 1654.45,438.61 1658.13,438.61 1661.81,438.61 1665.49,438.61 1669.17,438.61 1672.84,437.36 1676.52,438.61 1680.20,438.61 1683.88,438.61 1687.56,438.61 1691.24,438.61 1694.92,438.61 1698.60,438.61 1702.28,438.61 1705.96,438.61 1709.64,438.61 1713.32,438.61 1716.99,438.61 1720.67,438.61 1724.35,438.61 1728.03,438.61 1731.71,438.61 1735.39,438.61 1739.07,438.61 1742.75,438.61 1746.43,438.61 1750.11,438.61 1753.79,438.61 1757.47,438.61 1761.14,437.36 1764.82,438.61 1768.50,438.61 1772.18,438.61 1775.86,438.61 1779.54,438.61 1783.22,438.61 1786.90,438.61 1790.58,438.61 1794.26,438.61 1797.94,438.61"/><polyline fill="none" stroke="#b06991" stroke-width="0.6" stroke-opacity="0.75" points="1143.04,440.06 1146.72,440.93 1150.40,440.93 1154.08,440.93 1157.76,440.93 1161.44,440.93 1165.12,440.93 1168.80,440.93 1172.48,440.93 1176.16,440.93 1179.84,440.93 1183.52,440.93 1187.19,440.93 1190.87,440.93 1194.55,440.93 1198.23,440.93 1201.91,440.93 1205.59,440.93 1209.27,440.93 1212.95,440.93 1216.63,440.93 1220.31,440.93 1223.99,440.93 1227.67,440.93 1231.34,440.06 1235.02,440.93 1238.70,440.93 1242.38,440.93 1246.06,440.93 1249.74,440.93 1253.42,440.93 1257.10,440.93 1260.78,440.93 1264.46,440.93 1268.14,440.93 1271.82,440.93 1275.49,440.93 1279.17,440.93 1282.85,440.93 1286.53,440.93 1290.21,440.93 1293.89,440.93 1297.57,440.93 1301.25,440.93 1304.93,440.93 1308.61,440.93 1312.29,440.93 1315.97,440.93 1319.64,440.06 1323.32,440.93 1327.00,440.93 1330.68,440.93 1334.36,440.93 1338.04,440.93 1341.72,440.93 1345.40,440.93 1349.08,440.93 1352.76,440.93 1356.44,440.93 1360.12,440.93 1363.79,440.93 1367.47,440.93 1371.15,440.93 1374.83,440.93 1378.51,440.93 1382.19,440.93 1385.87,440.93 1389.55,440.93 1393.23,440.93 1396.91,440.93 1400.59,440.93 1404.27,440.93 1407.94,440.06 1411.62,440.93 1415.30,440.93 1418.98,440.93 1422.66,440.93 1426.34,440.93 1430.02,440.93 1433.70,440.93 1437.38,440.93 1441.06,440.93 1444.74,440.93 1448.42,440.93 1452.09,440.93 1455.77,440.93 1459.45,440.93 1463.13,440.93 1466.81,440.93 1470.49,440.93 1474.17,440.93 1477.85,440.93 1481.53,440.93 1485.21,440.93 1488.89,440.93 1492.57,440.93 1496.24,440.06 1499.92,440.93 1503.60,440.93 1507.28,440.93 1510.96,440.93 1514.64,440.93 1518.32,440.93 1522.00,440.93 1525.68,440.93 1529.36,440.93 1533.04,440.93 1536.72,440.93 1540.39,440.93 1544.07,440.93 1547.75,440.93 1551.43,440.93 1555.11,440.93 1558.79,440.93 1562.47,440.93 1566.15,440.93 1569.83,440.93 1573.51,440.93 1577.19,440.93 1580.87,440.93 1584.54,440.06 1588.22,440.93 1591.90,440.93 1595.58,440.93 1599.26,440.93 1602.94,440.93 1606.62,440.93 1610.30,440.93 1613.98,440.93 1617.66,440.93 1621.34,440.93 1625.02,440.93 1628.69,440.93 1632.37,440.93 1636.05,440.93 1639.73,440.93 1643.41,440.93 1647.09,440.93 1650.77,440.93 1654.45,440.93 1658.13,440.93 1661.81,440.93 1665.49,440.93 1669.17,440.93 1672.84,440.06 1676.52,440.93 1680.20,440.93 1683.88,440.93 1687.56,440.93 1691.24,440.93 1694.92,440.93 1698.60,440.93 1702.28,440.93 1705.96,440.93 1709.64,440.93 1713.32,440.93 1716.99,440.93 1720.67,440.93 1724.35,440.93 1728.03,440.93 1731.71,440.93 1735.39,440.93 1739.07,440.93 1742.75,440.93 1746.43,440.93 1750.11,440.93 1753.79,440.93 1757.47,440.93 1761.14,440.06 1764.82,440.93 1768.50,440.93 1772.18,440.93 1775.86,440.93 1779.54,440.93 1783.22,440.93 1786.90,440.93 1790.58,440.93 1794.26,440.93 1797.94,440.93"/></g></svg>
<span class="t" style="left:1228.34px;top:451.90px;font-size:13px;line-height:16px;color:#e4e4e4;">Tue</span>
<span class="t" style="left:1314.05px;top:451.90px;font-size:13px;line-height:16px;color:#e4e4e4;">Wed</span>
<span class="t" style="left:1404.50px;top:451.90px;font-size:13px;line-height:16px;color:#e4e4e4;">Thu</span>
<span class="t" style="left:1495.92px;top:451.90px;font-size:13px;line-height:16px;color:#e4e4e4;">Fri</span>
<span class="t" style="left:1582.04px;top:451.90px;font-size:13px;line-height:16px;color:#e4e4e4;">Sat</span>
<span class="t" style="left:1668.93px;top:451.90px;font-size:13px;line-height:16px;color:#e4e4e4;">Sun</span>
<span class="t" style="left:1755.85px;top:451.90px;font-size:13px;line-height:16px;color:#e4e4e4;">Mon</span>
<span class="t" style="left:1175.33px;top:444.34px;font-size:12px;line-height:14px;color:#e4e4e4;">0</span>
<span class="t" style="left:1165.32px;top:395.04px;font-size:12px;line-height:14px;color:#e4e4e4;">0.5</span>
<span class="t" style="left:1175.33px;top:346.84px;font-size:12px;line-height:14px;color:#e4e4e4;">1</span>
<span class="t" style="left:1165.32px;top:298.54px;font-size:12px;line-height:14px;color:#e4e4e4;">1.5</span>
<span class="t" style="left:1175.33px;top:250.04px;font-size:12px;line-height:14px;color:#e4e4e4;">2</span>
<span class="t" style="left:1165.32px;top:201.64px;font-size:12px;line-height:14px;color:#e4e4e4;">2.5</span>
<span class="t" style="left:1419.00px;top:163.41px;font-size:17px;line-height:20px;color:#e4e4e4;letter-spacing:0.384px;">Last week</span>
<svg width="1824" height="1143"><g stroke="#4a4a4a" stroke-width="1" shape-rendering="crispEdges"><line x1="448.5" y1="692" x2="448.5" y2="948"/><line x1="592.5" y1="692" x2="592.5" y2="948"/><line x1="737.0" y1="692" x2="737.0" y2="948"/><line x1="881.5" y1="692" x2="881.5" y2="948"/><line x1="1025.6" y1="692" x2="1025.6" y2="948"/><line x1="438.4" y1="870.6" x2="1052" y2="870.6"/><line x1="438.4" y1="793.4" x2="1052" y2="793.4"/><line x1="438.4" y1="716.2" x2="1052" y2="716.2"/></g><defs><clipPath id="cm"><rect x="438.4" y="690" width="613.6" height="260"/></clipPath></defs><g clip-path="url(#cm)"><polygon fill="#ffdf9e" points="422.50,948.8 422.50,705.17 427.66,766.46 432.82,772.78 437.98,772.93 443.14,705.17 448.30,766.46 453.46,772.78 458.62,772.93 463.78,705.17 468.94,766.46 474.10,772.78 479.26,772.93 484.42,705.17 489.58,766.46 494.74,772.78 499.90,772.93 505.06,705.17 510.22,766.46 515.38,772.78 520.54,772.93 525.70,705.17 530.86,766.46 536.02,772.78 541.18,772.93 546.34,705.17 551.50,766.46 556.66,772.78 561.82,772.93 566.98,705.17 572.14,766.46 577.30,772.78 582.46,772.93 587.62,705.17 592.78,766.46 597.94,772.78 603.10,772.93 608.26,705.17 613.42,766.46 618.58,772.78 623.74,772.93 628.90,705.17 634.06,766.46 639.22,772.78 644.38,772.93 649.54,705.17 654.70,766.46 659.86,772.78 665.02,772.93 670.18,705.17 675.34,766.46 680.50,772.78 685.66,772.93 690.82,705.17 695.98,766.46 701.14,772.78 706.30,772.93 711.46,705.17 716.62,766.46 721.78,772.78 726.94,772.93 732.10,705.17 737.26,766.46 742.42,772.78 747.58,772.93 752.74,705.17 757.90,766.46 763.06,772.78 768.22,772.93 773.38,705.17 778.54,766.46 783.70,772.78 788.86,772.93 794.02,705.17 799.18,766.46 804.34,772.78 809.50,772.93 814.66,705.17 819.82,766.46 824.98,772.78 830.14,772.93 835.30,705.17 840.46,766.46 845.62,772.78 850.78,772.93 855.94,705.17 861.10,766.46 866.26,772.78 871.42,772.93 876.58,705.17 881.74,766.46 886.90,772.78 892.06,772.93 897.22,705.17 902.38,766.46 907.54,772.78 912.70,772.93 917.86,705.17 923.02,766.46 928.18,772.78 933.34,772.93 938.50,705.17 943.66,766.46 948.82,772.78 953.98,772.93 959.14,705.17 964.30,766.46 969.46,772.78 974.62,772.93 979.78,705.17 984.94,766.46 990.10,772.78 995.26,772.93 1000.42,705.17 1005.58,766.46 1010.74,772.78 1015.90,772.93 1021.06,705.17 1026.22,766.46 1031.38,772.78 1036.54,772.93 1041.70,705.17 1046.86,766.46 1052.02,772.78 1052.02,948.8"/><polygon fill="#52b852" points="422.50,948.8 422.50,812.66 427.66,872.72 432.82,879.04 437.98,879.19 443.14,812.66 448.30,872.72 453.46,879.04 458.62,879.19 463.78,812.66 468.94,872.72 474.10,879.04 479.26,879.19 484.42,812.66 489.58,872.72 494.74,879.04 499.90,879.19 505.06,812.66 510.22,872.72 515.38,879.04 520.54,879.19 525.70,812.66 530.86,872.72 536.02,879.04 541.18,879.19 546.34,812.66 551.50,872.72 556.66,879.04 561.82,879.19 566.98,812.66 572.14,872.72 577.30,879.04 582.46,879.19 587.62,812.66 592.78,872.72 597.94,879.04 603.10,879.19 608.26,812.66 613.42,872.72 618.58,879.04 623.74,879.19 628.90,812.66 634.06,872.72 639.22,879.04 644.38,879.19 649.54,812.66 654.70,872.72 659.86,879.04 665.02,879.19 670.18,812.66 675.34,872.72 680.50,879.04 685.66,879.19 690.82,812.66 695.98,872.72 701.14,879.04 706.30,879.19 711.46,812.66 716.62,872.72 721.78,879.04 726.94,879.19 732.10,812.66 737.26,872.72 742.42,879.04 747.58,879.19 752.74,812.66 757.90,872.72 763.06,879.04 768.22,879.19 773.38,812.66 778.54,872.72 783.70,879.04 788.86,879.19 794.02,812.66 799.18,872.72 804.34,879.04 809.50,879.19 814.66,812.66 819.82,872.72 824.98,879.04 830.14,879.19 835.30,812.66 840.46,872.72 845.62,879.04 850.78,879.19 855.94,812.66 861.10,872.72 866.26,879.04 871.42,879.19 876.58,812.66 881.74,872.72 886.90,879.04 892.06,879.19 897.22,812.66 902.38,872.72 907.54,879.04 912.70,879.19 917.86,812.66 923.02,872.72 928.18,879.04 933.34,879.19 938.50,812.66 943.66,872.72 948.82,879.04 953.98,879.19 959.14,812.66 964.30,872.72 969.46,879.04 974.62,879.19 979.78,812.66 984.94,872.72 990.10,879.04 995.26,879.19 1000.42,812.66 1005.58,872.72 1010.74,879.04 1015.90,879.19 1021.06,812.66 1026.22,872.72 1031.38,879.04 1036.54,879.19 1041.70,812.66 1046.86,872.72 1052.02,879.04 1052.02,948.8"/><polygon fill="#ff9a9a" points="422.50,948.8 422.50,888.12 427.66,890.28 432.82,889.66 437.98,889.36 443.14,888.12 448.30,890.28 453.46,889.66 458.62,889.36 463.78,888.12 468.94,890.28 474.10,889.66 479.26,889.36 484.42,888.12 489.58,890.28 494.74,889.66 499.90,889.36 505.06,888.12 510.22,890.28 515.38,889.66 520.54,889.36 525.70,888.12 530.86,890.28 536.02,889.66 541.18,889.36 546.34,888.12 551.50,890.28 556.66,889.66 561.82,889.36 566.98,888.12 572.14,890.28 577.30,889.66 582.46,889.36 587.62,888.12 592.78,890.28 597.94,889.66 603.10,889.36 608.26,888.12 613.42,890.28 618.58,889.66 623.74,889.36 628.90,888.12 634.06,890.28 639.22,889.66 644.38,889.36 649.54,888.12 654.70,890.28 659.86,889.66 665.02,889.36 670.18,888.12 675.34,890.28 680.50,889.66 685.66,889.36 690.82,888.12 695.98,890.28 701.14,889.66 706.30,889.36 711.46,888.12 716.62,890.28 721.78,889.66 726.94,889.36 732.10,888.12 737.26,890.28 742.42,889.66 747.58,889.36 752.74,888.12 757.90,890.28 763.06,889.66 768.22,889.36 773.38,888.12 778.54,890.28 783.70,889.66 788.86,889.36 794.02,888.12 799.18,890.28 804.34,889.66 809.50,889.36 814.66,888.12 819.82,890.28 824.98,889.66 830.14,889.36 835.30,888.12 840.46,890.28 845.62,889.66 850.78,889.36 855.94,888.12 861.10,890.28 866.26,889.66 871.42,889.36 876.58,888.12 881.74,890.28 886.90,889.66 892.06,889.36 897.22,888.12 902.38,890.28 907.54,889.66 912.70,889.36 917.86,888.12 923.02,890.28 928.18,889.66 933.34,889.36 938.50,888.12 943.66,890.28 948.82,889.66 953.98,889.36 959.14,888.12 964.30,890.28 969.46,889.66 974.62,889.36 979.78,888.12 984.94,890.28 990.10,889.66 995.26,889.36 1000.42,888.12 1005.58,890.28 1010.74,889.66 1015.90,889.36 1021.06,888.12 1026.22,890.28 1031.38,889.66 1036.54,889.36 1041.70,888.12 1046.86,890.28 1052.02,889.66 1052.02,948.8"/><polygon fill="#ead465" points="422.50,948.8 422.50,900.14 427.66,900.14 432.82,900.14 437.98,900.14 443.14,900.14 448.30,900.14 453.46,900.14 458.62,900.14 463.78,900.14 468.94,900.14 474.10,900.14 479.26,900.14 484.42,900.14 489.58,900.14 494.74,900.14 499.90,900.14 505.06,900.14 510.22,900.14 515.38,900.14 520.54,900.14 525.70,900.14 530.86,900.14 536.02,900.14 541.18,900.14 546.34,900.14 551.50,900.14 556.66,900.14 561.82,900.14 566.98,900.14 572.14,900.14 577.30,900.14 582.46,900.14 587.62,900.14 592.78,900.14 597.94,900.14 603.10,900.14 608.26,900.14 613.42,900.14 618.58,900.14 623.74,900.14 628.90,900.14 634.06,900.14 639.22,900.14 644.38,900.14 649.54,900.14 654.70,900.14 659.86,900.14 665.02,900.14 670.18,900.14 675.34,900.14 680.50,900.14 685.66,900.14 690.82,900.14 695.98,900.14 701.14,900.14 706.30,900.14 711.46,900.14 716.62,900.14 721.78,900.14 726.94,900.14 732.10,900.14 737.26,900.14 742.42,900.14 747.58,900.14 752.74,900.14 757.90,900.14 763.06,900.14 768.22,900.14 773.38,900.14 778.54,900.14 783.70,900.14 788.86,900.14 794.02,900.14 799.18,900.14 804.34,900.14 809.50,900.14 814.66,900.14 819.82,900.14 824.98,900.14 830.14,900.14 835.30,900.14 840.46,900.14 845.62,900.14 850.78,900.14 855.94,900.14 861.10,900.14 866.26,900.14 871.42,900.14 876.58,900.14 881.74,900.14 886.90,900.14 892.06,900.14 897.22,900.14 902.38,900.14 907.54,900.14 912.70,900.14 917.86,900.14 923.02,900.14 928.18,900.14 933.34,900.14 938.50,900.14 943.66,900.14 948.82,900.14 953.98,900.14 959.14,900.14 964.30,900.14 969.46,900.14 974.62,900.14 979.78,900.14 984.94,900.14 990.10,900.14 995.26,900.14 1000.42,900.14 1005.58,900.14 1010.74,900.14 1015.90,900.14 1021.06,900.14 1026.22,900.14 1031.38,900.14 1036.54,900.14 1041.70,900.14 1046.86,900.14 1052.02,900.14 1052.02,948.8"/><polygon fill="#eda566" points="422.50,948.8 422.50,909.45 427.66,909.45 432.82,909.45 437.98,909.45 443.14,909.45 448.30,909.45 453.46,909.45 458.62,909.45 463.78,909.45 468.94,909.45 474.10,909.45 479.26,909.45 484.42,909.45 489.58,909.45 494.74,909.45 499.90,909.45 505.06,909.45 510.22,909.45 515.38,909.45 520.54,909.45 525.70,909.45 530.86,909.45 536.02,909.45 541.18,909.45 546.34,909.45 551.50,909.45 556.66,909.45 561.82,909.45 566.98,909.45 572.14,909.45 577.30,909.45 582.46,909.45 587.62,909.45 592.78,909.45 597.94,909.45 603.10,909.45 608.26,909.45 613.42,909.45 618.58,909.45 623.74,909.45 628.90,909.45 634.06,909.45 639.22,909.45 644.38,909.45 649.54,909.45 654.70,909.45 659.86,909.45 665.02,909.45 670.18,909.45 675.34,909.45 680.50,909.45 685.66,909.45 690.82,909.45 695.98,909.45 701.14,909.45 706.30,909.45 711.46,909.45 716.62,909.45 721.78,909.45 726.94,909.45 732.10,909.45 737.26,909.45 742.42,909.45 747.58,909.45 752.74,909.45 757.90,909.45 763.06,909.45 768.22,909.45 773.38,909.45 778.54,909.45 783.70,909.45 788.86,909.45 794.02,909.45 799.18,909.45 804.34,909.45 809.50,909.45 814.66,909.45 819.82,909.45 824.98,909.45 830.14,909.45 835.30,909.45 840.46,909.45 845.62,909.45 850.78,909.45 855.94,909.45 861.10,909.45 866.26,909.45 871.42,909.45 876.58,909.45 881.74,909.45 886.90,909.45 892.06,909.45 897.22,909.45 902.38,909.45 907.54,909.45 912.70,909.45 917.86,909.45 923.02,909.45 928.18,909.45 933.34,909.45 938.50,909.45 943.66,909.45 948.82,909.45 953.98,909.45 959.14,909.45 964.30,909.45 969.46,909.45 974.62,909.45 979.78,909.45 984.94,909.45 990.10,909.45 995.26,909.45 1000.42,909.45 1005.58,909.45 1010.74,909.45 1015.90,909.45 1021.06,909.45 1026.22,909.45 1031.38,909.45 1036.54,909.45 1041.70,909.45 1046.86,909.45 1052.02,909.45 1052.02,948.8"/><polygon fill="#ece36b" points="422.50,948.8 422.50,917.69 427.66,917.69 432.82,917.69 437.98,917.69 443.14,917.69 448.30,917.69 453.46,917.69 458.62,917.69 463.78,917.69 468.94,917.69 474.10,917.69 479.26,917.69 484.42,917.69 489.58,917.69 494.74,917.69 499.90,917.69 505.06,917.69 510.22,917.69 515.38,917.69 520.54,917.69 525.70,917.69 530.86,917.69 536.02,917.69 541.18,917.69 546.34,917.69 551.50,917.69 556.66,917.69 561.82,917.69 566.98,917.69 572.14,917.69 577.30,917.69 582.46,917.69 587.62,917.69 592.78,917.69 597.94,917.69 603.10,917.69 608.26,917.69 613.42,917.69 618.58,917.69 623.74,917.69 628.90,917.69 634.06,917.69 639.22,917.69 644.38,917.69 649.54,917.69 654.70,917.69 659.86,917.69 665.02,917.69 670.18,917.69 675.34,917.69 680.50,917.69 685.66,917.69 690.82,917.69 695.98,917.69 701.14,917.69 706.30,917.69 711.46,917.69 716.62,917.69 721.78,917.69 726.94,917.69 732.10,917.69 737.26,917.69 742.42,917.69 747.58,917.69 752.74,917.69 757.90,917.69 763.06,917.69 768.22,917.69 773.38,917.69 778.54,917.69 783.70,917.69 788.86,917.69 794.02,917.69 799.18,917.69 804.34,917.69 809.50,917.69 814.66,917.69 819.82,917.69 824.98,917.69 830.14,917.69 835.30,917.69 840.46,917.69 845.62,917.69 850.78,917.69 855.94,917.69 861.10,917.69 866.26,917.69 871.42,917.69 876.58,917.69 881.74,917.69 886.90,917.69 892.06,917.69 897.22,917.69 902.38,917.69 907.54,917.69 912.70,917.69 917.86,917.69 923.02,917.69 928.18,917.69 933.34,917.69 938.50,917.69 943.66,917.69 948.82,917.69 953.98,917.69 959.14,917.69 964.30,917.69 969.46,917.69 974.62,917.69 979.78,917.69 984.94,917.69 990.10,917.69 995.26,917.69 1000.42,917.69 1005.58,917.69 1010.74,917.69 1015.90,917.69 1021.06,917.69 1026.22,917.69 1031.38,917.69 1036.54,917.69 1041.70,917.69 1046.86,917.69 1052.02,917.69 1052.02,948.8"/><polygon fill="#3d8c8c" points="422.50,948.8 422.50,925.16 427.66,925.16 432.82,925.16 437.98,925.16 443.14,925.16 448.30,925.16 453.46,925.16 458.62,925.16 463.78,925.16 468.94,925.16 474.10,925.16 479.26,925.16 484.42,925.16 489.58,925.16 494.74,925.16 499.90,925.16 505.06,925.16 510.22,925.16 515.38,925.16 520.54,925.16 525.70,925.16 530.86,925.16 536.02,925.16 541.18,925.16 546.34,925.16 551.50,925.16 556.66,925.16 561.82,925.16 566.98,925.16 572.14,925.16 577.30,925.16 582.46,925.16 587.62,925.16 592.78,925.16 597.94,925.16 603.10,925.16 608.26,925.16 613.42,925.16 618.58,925.16 623.74,925.16 628.90,925.16 634.06,925.16 639.22,925.16 644.38,925.16 649.54,925.16 654.70,925.16 659.86,925.16 665.02,925.16 670.18,925.16 675.34,925.16 680.50,925.16 685.66,925.16 690.82,925.16 695.98,925.16 701.14,925.16 706.30,925.16 711.46,925.16 716.62,925.16 721.78,925.16 726.94,925.16 732.10,925.16 737.26,925.16 742.42,925.16 747.58,925.16 752.74,925.16 757.90,925.16 763.06,925.16 768.22,925.16 773.38,925.16 778.54,925.16 783.70,925.16 788.86,925.16 794.02,925.16 799.18,925.16 804.34,925.16 809.50,925.16 814.66,925.16 819.82,925.16 824.98,925.16 830.14,925.16 835.30,925.16 840.46,925.16 845.62,925.16 850.78,925.16 855.94,925.16 861.10,925.16 866.26,925.16 871.42,925.16 876.58,925.16 881.74,925.16 886.90,925.16 892.06,925.16 897.22,925.16 902.38,925.16 907.54,925.16 912.70,925.16 917.86,925.16 923.02,925.16 928.18,925.16 933.34,925.16 938.50,925.16 943.66,925.16 948.82,925.16 953.98,925.16 959.14,925.16 964.30,925.16 969.46,925.16 974.62,925.16 979.78,925.16 984.94,925.16 990.10,925.16 995.26,925.16 1000.42,925.16 1005.58,925.16 1010.74,925.16 1015.90,925.16 1021.06,925.16 1026.22,925.16 1031.38,925.16 1036.54,925.16 1041.70,925.16 1046.86,925.16 1052.02,925.16 1052.02,948.8"/><polygon fill="#6650a4" points="422.50,948.8 422.50,929.78 427.66,929.78 432.82,929.78 437.98,929.78 443.14,929.78 448.30,929.78 453.46,929.78 458.62,929.78 463.78,929.78 468.94,929.78 474.10,929.78 479.26,929.78 484.42,929.78 489.58,929.78 494.74,929.78 499.90,929.78 505.06,929.78 510.22,929.78 515.38,929.78 520.54,929.78 525.70,929.78 530.86,929.78 536.02,929.78 541.18,929.78 546.34,929.78 551.50,929.78 556.66,929.78 561.82,929.78 566.98,929.78 572.14,929.78 577.30,929.78 582.46,929.78 587.62,929.78 592.78,929.78 597.94,929.78 603.10,929.78 608.26,929.78 613.42,929.78 618.58,929.78 623.74,929.78 628.90,929.78 634.06,929.78 639.22,929.78 644.38,929.78 649.54,929.78 654.70,929.78 659.86,929.78 665.02,929.78 670.18,929.78 675.34,929.78 680.50,929.78 685.66,929.78 690.82,929.78 695.98,929.78 701.14,929.78 706.30,929.78 711.46,929.78 716.62,929.78 721.78,929.78 726.94,929.78 732.10,929.78 737.26,929.78 742.42,929.78 747.58,929.78 752.74,929.78 757.90,929.78 763.06,929.78 768.22,929.78 773.38,929.78 778.54,929.78 783.70,929.78 788.86,929.78 794.02,929.78 799.18,929.78 804.34,929.78 809.50,929.78 814.66,929.78 819.82,929.78 824.98,929.78 830.14,929.78 835.30,929.78 840.46,929.78 845.62,929.78 850.78,929.78 855.94,929.78 861.10,929.78 866.26,929.78 871.42,929.78 876.58,929.78 881.74,929.78 886.90,929.78 892.06,929.78 897.22,929.78 902.38,929.78 907.54,929.78 912.70,929.78 917.86,929.78 923.02,929.78 928.18,929.78 933.34,929.78 938.50,929.78 943.66,929.78 948.82,929.78 953.98,929.78 959.14,929.78 964.30,929.78 969.46,929.78 974.62,929.78 979.78,929.78 984.94,929.78 990.10,929.78 995.26,929.78 1000.42,929.78 1005.58,929.78 1010.74,929.78 1015.90,929.78 1021.06,929.78 1026.22,929.78 1031.38,929.78 1036.54,929.78 1041.70,929.78 1046.86,929.78 1052.02,929.78 1052.02,948.8"/><polygon fill="#dc84b6" points="422.50,948.8 422.50,934.02 427.66,934.02 432.82,934.02 437.98,934.02 443.14,934.02 448.30,934.02 453.46,934.02 458.62,934.02 463.78,934.02 468.94,934.02 474.10,934.02 479.26,934.02 484.42,934.02 489.58,934.02 494.74,934.02 499.90,934.02 505.06,934.02 510.22,934.02 515.38,934.02 520.54,934.02 525.70,934.02 530.86,934.02 536.02,934.02 541.18,934.02 546.34,934.02 551.50,934.02 556.66,934.02 561.82,934.02 566.98,934.02 572.14,934.02 577.30,934.02 582.46,934.02 587.62,934.02 592.78,934.02 597.94,934.02 603.10,934.02 608.26,934.02 613.42,934.02 618.58,934.02 623.74,934.02 628.90,934.02 634.06,934.02 639.22,934.02 644.38,934.02 649.54,934.02 654.70,934.02 659.86,934.02 665.02,934.02 670.18,934.02 675.34,934.02 680.50,934.02 685.66,934.02 690.82,934.02 695.98,934.02 701.14,934.02 706.30,934.02 711.46,934.02 716.62,934.02 721.78,934.02 726.94,934.02 732.10,934.02 737.26,934.02 742.42,934.02 747.58,934.02 752.74,934.02 757.90,934.02 763.06,934.02 768.22,934.02 773.38,934.02 778.54,934.02 783.70,934.02 788.86,934.02 794.02,934.02 799.18,934.02 804.34,934.02 809.50,934.02 814.66,934.02 819.82,934.02 824.98,934.02 830.14,934.02 835.30,934.02 840.46,934.02 845.62,934.02 850.78,934.02 855.94,934.02 861.10,934.02 866.26,934.02 871.42,934.02 876.58,934.02 881.74,934.02 886.90,934.02 892.06,934.02 897.22,934.02 902.38,934.02 907.54,934.02 912.70,934.02 917.86,934.02 923.02,934.02 928.18,934.02 933.34,934.02 938.50,934.02 943.66,934.02 948.82,934.02 953.98,934.02 959.14,934.02 964.30,934.02 969.46,934.02 974.62,934.02 979.78,934.02 984.94,934.02 990.10,934.02 995.26,934.02 1000.42,934.02 1005.58,934.02 1010.74,934.02 1015.90,934.02 1021.06,934.02 1026.22,934.02 1031.38,934.02 1036.54,934.02 1041.70,934.02 1046.86,934.02 1052.02,934.02 1052.02,948.8"/><polygon fill="#ece06a" points="422.50,948.8 422.50,937.25 427.66,937.25 432.82,937.25 437.98,937.25 443.14,937.25 448.30,937.25 453.46,937.25 458.62,937.25 463.78,937.25 468.94,937.25 474.10,937.25 479.26,937.25 484.42,937.25 489.58,937.25 494.74,937.25 499.90,937.25 505.06,937.25 510.22,937.25 515.38,937.25 520.54,937.25 525.70,937.25 530.86,937.25 536.02,937.25 541.18,937.25 546.34,937.25 551.50,937.25 556.66,937.25 561.82,937.25 566.98,937.25 572.14,937.25 577.30,937.25 582.46,937.25 587.62,937.25 592.78,937.25 597.94,937.25 603.10,937.25 608.26,937.25 613.42,937.25 618.58,937.25 623.74,937.25 628.90,937.25 634.06,937.25 639.22,937.25 644.38,937.25 649.54,937.25 654.70,937.25 659.86,937.25 665.02,937.25 670.18,937.25 675.34,937.25 680.50,937.25 685.66,937.25 690.82,937.25 695.98,937.25 701.14,937.25 706.30,937.25 711.46,937.25 716.62,937.25 721.78,937.25 726.94,937.25 732.10,937.25 737.26,937.25 742.42,937.25 747.58,937.25 752.74,937.25 757.90,937.25 763.06,937.25 768.22,937.25 773.38,937.25 778.54,937.25 783.70,937.25 788.86,937.25 794.02,937.25 799.18,937.25 804.34,937.25 809.50,937.25 814.66,937.25 819.82,937.25 824.98,937.25 830.14,937.25 835.30,937.25 840.46,937.25 845.62,937.25 850.78,937.25 855.94,937.25 861.10,937.25 866.26,937.25 871.42,937.25 876.58,937.25 881.74,937.25 886.90,937.25 892.06,937.25 897.22,937.25 902.38,937.25 907.54,937.25 912.70,937.25 917.86,937.25 923.02,937.25 928.18,937.25 933.34,937.25 938.50,937.25 943.66,937.25 948.82,937.25 953.98,937.25 959.14,937.25 964.30,937.25 969.46,937.25 974.62,937.25 979.78,937.25 984.94,937.25 990.10,937.25 995.26,937.25 1000.42,937.25 1005.58,937.25 1010.74,937.25 1015.90,937.25 1021.06,937.25 1026.22,937.25 1031.38,937.25 1036.54,937.25 1041.70,937.25 1046.86,937.25 1052.02,937.25 1052.02,948.8"/><polygon fill="#a276c2" points="422.50,948.8 422.50,939.33 427.66,939.33 432.82,939.33 437.98,939.33 443.14,939.33 448.30,939.33 453.46,939.33 458.62,939.33 463.78,939.33 468.94,939.33 474.10,939.33 479.26,939.33 484.42,939.33 489.58,939.33 494.74,939.33 499.90,939.33 505.06,939.33 510.22,939.33 515.38,939.33 520.54,939.33 525.70,939.33 530.86,939.33 536.02,939.33 541.18,939.33 546.34,939.33 551.50,939.33 556.66,939.33 561.82,939.33 566.98,939.33 572.14,939.33 577.30,939.33 582.46,939.33 587.62,939.33 592.78,939.33 597.94,939.33 603.10,939.33 608.26,939.33 613.42,939.33 618.58,939.33 623.74,939.33 628.90,939.33 634.06,939.33 639.22,939.33 644.38,939.33 649.54,939.33 654.70,939.33 659.86,939.33 665.02,939.33 670.18,939.33 675.34,939.33 680.50,939.33 685.66,939.33 690.82,939.33 695.98,939.33 701.14,939.33 706.30,939.33 711.46,939.33 716.62,939.33 721.78,939.33 726.94,939.33 732.10,939.33 737.26,939.33 742.42,939.33 747.58,939.33 752.74,939.33 757.90,939.33 763.06,939.33 768.22,939.33 773.38,939.33 778.54,939.33 783.70,939.33 788.86,939.33 794.02,939.33 799.18,939.33 804.34,939.33 809.50,939.33 814.66,939.33 819.82,939.33 824.98,939.33 830.14,939.33 835.30,939.33 840.46,939.33 845.62,939.33 850.78,939.33 855.94,939.33 861.10,939.33 866.26,939.33 871.42,939.33 876.58,939.33 881.74,939.33 886.90,939.33 892.06,939.33 897.22,939.33 902.38,939.33 907.54,939.33 912.70,939.33 917.86,939.33 923.02,939.33 928.18,939.33 933.34,939.33 938.50,939.33 943.66,939.33 948.82,939.33 953.98,939.33 959.14,939.33 964.30,939.33 969.46,939.33 974.62,939.33 979.78,939.33 984.94,939.33 990.10,939.33 995.26,939.33 1000.42,939.33 1005.58,939.33 1010.74,939.33 1015.90,939.33 1021.06,939.33 1026.22,939.33 1031.38,939.33 1036.54,939.33 1041.70,939.33 1046.86,939.33 1052.02,939.33 1052.02,948.8"/><polygon fill="#d2ec8a" points="422.50,948.8 422.50,941.33 427.66,941.33 432.82,941.33 437.98,941.33 443.14,941.33 448.30,941.33 453.46,941.33 458.62,941.33 463.78,941.33 468.94,941.33 474.10,941.33 479.26,941.33 484.42,941.33 489.58,941.33 494.74,941.33 499.90,941.33 505.06,941.33 510.22,941.33 515.38,941.33 520.54,941.33 525.70,941.33 530.86,941.33 536.02,941.33 541.18,941.33 546.34,941.33 551.50,941.33 556.66,941.33 561.82,941.33 566.98,941.33 572.14,941.33 577.30,941.33 582.46,941.33 587.62,941.33 592.78,941.33 597.94,941.33 603.10,941.33 608.26,941.33 613.42,941.33 618.58,941.33 623.74,941.33 628.90,941.33 634.06,941.33 639.22,941.33 644.38,941.33 649.54,941.33 654.70,941.33 659.86,941.33 665.02,941.33 670.18,941.33 675.34,941.33 680.50,941.33 685.66,941.33 690.82,941.33 695.98,941.33 701.14,941.33 706.30,941.33 711.46,941.33 716.62,941.33 721.78,941.33 726.94,941.33 732.10,941.33 737.26,941.33 742.42,941.33 747.58,941.33 752.74,941.33 757.90,941.33 763.06,941.33 768.22,941.33 773.38,941.33 778.54,941.33 783.70,941.33 788.86,941.33 794.02,941.33 799.18,941.33 804.34,941.33 809.50,941.33 814.66,941.33 819.82,941.33 824.98,941.33 830.14,941.33 835.30,941.33 840.46,941.33 845.62,941.33 850.78,941.33 855.94,941.33 861.10,941.33 866.26,941.33 871.42,941.33 876.58,941.33 881.74,941.33 886.90,941.33 892.06,941.33 897.22,941.33 902.38,941.33 907.54,941.33 912.70,941.33 917.86,941.33 923.02,941.33 928.18,941.33 933.34,941.33 938.50,941.33 943.66,941.33 948.82,941.33 953.98,941.33 959.14,941.33 964.30,941.33 969.46,941.33 974.62,941.33 979.78,941.33 984.94,941.33 990.10,941.33 995.26,941.33 1000.42,941.33 1005.58,941.33 1010.74,941.33 1015.90,941.33 1021.06,941.33 1026.22,941.33 1031.38,941.33 1036.54,941.33 1041.70,941.33 1046.86,941.33 1052.02,941.33 1052.02,948.8"/><polygon fill="#fff0a0" points="422.50,948.8 422.50,944.10 427.66,944.10 432.82,944.10 437.98,944.10 443.14,944.10 448.30,944.10 453.46,944.10 458.62,944.10 463.78,944.10 468.94,944.10 474.10,944.10 479.26,944.10 484.42,944.10 489.58,944.10 494.74,944.10 499.90,944.10 505.06,944.10 510.22,944.10 515.38,944.10 520.54,944.10 525.70,944.10 530.86,944.10 536.02,944.10 541.18,944.10 546.34,944.10 551.50,944.10 556.66,944.10 561.82,944.10 566.98,944.10 572.14,944.10 577.30,944.10 582.46,944.10 587.62,944.10 592.78,944.10 597.94,944.10 603.10,944.10 608.26,944.10 613.42,944.10 618.58,944.10 623.74,944.10 628.90,944.10 634.06,944.10 639.22,944.10 644.38,944.10 649.54,944.10 654.70,944.10 659.86,944.10 665.02,944.10 670.18,944.10 675.34,944.10 680.50,944.10 685.66,944.10 690.82,944.10 695.98,944.10 701.14,944.10 706.30,944.10 711.46,944.10 716.62,944.10 721.78,944.10 726.94,944.10 732.10,944.10 737.26,944.10 742.42,944.10 747.58,944.10 752.74,944.10 757.90,944.10 763.06,944.10 768.22,944.10 773.38,944.10 778.54,944.10 783.70,944.10 788.86,944.10 794.02,944.10 799.18,944.10 804.34,944.10 809.50,944.10 814.66,944.10 819.82,944.10 824.98,944.10 830.14,944.10 835.30,944.10 840.46,944.10 845.62,944.10 850.78,944.10 855.94,944.10 861.10,944.10 866.26,944.10 871.42,944.10 876.58,944.10 881.74,944.10 886.90,944.10 892.06,944.10 897.22,944.10 902.38,944.10 907.54,944.10 912.70,944.10 917.86,944.10 923.02,944.10 928.18,944.10 933.34,944.10 938.50,944.10 943.66,944.10 948.82,944.10 953.98,944.10 959.14,944.10 964.30,944.10 969.46,944.10 974.62,944.10 979.78,944.10 984.94,944.10 990.10,944.10 995.26,944.10 1000.42,944.10 1005.58,944.10 1010.74,944.10 1015.90,944.10 1021.06,944.10 1026.22,944.10 1031.38,944.10 1036.54,944.10 1041.70,944.10 1046.86,944.10 1052.02,944.10 1052.02,948.8"/><polygon fill="#ec545a" points="422.50,948.8 422.50,945.33 427.66,945.33 432.82,945.33 437.98,945.33 443.14,945.33 448.30,945.33 453.46,945.33 458.62,945.33 463.78,945.33 468.94,945.33 474.10,945.33 479.26,945.33 484.42,945.33 489.58,945.33 494.74,945.33 499.90,945.33 505.06,945.33 510.22,945.33 515.38,945.33 520.54,945.33 525.70,945.33 530.86,945.33 536.02,945.33 541.18,945.33 546.34,945.33 551.50,945.33 556.66,945.33 561.82,945.33 566.98,945.33 572.14,945.33 577.30,945.33 582.46,945.33 587.62,945.33 592.78,945.33 597.94,945.33 603.10,945.33 608.26,945.33 613.42,945.33 618.58,945.33 623.74,945.33 628.90,945.33 634.06,945.33 639.22,945.33 644.38,945.33 649.54,945.33 654.70,945.33 659.86,945.33 665.02,945.33 670.18,945.33 675.34,945.33 680.50,945.33 685.66,945.33 690.82,945.33 695.98,945.33 701.14,945.33 706.30,945.33 711.46,945.33 716.62,945.33 721.78,945.33 726.94,945.33 732.10,945.33 737.26,945.33 742.42,945.33 747.58,945.33 752.74,945.33 757.90,945.33 763.06,945.33 768.22,945.33 773.38,945.33 778.54,945.33 783.70,945.33 788.86,945.33 794.02,945.33 799.18,945.33 804.34,945.33 809.50,945.33 814.66,945.33 819.82,945.33 824.98,945.33 830.14,945.33 835.30,945.33 840.46,945.33 845.62,945.33 850.78,945.33 855.94,945.33 861.10,945.33 866.26,945.33 871.42,945.33 876.58,945.33 881.74,945.33 886.90,945.33 892.06,945.33 897.22,945.33 902.38,945.33 907.54,945.33 912.70,945.33 917.86,945.33 923.02,945.33 928.18,945.33 933.34,945.33 938.50,945.33 943.66,945.33 948.82,945.33 953.98,945.33 959.14,945.33 964.30,945.33 969.46,945.33 974.62,945.33 979.78,945.33 984.94,945.33 990.10,945.33 995.26,945.33 1000.42,945.33 1005.58,945.33 1010.74,945.33 1015.90,945.33 1021.06,945.33 1026.22,945.33 1031.38,945.33 1036.54,945.33 1041.70,945.33 1046.86,945.33 1052.02,945.33 1052.02,948.8"/><polygon fill="#6a6aa8" points="422.50,948.8 422.50,946.10 427.66,946.10 432.82,946.10 437.98,946.10 443.14,946.10 448.30,946.10 453.46,946.10 458.62,946.10 463.78,946.10 468.94,946.10 474.10,946.10 479.26,946.10 484.42,946.10 489.58,946.10 494.74,946.10 499.90,946.10 505.06,946.10 510.22,946.10 515.38,946.10 520.54,946.10 525.70,946.10 530.86,946.10 536.02,946.10 541.18,946.10 546.34,946.10 551.50,946.10 556.66,946.10 561.82,946.10 566.98,946.10 572.14,946.10 577.30,946.10 582.46,946.10 587.62,946.10 592.78,946.10 597.94,946.10 603.10,946.10 608.26,946.10 613.42,946.10 618.58,946.10 623.74,946.10 628.90,946.10 634.06,946.10 639.22,946.10 644.38,946.10 649.54,946.10 654.70,946.10 659.86,946.10 665.02,946.10 670.18,946.10 675.34,946.10 680.50,946.10 685.66,946.10 690.82,946.10 695.98,946.10 701.14,946.10 706.30,946.10 711.46,946.10 716.62,946.10 721.78,946.10 726.94,946.10 732.10,946.10 737.26,946.10 742.42,946.10 747.58,946.10 752.74,946.10 757.90,946.10 763.06,946.10 768.22,946.10 773.38,946.10 778.54,946.10 783.70,946.10 788.86,946.10 794.02,946.10 799.18,946.10 804.34,946.10 809.50,946.10 814.66,946.10 819.82,946.10 824.98,946.10 830.14,946.10 835.30,946.10 840.46,946.10 845.62,946.10 850.78,946.10 855.94,946.10 861.10,946.10 866.26,946.10 871.42,946.10 876.58,946.10 881.74,946.10 886.90,946.10 892.06,946.10 897.22,946.10 902.38,946.10 907.54,946.10 912.70,946.10 917.86,946.10 923.02,946.10 928.18,946.10 933.34,946.10 938.50,946.10 943.66,946.10 948.82,946.10 953.98,946.10 959.14,946.10 964.30,946.10 969.46,946.10 974.62,946.10 979.78,946.10 984.94,946.10 990.10,946.10 995.26,946.10 1000.42,946.10 1005.58,946.10 1010.74,946.10 1015.90,946.10 1021.06,946.10 1026.22,946.10 1031.38,946.10 1036.54,946.10 1041.70,946.10 1046.86,946.10 1052.02,946.10 1052.02,948.8"/><polygon fill="#5a8578" points="422.50,948.8 422.50,946.57 427.66,946.57 432.82,946.57 437.98,946.57 443.14,946.57 448.30,946.57 453.46,946.57 458.62,946.57 463.78,946.57 468.94,946.57 474.10,946.57 479.26,946.57 484.42,946.57 489.58,946.57 494.74,946.57 499.90,946.57 505.06,946.57 510.22,946.57 515.38,946.57 520.54,946.57 525.70,946.57 530.86,946.57 536.02,946.57 541.18,946.57 546.34,946.57 551.50,946.57 556.66,946.57 561.82,946.57 566.98,946.57 572.14,946.57 577.30,946.57 582.46,946.57 587.62,946.57 592.78,946.57 597.94,946.57 603.10,946.57 608.26,946.57 613.42,946.57 618.58,946.57 623.74,946.57 628.90,946.57 634.06,946.57 639.22,946.57 644.38,946.57 649.54,946.57 654.70,946.57 659.86,946.57 665.02,946.57 670.18,946.57 675.34,946.57 680.50,946.57 685.66,946.57 690.82,946.57 695.98,946.57 701.14,946.57 706.30,946.57 711.46,946.57 716.62,946.57 721.78,946.57 726.94,946.57 732.10,946.57 737.26,946.57 742.42,946.57 747.58,946.57 752.74,946.57 757.90,946.57 763.06,946.57 768.22,946.57 773.38,946.57 778.54,946.57 783.70,946.57 788.86,946.57 794.02,946.57 799.18,946.57 804.34,946.57 809.50,946.57 814.66,946.57 819.82,946.57 824.98,946.57 830.14,946.57 835.30,946.57 840.46,946.57 845.62,946.57 850.78,946.57 855.94,946.57 861.10,946.57 866.26,946.57 871.42,946.57 876.58,946.57 881.74,946.57 886.90,946.57 892.06,946.57 897.22,946.57 902.38,946.57 907.54,946.57 912.70,946.57 917.86,946.57 923.02,946.57 928.18,946.57 933.34,946.57 938.50,946.57 943.66,946.57 948.82,946.57 953.98,946.57 959.14,946.57 964.30,946.57 969.46,946.57 974.62,946.57 979.78,946.57 984.94,946.57 990.10,946.57 995.26,946.57 1000.42,946.57 1005.58,946.57 1010.74,946.57 1015.90,946.57 1021.06,946.57 1026.22,946.57 1031.38,946.57 1036.54,946.57 1041.70,946.57 1046.86,946.57 1052.02,946.57 1052.02,948.8"/><polyline fill="none" stroke="#419341" stroke-width="0.6" stroke-opacity="0.75" points="422.50,812.66 427.66,872.72 432.82,879.04 437.98,879.19 443.14,812.66 448.30,872.72 453.46,879.04 458.62,879.19 463.78,812.66 468.94,872.72 474.10,879.04 479.26,879.19 484.42,812.66 489.58,872.72 494.74,879.04 499.90,879.19 505.06,812.66 510.22,872.72 515.38,879.04 520.54,879.19 525.70,812.66 530.86,872.72 536.02,879.04 541.18,879.19 546.34,812.66 551.50,872.72 556.66,879.04 561.82,879.19 566.98,812.66 572.14,872.72 577.30,879.04 582.46,879.19 587.62,812.66 592.78,872.72 597.94,879.04 603.10,879.19 608.26,812.66 613.42,872.72 618.58,879.04 623.74,879.19 628.90,812.66 634.06,872.72 639.22,879.04 644.38,879.19 649.54,812.66 654.70,872.72 659.86,879.04 665.02,879.19 670.18,812.66 675.34,872.72 680.50,879.04 685.66,879.19 690.82,812.66 695.98,872.72 701.14,879.04 706.30,879.19 711.46,812.66 716.62,872.72 721.78,879.04 726.94,879.19 732.10,812.66 737.26,872.72 742.42,879.04 747.58,879.19 752.74,812.66 757.90,872.72 763.06,879.04 768.22,879.19 773.38,812.66 778.54,872.72 783.70,879.04 788.86,879.19 794.02,812.66 799.18,872.72 804.34,879.04 809.50,879.19 814.66,812.66 819.82,872.72 824.98,879.04 830.14,879.19 835.30,812.66 840.46,872.72 845.62,879.04 850.78,879.19 855.94,812.66 861.10,872.72 866.26,879.04 871.42,879.19 876.58,812.66 881.74,872.72 886.90,879.04 892.06,879.19 897.22,812.66 902.38,872.72 907.54,879.04 912.70,879.19 917.86,812.66 923.02,872.72 928.18,879.04 933.34,879.19 938.50,812.66 943.66,872.72 948.82,879.04 953.98,879.19 959.14,812.66 964.30,872.72 969.46,879.04 974.62,879.19 979.78,812.66 984.94,872.72 990.10,879.04 995.26,879.19 1000.42,812.66 1005.58,872.72 1010.74,879.04 1015.90,879.19 1021.06,812.66 1026.22,872.72 1031.38,879.04 1036.54,879.19 1041.70,812.66 1046.86,872.72 1052.02,879.04"/><polyline fill="none" stroke="#cc7b7b" stroke-width="0.6" stroke-opacity="0.75" points="422.50,888.12 427.66,890.28 432.82,889.66 437.98,889.36 443.14,888.12 448.30,890.28 453.46,889.66 458.62,889.36 463.78,888.12 468.94,890.28 474.10,889.66 479.26,889.36 484.42,888.12 489.58,890.28 494.74,889.66 499.90,889.36 505.06,888.12 510.22,890.28 515.38,889.66 520.54,889.36 525.70,888.12 530.86,890.28 536.02,889.66 541.18,889.36 546.34,888.12 551.50,890.28 556.66,889.66 561.82,889.36 566.98,888.12 572.14,890.28 577.30,889.66 582.46,889.36 587.62,888.12 592.78,890.28 597.94,889.66 603.10,889.36 608.26,888.12 613.42,890.28 618.58,889.66 623.74,889.36 628.90,888.12 634.06,890.28 639.22,889.66 644.38,889.36 649.54,888.12 654.70,890.28 659.86,889.66 665.02,889.36 670.18,888.12 675.34,890.28 680.50,889.66 685.66,889.36 690.82,888.12 695.98,890.28 701.14,889.66 706.30,889.36 711.46,888.12 716.62,890.28 721.78,889.66 726.94,889.36 732.10,888.12 737.26,890.28 742.42,889.66 747.58,889.36 752.74,888.12 757.90,890.28 763.06,889.66 768.22,889.36 773.38,888.12 778.54,890.28 783.70,889.66 788.86,889.36 794.02,888.12 799.18,890.28 804.34,889.66 809.50,889.36 814.66,888.12 819.82,890.28 824.98,889.66 830.14,889.36 835.30,888.12 840.46,890.28 845.62,889.66 850.78,889.36 855.94,888.12 861.10,890.28 866.26,889.66 871.42,889.36 876.58,888.12 881.74,890.28 886.90,889.66 892.06,889.36 897.22,888.12 902.38,890.28 907.54,889.66 912.70,889.36 917.86,888.12 923.02,890.28 928.18,889.66 933.34,889.36 938.50,888.12 943.66,890.28 948.82,889.66 953.98,889.36 959.14,888.12 964.30,890.28 969.46,889.66 974.62,889.36 979.78,888.12 984.94,890.28 990.10,889.66 995.26,889.36 1000.42,888.12 1005.58,890.28 1010.74,889.66 1015.90,889.36 1021.06,888.12 1026.22,890.28 1031.38,889.66 1036.54,889.36 1041.70,888.12 1046.86,890.28 1052.02,889.66"/><polyline fill="none" stroke="#bba950" stroke-width="0.6" stroke-opacity="0.75" points="422.50,900.14 427.66,900.14 432.82,900.14 437.98,900.14 443.14,900.14 448.30,900.14 453.46,900.14 458.62,900.14 463.78,900.14 468.94,900.14 474.10,900.14 479.26,900.14 484.42,900.14 489.58,900.14 494.74,900.14 499.90,900.14 505.06,900.14 510.22,900.14 515.38,900.14 520.54,900.14 525.70,900.14 530.86,900.14 536.02,900.14 541.18,900.14 546.34,900.14 551.50,900.14 556.66,900.14 561.82,900.14 566.98,900.14 572.14,900.14 577.30,900.14 582.46,900.14 587.62,900.14 592.78,900.14 597.94,900.14 603.10,900.14 608.26,900.14 613.42,900.14 618.58,900.14 623.74,900.14 628.90,900.14 634.06,900.14 639.22,900.14 644.38,900.14 649.54,900.14 654.70,900.14 659.86,900.14 665.02,900.14 670.18,900.14 675.34,900.14 680.50,900.14 685.66,900.14 690.82,900.14 695.98,900.14 701.14,900.14 706.30,900.14 711.46,900.14 716.62,900.14 721.78,900.14 726.94,900.14 732.10,900.14 737.26,900.14 742.42,900.14 747.58,900.14 752.74,900.14 757.90,900.14 763.06,900.14 768.22,900.14 773.38,900.14 778.54,900.14 783.70,900.14 788.86,900.14 794.02,900.14 799.18,900.14 804.34,900.14 809.50,900.14 814.66,900.14 819.82,900.14 824.98,900.14 830.14,900.14 835.30,900.14 840.46,900.14 845.62,900.14 850.78,900.14 855.94,900.14 861.10,900.14 866.26,900.14 871.42,900.14 876.58,900.14 881.74,900.14 886.90,900.14 892.06,900.14 897.22,900.14 902.38,900.14 907.54,900.14 912.70,900.14 917.86,900.14 923.02,900.14 928.18,900.14 933.34,900.14 938.50,900.14 943.66,900.14 948.82,900.14 953.98,900.14 959.14,900.14 964.30,900.14 969.46,900.14 974.62,900.14 979.78,900.14 984.94,900.14 990.10,900.14 995.26,900.14 1000.42,900.14 1005.58,900.14 1010.74,900.14 1015.90,900.14 1021.06,900.14 1026.22,900.14 1031.38,900.14 1036.54,900.14 1041.70,900.14 1046.86,900.14 1052.02,900.14"/><polyline fill="none" stroke="#bd8451" stroke-width="0.6" stroke-opacity="0.75" points="422.50,909.45 427.66,909.45 432.82,909.45 437.98,909.45 443.14,909.45 448.30,909.45 453.46,909.45 458.62,909.45 463.78,909.45 468.94,909.45 474.10,909.45 479.26,909.45 484.42,909.45 489.58,909.45 494.74,909.45 499.90,909.45 505.06,909.45 510.22,909.45 515.38,909.45 520.54,909.45 525.70,909.45 530.86,909.45 536.02,909.45 541.18,909.45 546.34,909.45 551.50,909.45 556.66,909.45 561.82,909.45 566.98,909.45 572.14,909.45 577.30,909.45 582.46,909.45 587.62,909.45 592.78,909.45 597.94,909.45 603.10,909.45 608.26,909.45 613.42,909.45 618.58,909.45 623.74,909.45 628.90,909.45 634.06,909.45 639.22,909.45 644.38,909.45 649.54,909.45 654.70,909.45 659.86,909.45 665.02,909.45 670.18,909.45 675.34,909.45 680.50,909.45 685.66,909.45 690.82,909.45 695.98,909.45 701.14,909.45 706.30,909.45 711.46,909.45 716.62,909.45 721.78,909.45 726.94,909.45 732.10,909.45 737.26,909.45 742.42,909.45 747.58,909.45 752.74,909.45 757.90,909.45 763.06,909.45 768.22,909.45 773.38,909.45 778.54,909.45 783.70,909.45 788.86,909.45 794.02,909.45 799.18,909.45 804.34,909.45 809.50,909.45 814.66,909.45 819.82,909.45 824.98,909.45 830.14,909.45 835.30,909.45 840.46,909.45 845.62,909.45 850.78,909.45 855.94,909.45 861.10,909.45 866.26,909.45 871.42,909.45 876.58,909.45 881.74,909.45 886.90,909.45 892.06,909.45 897.22,909.45 902.38,909.45 907.54,909.45 912.70,909.45 917.86,909.45 923.02,909.45 928.18,909.45 933.34,909.45 938.50,909.45 943.66,909.45 948.82,909.45 953.98,909.45 959.14,909.45 964.30,909.45 969.46,909.45 974.62,909.45 979.78,909.45 984.94,909.45 990.10,909.45 995.26,909.45 1000.42,909.45 1005.58,909.45 1010.74,909.45 1015.90,909.45 1021.06,909.45 1026.22,909.45 1031.38,909.45 1036.54,909.45 1041.70,909.45 1046.86,909.45 1052.02,909.45"/><polyline fill="none" stroke="#bcb555" stroke-width="0.6" stroke-opacity="0.75" points="422.50,917.69 427.66,917.69 432.82,917.69 437.98,917.69 443.14,917.69 448.30,917.69 453.46,917.69 458.62,917.69 463.78,917.69 468.94,917.69 474.10,917.69 479.26,917.69 484.42,917.69 489.58,917.69 494.74,917.69 499.90,917.69 505.06,917.69 510.22,917.69 515.38,917.69 520.54,917.69 525.70,917.69 530.86,917.69 536.02,917.69 541.18,917.69 546.34,917.69 551.50,917.69 556.66,917.69 561.82,917.69 566.98,917.69 572.14,917.69 577.30,917.69 582.46,917.69 587.62,917.69 592.78,917.69 597.94,917.69 603.10,917.69 608.26,917.69 613.42,917.69 618.58,917.69 623.74,917.69 628.90,917.69 634.06,917.69 639.22,917.69 644.38,917.69 649.54,917.69 654.70,917.69 659.86,917.69 665.02,917.69 670.18,917.69 675.34,917.69 680.50,917.69 685.66,917.69 690.82,917.69 695.98,917.69 701.14,917.69 706.30,917.69 711.46,917.69 716.62,917.69 721.78,917.69 726.94,917.69 732.10,917.69 737.26,917.69 742.42,917.69 747.58,917.69 752.74,917.69 757.90,917.69 763.06,917.69 768.22,917.69 773.38,917.69 778.54,917.69 783.70,917.69 788.86,917.69 794.02,917.69 799.18,917.69 804.34,917.69 809.50,917.69 814.66,917.69 819.82,917.69 824.98,917.69 830.14,917.69 835.30,917.69 840.46,917.69 845.62,917.69 850.78,917.69 855.94,917.69 861.10,917.69 866.26,917.69 871.42,917.69 876.58,917.69 881.74,917.69 886.90,917.69 892.06,917.69 897.22,917.69 902.38,917.69 907.54,917.69 912.70,917.69 917.86,917.69 923.02,917.69 928.18,917.69 933.34,917.69 938.50,917.69 943.66,917.69 948.82,917.69 953.98,917.69 959.14,917.69 964.30,917.69 969.46,917.69 974.62,917.69 979.78,917.69 984.94,917.69 990.10,917.69 995.26,917.69 1000.42,917.69 1005.58,917.69 1010.74,917.69 1015.90,917.69 1021.06,917.69 1026.22,917.69 1031.38,917.69 1036.54,917.69 1041.70,917.69 1046.86,917.69 1052.02,917.69"/><polyline fill="none" stroke="#307070" stroke-width="0.6" stroke-opacity="0.75" points="422.50,925.16 427.66,925.16 432.82,925.16 437.98,925.16 443.14,925.16 448.30,925.16 453.46,925.16 458.62,925.16 463.78,925.16 468.94,925.16 474.10,925.16 479.26,925.16 484.42,925.16 489.58,925.16 494.74,925.16 499.90,925.16 505.06,925.16 510.22,925.16 515.38,925.16 520.54,925.16 525.70,925.16 530.86,925.16 536.02,925.16 541.18,925.16 546.34,925.16 551.50,925.16 556.66,925.16 561.82,925.16 566.98,925.16 572.14,925.16 577.30,925.16 582.46,925.16 587.62,925.16 592.78,925.16 597.94,925.16 603.10,925.16 608.26,925.16 613.42,925.16 618.58,925.16 623.74,925.16 628.90,925.16 634.06,925.16 639.22,925.16 644.38,925.16 649.54,925.16 654.70,925.16 659.86,925.16 665.02,925.16 670.18,925.16 675.34,925.16 680.50,925.16 685.66,925.16 690.82,925.16 695.98,925.16 701.14,925.16 706.30,925.16 711.46,925.16 716.62,925.16 721.78,925.16 726.94,925.16 732.10,925.16 737.26,925.16 742.42,925.16 747.58,925.16 752.74,925.16 757.90,925.16 763.06,925.16 768.22,925.16 773.38,925.16 778.54,925.16 783.70,925.16 788.86,925.16 794.02,925.16 799.18,925.16 804.34,925.16 809.50,925.16 814.66,925.16 819.82,925.16 824.98,925.16 830.14,925.16 835.30,925.16 840.46,925.16 845.62,925.16 850.78,925.16 855.94,925.16 861.10,925.16 866.26,925.16 871.42,925.16 876.58,925.16 881.74,925.16 886.90,925.16 892.06,925.16 897.22,925.16 902.38,925.16 907.54,925.16 912.70,925.16 917.86,925.16 923.02,925.16 928.18,925.16 933.34,925.16 938.50,925.16 943.66,925.16 948.82,925.16 953.98,925.16 959.14,925.16 964.30,925.16 969.46,925.16 974.62,925.16 979.78,925.16 984.94,925.16 990.10,925.16 995.26,925.16 1000.42,925.16 1005.58,925.16 1010.74,925.16 1015.90,925.16 1021.06,925.16 1026.22,925.16 1031.38,925.16 1036.54,925.16 1041.70,925.16 1046.86,925.16 1052.02,925.16"/><polyline fill="none" stroke="#514083" stroke-width="0.6" stroke-opacity="0.75" points="422.50,929.78 427.66,929.78 432.82,929.78 437.98,929.78 443.14,929.78 448.30,929.78 453.46,929.78 458.62,929.78 463.78,929.78 468.94,929.78 474.10,929.78 479.26,929.78 484.42,929.78 489.58,929.78 494.74,929.78 499.90,929.78 505.06,929.78 510.22,929.78 515.38,929.78 520.54,929.78 525.70,929.78 530.86,929.78 536.02,929.78 541.18,929.78 546.34,929.78 551.50,929.78 556.66,929.78 561.82,929.78 566.98,929.78 572.14,929.78 577.30,929.78 582.46,929.78 587.62,929.78 592.78,929.78 597.94,929.78 603.10,929.78 608.26,929.78 613.42,929.78 618.58,929.78 623.74,929.78 628.90,929.78 634.06,929.78 639.22,929.78 644.38,929.78 649.54,929.78 654.70,929.78 659.86,929.78 665.02,929.78 670.18,929.78 675.34,929.78 680.50,929.78 685.66,929.78 690.82,929.78 695.98,929.78 701.14,929.78 706.30,929.78 711.46,929.78 716.62,929.78 721.78,929.78 726.94,929.78 732.10,929.78 737.26,929.78 742.42,929.78 747.58,929.78 752.74,929.78 757.90,929.78 763.06,929.78 768.22,929.78 773.38,929.78 778.54,929.78 783.70,929.78 788.86,929.78 794.02,929.78 799.18,929.78 804.34,929.78 809.50,929.78 814.66,929.78 819.82,929.78 824.98,929.78 830.14,929.78 835.30,929.78 840.46,929.78 845.62,929.78 850.78,929.78 855.94,929.78 861.10,929.78 866.26,929.78 871.42,929.78 876.58,929.78 881.74,929.78 886.90,929.78 892.06,929.78 897.22,929.78 902.38,929.78 907.54,929.78 912.70,929.78 917.86,929.78 923.02,929.78 928.18,929.78 933.34,929.78 938.50,929.78 943.66,929.78 948.82,929.78 953.98,929.78 959.14,929.78 964.30,929.78 969.46,929.78 974.62,929.78 979.78,929.78 984.94,929.78 990.10,929.78 995.26,929.78 1000.42,929.78 1005.58,929.78 1010.74,929.78 1015.90,929.78 1021.06,929.78 1026.22,929.78 1031.38,929.78 1036.54,929.78 1041.70,929.78 1046.86,929.78 1052.02,929.78"/><polyline fill="none" stroke="#b06991" stroke-width="0.6" stroke-opacity="0.75" points="422.50,934.02 427.66,934.02 432.82,934.02 437.98,934.02 443.14,934.02 448.30,934.02 453.46,934.02 458.62,934.02 463.78,934.02 468.94,934.02 474.10,934.02 479.26,934.02 484.42,934.02 489.58,934.02 494.74,934.02 499.90,934.02 505.06,934.02 510.22,934.02 515.38,934.02 520.54,934.02 525.70,934.02 530.86,934.02 536.02,934.02 541.18,934.02 546.34,934.02 551.50,934.02 556.66,934.02 561.82,934.02 566.98,934.02 572.14,934.02 577.30,934.02 582.46,934.02 587.62,934.02 592.78,934.02 597.94,934.02 603.10,934.02 608.26,934.02 613.42,934.02 618.58,934.02 623.74,934.02 628.90,934.02 634.06,934.02 639.22,934.02 644.38,934.02 649.54,934.02 654.70,934.02 659.86,934.02 665.02,934.02 670.18,934.02 675.34,934.02 680.50,934.02 685.66,934.02 690.82,934.02 695.98,934.02 701.14,934.02 706.30,934.02 711.46,934.02 716.62,934.02 721.78,934.02 726.94,934.02 732.10,934.02 737.26,934.02 742.42,934.02 747.58,934.02 752.74,934.02 757.90,934.02 763.06,934.02 768.22,934.02 773.38,934.02 778.54,934.02 783.70,934.02 788.86,934.02 794.02,934.02 799.18,934.02 804.34,934.02 809.50,934.02 814.66,934.02 819.82,934.02 824.98,934.02 830.14,934.02 835.30,934.02 840.46,934.02 845.62,934.02 850.78,934.02 855.94,934.02 861.10,934.02 866.26,934.02 871.42,934.02 876.58,934.02 881.74,934.02 886.90,934.02 892.06,934.02 897.22,934.02 902.38,934.02 907.54,934.02 912.70,934.02 917.86,934.02 923.02,934.02 928.18,934.02 933.34,934.02 938.50,934.02 943.66,934.02 948.82,934.02 953.98,934.02 959.14,934.02 964.30,934.02 969.46,934.02 974.62,934.02 979.78,934.02 984.94,934.02 990.10,934.02 995.26,934.02 1000.42,934.02 1005.58,934.02 1010.74,934.02 1015.90,934.02 1021.06,934.02 1026.22,934.02 1031.38,934.02 1036.54,934.02 1041.70,934.02 1046.86,934.02 1052.02,934.02"/></g></svg>
<span class="t" style="left:441.83px;top:950.84px;font-size:12px;line-height:14px;color:#e4e4e4;">07</span>
<span class="t" style="left:585.83px;top:950.84px;font-size:12px;line-height:14px;color:#e4e4e4;">14</span>
<span class="t" style="left:730.33px;top:950.84px;font-size:12px;line-height:14px;color:#e4e4e4;">21</span>
<span class="t" style="left:874.83px;top:950.84px;font-size:12px;line-height:14px;color:#e4e4e4;">28</span>
<span class="t" style="left:1018.93px;top:950.84px;font-size:12px;line-height:14px;color:#e4e4e4;">05</span>
<span class="t" style="left:429.33px;top:942.44px;font-size:12px;line-height:14px;color:#e4e4e4;">0</span>
<span class="t" style="left:419.32px;top:864.44px;font-size:12px;line-height:14px;color:#e4e4e4;">0.5</span>
<span class="t" style="left:429.33px;top:787.24px;font-size:12px;line-height:14px;color:#e4e4e4;">1</span>
<span class="t" style="left:419.32px;top:710.04px;font-size:12px;line-height:14px;color:#e4e4e4;">1.5</span>
<span class="t" style="left:667.50px;top:661.41px;font-size:17px;line-height:20px;color:#e4e4e4;letter-spacing:0.790px;">Last month</span>
<svg width="1824" height="1143"><g stroke="#4a4a4a" stroke-width="1" shape-rendering="crispEdges"><line x1="1226.5" y1="692" x2="1226.5" y2="948.2"/><line x1="1328.8" y1="692" x2="1328.8" y2="948.2"/><line x1="1428.3" y1="692" x2="1428.3" y2="948.2"/><line x1="1531.5" y1="692" x2="1531.5" y2="948.2"/><line x1="1634.2" y1="692" x2="1634.2" y2="948.2"/><line x1="1738.5" y1="692" x2="1738.5" y2="948.2"/><line x1="1184" y1="851.2" x2="1797.6" y2="851.2"/><line x1="1184" y1="754.3" x2="1797.6" y2="754.3"/><line x1="1184" y1="948.4" x2="1567" y2="948.4" stroke="#5d6a75"/></g><rect x="1566.6" y="946.9" width="231.0" height="1.60" fill="#5a8578"/><rect x="1566.6" y="946.0" width="231.0" height="1.20" fill="#6a6aa8"/><rect x="1566.6" y="944.1" width="231.0" height="2.20" fill="#ec545a"/><rect x="1566.6" y="941.9" width="231.0" height="2.50" fill="#fff0a0"/><rect x="1566.6" y="939.8" width="231.0" height="2.40" fill="#d2ec8a"/><rect x="1566.6" y="937.1" width="231.0" height="3.00" fill="#a276c2"/><rect x="1566.6" y="934.4" width="231.0" height="3.00" fill="#ece06a"/><rect x="1566.6" y="929.9" width="231.0" height="4.80" fill="#dc84b6"/><rect x="1566.6" y="924.8" width="231.0" height="5.40" fill="#6650a4"/><rect x="1566.6" y="919.1" width="231.0" height="6.00" fill="#3d8c8c"/><rect x="1566.6" y="909.7" width="231.0" height="9.70" fill="#ece36b"/><rect x="1566.6" y="899.8" width="231.0" height="10.20" fill="#eda566"/><rect x="1566.6" y="888.2" width="231.0" height="11.90" fill="#ead465"/><rect x="1566.6" y="874.6" width="231.0" height="13.90" fill="#ff9a9a"/><rect x="1566.6" y="838.6" width="231.0" height="36.30" fill="#52b852"/><rect x="1566.6" y="704.8" width="231.0" height="134.10" fill="#ffdf9e"/></svg>
<span class="t" style="left:1214.94px;top:949.90px;font-size:13px;line-height:16px;color:#e4e4e4;">Nov</span>
<span class="t" style="left:1318.32px;top:949.90px;font-size:13px;line-height:16px;color:#e4e4e4;">Jan</span>
<span class="t" style="left:1417.11px;top:949.90px;font-size:13px;line-height:16px;color:#e4e4e4;">Mar</span>
<span class="t" style="left:1519.22px;top:949.90px;font-size:13px;line-height:16px;color:#e4e4e4;">May</span>
<span class="t" style="left:1625.89px;top:949.90px;font-size:13px;line-height:16px;color:#e4e4e4;">Jul</span>
<span class="t" style="left:1726.93px;top:949.90px;font-size:13px;line-height:16px;color:#e4e4e4;">Sep</span>
<span class="t" style="left:1175.33px;top:942.64px;font-size:12px;line-height:14px;color:#e4e4e4;">0</span>
<span class="t" style="left:1165.32px;top:845.04px;font-size:12px;line-height:14px;color:#e4e4e4;">0.5</span>
<span class="t" style="left:1175.33px;top:748.14px;font-size:12px;line-height:14px;color:#e4e4e4;">1</span>
<span class="t" style="left:1422.50px;top:661.41px;font-size:17px;line-height:20px;color:#e4e4e4;letter-spacing:0.341px;">Last year</span>
<span class="t" style="left:379.2px;top:314.0px;width:60px;height:16px;line-height:16px;font-size:12px;text-align:center;color:#e4e4e4;transform:rotate(-90deg);letter-spacing:0.1px;">CPU core</span>
<span class="t" style="left:1114.8px;top:314.0px;width:60px;height:16px;line-height:16px;font-size:12px;text-align:center;color:#e4e4e4;transform:rotate(-90deg);letter-spacing:0.1px;">CPU core</span>
<span class="t" style="left:369.3px;top:811.0px;width:60px;height:16px;line-height:16px;font-size:12px;text-align:center;color:#e4e4e4;transform:rotate(-90deg);letter-spacing:0.1px;">CPU core</span>
<span class="t" style="left:1114.8px;top:811.0px;width:60px;height:16px;line-height:16px;font-size:12px;text-align:center;color:#e4e4e4;transform:rotate(-90deg);letter-spacing:0.1px;">CPU core</span>
<div class="b" style="left:356px;top:476px;width:712px;height:155px;overflow:hidden;">
<svg width="712" height="175"><g fill="#1e1e1e"><rect x="7.05" y="-0.05" width="692.90" height="1.1"/><rect x="514.85" y="16.95" width="172.30" height="1.1"/><rect x="7.05" y="40.75" width="692.90" height="1.1"/><rect x="7.05" y="58.85" width="680.10" height="1.1"/><rect x="7.05" y="75.65" width="680.10" height="1.1"/><rect x="7.05" y="92.65" width="680.10" height="1.1"/><rect x="7.05" y="109.65" width="680.10" height="1.1"/><rect x="7.05" y="126.65" width="680.10" height="1.1"/><rect x="7.05" y="143.85" width="680.10" height="1.1"/><rect x="7.05" y="160.85" width="680.10" height="1.1"/><rect x="7.05" y="-0.05" width="1.1" height="175.60"/><rect x="299.85" y="-0.05" width="1.1" height="175.60"/><rect x="514.85" y="-0.05" width="1.1" height="175.60"/><rect x="686.05" y="-0.05" width="1.1" height="175.60"/><rect x="535.95" y="16.95" width="1.1" height="158.60"/><rect x="610.85" y="16.95" width="1.1" height="158.60"/><rect x="698.85" y="-0.05" width="1.1" height="41.90"/></g><path d="M265.90 18.80 L275.70 18.80 L270.80 12.85 Z" fill="#c8c8c8"/><path d="M265.90 23.00 L275.70 23.00 L270.80 28.95 Z" fill="#c8c8c8"/><circle cx="285.60" cy="19.60" r="4.1" fill="none" stroke="#c4c4c4" stroke-width="1.15"/><path d="M288.70 22.80 L293.40 27.40" stroke="#c4c4c4" stroke-width="1.3" stroke-linecap="round"/><path d="M480.90 18.80 L490.70 18.80 L485.80 12.85 Z" fill="#c8c8c8"/><path d="M480.90 23.00 L490.70 23.00 L485.80 28.95 Z" fill="#c8c8c8"/><circle cx="500.80" cy="19.60" r="4.1" fill="none" stroke="#c4c4c4" stroke-width="1.15"/><path d="M503.90 22.80 L508.60 27.40" stroke="#c4c4c4" stroke-width="1.3" stroke-linecap="round"/><circle cx="548.60" cy="28.60" r="4.1" fill="none" stroke="#c4c4c4" stroke-width="1.15"/><path d="M551.70 31.80 L556.40 36.40" stroke="#c4c4c4" stroke-width="1.3" stroke-linecap="round"/><path d="M560.00 27.90 L569.80 27.90 L564.90 21.95 Z" fill="#c8c8c8"/><path d="M560.00 32.10 L569.80 32.10 L564.90 38.05 Z" fill="#c8c8c8"/><circle cx="623.60" cy="28.60" r="4.1" fill="none" stroke="#c4c4c4" stroke-width="1.15"/><path d="M626.70 31.80 L631.40 36.40" stroke="#c4c4c4" stroke-width="1.3" stroke-linecap="round"/><path d="M634.90 27.90 L644.70 27.90 L639.80 21.95 Z" fill="#c8c8c8"/><path d="M634.90 32.10 L644.70 32.10 L639.80 38.05 Z" fill="#c8c8c8"/><rect x="520.0" y="44.4" width="12.8" height="12.4" fill="#000"/><rect x="521.0" y="45.4" width="10.8" height="10.4" fill="#ffdf9e"/><rect x="520.0" y="61.8" width="12.8" height="12.4" fill="#000"/><rect x="521.0" y="62.8" width="10.8" height="10.4" fill="#52b852"/><rect x="520.0" y="78.7" width="12.8" height="12.4" fill="#000"/><rect x="521.0" y="79.7" width="10.8" height="10.4" fill="#ff9a9a"/><rect x="520.0" y="95.7" width="12.8" height="12.4" fill="#000"/><rect x="521.0" y="96.7" width="10.8" height="10.4" fill="#ead465"/><rect x="520.0" y="112.7" width="12.8" height="12.4" fill="#000"/><rect x="521.0" y="113.7" width="10.8" height="10.4" fill="#eda566"/><rect x="520.0" y="129.8" width="12.8" height="12.4" fill="#000"/><rect x="521.0" y="130.8" width="10.8" height="10.4" fill="#ece36b"/><rect x="520.0" y="146.9" width="12.8" height="12.4" fill="#000"/><rect x="521.0" y="147.9" width="10.8" height="10.4" fill="#3d8c8c"/></svg>
<span class="t" style="left:13.40px;top:13.72px;font-size:13.5px;line-height:16px;color:#f2f2f2;font-weight:bold;letter-spacing:-0.787px;">LPAR</span>
<span class="t" style="left:305.80px;top:13.72px;font-size:13.5px;line-height:16px;color:#f2f2f2;font-weight:bold;letter-spacing:-0.473px;">Server</span>
<span class="t" style="left:548.80px;top:1.32px;font-size:13.5px;line-height:16px;color:#f2f2f2;font-weight:bold;letter-spacing:-0.596px;">Usage [CPU core]</span>
<span class="t" style="left:573.50px;top:22.52px;font-size:13.5px;line-height:16px;color:#f2f2f2;font-weight:bold;letter-spacing:-0.668px;">Avg</span>
<span class="t" style="left:648.20px;top:22.52px;font-size:13.5px;line-height:16px;color:#f2f2f2;font-weight:bold;letter-spacing:-0.054px;">Max</span>
<span class="t" style="left:15.40px;top:42.12px;font-size:13.8px;line-height:17px;color:#4f94c4;letter-spacing:-0.078px;">nim72</span>
<span class="t" style="left:307.50px;top:42.12px;font-size:13.8px;line-height:17px;color:#4f94c4;letter-spacing:-0.180px;">Power770</span>
<span class="t" style="left:585.47px;top:42.12px;font-size:13.8px;line-height:17px;color:#f2f2f2;letter-spacing:-0.150px;">0.7</span>
<span class="t" style="left:660.27px;top:42.12px;font-size:13.8px;line-height:17px;color:#f2f2f2;letter-spacing:-0.150px;">0.8</span>
<span class="t" style="left:15.40px;top:59.52px;font-size:13.8px;line-height:17px;color:#4f94c4;letter-spacing:-0.224px;">p770-demo</span>
<span class="t" style="left:307.50px;top:59.52px;font-size:13.8px;line-height:17px;color:#4f94c4;letter-spacing:-0.180px;">Power770</span>
<span class="t" style="left:585.47px;top:59.52px;font-size:13.8px;line-height:17px;color:#f2f2f2;letter-spacing:-0.150px;">0.2</span>
<span class="t" style="left:660.27px;top:59.52px;font-size:13.8px;line-height:17px;color:#f2f2f2;letter-spacing:-0.150px;">1.8</span>
<span class="t" style="left:15.40px;top:76.42px;font-size:13.8px;line-height:17px;color:#4f94c4;letter-spacing:-0.268px;">aix71-770</span>
<span class="t" style="left:307.50px;top:76.42px;font-size:13.8px;line-height:17px;color:#4f94c4;letter-spacing:-0.180px;">Power770</span>
<span class="t" style="left:585.47px;top:76.42px;font-size:13.8px;line-height:17px;color:#f2f2f2;letter-spacing:-0.150px;">0.1</span>
<span class="t" style="left:660.27px;top:76.42px;font-size:13.8px;line-height:17px;color:#f2f2f2;letter-spacing:-0.150px;">0.6</span>
<span class="t" style="left:15.40px;top:93.42px;font-size:13.8px;line-height:17px;color:#4f94c4;letter-spacing:-0.268px;">p770-aix3</span>
<span class="t" style="left:307.50px;top:93.42px;font-size:13.8px;line-height:17px;color:#4f94c4;letter-spacing:-0.180px;">Power770</span>
<span class="t" style="left:585.47px;top:93.42px;font-size:13.8px;line-height:17px;color:#f2f2f2;letter-spacing:-0.150px;">0.1</span>
<span class="t" style="left:660.27px;top:93.42px;font-size:13.8px;line-height:17px;color:#f2f2f2;letter-spacing:-0.150px;">0.2</span>
<span class="t" style="left:15.40px;top:110.42px;font-size:13.8px;line-height:17px;color:#4f94c4;letter-spacing:-0.270px;">p10-vios</span>
<span class="t" style="left:307.50px;top:110.42px;font-size:13.8px;line-height:17px;color:#4f94c4;letter-spacing:-0.253px;">Power10</span>
<span class="t" style="left:585.47px;top:110.42px;font-size:13.8px;line-height:17px;color:#f2f2f2;letter-spacing:-0.150px;">0.1</span>
<span class="t" style="left:660.27px;top:110.42px;font-size:13.8px;line-height:17px;color:#f2f2f2;letter-spacing:-0.150px;">0.2</span>
<span class="t" style="left:15.40px;top:127.52px;font-size:13.8px;line-height:17px;color:#4f94c4;letter-spacing:-0.270px;">vios-770</span>
<span class="t" style="left:307.50px;top:127.52px;font-size:13.8px;line-height:17px;color:#4f94c4;letter-spacing:-0.180px;">Power770</span>
<span class="t" style="left:596.67px;top:127.52px;font-size:13.8px;line-height:17px;color:#f2f2f2;letter-spacing:-0.150px;">0</span>
<span class="t" style="left:660.27px;top:127.52px;font-size:13.8px;line-height:17px;color:#f2f2f2;letter-spacing:-0.150px;">0.1</span>
<span class="t" style="left:15.40px;top:144.62px;font-size:13.8px;line-height:17px;color:#4f94c4;letter-spacing:-0.579px;">aix1</span>
<span class="t" style="left:307.50px;top:144.62px;font-size:13.8px;line-height:17px;color:#4f94c4;letter-spacing:-0.180px;">Power770</span>
<span class="t" style="left:596.67px;top:144.62px;font-size:13.8px;line-height:17px;color:#f2f2f2;letter-spacing:-0.150px;">0</span>
<span class="t" style="left:660.27px;top:144.62px;font-size:13.8px;line-height:17px;color:#f2f2f2;letter-spacing:-0.150px;">0.1</span>
</div>
<div class="b" style="left:1101px;top:476px;width:712px;height:155px;overflow:hidden;">
<svg width="712" height="175"><g fill="#1e1e1e"><rect x="8.05" y="-0.05" width="691.90" height="1.1"/><rect x="515.85" y="16.95" width="171.30" height="1.1"/><rect x="8.05" y="40.75" width="691.90" height="1.1"/><rect x="8.05" y="58.85" width="679.10" height="1.1"/><rect x="8.05" y="75.65" width="679.10" height="1.1"/><rect x="8.05" y="92.65" width="679.10" height="1.1"/><rect x="8.05" y="109.65" width="679.10" height="1.1"/><rect x="8.05" y="126.65" width="679.10" height="1.1"/><rect x="8.05" y="143.85" width="679.10" height="1.1"/><rect x="8.05" y="160.85" width="679.10" height="1.1"/><rect x="8.05" y="-0.05" width="1.1" height="175.60"/><rect x="300.85" y="-0.05" width="1.1" height="175.60"/><rect x="515.85" y="-0.05" width="1.1" height="175.60"/><rect x="686.05" y="-0.05" width="1.1" height="175.60"/><rect x="536.45" y="16.95" width="1.1" height="158.60"/><rect x="610.85" y="16.95" width="1.1" height="158.60"/><rect x="698.85" y="-0.05" width="1.1" height="41.90"/></g><path d="M266.90 18.80 L276.70 18.80 L271.80 12.85 Z" fill="#c8c8c8"/><path d="M266.90 23.00 L276.70 23.00 L271.80 28.95 Z" fill="#c8c8c8"/><circle cx="286.60" cy="19.60" r="4.1" fill="none" stroke="#c4c4c4" stroke-width="1.15"/><path d="M289.70 22.80 L294.40 27.40" stroke="#c4c4c4" stroke-width="1.3" stroke-linecap="round"/><path d="M481.90 18.80 L491.70 18.80 L486.80 12.85 Z" fill="#c8c8c8"/><path d="M481.90 23.00 L491.70 23.00 L486.80 28.95 Z" fill="#c8c8c8"/><circle cx="501.80" cy="19.60" r="4.1" fill="none" stroke="#c4c4c4" stroke-width="1.15"/><path d="M504.90 22.80 L509.60 27.40" stroke="#c4c4c4" stroke-width="1.3" stroke-linecap="round"/><circle cx="548.60" cy="28.60" r="4.1" fill="none" stroke="#c4c4c4" stroke-width="1.15"/><path d="M551.70 31.80 L556.40 36.40" stroke="#c4c4c4" stroke-width="1.3" stroke-linecap="round"/><path d="M560.00 27.90 L569.80 27.90 L564.90 21.95 Z" fill="#c8c8c8"/><path d="M560.00 32.10 L569.80 32.10 L564.90 38.05 Z" fill="#c8c8c8"/><circle cx="623.60" cy="28.60" r="4.1" fill="none" stroke="#c4c4c4" stroke-width="1.15"/><path d="M626.70 31.80 L631.40 36.40" stroke="#c4c4c4" stroke-width="1.3" stroke-linecap="round"/><path d="M634.90 27.90 L644.70 27.90 L639.80 21.95 Z" fill="#c8c8c8"/><path d="M634.90 32.10 L644.70 32.10 L639.80 38.05 Z" fill="#c8c8c8"/><rect x="520.0" y="44.4" width="12.8" height="12.4" fill="#000"/><rect x="521.0" y="45.4" width="10.8" height="10.4" fill="#ffdf9e"/><rect x="520.0" y="61.8" width="12.8" height="12.4" fill="#000"/><rect x="521.0" y="62.8" width="10.8" height="10.4" fill="#52b852"/><rect x="520.0" y="78.7" width="12.8" height="12.4" fill="#000"/><rect x="521.0" y="79.7" width="10.8" height="10.4" fill="#ff9a9a"/><rect x="520.0" y="95.7" width="12.8" height="12.4" fill="#000"/><rect x="521.0" y="96.7" width="10.8" height="10.4" fill="#ead465"/><rect x="520.0" y="112.7" width="12.8" height="12.4" fill="#000"/><rect x="521.0" y="113.7" width="10.8" height="10.4" fill="#eda566"/><rect x="520.0" y="129.8" width="12.8" height="12.4" fill="#000"/><rect x="521.0" y="130.8" width="10.8" height="10.4" fill="#ece36b"/><rect x="520.0" y="146.9" width="12.8" height="12.4" fill="#000"/><rect x="521.0" y="147.9" width="10.8" height="10.4" fill="#3d8c8c"/></svg>
<span class="t" style="left:14.40px;top:13.72px;font-size:13.5px;line-height:16px;color:#f2f2f2;font-weight:bold;letter-spacing:-0.787px;">LPAR</span>
<span class="t" style="left:306.80px;top:13.72px;font-size:13.5px;line-height:16px;color:#f2f2f2;font-weight:bold;letter-spacing:-0.473px;">Server</span>
<span class="t" style="left:548.80px;top:1.32px;font-size:13.5px;line-height:16px;color:#f2f2f2;font-weight:bold;letter-spacing:-0.596px;">Usage [CPU core]</span>
<span class="t" style="left:573.50px;top:22.52px;font-size:13.5px;line-height:16px;color:#f2f2f2;font-weight:bold;letter-spacing:-0.668px;">Avg</span>
<span class="t" style="left:648.20px;top:22.52px;font-size:13.5px;line-height:16px;color:#f2f2f2;font-weight:bold;letter-spacing:-0.054px;">Max</span>
<span class="t" style="left:16.40px;top:42.12px;font-size:13.8px;line-height:17px;color:#4f94c4;letter-spacing:-0.078px;">nim72</span>
<span class="t" style="left:308.50px;top:42.12px;font-size:13.8px;line-height:17px;color:#4f94c4;letter-spacing:-0.180px;">Power770</span>
<span class="t" style="left:585.47px;top:42.12px;font-size:13.8px;line-height:17px;color:#f2f2f2;letter-spacing:-0.150px;">0.7</span>
<span class="t" style="left:660.27px;top:42.12px;font-size:13.8px;line-height:17px;color:#f2f2f2;letter-spacing:-0.150px;">0.7</span>
<span class="t" style="left:16.40px;top:59.52px;font-size:13.8px;line-height:17px;color:#4f94c4;letter-spacing:-0.224px;">p770-demo</span>
<span class="t" style="left:308.50px;top:59.52px;font-size:13.8px;line-height:17px;color:#4f94c4;letter-spacing:-0.180px;">Power770</span>
<span class="t" style="left:585.47px;top:59.52px;font-size:13.8px;line-height:17px;color:#f2f2f2;letter-spacing:-0.150px;">0.2</span>
<span class="t" style="left:660.27px;top:59.52px;font-size:13.8px;line-height:17px;color:#f2f2f2;letter-spacing:-0.150px;">1.4</span>
<span class="t" style="left:16.40px;top:76.42px;font-size:13.8px;line-height:17px;color:#4f94c4;letter-spacing:-0.268px;">aix71-770</span>
<span class="t" style="left:308.50px;top:76.42px;font-size:13.8px;line-height:17px;color:#4f94c4;letter-spacing:-0.180px;">Power770</span>
<span class="t" style="left:585.47px;top:76.42px;font-size:13.8px;line-height:17px;color:#f2f2f2;letter-spacing:-0.150px;">0.1</span>
<span class="t" style="left:660.27px;top:76.42px;font-size:13.8px;line-height:17px;color:#f2f2f2;letter-spacing:-0.150px;">0.2</span>
<span class="t" style="left:16.40px;top:93.42px;font-size:13.8px;line-height:17px;color:#4f94c4;letter-spacing:-0.268px;">p770-aix3</span>
<span class="t" style="left:308.50px;top:93.42px;font-size:13.8px;line-height:17px;color:#4f94c4;letter-spacing:-0.180px;">Power770</span>
<span class="t" style="left:585.47px;top:93.42px;font-size:13.8px;line-height:17px;color:#f2f2f2;letter-spacing:-0.150px;">0.1</span>
<span class="t" style="left:660.27px;top:93.42px;font-size:13.8px;line-height:17px;color:#f2f2f2;letter-spacing:-0.150px;">0.1</span>
<span class="t" style="left:16.40px;top:110.42px;font-size:13.8px;line-height:17px;color:#4f94c4;letter-spacing:-0.270px;">p10-vios</span>
<span class="t" style="left:308.50px;top:110.42px;font-size:13.8px;line-height:17px;color:#4f94c4;letter-spacing:-0.253px;">Power10</span>
<span class="t" style="left:585.47px;top:110.42px;font-size:13.8px;line-height:17px;color:#f2f2f2;letter-spacing:-0.150px;">0.1</span>
<span class="t" style="left:660.27px;top:110.42px;font-size:13.8px;line-height:17px;color:#f2f2f2;letter-spacing:-0.150px;">0.1</span>
<span class="t" style="left:16.40px;top:127.52px;font-size:13.8px;line-height:17px;color:#4f94c4;letter-spacing:-0.270px;">vios-770</span>
<span class="t" style="left:308.50px;top:127.52px;font-size:13.8px;line-height:17px;color:#4f94c4;letter-spacing:-0.180px;">Power770</span>
<span class="t" style="left:596.67px;top:127.52px;font-size:13.8px;line-height:17px;color:#f2f2f2;letter-spacing:-0.150px;">0</span>
<span class="t" style="left:671.47px;top:127.52px;font-size:13.8px;line-height:17px;color:#f2f2f2;letter-spacing:-0.150px;">0</span>
<span class="t" style="left:16.40px;top:144.62px;font-size:13.8px;line-height:17px;color:#4f94c4;letter-spacing:-0.579px;">aix1</span>
<span class="t" style="left:308.50px;top:144.62px;font-size:13.8px;line-height:17px;color:#4f94c4;letter-spacing:-0.180px;">Power770</span>
<span class="t" style="left:596.67px;top:144.62px;font-size:13.8px;line-height:17px;color:#f2f2f2;letter-spacing:-0.150px;">0</span>
<span class="t" style="left:671.47px;top:144.62px;font-size:13.8px;line-height:17px;color:#f2f2f2;letter-spacing:-0.150px;">0</span>
</div>
<div class="b" style="left:356px;top:973px;width:712px;height:155px;overflow:hidden;">
<svg width="712" height="175"><g fill="#1e1e1e"><rect x="7.05" y="0.05" width="692.90" height="1.1"/><rect x="514.85" y="17.65" width="172.30" height="1.1"/><rect x="7.05" y="41.55" width="692.90" height="1.1"/><rect x="7.05" y="58.80" width="680.10" height="1.1"/><rect x="7.05" y="75.95" width="680.10" height="1.1"/><rect x="7.05" y="93.05" width="680.10" height="1.1"/><rect x="7.05" y="110.75" width="680.10" height="1.1"/><rect x="7.05" y="127.90" width="680.10" height="1.1"/><rect x="7.05" y="144.95" width="680.10" height="1.1"/><rect x="7.05" y="162.15" width="680.10" height="1.1"/><rect x="7.05" y="0.05" width="1.1" height="175.50"/><rect x="299.85" y="0.05" width="1.1" height="175.50"/><rect x="514.85" y="0.05" width="1.1" height="175.50"/><rect x="686.05" y="0.05" width="1.1" height="175.50"/><rect x="535.95" y="17.65" width="1.1" height="157.90"/><rect x="610.85" y="17.65" width="1.1" height="157.90"/><rect x="698.85" y="0.05" width="1.1" height="42.60"/></g><path d="M265.90 19.40 L275.70 19.40 L270.80 13.45 Z" fill="#c8c8c8"/><path d="M265.90 23.60 L275.70 23.60 L270.80 29.55 Z" fill="#c8c8c8"/><circle cx="285.60" cy="20.20" r="4.1" fill="none" stroke="#c4c4c4" stroke-width="1.15"/><path d="M288.70 23.40 L293.40 28.00" stroke="#c4c4c4" stroke-width="1.3" stroke-linecap="round"/><path d="M480.90 19.40 L490.70 19.40 L485.80 13.45 Z" fill="#c8c8c8"/><path d="M480.90 23.60 L490.70 23.60 L485.80 29.55 Z" fill="#c8c8c8"/><circle cx="500.80" cy="20.20" r="4.1" fill="none" stroke="#c4c4c4" stroke-width="1.15"/><path d="M503.90 23.40 L508.60 28.00" stroke="#c4c4c4" stroke-width="1.3" stroke-linecap="round"/><circle cx="548.60" cy="29.20" r="4.1" fill="none" stroke="#c4c4c4" stroke-width="1.15"/><path d="M551.70 32.40 L556.40 37.00" stroke="#c4c4c4" stroke-width="1.3" stroke-linecap="round"/><path d="M560.00 28.50 L569.80 28.50 L564.90 22.55 Z" fill="#c8c8c8"/><path d="M560.00 32.70 L569.80 32.70 L564.90 38.65 Z" fill="#c8c8c8"/><circle cx="623.60" cy="29.20" r="4.1" fill="none" stroke="#c4c4c4" stroke-width="1.15"/><path d="M626.70 32.40 L631.40 37.00" stroke="#c4c4c4" stroke-width="1.3" stroke-linecap="round"/><path d="M634.90 28.50 L644.70 28.50 L639.80 22.55 Z" fill="#c8c8c8"/><path d="M634.90 32.70 L644.70 32.70 L639.80 38.65 Z" fill="#c8c8c8"/><rect x="520.0" y="44.7" width="12.8" height="12.4" fill="#000"/><rect x="521.0" y="45.7" width="10.8" height="10.4" fill="#ffdf9e"/><rect x="520.0" y="61.9" width="12.8" height="12.4" fill="#000"/><rect x="521.0" y="62.9" width="10.8" height="10.4" fill="#52b852"/><rect x="520.0" y="79.0" width="12.8" height="12.4" fill="#000"/><rect x="521.0" y="80.0" width="10.8" height="10.4" fill="#ff9a9a"/><rect x="520.0" y="96.4" width="12.8" height="12.4" fill="#000"/><rect x="521.0" y="97.4" width="10.8" height="10.4" fill="#ead465"/><rect x="520.0" y="113.9" width="12.8" height="12.4" fill="#000"/><rect x="521.0" y="114.9" width="10.8" height="10.4" fill="#eda566"/><rect x="520.0" y="131.0" width="12.8" height="12.4" fill="#000"/><rect x="521.0" y="132.0" width="10.8" height="10.4" fill="#ece36b"/><rect x="520.0" y="148.1" width="12.8" height="12.4" fill="#000"/><rect x="521.0" y="149.1" width="10.8" height="10.4" fill="#3d8c8c"/></svg>
<span class="t" style="left:13.40px;top:14.32px;font-size:13.5px;line-height:16px;color:#f2f2f2;font-weight:bold;letter-spacing:-0.787px;">LPAR</span>
<span class="t" style="left:305.80px;top:14.32px;font-size:13.5px;line-height:16px;color:#f2f2f2;font-weight:bold;letter-spacing:-0.473px;">Server</span>
<span class="t" style="left:548.80px;top:1.92px;font-size:13.5px;line-height:16px;color:#f2f2f2;font-weight:bold;letter-spacing:-0.596px;">Usage [CPU core]</span>
<span class="t" style="left:573.50px;top:23.12px;font-size:13.5px;line-height:16px;color:#f2f2f2;font-weight:bold;letter-spacing:-0.668px;">Avg</span>
<span class="t" style="left:648.20px;top:23.12px;font-size:13.5px;line-height:16px;color:#f2f2f2;font-weight:bold;letter-spacing:-0.054px;">Max</span>
<span class="t" style="left:15.40px;top:42.44px;font-size:13.8px;line-height:17px;color:#4f94c4;letter-spacing:-0.078px;">nim72</span>
<span class="t" style="left:307.50px;top:42.44px;font-size:13.8px;line-height:17px;color:#4f94c4;letter-spacing:-0.180px;">Power770</span>
<span class="t" style="left:585.47px;top:42.44px;font-size:13.8px;line-height:17px;color:#f2f2f2;letter-spacing:-0.150px;">0.7</span>
<span class="t" style="left:660.27px;top:42.44px;font-size:13.8px;line-height:17px;color:#f2f2f2;letter-spacing:-0.150px;">0.7</span>
<span class="t" style="left:15.40px;top:59.64px;font-size:13.8px;line-height:17px;color:#4f94c4;letter-spacing:-0.224px;">p770-demo</span>
<span class="t" style="left:307.50px;top:59.64px;font-size:13.8px;line-height:17px;color:#4f94c4;letter-spacing:-0.180px;">Power770</span>
<span class="t" style="left:585.47px;top:59.64px;font-size:13.8px;line-height:17px;color:#f2f2f2;letter-spacing:-0.150px;">0.2</span>
<span class="t" style="left:660.27px;top:59.64px;font-size:13.8px;line-height:17px;color:#f2f2f2;letter-spacing:-0.150px;">0.5</span>
<span class="t" style="left:15.40px;top:76.77px;font-size:13.8px;line-height:17px;color:#4f94c4;letter-spacing:-0.268px;">aix71-770</span>
<span class="t" style="left:307.50px;top:76.77px;font-size:13.8px;line-height:17px;color:#4f94c4;letter-spacing:-0.180px;">Power770</span>
<span class="t" style="left:585.47px;top:76.77px;font-size:13.8px;line-height:17px;color:#f2f2f2;letter-spacing:-0.150px;">0.1</span>
<span class="t" style="left:660.27px;top:76.77px;font-size:13.8px;line-height:17px;color:#f2f2f2;letter-spacing:-0.150px;">0.1</span>
<span class="t" style="left:15.40px;top:94.17px;font-size:13.8px;line-height:17px;color:#4f94c4;letter-spacing:-0.268px;">p770-aix3</span>
<span class="t" style="left:307.50px;top:94.17px;font-size:13.8px;line-height:17px;color:#4f94c4;letter-spacing:-0.180px;">Power770</span>
<span class="t" style="left:585.47px;top:94.17px;font-size:13.8px;line-height:17px;color:#f2f2f2;letter-spacing:-0.150px;">0.1</span>
<span class="t" style="left:660.27px;top:94.17px;font-size:13.8px;line-height:17px;color:#f2f2f2;letter-spacing:-0.150px;">0.1</span>
<span class="t" style="left:15.40px;top:111.59px;font-size:13.8px;line-height:17px;color:#4f94c4;letter-spacing:-0.270px;">p10-vios</span>
<span class="t" style="left:307.50px;top:111.59px;font-size:13.8px;line-height:17px;color:#4f94c4;letter-spacing:-0.253px;">Power10</span>
<span class="t" style="left:585.47px;top:111.59px;font-size:13.8px;line-height:17px;color:#f2f2f2;letter-spacing:-0.150px;">0.1</span>
<span class="t" style="left:660.27px;top:111.59px;font-size:13.8px;line-height:17px;color:#f2f2f2;letter-spacing:-0.150px;">0.1</span>
<span class="t" style="left:15.40px;top:128.69px;font-size:13.8px;line-height:17px;color:#4f94c4;letter-spacing:-0.270px;">vios-770</span>
<span class="t" style="left:307.50px;top:128.69px;font-size:13.8px;line-height:17px;color:#4f94c4;letter-spacing:-0.180px;">Power770</span>
<span class="t" style="left:596.67px;top:128.69px;font-size:13.8px;line-height:17px;color:#f2f2f2;letter-spacing:-0.150px;">0</span>
<span class="t" style="left:671.47px;top:128.69px;font-size:13.8px;line-height:17px;color:#f2f2f2;letter-spacing:-0.150px;">0</span>
<span class="t" style="left:15.40px;top:145.82px;font-size:13.8px;line-height:17px;color:#4f94c4;letter-spacing:-0.579px;">aix1</span>
<span class="t" style="left:307.50px;top:145.82px;font-size:13.8px;line-height:17px;color:#4f94c4;letter-spacing:-0.180px;">Power770</span>
<span class="t" style="left:596.67px;top:145.82px;font-size:13.8px;line-height:17px;color:#f2f2f2;letter-spacing:-0.150px;">0</span>
<span class="t" style="left:671.47px;top:145.82px;font-size:13.8px;line-height:17px;color:#f2f2f2;letter-spacing:-0.150px;">0</span>
</div>
<div class="b" style="left:1101px;top:973px;width:712px;height:155px;overflow:hidden;">
<svg width="712" height="175"><g fill="#1e1e1e"><rect x="8.05" y="0.05" width="691.90" height="1.1"/><rect x="515.85" y="17.65" width="171.30" height="1.1"/><rect x="8.05" y="41.55" width="691.90" height="1.1"/><rect x="8.05" y="58.80" width="679.10" height="1.1"/><rect x="8.05" y="75.95" width="679.10" height="1.1"/><rect x="8.05" y="93.05" width="679.10" height="1.1"/><rect x="8.05" y="110.75" width="679.10" height="1.1"/><rect x="8.05" y="127.90" width="679.10" height="1.1"/><rect x="8.05" y="144.95" width="679.10" height="1.1"/><rect x="8.05" y="162.15" width="679.10" height="1.1"/><rect x="8.05" y="0.05" width="1.1" height="175.50"/><rect x="300.85" y="0.05" width="1.1" height="175.50"/><rect x="515.85" y="0.05" width="1.1" height="175.50"/><rect x="686.05" y="0.05" width="1.1" height="175.50"/><rect x="536.45" y="17.65" width="1.1" height="157.90"/><rect x="610.85" y="17.65" width="1.1" height="157.90"/><rect x="698.85" y="0.05" width="1.1" height="42.60"/></g><path d="M266.90 19.40 L276.70 19.40 L271.80 13.45 Z" fill="#c8c8c8"/><path d="M266.90 23.60 L276.70 23.60 L271.80 29.55 Z" fill="#c8c8c8"/><circle cx="286.60" cy="20.20" r="4.1" fill="none" stroke="#c4c4c4" stroke-width="1.15"/><path d="M289.70 23.40 L294.40 28.00" stroke="#c4c4c4" stroke-width="1.3" stroke-linecap="round"/><path d="M481.90 19.40 L491.70 19.40 L486.80 13.45 Z" fill="#c8c8c8"/><path d="M481.90 23.60 L491.70 23.60 L486.80 29.55 Z" fill="#c8c8c8"/><circle cx="501.80" cy="20.20" r="4.1" fill="none" stroke="#c4c4c4" stroke-width="1.15"/><path d="M504.90 23.40 L509.60 28.00" stroke="#c4c4c4" stroke-width="1.3" stroke-linecap="round"/><circle cx="548.60" cy="29.20" r="4.1" fill="none" stroke="#c4c4c4" stroke-width="1.15"/><path d="M551.70 32.40 L556.40 37.00" stroke="#c4c4c4" stroke-width="1.3" stroke-linecap="round"/><path d="M560.00 28.50 L569.80 28.50 L564.90 22.55 Z" fill="#c8c8c8"/><path d="M560.00 32.70 L569.80 32.70 L564.90 38.65 Z" fill="#c8c8c8"/><circle cx="623.60" cy="29.20" r="4.1" fill="none" stroke="#c4c4c4" stroke-width="1.15"/><path d="M626.70 32.40 L631.40 37.00" stroke="#c4c4c4" stroke-width="1.3" stroke-linecap="round"/><path d="M634.90 28.50 L644.70 28.50 L639.80 22.55 Z" fill="#c8c8c8"/><path d="M634.90 32.70 L644.70 32.70 L639.80 38.65 Z" fill="#c8c8c8"/><rect x="520.0" y="44.7" width="12.8" height="12.4" fill="#000"/><rect x="521.0" y="45.7" width="10.8" height="10.4" fill="#ffdf9e"/><rect x="520.0" y="61.9" width="12.8" height="12.4" fill="#000"/><rect x="521.0" y="62.9" width="10.8" height="10.4" fill="#52b852"/><rect x="520.0" y="79.0" width="12.8" height="12.4" fill="#000"/><rect x="521.0" y="80.0" width="10.8" height="10.4" fill="#ff9a9a"/><rect x="520.0" y="96.4" width="12.8" height="12.4" fill="#000"/><rect x="521.0" y="97.4" width="10.8" height="10.4" fill="#ead465"/><rect x="520.0" y="113.9" width="12.8" height="12.4" fill="#000"/><rect x="521.0" y="114.9" width="10.8" height="10.4" fill="#eda566"/><rect x="520.0" y="131.0" width="12.8" height="12.4" fill="#000"/><rect x="521.0" y="132.0" width="10.8" height="10.4" fill="#ece36b"/><rect x="520.0" y="148.1" width="12.8" height="12.4" fill="#000"/><rect x="521.0" y="149.1" width="10.8" height="10.4" fill="#3d8c8c"/></svg>
<span class="t" style="left:14.40px;top:14.32px;font-size:13.5px;line-height:16px;color:#f2f2f2;font-weight:bold;letter-spacing:-0.787px;">LPAR</span>
<span class="t" style="left:306.80px;top:14.32px;font-size:13.5px;line-height:16px;color:#f2f2f2;font-weight:bold;letter-spacing:-0.473px;">Server</span>
<span class="t" style="left:548.80px;top:1.92px;font-size:13.5px;line-height:16px;color:#f2f2f2;font-weight:bold;letter-spacing:-0.596px;">Usage [CPU core]</span>
<span class="t" style="left:573.50px;top:23.12px;font-size:13.5px;line-height:16px;color:#f2f2f2;font-weight:bold;letter-spacing:-0.668px;">Avg</span>
<span class="t" style="left:648.20px;top:23.12px;font-size:13.5px;line-height:16px;color:#f2f2f2;font-weight:bold;letter-spacing:-0.054px;">Max</span>
<span class="t" style="left:16.40px;top:42.44px;font-size:13.8px;line-height:17px;color:#4f94c4;letter-spacing:-0.078px;">nim72</span>
<span class="t" style="left:308.50px;top:42.44px;font-size:13.8px;line-height:17px;color:#4f94c4;letter-spacing:-0.180px;">Power770</span>
<span class="t" style="left:585.47px;top:42.44px;font-size:13.8px;line-height:17px;color:#f2f2f2;letter-spacing:-0.150px;">0.3</span>
<span class="t" style="left:660.27px;top:42.44px;font-size:13.8px;line-height:17px;color:#f2f2f2;letter-spacing:-0.150px;">0.7</span>
<span class="t" style="left:16.40px;top:59.64px;font-size:13.8px;line-height:17px;color:#4f94c4;letter-spacing:-0.224px;">p770-demo</span>
<span class="t" style="left:308.50px;top:59.64px;font-size:13.8px;line-height:17px;color:#4f94c4;letter-spacing:-0.180px;">Power770</span>
<span class="t" style="left:585.47px;top:59.64px;font-size:13.8px;line-height:17px;color:#f2f2f2;letter-spacing:-0.150px;">0.1</span>
<span class="t" style="left:660.27px;top:59.64px;font-size:13.8px;line-height:17px;color:#f2f2f2;letter-spacing:-0.150px;">0.2</span>
<span class="t" style="left:16.40px;top:76.77px;font-size:13.8px;line-height:17px;color:#4f94c4;letter-spacing:-0.268px;">aix71-770</span>
<span class="t" style="left:308.50px;top:76.77px;font-size:13.8px;line-height:17px;color:#4f94c4;letter-spacing:-0.180px;">Power770</span>
<span class="t" style="left:596.67px;top:76.77px;font-size:13.8px;line-height:17px;color:#f2f2f2;letter-spacing:-0.150px;">0</span>
<span class="t" style="left:660.27px;top:76.77px;font-size:13.8px;line-height:17px;color:#f2f2f2;letter-spacing:-0.150px;">0.1</span>
<span class="t" style="left:16.40px;top:94.17px;font-size:13.8px;line-height:17px;color:#4f94c4;letter-spacing:-0.268px;">p770-aix3</span>
<span class="t" style="left:308.50px;top:94.17px;font-size:13.8px;line-height:17px;color:#4f94c4;letter-spacing:-0.180px;">Power770</span>
<span class="t" style="left:596.67px;top:94.17px;font-size:13.8px;line-height:17px;color:#f2f2f2;letter-spacing:-0.150px;">0</span>
<span class="t" style="left:660.27px;top:94.17px;font-size:13.8px;line-height:17px;color:#f2f2f2;letter-spacing:-0.150px;">0.1</span>
<span class="t" style="left:16.40px;top:111.59px;font-size:13.8px;line-height:17px;color:#4f94c4;letter-spacing:-0.270px;">p10-vios</span>
<span class="t" style="left:308.50px;top:111.59px;font-size:13.8px;line-height:17px;color:#4f94c4;letter-spacing:-0.253px;">Power10</span>
<span class="t" style="left:596.67px;top:111.59px;font-size:13.8px;line-height:17px;color:#f2f2f2;letter-spacing:-0.150px;">0</span>
<span class="t" style="left:660.27px;top:111.59px;font-size:13.8px;line-height:17px;color:#f2f2f2;letter-spacing:-0.150px;">0.1</span>
<span class="t" style="left:16.40px;top:128.69px;font-size:13.8px;line-height:17px;color:#4f94c4;letter-spacing:-0.270px;">vios-770</span>
<span class="t" style="left:308.50px;top:128.69px;font-size:13.8px;line-height:17px;color:#4f94c4;letter-spacing:-0.180px;">Power770</span>
<span class="t" style="left:596.67px;top:128.69px;font-size:13.8px;line-height:17px;color:#f2f2f2;letter-spacing:-0.150px;">0</span>
<span class="t" style="left:671.47px;top:128.69px;font-size:13.8px;line-height:17px;color:#f2f2f2;letter-spacing:-0.150px;">0</span>
<span class="t" style="left:16.40px;top:145.82px;font-size:13.8px;line-height:17px;color:#4f94c4;letter-spacing:-0.579px;">aix1</span>
<span class="t" style="left:308.50px;top:145.82px;font-size:13.8px;line-height:17px;color:#4f94c4;letter-spacing:-0.180px;">Power770</span>
<span class="t" style="left:596.67px;top:145.82px;font-size:13.8px;line-height:17px;color:#f2f2f2;letter-spacing:-0.150px;">0</span>
<span class="t" style="left:671.47px;top:145.82px;font-size:13.8px;line-height:17px;color:#f2f2f2;letter-spacing:-0.150px;">0</span>
</div>
<svg width="1824" height="1143"><g transform="translate(0,0)"><rect x="951.4" y="179.9" width="2.7" height="2.5" fill="#f4f4f4"/><rect x="955.5" y="179.9" width="2.7" height="2.5" fill="#f4f4f4"/><rect x="959.6" y="179.9" width="2.7" height="2.5" fill="#f4f4f4"/><path d="M979.1 174.30 L981.4 171.70 L994.2 171.70 L994.2 176.90 L981.4 176.90 Z" fill="#939393"/><path d="M979.1 181.10 L981.4 178.50 L994.2 178.50 L994.2 183.70 L981.4 183.70 Z" fill="#939393"/><path d="M1007.4 180.4 L1015.9 172.4 L1024.8 180.4" fill="none" stroke="#7a7a7a" stroke-width="1.5" stroke-linejoin="miter"/><path d="M1019.8 172.2 h2.4 v5.2 l-2.4 -2.2 z" fill="#7a7a7a"/><path d="M1009.8 180.2 L1015.9 174.6 L1022.2 180.2 V186 h-4.4 v-4.2 h-3.4 v4.2 h-4.6 z" fill="#7a7a7a"/><polygon points="1045.90,170.50 1048.78,176.14 1055.03,177.13 1050.56,181.61 1051.54,187.87 1045.90,185.00 1040.26,187.87 1041.24,181.61 1036.77,177.13 1043.02,176.14" fill="#7a7a7a" stroke="#7a7a7a" stroke-width="0.8" stroke-linejoin="round"/></g></svg>
<svg width="1824" height="1143"><g transform="translate(746,0)"><rect x="951.4" y="179.9" width="2.7" height="2.5" fill="#f4f4f4"/><rect x="955.5" y="179.9" width="2.7" height="2.5" fill="#f4f4f4"/><rect x="959.6" y="179.9" width="2.7" height="2.5" fill="#f4f4f4"/><path d="M979.1 174.30 L981.4 171.70 L994.2 171.70 L994.2 176.90 L981.4 176.90 Z" fill="#939393"/><path d="M979.1 181.10 L981.4 178.50 L994.2 178.50 L994.2 183.70 L981.4 183.70 Z" fill="#939393"/><path d="M1007.4 180.4 L1015.9 172.4 L1024.8 180.4" fill="none" stroke="#7a7a7a" stroke-width="1.5" stroke-linejoin="miter"/><path d="M1019.8 172.2 h2.4 v5.2 l-2.4 -2.2 z" fill="#7a7a7a"/><path d="M1009.8 180.2 L1015.9 174.6 L1022.2 180.2 V186 h-4.4 v-4.2 h-3.4 v4.2 h-4.6 z" fill="#7a7a7a"/><polygon points="1045.90,170.50 1048.78,176.14 1055.03,177.13 1050.56,181.61 1051.54,187.87 1045.90,185.00 1040.26,187.87 1041.24,181.61 1036.77,177.13 1043.02,176.14" fill="#7a7a7a" stroke="#7a7a7a" stroke-width="0.8" stroke-linejoin="round"/></g></svg>
<svg width="1824" height="1143"><g transform="translate(0,498)"><rect x="951.4" y="179.9" width="2.7" height="2.5" fill="#f4f4f4"/><rect x="955.5" y="179.9" width="2.7" height="2.5" fill="#f4f4f4"/><rect x="959.6" y="179.9" width="2.7" height="2.5" fill="#f4f4f4"/><path d="M979.1 174.30 L981.4 171.70 L994.2 171.70 L994.2 176.90 L981.4 176.90 Z" fill="#939393"/><path d="M979.1 181.10 L981.4 178.50 L994.2 178.50 L994.2 183.70 L981.4 183.70 Z" fill="#939393"/><path d="M1007.4 180.4 L1015.9 172.4 L1024.8 180.4" fill="none" stroke="#7a7a7a" stroke-width="1.5" stroke-linejoin="miter"/><path d="M1019.8 172.2 h2.4 v5.2 l-2.4 -2.2 z" fill="#7a7a7a"/><path d="M1009.8 180.2 L1015.9 174.6 L1022.2 180.2 V186 h-4.4 v-4.2 h-3.4 v4.2 h-4.6 z" fill="#7a7a7a"/><polygon points="1045.90,170.50 1048.78,176.14 1055.03,177.13 1050.56,181.61 1051.54,187.87 1045.90,185.00 1040.26,187.87 1041.24,181.61 1036.77,177.13 1043.02,176.14" fill="#7a7a7a" stroke="#7a7a7a" stroke-width="0.8" stroke-linejoin="round"/></g></svg>
<svg width="1824" height="1143"><g transform="translate(746,498)"><rect x="951.4" y="179.9" width="2.7" height="2.5" fill="#f4f4f4"/><rect x="955.5" y="179.9" width="2.7" height="2.5" fill="#f4f4f4"/><rect x="959.6" y="179.9" width="2.7" height="2.5" fill="#f4f4f4"/><path d="M979.1 174.30 L981.4 171.70 L994.2 171.70 L994.2 176.90 L981.4 176.90 Z" fill="#939393"/><path d="M979.1 181.10 L981.4 178.50 L994.2 178.50 L994.2 183.70 L981.4 183.70 Z" fill="#939393"/><path d="M1007.4 180.4 L1015.9 172.4 L1024.8 180.4" fill="none" stroke="#7a7a7a" stroke-width="1.5" stroke-linejoin="miter"/><path d="M1019.8 172.2 h2.4 v5.2 l-2.4 -2.2 z" fill="#7a7a7a"/><path d="M1009.8 180.2 L1015.9 174.6 L1022.2 180.2 V186 h-4.4 v-4.2 h-3.4 v4.2 h-4.6 z" fill="#7a7a7a"/><polygon points="1045.90,170.50 1048.78,176.14 1055.03,177.13 1050.56,181.61 1051.54,187.87 1045.90,185.00 1040.26,187.87 1041.24,181.61 1036.77,177.13 1043.02,176.14" fill="#7a7a7a" stroke="#7a7a7a" stroke-width="0.8" stroke-linejoin="round"/></g></svg>
<svg width="1824" height="1143"><defs><filter id="glow" x="-10%" y="-40%" width="120%" height="180%"><feMorphology in="SourceAlpha" operator="dilate" radius="2.2" result="d"/><feGaussianBlur in="d" stdDeviation="3.6" result="b"/><feFlood flood-color="#b4b4b4" flood-opacity="0.95"/><feComposite in2="b" operator="in" result="g"/><feMerge><feMergeNode in="g"/><feMergeNode in="SourceGraphic"/></feMerge></filter><linearGradient id="xg" x1="0" y1="0" x2="1" y2="1"><stop offset="0" stop-color="#2383c6"/><stop offset="0.45" stop-color="#3f95d2"/><stop offset="0.6" stop-color="#2383c6"/><stop offset="1" stop-color="#2383c6"/></linearGradient></defs><g filter="url(#glow)"><text x="1429.6" y="51.6" font-family="Liberation Sans, sans-serif" font-weight="bold" font-size="37" textLength="45.5" lengthAdjust="spacingAndGlyphs" fill="#2585c7" stroke="#2585c7" stroke-width="1.2">ES</text><text x="1522.5" y="51.4" font-family="Liberation Sans, sans-serif" font-size="36.5" textLength="281" lengthAdjust="spacingAndGlyphs" fill="#56565b" stroke="#56565b" stroke-width="1.5" stroke-linejoin="round">virtualization</text><text x="1559" y="17.2" font-family="Liberation Sans, sans-serif" font-weight="bold" font-size="12.5" font-style="italic" textLength="94" lengthAdjust="spacingAndGlyphs" fill="#5a5a5e" stroke="#5a5a5e" stroke-width="0.5">www.vladan.fr</text><polygon points="1472.08,6.58 1488.53,6.58 1503.11,24.34 1518.14,6.58 1535.13,6.58 1511.89,35.31 1536.23,65.79 1519.23,65.79 1503.00,45.83 1487.43,65.79 1470.44,65.79 1494.01,35.31" fill="url(#xg)"/></g></svg>
</body></html>
